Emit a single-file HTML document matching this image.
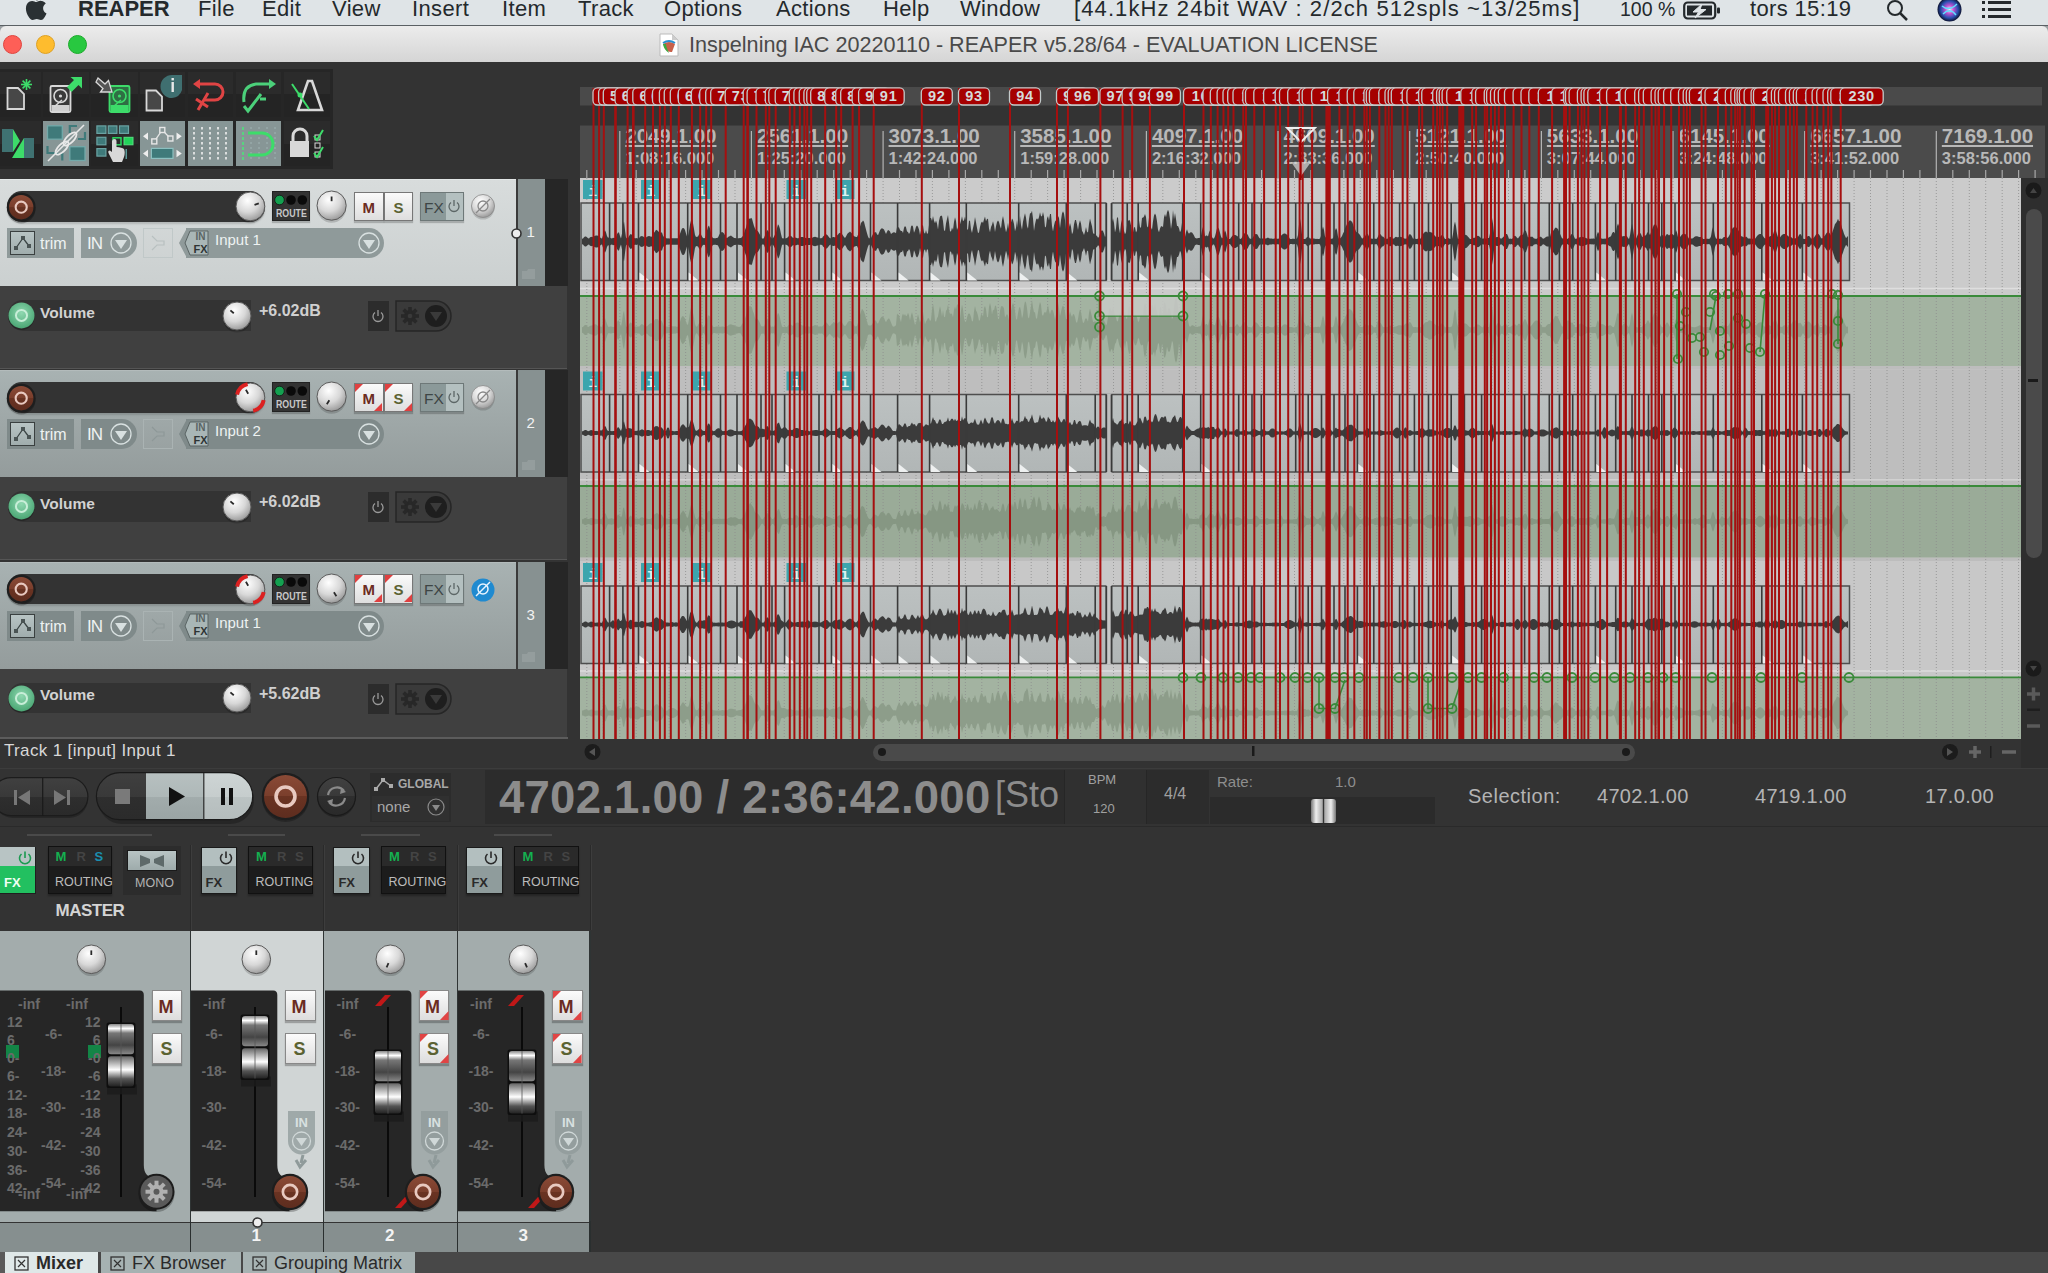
<!DOCTYPE html><html><head><meta charset="utf-8"><style>
*{margin:0;padding:0;box-sizing:border-box}
html,body{width:2048px;height:1273px;overflow:hidden;background:#333333;font-family:"Liberation Sans",sans-serif}
.a{position:absolute}
.t{position:absolute;white-space:nowrap;line-height:1}
</style></head><body><div class="a" style="left:0px;top:0px;width:2048px;height:26px;background:#dfe4e7;border-bottom:1px solid #5a6064"></div>
<svg class="a" style="left:22px;top:-5px" width="26" height="25" viewBox="0 0 20 20"><path d="M16.5 10.6c0-2.6 2.1-3.8 2.2-3.9-1.2-1.8-3.1-2-3.7-2-1.6-.2-3.1.9-3.9.9-.8 0-2-.9-3.3-.9-1.7 0-3.3 1-4.2 2.5-1.8 3.1-.5 7.7 1.3 10.2.9 1.2 1.9 2.6 3.2 2.6 1.3-.1 1.8-.8 3.3-.8s2 .8 3.3.8c1.4 0 2.3-1.3 3.1-2.5 1-1.4 1.4-2.800 1.4-2.9-.1 0-2.700-1-2.700-4z M14 3c.7-.9 1.2-2 1-3.200-1 .1-2.200.7-2.900 1.500-.6.700-1.200 1.900-1 3 1.100.1 2.200-.5 2.900-1.300z" fill="#2a3033"/></svg>
<div class="t" style="left:78px;top:-2px;font-size:22px;color:#24292c;font-weight:bold;letter-spacing:0px">REAPER</div>
<div class="t" style="left:198px;top:-2px;font-size:22px;color:#24292c;;letter-spacing:0.35px">File</div>
<div class="t" style="left:262px;top:-2px;font-size:22px;color:#24292c;;letter-spacing:0.35px">Edit</div>
<div class="t" style="left:332px;top:-2px;font-size:22px;color:#24292c;;letter-spacing:0.35px">View</div>
<div class="t" style="left:412px;top:-2px;font-size:22px;color:#24292c;;letter-spacing:0.35px">Insert</div>
<div class="t" style="left:502px;top:-2px;font-size:22px;color:#24292c;;letter-spacing:0.35px">Item</div>
<div class="t" style="left:578px;top:-2px;font-size:22px;color:#24292c;;letter-spacing:0.35px">Track</div>
<div class="t" style="left:664px;top:-2px;font-size:22px;color:#24292c;;letter-spacing:0.35px">Options</div>
<div class="t" style="left:776px;top:-2px;font-size:22px;color:#24292c;;letter-spacing:0.35px">Actions</div>
<div class="t" style="left:883px;top:-2px;font-size:22px;color:#24292c;;letter-spacing:0.35px">Help</div>
<div class="t" style="left:960px;top:-2px;font-size:22px;color:#24292c;;letter-spacing:0.35px">Window</div>
<div class="t" style="left:1074px;top:-2px;font-size:22px;color:#24292c;;letter-spacing:1.1px">[44.1kHz 24bit WAV : 2/2ch 512spls ~13/25ms]</div>
<div class="t" style="left:1620px;top:-2px;font-size:22px;color:#24292c;font-size:19.5px;top:0px;letter-spacing:0px">100 %</div>
<div class="t" style="left:1750px;top:-2px;font-size:22px;color:#24292c;;letter-spacing:0.35px">tors 15:19</div>
<svg class="a" style="left:1683px;top:1px" width="40" height="20"><rect x="1.2" y="1.5" width="31" height="16" rx="3.5" fill="none" stroke="#24292c" stroke-width="2.2"/><rect x="34" y="6.5" width="3" height="6" rx="1" fill="#24292c"/><rect x="4" y="4.5" width="25" height="10" fill="#24292c"/><path d="M19 3 L10 11 L15.5 11 L12 17 L23 8.5 L17 8.5 Z" fill="#dfe4e7" stroke="#dfe4e7" stroke-width="1"/></svg>
<svg class="a" style="left:1885px;top:0px" width="26" height="22"><circle cx="10" cy="8" r="7" fill="none" stroke="#24292c" stroke-width="2"/><line x1="15" y1="13" x2="22" y2="20" stroke="#24292c" stroke-width="2.5"/></svg>
<svg class="a" style="left:1937px;top:-2px" width="26" height="24"><defs><radialGradient id="sg" cx="0.5" cy="0.5" r="0.5"><stop offset="0" stop-color="#e8f0ff"/><stop offset="0.35" stop-color="#c050d0"/><stop offset="0.7" stop-color="#2a50b0"/><stop offset="1" stop-color="#0c1230"/></radialGradient></defs><circle cx="12.5" cy="11.5" r="12" fill="url(#sg)"/><path d="M5 8 Q12 14 20 6 M6 16 Q13 9 19 17" fill="none" stroke="#60e0ff" stroke-width="1.4"/></svg>
<svg class="a" style="left:1982px;top:0px" width="30" height="22"><g fill="#24292c"><rect x="0" y="1" width="3" height="3"/><rect x="6" y="1" width="23" height="3"/><rect x="0" y="8" width="3" height="3"/><rect x="6" y="8" width="23" height="3"/><rect x="0" y="15" width="3" height="3"/><rect x="6" y="15" width="23" height="3"/></g></svg>
<div class="a" style="left:0px;top:26px;width:2048px;height:6px;background:#9a9fa2"></div>
<div class="a" style="left:0px;top:26px;width:2048px;height:36px;background:linear-gradient(#ececec,#d5d5d5);border-top-left-radius:6px;border-top-right-radius:6px"></div>
<div class="a" style="left:3.1999999999999993px;top:35.2px;width:19px;height:19px;background:#fe5f57;border-radius:50%;border:0.5px solid #e0443e"></div>
<div class="a" style="left:35.5px;top:35.2px;width:19px;height:19px;background:#febc2e;border-radius:50%;border:0.5px solid #dea123"></div>
<div class="a" style="left:67.5px;top:35.2px;width:19px;height:19px;background:#28c840;border-radius:50%;border:0.5px solid #1aab29"></div>
<svg class="a" style="left:659px;top:33px" width="20" height="24"><path d="M1 1 H13 L19 7 V23 H1 Z" fill="#fff" stroke="#bbb"/><path d="M13 1 V7 H19" fill="#ccc"/><path d="M4 11 Q10 7 16 11 L13 19 Q7 20 4 11Z" fill="#c8604a"/><path d="M4 11 Q5 17 10 20 Q7 14 7 11Z" fill="#3aaa40"/><path d="M4 10 Q10 6 16 10" stroke="#2a90d0" stroke-width="2" fill="none"/></svg>
<div class="t" style="left:689px;top:34px;font-size:21.6px;color:#4a4a4a;">Inspelning IAC 20220110 - REAPER v5.28/64 - EVALUATION LICENSE</div>
<div class="a" style="left:0px;top:62px;width:2048px;height:706px;background:#333333"></div>
<div class="a" style="left:0px;top:69px;width:333px;height:100px;background:#262626"></div>
<div class="a" style="left:0px;top:71.6px;width:41px;height:45.7px;background:linear-gradient(#2b2b2b 0%,#2b2b2b 50%,#242424 50%,#242424 100%)"></div>
<div class="a" style="left:43px;top:71.6px;width:45.8px;height:45.7px;background:linear-gradient(#2b2b2b 0%,#2b2b2b 50%,#242424 50%,#242424 100%)"></div>
<div class="a" style="left:91px;top:71.6px;width:46.80000000000001px;height:45.7px;background:linear-gradient(#2b2b2b 0%,#2b2b2b 50%,#242424 50%,#242424 100%)"></div>
<div class="a" style="left:140px;top:71.6px;width:45px;height:45.7px;background:linear-gradient(#2b2b2b 0%,#2b2b2b 50%,#242424 50%,#242424 100%)"></div>
<div class="a" style="left:187.6px;top:71.6px;width:45.400000000000006px;height:45.7px;background:linear-gradient(#2b2b2b 0%,#2b2b2b 50%,#242424 50%,#242424 100%)"></div>
<div class="a" style="left:235.7px;top:71.6px;width:45.69999999999999px;height:45.7px;background:linear-gradient(#2b2b2b 0%,#2b2b2b 50%,#242424 50%,#242424 100%)"></div>
<div class="a" style="left:283.5px;top:71.6px;width:46.80000000000001px;height:45.7px;background:linear-gradient(#2b2b2b 0%,#2b2b2b 50%,#242424 50%,#242424 100%)"></div>
<div class="a" style="left:0px;top:120.6px;width:41px;height:45.599999999999994px;background:linear-gradient(#2b2b2b 0%,#2b2b2b 50%,#242424 50%,#242424 100%)"></div>
<div class="a" style="left:43px;top:120.6px;width:45.8px;height:45.599999999999994px;background:#879696"></div>
<div class="a" style="left:91px;top:120.6px;width:46.80000000000001px;height:45.599999999999994px;background:linear-gradient(#2b2b2b 0%,#2b2b2b 50%,#242424 50%,#242424 100%)"></div>
<div class="a" style="left:140px;top:120.6px;width:45px;height:45.599999999999994px;background:#879696"></div>
<div class="a" style="left:187.6px;top:120.6px;width:45.400000000000006px;height:45.599999999999994px;background:#879696"></div>
<div class="a" style="left:235.7px;top:120.6px;width:45.69999999999999px;height:45.599999999999994px;background:#879696"></div>
<div class="a" style="left:283.5px;top:120.6px;width:46.80000000000001px;height:45.599999999999994px;background:linear-gradient(#2b2b2b 0%,#2b2b2b 50%,#242424 50%,#242424 100%)"></div>
<svg class="a" style="left:0px;top:72px" width="41" height="46"><path d="M7.5 16 H18 L24 22 V37 H7.5 Z" fill="#474747" stroke="#d8d8d8" stroke-width="1.8"/><g stroke="#3ddc6a" stroke-width="1.6"><line x1="26.5" y1="7" x2="26.5" y2="18"/><line x1="21" y1="12.5" x2="32" y2="12.5"/><line x1="22.6" y1="8.6" x2="30.4" y2="16.4"/><line x1="30.4" y1="8.6" x2="22.6" y2="16.4"/></g></svg>
<svg class="a" style="left:43px;top:72px" width="46" height="46"><rect x="7.5" y="14" width="20" height="26" rx="1.5" fill="#3a3a3a" stroke="#d8d8d8" stroke-width="1.8"/><rect x="8.5" y="33" width="18" height="6" fill="#d0d0d0"/><circle cx="17.5" cy="24" r="6.5" fill="none" stroke="#d8d8d8" stroke-width="1.6"/><circle cx="17.5" cy="24" r="1.6" fill="#d8d8d8"/><line x1="11" y1="35" x2="19" y2="28" stroke="#d8d8d8" stroke-width="1.6"/><path d="M24 15 L31 8 L27.5 5 L39 5 L39 16.5 L35.5 13 L28.5 20 Z" fill="#3ddc6a"/></svg>
<svg class="a" style="left:91px;top:72px" width="47" height="46"><rect x="18.5" y="14" width="20" height="26" rx="1.5" fill="#2f6e44" stroke="#3ddc6a" stroke-width="1.8"/><rect x="19.5" y="33" width="18" height="6" fill="#3ddc6a"/><circle cx="28.5" cy="24" r="6.5" fill="none" stroke="#3ddc6a" stroke-width="1.6"/><circle cx="28.5" cy="24" r="1.6" fill="#3ddc6a"/><line x1="22" y1="35" x2="30" y2="28" stroke="#3ddc6a" stroke-width="1.6"/><path d="M7 6 L14 12 L17.5 8.5 L21 20 L9.5 20 L12 16.5 L5 10 Z" fill="#555" stroke="#d8d8d8" stroke-width="1.3"/></svg>
<svg class="a" style="left:140px;top:72px" width="46" height="46"><path d="M6.5 18.5 H16 L22 24.5 V38.5 H6.5 Z" fill="#474747" stroke="#d8d8d8" stroke-width="1.8"/><path d="M32 3 H42 V18 A11.5 11.5 0 0 1 32 26 A11.5 11.5 0 0 1 32 3 Z" fill="#3f6f70"/><rect x="31.5" y="10" width="2.4" height="10" fill="#e8e8e8"/><rect x="31.5" y="6" width="2.4" height="2.4" fill="#e8e8e8"/></svg>
<svg class="a" style="left:188px;top:72px" width="45" height="46"><path d="M9 12 H27 A8 8 0 0 1 27 28 H17" fill="none" stroke="#e04444" stroke-width="3"/><path d="M5 12 L12 7 L12 17 Z" fill="#e04444"/><path d="M10 38 L20 21 M8 27 L20 35" stroke="#e04444" stroke-width="3"/></svg>
<svg class="a" style="left:236px;top:72px" width="45" height="46"><path d="M8 30 Q6 14 20 12 H36" fill="none" stroke="#4bd07a" stroke-width="3"/><path d="M40 12 L33 7 L33 17 Z" fill="#4bd07a"/><path d="M8 34 L12 39 L25 22" fill="none" stroke="#4bd07a" stroke-width="3"/><line x1="24" y1="27" x2="30" y2="27" stroke="#4bd07a" stroke-width="3"/></svg>
<svg class="a" style="left:284px;top:72px" width="46" height="46"><path d="M14 38 L24 9 H28 L38 38 Z" fill="none" stroke="#d8d8d8" stroke-width="2.6"/><line x1="8" y1="12" x2="25" y2="37" stroke="#3ddc6a" stroke-width="2"/><circle cx="16" cy="23" r="2.5" fill="#3ddc6a"/></svg>
<svg class="a" style="left:0px;top:121px" width="41" height="46"><rect x="2" y="8" width="11" height="23" fill="#3f7272"/><path d="M13 8 L20 20 L13 31 Z" fill="#3ddc6a"/><rect x="24" y="17" width="10" height="20" fill="#3f7272"/><path d="M24 17 L24 37 L12 37 Z" fill="#3ddc6a"/></svg>
<svg class="a" style="left:43px;top:121px" width="46" height="46"><rect x="4.5" y="4.8" width="14.8" height="13.4" fill="#3f7a7a" stroke="#72a9a9" stroke-width="1.3"/><rect x="26.8" y="25.7" width="15.2" height="13.8" fill="#3f7a7a" stroke="#72a9a9" stroke-width="1.3"/><path d="M26.8 12 V5 H34 M42 11 V18 H35 M4.5 25 V32 H12 M19.3 39.5 V33 H13" fill="none" stroke="#3f7a7a" stroke-width="2.2"/><g fill="none" stroke="#e8e8e8" stroke-width="1.8"><ellipse cx="19" cy="27" rx="3.6" ry="8.5" transform="rotate(45 19 27)"/><ellipse cx="27" cy="18" rx="3.6" ry="8.5" transform="rotate(45 27 18)"/></g><line x1="5" y1="40" x2="41" y2="4" stroke="#e8e8e8" stroke-width="1.6"/></svg>
<svg class="a" style="left:91px;top:121px" width="47" height="46"><g fill="#3f7a7a" stroke="#6aa3a3" stroke-width="1.2"><rect x="5.9" y="4.9" width="9" height="7.5"/><rect x="17.3" y="4.9" width="8.6" height="7.5"/><rect x="28.5" y="4.9" width="9" height="7.5"/><rect x="5.9" y="16.3" width="9" height="7.5"/><rect x="5.9" y="27.6" width="9" height="7.5"/></g><rect x="22" y="16.8" width="8" height="7" fill="none" stroke="#2ad860" stroke-width="1.5"/><rect x="33" y="16.3" width="9" height="7.5" fill="#22d45a" stroke="#55e080" stroke-width="1"/><path d="M22 41 L17.5 32 Q16.5 29.5 19 29.5 L21 31 L21 20 Q21.5 18 23.5 18 Q25.5 18 25.5 20 L25.5 26 Q31 26.5 33 28 Q34.5 31 33 36 L31 41 Z" fill="#d8d8d8"/><rect x="34.5" y="28" width="1.5" height="10" fill="#5a9a9a"/></svg>
<svg class="a" style="left:140px;top:121px" width="46" height="46"><path d="M14.3 20.4 L22.3 9 L30.4 17.5" fill="none" stroke="#e6e6e6" stroke-width="1.3"/><g fill="#879696" stroke="#e6e6e6" stroke-width="1.4"><rect x="11.8" y="17.9" width="5" height="5"/><rect x="19.8" y="6.5" width="5" height="5"/><rect x="27.9" y="15" width="5" height="5"/></g><path d="M3 15.3 L8 11.5 L8 19Z M41.8 15.3 L36.5 11.5 L36.5 19Z M3 32.5 L8 28.8 L8 36.3Z M41.8 32.5 L36.5 28.8 L36.5 36.3Z" fill="#eeeeee"/><rect x="11.4" y="27.4" width="21.6" height="10" fill="#3f7a7a" stroke="#8cc0c0" stroke-width="1.2"/></svg>
<svg class="a" style="left:188px;top:121px" width="45" height="46"><g stroke="#f0f0f0" stroke-width="1.6" stroke-dasharray="2.5 2.5"><line x1="6" y1="6" x2="6" y2="39"/><line x1="14" y1="6" x2="14" y2="39"/><line x1="22" y1="6" x2="22" y2="39"/><line x1="30" y1="6" x2="30" y2="39"/><line x1="38" y1="6" x2="38" y2="39"/></g></svg>
<svg class="a" style="left:236px;top:121px" width="45" height="46"><line x1="7" y1="6" x2="7" y2="40" stroke="#4be87a" stroke-width="1.5" stroke-dasharray="3 2"/><g stroke="#9fb3b3" stroke-width="1" stroke-dasharray="2 3"><line x1="15" y1="6" x2="15" y2="40"/><line x1="23" y1="6" x2="23" y2="40"/><line x1="31" y1="6" x2="31" y2="40"/><line x1="39" y1="6" x2="39" y2="40"/></g><path d="M12 12 H26 A10 10 0 0 1 26 34 H12" fill="none" stroke="#3ddc6a" stroke-width="3"/></svg>
<svg class="a" style="left:284px;top:121px" width="46" height="46"><path d="M9 20 V15 A7 7 0 0 1 23 15 V20" fill="none" stroke="#d8d8d8" stroke-width="3"/><rect x="6" y="20" width="19" height="16" fill="#d8d8d8"/><g fill="none" stroke="#d8d8d8" stroke-width="1"><rect x="31" y="14" width="5" height="5"/><rect x="31" y="22" width="5" height="5"/><rect x="31" y="31" width="5" height="5"/></g><path d="M30 15 L33 19 L39 9 M30 32 L33 36 L39 26" fill="none" stroke="#3ddc6a" stroke-width="2"/></svg>
<svg width="0" height="0" style="position:absolute"><defs><radialGradient id="kg" cx="0.4" cy="0.3" r="0.8"><stop offset="0" stop-color="#ffffff"/><stop offset="0.5" stop-color="#d8d8d8"/><stop offset="1" stop-color="#8a8a8a"/></radialGradient><linearGradient id="rg" x1="0" y1="0" x2="0" y2="1"><stop offset="0" stop-color="#8a4a36"/><stop offset="0.5" stop-color="#7a3e2c"/><stop offset="0.5" stop-color="#6a3322"/><stop offset="1" stop-color="#5e2d1f"/></linearGradient><radialGradient id="gg" cx="0.5" cy="0.4" r="0.7"><stop offset="0" stop-color="#8fd8b0"/><stop offset="1" stop-color="#3f9e6a"/></radialGradient></defs></svg>
<div class="a" style="left:0px;top:178px;width:568px;height:562px;background:#333"></div>
<div class="a" style="left:0px;top:179px;width:516px;height:107px;background:linear-gradient(#d8dcdc,#cbd0d0);border-top:1px solid #e2e6e6"></div>
<div class="a" style="left:516px;top:179px;width:29px;height:107px;background:#879191;border-left:2px solid #3a3a3a"></div>
<div class="t" style="left:526.5px;top:224px;font-size:15px;color:#f2f2f2;">1</div>
<svg class="a" style="left:521px;top:268px" width="16" height="12"><path d="M1 3 H6 L7 1 H14 V11 H1Z" fill="#9aa3a3" opacity="0.7"/></svg>
<svg class="a" style="left:510px;top:227px" width="13" height="13"><circle cx="6.5" cy="6.5" r="4.5" fill="#eee" stroke="#333" stroke-width="1.6"/></svg>
<div class="a" style="left:545px;top:179px;width:23px;height:107px;background:#262626"></div>
<div class="a" style="left:7px;top:191px;width:258px;height:30.5px;background:#333;border-radius:15px;box-shadow:0 2px 2px rgba(0,0,0,0.15)"></div>
<svg class="a" style="left:6.0px;top:191.5px;overflow:visible" width="30.4" height="32.4"><circle cx="15.2" cy="17.2" r="14.2" fill="rgba(0,0,0,0.25)"/><circle cx="15.2" cy="15.2" r="14.399999999999999" fill="#1e1e1e"/><circle cx="15.2" cy="15.2" r="12.2" fill="url(#rg)"/><circle cx="15.2" cy="15.2" r="5.544" fill="none" stroke="#e8c9c0" stroke-width="2.1"/></svg>
<svg class="a" style="left:229.6px;top:186.29999999999998px;overflow:visible" width="40.8" height="40.8"><circle cx="20.4" cy="22.9" r="14.4" fill="rgba(0,0,0,0.16)"/><circle cx="20.4" cy="20.4" r="14.4" fill="url(#kg)" stroke="#5a5a5a" stroke-width="1"/><line x1="24.5" y1="18.9" x2="28.8" y2="17.3" stroke="#2a2a2a" stroke-width="1.8"/></svg>
<div class="a" style="left:272px;top:191.4px;width:38px;height:30px;background:#333;border:1px solid #222;box-shadow:0 2px 1px rgba(0,0,0,0.2)"></div>
<svg class="a" style="left:274px;top:193.5px" width="34" height="12"><circle cx="5.5" cy="6" r="4.8" fill="#14a050" stroke="#111" stroke-width="0.8"/><circle cx="17" cy="6" r="4.8" fill="#0a0a0a"/><circle cx="28.3" cy="6" r="4.8" fill="#0a0a0a"/></svg>
<div class="t" style="left:275.5px;top:208px;font-size:11px;color:#c8c8c8;font-weight:bold;transform:scaleX(0.8);transform-origin:0 0">ROUTE</div>
<svg class="a" style="left:311.4px;top:185.4px;overflow:visible" width="41.2" height="41.2"><circle cx="20.6" cy="23.1" r="14.6" fill="rgba(0,0,0,0.16)"/><circle cx="20.6" cy="20.6" r="14.6" fill="url(#kg)" stroke="#5a5a5a" stroke-width="1"/><line x1="20.6" y1="16.2" x2="20.6" y2="11.5" stroke="#2a2a2a" stroke-width="1.8"/></svg>
<div class="a" style="left:354.0px;top:191.7px;width:29.5px;height:29.7px;background:linear-gradient(#fafafa,#dedede);border:1px solid #777;box-shadow:0 2px 1px rgba(0,0,0,0.2)"></div>
<div class="t" style="left:362.5px;top:199.5px;font-size:15px;color:#6b2c22;font-weight:bold">M</div>
<div class="a" style="left:383.5px;top:191.7px;width:29.5px;height:29.7px;background:linear-gradient(#fafafa,#dedede);border:1px solid #777;box-shadow:0 2px 1px rgba(0,0,0,0.2)"></div>
<div class="t" style="left:393.5px;top:199.5px;font-size:15px;color:#5b6232;font-weight:bold">S</div>
<div class="a" style="left:420px;top:191.7px;width:44px;height:29.7px;background:#b4c0c0;border:1px solid #6e7878;box-shadow:0 2px 1px rgba(0,0,0,0.2)"></div>
<div class="a" style="left:421px;top:192.7px;width:25px;height:27.7px;background:#8b9999"></div>
<div class="t" style="left:424px;top:199.5px;font-size:15.5px;color:#3e4545;">FX</div>
<svg class="a" style="left:447px;top:199px" width="14" height="14"><path d="M4 3.5 A5 5 0 1 0 10 3.5" fill="none" stroke="#5c6666" stroke-width="1.3"/><line x1="7" y1="1" x2="7" y2="7" stroke="#5c6666" stroke-width="1.3"/></svg>
<svg class="a" style="left:470px;top:193px" width="26" height="28"><circle cx="13" cy="15" r="11.5" fill="rgba(0,0,0,0.15)"/><circle cx="13" cy="13" r="11.5" fill="url(#kg)" stroke="#888" stroke-width="0.8"/><circle cx="13" cy="13" r="5" fill="none" stroke="#888" stroke-width="1.3"/><line x1="6" y1="20" x2="20" y2="6" stroke="#888" stroke-width="1.3"/></svg>
<div class="a" style="left:6.6px;top:228.3px;width:67px;height:30px;background:#8f9a9a"></div>
<div class="a" style="left:10px;top:231.3px;width:25px;height:24px;background:linear-gradient(#b8c4c4,#a0adad);border:1.5px solid #3a4040"></div>
<svg class="a" style="left:12px;top:233.3px" width="21" height="20"><path d="M4 15 L11 5 L17 13" fill="none" stroke="#3a4444" stroke-width="1.3"/><rect x="2" y="13" width="4" height="4" fill="#4a5454"/><rect x="9" y="3" width="4" height="4" fill="#4a5454"/><rect x="15" y="11" width="4" height="4" fill="#4a5454"/></svg>
<div class="t" style="left:40px;top:236.3px;font-size:16px;color:#eef2f2;">trim</div>
<div class="a" style="left:80.7px;top:228.3px;width:56px;height:30px;background:#8f9a9a;border-radius:0 15px 15px 0"></div>
<div class="t" style="left:87px;top:235.3px;font-size:17px;color:#eef2f2;letter-spacing:-1px">IN</div>
<svg class="a" style="left:109px;top:232.3px" width="24" height="24"><circle cx="12" cy="11" r="10" fill="none" stroke="#d8e0e0" stroke-width="1.3"/><path d="M6 8 H18 L12 17Z" fill="#d8e0e0"/></svg>
<div class="a" style="left:143.3px;top:228.3px;width:30px;height:30px;border:1px solid #c0c8c8"></div>
<svg class="a" style="left:146px;top:231.3px" width="24" height="24"><path d="M6 5 L11 10 H18 V14 H11 L6 19" fill="none" stroke="#b8c0c0" stroke-width="1.2"/></svg>
<div class="a" style="left:186px;top:228.3px;width:198px;height:30px;background:#8f9a9a;border-radius:0 15px 15px 0"></div>
<svg class="a" style="left:178px;top:228.3px" width="36" height="30"><path d="M9 0 H36 V30 H9 L1 15Z" fill="#8f9a9a"/><path d="M12 3 H30 V27 H12 L7 15Z" fill="#a9b6b6" stroke="#5a6464" stroke-width="1"/></svg>
<div class="t" style="left:195.5px;top:231.8px;font-size:10px;color:#5a6464;font-weight:bold">IN</div>
<div class="t" style="left:193.5px;top:243.8px;font-size:11px;color:#2e3434;font-weight:bold">FX</div>
<div class="t" style="left:215px;top:232.3px;font-size:15px;color:#eef2f2;">Input 1</div>
<svg class="a" style="left:357px;top:232.3px" width="24" height="24"><circle cx="12" cy="11" r="10" fill="none" stroke="#d8e0e0" stroke-width="1.3"/><path d="M6 8 H18 L12 17Z" fill="#d8e0e0"/></svg>
<div class="a" style="left:0px;top:286px;width:567px;height:82px;background:#404040"></div>
<div class="a" style="left:567px;top:286px;width:13px;height:82px;background:#333"></div>
<div class="a" style="left:8px;top:300.4px;width:243px;height:30.5px;background:#333;border-radius:15px 0 0 15px"></div>
<svg class="a" style="left:7px;top:301px;overflow:visible" width="30" height="30"><circle cx="14.5" cy="16" r="13" fill="rgba(0,0,0,0.25)"/><circle cx="14.5" cy="14.4" r="13" fill="url(#gg)"/><circle cx="14.5" cy="14.4" r="5.5" fill="none" stroke="#c8eed8" stroke-width="2"/></svg>
<div class="t" style="left:40px;top:304.5px;font-size:15.5px;color:#d2d2d2;font-weight:bold">Volume</div>
<svg class="a" style="left:217px;top:295.5px;overflow:visible" width="40" height="40"><circle cx="20" cy="22.5" r="14" fill="rgba(0,0,0,0.16)"/><circle cx="20" cy="20" r="14" fill="url(#kg)" stroke="#5a5a5a" stroke-width="1"/><line x1="16.8" y1="17.3" x2="13.4" y2="14.4" stroke="#2a2a2a" stroke-width="1.8"/></svg>
<div class="t" style="left:259px;top:303px;font-size:16px;color:#d0d0d0;font-weight:bold">+6.02dB</div>
<div class="a" style="left:368px;top:301px;width:21px;height:30px;background:#2c2c2c"></div>
<svg class="a" style="left:371px;top:309px" width="14" height="14"><path d="M4 3.5 A5 5 0 1 0 10 3.5" fill="none" stroke="#9a9a9a" stroke-width="1.3"/><line x1="7" y1="1" x2="7" y2="7" stroke="#9a9a9a" stroke-width="1.3"/></svg>
<svg class="a" style="left:395px;top:300px" width="58" height="32"><path d="M1 1 H41 A15 15 0 0 1 41 31 H1Z" fill="#3a3a3a" stroke="#262626" stroke-width="1.5"/><g transform="translate(15,16)" fill="#282828"><circle r="6"/><rect x="-1.8" y="-9" width="3.6" height="5" transform="rotate(0)"/><rect x="-1.8" y="-9" width="3.6" height="5" transform="rotate(45)"/><rect x="-1.8" y="-9" width="3.6" height="5" transform="rotate(90)"/><rect x="-1.8" y="-9" width="3.6" height="5" transform="rotate(135)"/><rect x="-1.8" y="-9" width="3.6" height="5" transform="rotate(180)"/><rect x="-1.8" y="-9" width="3.6" height="5" transform="rotate(225)"/><rect x="-1.8" y="-9" width="3.6" height="5" transform="rotate(270)"/><rect x="-1.8" y="-9" width="3.6" height="5" transform="rotate(315)"/><circle r="2.3" fill="#3a3a3a"/></g><circle cx="41" cy="16" r="11" fill="#1e1e1e"/><path d="M35 12 H47 L41 21Z" fill="#3a3a3a"/></svg>
<div class="a" style="left:0px;top:367.5px;width:567px;height:1.5px;background:#555"></div>
<div class="a" style="left:0px;top:370px;width:516px;height:107px;background:linear-gradient(#a8b2b2,#949c9c);border-top:1px solid #b3bbbb"></div>
<div class="a" style="left:516px;top:370px;width:29px;height:107px;background:#879191;border-left:2px solid #3a3a3a"></div>
<div class="t" style="left:526.5px;top:415px;font-size:15px;color:#f2f2f2;">2</div>
<svg class="a" style="left:521px;top:459px" width="16" height="12"><path d="M1 3 H6 L7 1 H14 V11 H1Z" fill="#9aa3a3" opacity="0.7"/></svg>
<div class="a" style="left:545px;top:370px;width:23px;height:107px;background:#262626"></div>
<div class="a" style="left:7px;top:382px;width:258px;height:30.5px;background:#333;border-radius:15px;box-shadow:0 2px 2px rgba(0,0,0,0.15)"></div>
<svg class="a" style="left:6.0px;top:382.5px;overflow:visible" width="30.4" height="32.4"><circle cx="15.2" cy="17.2" r="14.2" fill="rgba(0,0,0,0.25)"/><circle cx="15.2" cy="15.2" r="14.399999999999999" fill="#1e1e1e"/><circle cx="15.2" cy="15.2" r="12.2" fill="url(#rg)"/><circle cx="15.2" cy="15.2" r="5.544" fill="none" stroke="#e8c9c0" stroke-width="2.1"/></svg>
<svg class="a" style="left:229.6px;top:377.3px;overflow:visible" width="40.8" height="40.8"><circle cx="20.4" cy="22.9" r="14.4" fill="rgba(0,0,0,0.16)"/><circle cx="20.4" cy="20.4" r="14.4" fill="url(#kg)" stroke="#5a5a5a" stroke-width="1"/><path d="M7.1,17.6 A13.6,13.6 0 0 1 17.6,7.1 M33.7,23.2 A13.6,13.6 0 0 1 23.2,33.7" fill="none" stroke="#dc2020" stroke-width="4"/><line x1="18.2" y1="16.7" x2="15.9" y2="12.7" stroke="#2a2a2a" stroke-width="1.8"/></svg>
<div class="a" style="left:272px;top:382.4px;width:38px;height:30px;background:#333;border:1px solid #222;box-shadow:0 2px 1px rgba(0,0,0,0.2)"></div>
<svg class="a" style="left:274px;top:384.5px" width="34" height="12"><circle cx="5.5" cy="6" r="4.8" fill="#14a050" stroke="#111" stroke-width="0.8"/><circle cx="17" cy="6" r="4.8" fill="#0a0a0a"/><circle cx="28.3" cy="6" r="4.8" fill="#0a0a0a"/></svg>
<div class="t" style="left:275.5px;top:399px;font-size:11px;color:#c8c8c8;font-weight:bold;transform:scaleX(0.8);transform-origin:0 0">ROUTE</div>
<svg class="a" style="left:311.4px;top:376.4px;overflow:visible" width="41.2" height="41.2"><circle cx="20.6" cy="23.1" r="14.6" fill="rgba(0,0,0,0.16)"/><circle cx="20.6" cy="20.6" r="14.6" fill="url(#kg)" stroke="#5a5a5a" stroke-width="1"/><line x1="18.3" y1="24.3" x2="15.8" y2="28.3" stroke="#2a2a2a" stroke-width="1.8"/></svg>
<div class="a" style="left:354.0px;top:382.7px;width:29.5px;height:29.7px;background:linear-gradient(#fafafa,#dedede);border:1px solid #777;box-shadow:0 2px 1px rgba(0,0,0,0.2)"></div>
<svg class="a" style="left:355.0px;top:383.7px" width="28" height="28"><path d="M0 0 H8 L0 8Z M27 19 V27 H19Z" fill="#e04040"/></svg>
<div class="t" style="left:362.5px;top:390.5px;font-size:15px;color:#6b2c22;font-weight:bold">M</div>
<div class="a" style="left:383.5px;top:382.7px;width:29.5px;height:29.7px;background:linear-gradient(#fafafa,#dedede);border:1px solid #777;box-shadow:0 2px 1px rgba(0,0,0,0.2)"></div>
<svg class="a" style="left:384.5px;top:383.7px" width="28" height="28"><path d="M0 0 H8 L0 8Z M27 19 V27 H19Z" fill="#e04040"/></svg>
<div class="t" style="left:393.5px;top:390.5px;font-size:15px;color:#5b6232;font-weight:bold">S</div>
<div class="a" style="left:420px;top:382.7px;width:44px;height:29.7px;background:#b4c0c0;border:1px solid #6e7878;box-shadow:0 2px 1px rgba(0,0,0,0.2)"></div>
<div class="a" style="left:421px;top:383.7px;width:25px;height:27.7px;background:#8b9999"></div>
<div class="t" style="left:424px;top:390.5px;font-size:15.5px;color:#3e4545;">FX</div>
<svg class="a" style="left:447px;top:390px" width="14" height="14"><path d="M4 3.5 A5 5 0 1 0 10 3.5" fill="none" stroke="#5c6666" stroke-width="1.3"/><line x1="7" y1="1" x2="7" y2="7" stroke="#5c6666" stroke-width="1.3"/></svg>
<svg class="a" style="left:470px;top:384px" width="26" height="28"><circle cx="13" cy="15" r="11.5" fill="rgba(0,0,0,0.15)"/><circle cx="13" cy="13" r="11.5" fill="url(#kg)" stroke="#888" stroke-width="0.8"/><circle cx="13" cy="13" r="5" fill="none" stroke="#888" stroke-width="1.3"/><line x1="6" y1="20" x2="20" y2="6" stroke="#888" stroke-width="1.3"/></svg>
<div class="a" style="left:6.6px;top:419.3px;width:67px;height:30px;background:#7f8a8a"></div>
<div class="a" style="left:10px;top:422.3px;width:25px;height:24px;background:linear-gradient(#b8c4c4,#a0adad);border:1.5px solid #3a4040"></div>
<svg class="a" style="left:12px;top:424.3px" width="21" height="20"><path d="M4 15 L11 5 L17 13" fill="none" stroke="#3a4444" stroke-width="1.3"/><rect x="2" y="13" width="4" height="4" fill="#4a5454"/><rect x="9" y="3" width="4" height="4" fill="#4a5454"/><rect x="15" y="11" width="4" height="4" fill="#4a5454"/></svg>
<div class="t" style="left:40px;top:427.3px;font-size:16px;color:#eef2f2;">trim</div>
<div class="a" style="left:80.7px;top:419.3px;width:56px;height:30px;background:#7f8a8a;border-radius:0 15px 15px 0"></div>
<div class="t" style="left:87px;top:426.3px;font-size:17px;color:#eef2f2;letter-spacing:-1px">IN</div>
<svg class="a" style="left:109px;top:423.3px" width="24" height="24"><circle cx="12" cy="11" r="10" fill="none" stroke="#d8e0e0" stroke-width="1.3"/><path d="M6 8 H18 L12 17Z" fill="#d8e0e0"/></svg>
<div class="a" style="left:143.3px;top:419.3px;width:30px;height:30px;border:1px solid #aab3b3"></div>
<svg class="a" style="left:146px;top:422.3px" width="24" height="24"><path d="M6 5 L11 10 H18 V14 H11 L6 19" fill="none" stroke="#8e9898" stroke-width="1.2"/></svg>
<div class="a" style="left:186px;top:419.3px;width:198px;height:30px;background:#7f8a8a;border-radius:0 15px 15px 0"></div>
<svg class="a" style="left:178px;top:419.3px" width="36" height="30"><path d="M9 0 H36 V30 H9 L1 15Z" fill="#7f8a8a"/><path d="M12 3 H30 V27 H12 L7 15Z" fill="#a9b6b6" stroke="#5a6464" stroke-width="1"/></svg>
<div class="t" style="left:195.5px;top:422.8px;font-size:10px;color:#5a6464;font-weight:bold">IN</div>
<div class="t" style="left:193.5px;top:434.8px;font-size:11px;color:#2e3434;font-weight:bold">FX</div>
<div class="t" style="left:215px;top:423.3px;font-size:15px;color:#eef2f2;">Input 2</div>
<svg class="a" style="left:357px;top:423.3px" width="24" height="24"><circle cx="12" cy="11" r="10" fill="none" stroke="#d8e0e0" stroke-width="1.3"/><path d="M6 8 H18 L12 17Z" fill="#d8e0e0"/></svg>
<div class="a" style="left:0px;top:477px;width:567px;height:82px;background:#404040"></div>
<div class="a" style="left:567px;top:477px;width:13px;height:82px;background:#333"></div>
<div class="a" style="left:8px;top:491.4px;width:243px;height:30.5px;background:#333;border-radius:15px 0 0 15px"></div>
<svg class="a" style="left:7px;top:492px;overflow:visible" width="30" height="30"><circle cx="14.5" cy="16" r="13" fill="rgba(0,0,0,0.25)"/><circle cx="14.5" cy="14.4" r="13" fill="url(#gg)"/><circle cx="14.5" cy="14.4" r="5.5" fill="none" stroke="#c8eed8" stroke-width="2"/></svg>
<div class="t" style="left:40px;top:495.5px;font-size:15.5px;color:#d2d2d2;font-weight:bold">Volume</div>
<svg class="a" style="left:217px;top:486.5px;overflow:visible" width="40" height="40"><circle cx="20" cy="22.5" r="14" fill="rgba(0,0,0,0.16)"/><circle cx="20" cy="20" r="14" fill="url(#kg)" stroke="#5a5a5a" stroke-width="1"/><line x1="16.8" y1="17.3" x2="13.4" y2="14.4" stroke="#2a2a2a" stroke-width="1.8"/></svg>
<div class="t" style="left:259px;top:494px;font-size:16px;color:#d0d0d0;font-weight:bold">+6.02dB</div>
<div class="a" style="left:368px;top:492px;width:21px;height:30px;background:#2c2c2c"></div>
<svg class="a" style="left:371px;top:500px" width="14" height="14"><path d="M4 3.5 A5 5 0 1 0 10 3.5" fill="none" stroke="#9a9a9a" stroke-width="1.3"/><line x1="7" y1="1" x2="7" y2="7" stroke="#9a9a9a" stroke-width="1.3"/></svg>
<svg class="a" style="left:395px;top:491px" width="58" height="32"><path d="M1 1 H41 A15 15 0 0 1 41 31 H1Z" fill="#3a3a3a" stroke="#262626" stroke-width="1.5"/><g transform="translate(15,16)" fill="#282828"><circle r="6"/><rect x="-1.8" y="-9" width="3.6" height="5" transform="rotate(0)"/><rect x="-1.8" y="-9" width="3.6" height="5" transform="rotate(45)"/><rect x="-1.8" y="-9" width="3.6" height="5" transform="rotate(90)"/><rect x="-1.8" y="-9" width="3.6" height="5" transform="rotate(135)"/><rect x="-1.8" y="-9" width="3.6" height="5" transform="rotate(180)"/><rect x="-1.8" y="-9" width="3.6" height="5" transform="rotate(225)"/><rect x="-1.8" y="-9" width="3.6" height="5" transform="rotate(270)"/><rect x="-1.8" y="-9" width="3.6" height="5" transform="rotate(315)"/><circle r="2.3" fill="#3a3a3a"/></g><circle cx="41" cy="16" r="11" fill="#1e1e1e"/><path d="M35 12 H47 L41 21Z" fill="#3a3a3a"/></svg>
<div class="a" style="left:0px;top:558.5px;width:567px;height:1.5px;background:#555"></div>
<div class="a" style="left:0px;top:561.5px;width:516px;height:107px;background:linear-gradient(#a8b2b2,#949c9c);border-top:1px solid #b3bbbb"></div>
<div class="a" style="left:516px;top:561.5px;width:29px;height:107px;background:#879191;border-left:2px solid #3a3a3a"></div>
<div class="t" style="left:526.5px;top:606.5px;font-size:15px;color:#f2f2f2;">3</div>
<svg class="a" style="left:521px;top:650.5px" width="16" height="12"><path d="M1 3 H6 L7 1 H14 V11 H1Z" fill="#9aa3a3" opacity="0.7"/></svg>
<div class="a" style="left:545px;top:561.5px;width:23px;height:107px;background:#262626"></div>
<div class="a" style="left:7px;top:573.5px;width:258px;height:30.5px;background:#333;border-radius:15px;box-shadow:0 2px 2px rgba(0,0,0,0.15)"></div>
<svg class="a" style="left:6.0px;top:574.0px;overflow:visible" width="30.4" height="32.4"><circle cx="15.2" cy="17.2" r="14.2" fill="rgba(0,0,0,0.25)"/><circle cx="15.2" cy="15.2" r="14.399999999999999" fill="#1e1e1e"/><circle cx="15.2" cy="15.2" r="12.2" fill="url(#rg)"/><circle cx="15.2" cy="15.2" r="5.544" fill="none" stroke="#e8c9c0" stroke-width="2.1"/></svg>
<svg class="a" style="left:229.6px;top:568.8000000000001px;overflow:visible" width="40.8" height="40.8"><circle cx="20.4" cy="22.9" r="14.4" fill="rgba(0,0,0,0.16)"/><circle cx="20.4" cy="20.4" r="14.4" fill="url(#kg)" stroke="#5a5a5a" stroke-width="1"/><path d="M7.1,17.6 A13.6,13.6 0 0 1 17.6,7.1 M33.7,23.2 A13.6,13.6 0 0 1 23.2,33.7" fill="none" stroke="#dc2020" stroke-width="4"/><line x1="18.2" y1="16.7" x2="15.9" y2="12.7" stroke="#2a2a2a" stroke-width="1.8"/></svg>
<div class="a" style="left:272px;top:573.9px;width:38px;height:30px;background:#333;border:1px solid #222;box-shadow:0 2px 1px rgba(0,0,0,0.2)"></div>
<svg class="a" style="left:274px;top:576.0px" width="34" height="12"><circle cx="5.5" cy="6" r="4.8" fill="#14a050" stroke="#111" stroke-width="0.8"/><circle cx="17" cy="6" r="4.8" fill="#0a0a0a"/><circle cx="28.3" cy="6" r="4.8" fill="#0a0a0a"/></svg>
<div class="t" style="left:275.5px;top:590.5px;font-size:11px;color:#c8c8c8;font-weight:bold;transform:scaleX(0.8);transform-origin:0 0">ROUTE</div>
<svg class="a" style="left:311.4px;top:567.9px;overflow:visible" width="41.2" height="41.2"><circle cx="20.6" cy="23.1" r="14.6" fill="rgba(0,0,0,0.16)"/><circle cx="20.6" cy="20.6" r="14.6" fill="url(#kg)" stroke="#5a5a5a" stroke-width="1"/><line x1="22.9" y1="24.3" x2="25.4" y2="28.3" stroke="#2a2a2a" stroke-width="1.8"/></svg>
<div class="a" style="left:354.0px;top:574.2px;width:29.5px;height:29.7px;background:linear-gradient(#fafafa,#dedede);border:1px solid #777;box-shadow:0 2px 1px rgba(0,0,0,0.2)"></div>
<svg class="a" style="left:355.0px;top:575.2px" width="28" height="28"><path d="M0 0 H8 L0 8Z M27 19 V27 H19Z" fill="#e04040"/></svg>
<div class="t" style="left:362.5px;top:582.0px;font-size:15px;color:#6b2c22;font-weight:bold">M</div>
<div class="a" style="left:383.5px;top:574.2px;width:29.5px;height:29.7px;background:linear-gradient(#fafafa,#dedede);border:1px solid #777;box-shadow:0 2px 1px rgba(0,0,0,0.2)"></div>
<svg class="a" style="left:384.5px;top:575.2px" width="28" height="28"><path d="M0 0 H8 L0 8Z M27 19 V27 H19Z" fill="#e04040"/></svg>
<div class="t" style="left:393.5px;top:582.0px;font-size:15px;color:#5b6232;font-weight:bold">S</div>
<div class="a" style="left:420px;top:574.2px;width:44px;height:29.7px;background:#b4c0c0;border:1px solid #6e7878;box-shadow:0 2px 1px rgba(0,0,0,0.2)"></div>
<div class="a" style="left:421px;top:575.2px;width:25px;height:27.7px;background:#8b9999"></div>
<div class="t" style="left:424px;top:582.0px;font-size:15.5px;color:#3e4545;">FX</div>
<svg class="a" style="left:447px;top:581.5px" width="14" height="14"><path d="M4 3.5 A5 5 0 1 0 10 3.5" fill="none" stroke="#5c6666" stroke-width="1.3"/><line x1="7" y1="1" x2="7" y2="7" stroke="#5c6666" stroke-width="1.3"/></svg>
<svg class="a" style="left:470px;top:575.5px" width="26" height="28"><circle cx="13" cy="14" r="11.5" fill="#1f8ad0"/><circle cx="13" cy="13" r="5" fill="none" stroke="#e8f4ff" stroke-width="1.5"/><line x1="6" y1="20" x2="20" y2="6" stroke="#e8f4ff" stroke-width="1.5"/></svg>
<div class="a" style="left:6.6px;top:610.8px;width:67px;height:30px;background:#7f8a8a"></div>
<div class="a" style="left:10px;top:613.8px;width:25px;height:24px;background:linear-gradient(#b8c4c4,#a0adad);border:1.5px solid #3a4040"></div>
<svg class="a" style="left:12px;top:615.8px" width="21" height="20"><path d="M4 15 L11 5 L17 13" fill="none" stroke="#3a4444" stroke-width="1.3"/><rect x="2" y="13" width="4" height="4" fill="#4a5454"/><rect x="9" y="3" width="4" height="4" fill="#4a5454"/><rect x="15" y="11" width="4" height="4" fill="#4a5454"/></svg>
<div class="t" style="left:40px;top:618.8px;font-size:16px;color:#eef2f2;">trim</div>
<div class="a" style="left:80.7px;top:610.8px;width:56px;height:30px;background:#7f8a8a;border-radius:0 15px 15px 0"></div>
<div class="t" style="left:87px;top:617.8px;font-size:17px;color:#eef2f2;letter-spacing:-1px">IN</div>
<svg class="a" style="left:109px;top:614.8px" width="24" height="24"><circle cx="12" cy="11" r="10" fill="none" stroke="#d8e0e0" stroke-width="1.3"/><path d="M6 8 H18 L12 17Z" fill="#d8e0e0"/></svg>
<div class="a" style="left:143.3px;top:610.8px;width:30px;height:30px;border:1px solid #aab3b3"></div>
<svg class="a" style="left:146px;top:613.8px" width="24" height="24"><path d="M6 5 L11 10 H18 V14 H11 L6 19" fill="none" stroke="#8e9898" stroke-width="1.2"/></svg>
<div class="a" style="left:186px;top:610.8px;width:198px;height:30px;background:#7f8a8a;border-radius:0 15px 15px 0"></div>
<svg class="a" style="left:178px;top:610.8px" width="36" height="30"><path d="M9 0 H36 V30 H9 L1 15Z" fill="#7f8a8a"/><path d="M12 3 H30 V27 H12 L7 15Z" fill="#a9b6b6" stroke="#5a6464" stroke-width="1"/></svg>
<div class="t" style="left:195.5px;top:614.3px;font-size:10px;color:#5a6464;font-weight:bold">IN</div>
<div class="t" style="left:193.5px;top:626.3px;font-size:11px;color:#2e3434;font-weight:bold">FX</div>
<div class="t" style="left:215px;top:614.8px;font-size:15px;color:#eef2f2;">Input 1</div>
<svg class="a" style="left:357px;top:614.8px" width="24" height="24"><circle cx="12" cy="11" r="10" fill="none" stroke="#d8e0e0" stroke-width="1.3"/><path d="M6 8 H18 L12 17Z" fill="#d8e0e0"/></svg>
<div class="a" style="left:0px;top:668.5px;width:567px;height:82px;background:#404040"></div>
<div class="a" style="left:567px;top:668.5px;width:13px;height:82px;background:#333"></div>
<div class="a" style="left:8px;top:682.9px;width:243px;height:30.5px;background:#333;border-radius:15px 0 0 15px"></div>
<svg class="a" style="left:7px;top:683.5px;overflow:visible" width="30" height="30"><circle cx="14.5" cy="16" r="13" fill="rgba(0,0,0,0.25)"/><circle cx="14.5" cy="14.4" r="13" fill="url(#gg)"/><circle cx="14.5" cy="14.4" r="5.5" fill="none" stroke="#c8eed8" stroke-width="2"/></svg>
<div class="t" style="left:40px;top:687.0px;font-size:15.5px;color:#d2d2d2;font-weight:bold">Volume</div>
<svg class="a" style="left:217px;top:678.0px;overflow:visible" width="40" height="40"><circle cx="20" cy="22.5" r="14" fill="rgba(0,0,0,0.16)"/><circle cx="20" cy="20" r="14" fill="url(#kg)" stroke="#5a5a5a" stroke-width="1"/><line x1="16.8" y1="17.3" x2="13.4" y2="14.4" stroke="#2a2a2a" stroke-width="1.8"/></svg>
<div class="t" style="left:259px;top:685.5px;font-size:16px;color:#d0d0d0;font-weight:bold">+5.62dB</div>
<div class="a" style="left:368px;top:683.5px;width:21px;height:30px;background:#2c2c2c"></div>
<svg class="a" style="left:371px;top:691.5px" width="14" height="14"><path d="M4 3.5 A5 5 0 1 0 10 3.5" fill="none" stroke="#9a9a9a" stroke-width="1.3"/><line x1="7" y1="1" x2="7" y2="7" stroke="#9a9a9a" stroke-width="1.3"/></svg>
<svg class="a" style="left:395px;top:682.5px" width="58" height="32"><path d="M1 1 H41 A15 15 0 0 1 41 31 H1Z" fill="#3a3a3a" stroke="#262626" stroke-width="1.5"/><g transform="translate(15,16)" fill="#282828"><circle r="6"/><rect x="-1.8" y="-9" width="3.6" height="5" transform="rotate(0)"/><rect x="-1.8" y="-9" width="3.6" height="5" transform="rotate(45)"/><rect x="-1.8" y="-9" width="3.6" height="5" transform="rotate(90)"/><rect x="-1.8" y="-9" width="3.6" height="5" transform="rotate(135)"/><rect x="-1.8" y="-9" width="3.6" height="5" transform="rotate(180)"/><rect x="-1.8" y="-9" width="3.6" height="5" transform="rotate(225)"/><rect x="-1.8" y="-9" width="3.6" height="5" transform="rotate(270)"/><rect x="-1.8" y="-9" width="3.6" height="5" transform="rotate(315)"/><circle r="2.3" fill="#3a3a3a"/></g><circle cx="41" cy="16" r="11" fill="#1e1e1e"/><path d="M35 12 H47 L41 21Z" fill="#3a3a3a"/></svg>
<div class="a" style="left:0px;top:750.0px;width:567px;height:1.5px;background:#555"></div>
<div class="a" style="left:0px;top:737px;width:568px;height:2px;background:#5c5c5c"></div>
<div class="a" style="left:0px;top:739px;width:580px;height:29px;background:#333"></div>
<div class="t" style="left:4px;top:741.5px;font-size:17px;color:#d8d8d8;letter-spacing:0.35px">Track 1 [input] Input 1</div>
<svg class="a" style="left:0;top:0" width="2048" height="768" viewBox="0 0 2048 768">
<defs><linearGradient id="itg" x1="0" y1="0" x2="0" y2="1"><stop offset="0" stop-color="#bcc1c1"/><stop offset="1" stop-color="#b1b6b6"/></linearGradient><pattern id="dots" width="4" height="4" patternUnits="userSpaceOnUse"><rect width="1" height="2" fill="#9a9a9a"/></pattern></defs>
<rect x="580" y="87" width="1462" height="18.5" fill="#4a4a4a"/>
<rect x="580" y="125.5" width="1465" height="52.5" fill="#4b4b4b"/>
<line x1="586.8" y1="170" x2="586.8" y2="178" stroke="#a8a8a8" stroke-width="1.2"/>
<line x1="603.3" y1="170" x2="603.3" y2="178" stroke="#a8a8a8" stroke-width="1.2"/>
<line x1="619.8" y1="131" x2="619.8" y2="178" stroke="#b4b4b4" stroke-width="1.2"/>
<line x1="636.2" y1="170" x2="636.2" y2="178" stroke="#a8a8a8" stroke-width="1.2"/>
<line x1="652.7" y1="170" x2="652.7" y2="178" stroke="#a8a8a8" stroke-width="1.2"/>
<line x1="669.1" y1="170" x2="669.1" y2="178" stroke="#a8a8a8" stroke-width="1.2"/>
<line x1="685.6" y1="170" x2="685.6" y2="178" stroke="#a8a8a8" stroke-width="1.2"/>
<line x1="702.0" y1="170" x2="702.0" y2="178" stroke="#a8a8a8" stroke-width="1.2"/>
<line x1="718.5" y1="170" x2="718.5" y2="178" stroke="#a8a8a8" stroke-width="1.2"/>
<line x1="735.0" y1="170" x2="735.0" y2="178" stroke="#a8a8a8" stroke-width="1.2"/>
<line x1="751.4" y1="131" x2="751.4" y2="178" stroke="#b4b4b4" stroke-width="1.2"/>
<line x1="767.9" y1="170" x2="767.9" y2="178" stroke="#a8a8a8" stroke-width="1.2"/>
<line x1="784.3" y1="170" x2="784.3" y2="178" stroke="#a8a8a8" stroke-width="1.2"/>
<line x1="800.8" y1="170" x2="800.8" y2="178" stroke="#a8a8a8" stroke-width="1.2"/>
<line x1="817.2" y1="170" x2="817.2" y2="178" stroke="#a8a8a8" stroke-width="1.2"/>
<line x1="833.7" y1="170" x2="833.7" y2="178" stroke="#a8a8a8" stroke-width="1.2"/>
<line x1="850.2" y1="170" x2="850.2" y2="178" stroke="#a8a8a8" stroke-width="1.2"/>
<line x1="866.6" y1="170" x2="866.6" y2="178" stroke="#a8a8a8" stroke-width="1.2"/>
<line x1="883.1" y1="131" x2="883.1" y2="178" stroke="#b4b4b4" stroke-width="1.2"/>
<line x1="899.5" y1="170" x2="899.5" y2="178" stroke="#a8a8a8" stroke-width="1.2"/>
<line x1="916.0" y1="170" x2="916.0" y2="178" stroke="#a8a8a8" stroke-width="1.2"/>
<line x1="932.4" y1="170" x2="932.4" y2="178" stroke="#a8a8a8" stroke-width="1.2"/>
<line x1="948.9" y1="170" x2="948.9" y2="178" stroke="#a8a8a8" stroke-width="1.2"/>
<line x1="965.4" y1="170" x2="965.4" y2="178" stroke="#a8a8a8" stroke-width="1.2"/>
<line x1="981.8" y1="170" x2="981.8" y2="178" stroke="#a8a8a8" stroke-width="1.2"/>
<line x1="998.3" y1="170" x2="998.3" y2="178" stroke="#a8a8a8" stroke-width="1.2"/>
<line x1="1014.7" y1="131" x2="1014.7" y2="178" stroke="#b4b4b4" stroke-width="1.2"/>
<line x1="1031.2" y1="170" x2="1031.2" y2="178" stroke="#a8a8a8" stroke-width="1.2"/>
<line x1="1047.6" y1="170" x2="1047.6" y2="178" stroke="#a8a8a8" stroke-width="1.2"/>
<line x1="1064.1" y1="170" x2="1064.1" y2="178" stroke="#a8a8a8" stroke-width="1.2"/>
<line x1="1080.6" y1="170" x2="1080.6" y2="178" stroke="#a8a8a8" stroke-width="1.2"/>
<line x1="1097.0" y1="170" x2="1097.0" y2="178" stroke="#a8a8a8" stroke-width="1.2"/>
<line x1="1113.5" y1="170" x2="1113.5" y2="178" stroke="#a8a8a8" stroke-width="1.2"/>
<line x1="1129.9" y1="170" x2="1129.9" y2="178" stroke="#a8a8a8" stroke-width="1.2"/>
<line x1="1146.4" y1="131" x2="1146.4" y2="178" stroke="#b4b4b4" stroke-width="1.2"/>
<line x1="1162.8" y1="170" x2="1162.8" y2="178" stroke="#a8a8a8" stroke-width="1.2"/>
<line x1="1179.3" y1="170" x2="1179.3" y2="178" stroke="#a8a8a8" stroke-width="1.2"/>
<line x1="1195.8" y1="170" x2="1195.8" y2="178" stroke="#a8a8a8" stroke-width="1.2"/>
<line x1="1212.2" y1="170" x2="1212.2" y2="178" stroke="#a8a8a8" stroke-width="1.2"/>
<line x1="1228.7" y1="170" x2="1228.7" y2="178" stroke="#a8a8a8" stroke-width="1.2"/>
<line x1="1245.1" y1="170" x2="1245.1" y2="178" stroke="#a8a8a8" stroke-width="1.2"/>
<line x1="1261.6" y1="170" x2="1261.6" y2="178" stroke="#a8a8a8" stroke-width="1.2"/>
<line x1="1278.0" y1="131" x2="1278.0" y2="178" stroke="#b4b4b4" stroke-width="1.2"/>
<line x1="1294.5" y1="170" x2="1294.5" y2="178" stroke="#a8a8a8" stroke-width="1.2"/>
<line x1="1311.0" y1="170" x2="1311.0" y2="178" stroke="#a8a8a8" stroke-width="1.2"/>
<line x1="1327.4" y1="170" x2="1327.4" y2="178" stroke="#a8a8a8" stroke-width="1.2"/>
<line x1="1343.9" y1="170" x2="1343.9" y2="178" stroke="#a8a8a8" stroke-width="1.2"/>
<line x1="1360.3" y1="170" x2="1360.3" y2="178" stroke="#a8a8a8" stroke-width="1.2"/>
<line x1="1376.8" y1="170" x2="1376.8" y2="178" stroke="#a8a8a8" stroke-width="1.2"/>
<line x1="1393.3" y1="170" x2="1393.3" y2="178" stroke="#a8a8a8" stroke-width="1.2"/>
<line x1="1409.7" y1="131" x2="1409.7" y2="178" stroke="#b4b4b4" stroke-width="1.2"/>
<line x1="1426.2" y1="170" x2="1426.2" y2="178" stroke="#a8a8a8" stroke-width="1.2"/>
<line x1="1442.6" y1="170" x2="1442.6" y2="178" stroke="#a8a8a8" stroke-width="1.2"/>
<line x1="1459.1" y1="170" x2="1459.1" y2="178" stroke="#a8a8a8" stroke-width="1.2"/>
<line x1="1475.5" y1="170" x2="1475.5" y2="178" stroke="#a8a8a8" stroke-width="1.2"/>
<line x1="1492.0" y1="170" x2="1492.0" y2="178" stroke="#a8a8a8" stroke-width="1.2"/>
<line x1="1508.5" y1="170" x2="1508.5" y2="178" stroke="#a8a8a8" stroke-width="1.2"/>
<line x1="1524.9" y1="170" x2="1524.9" y2="178" stroke="#a8a8a8" stroke-width="1.2"/>
<line x1="1541.4" y1="131" x2="1541.4" y2="178" stroke="#b4b4b4" stroke-width="1.2"/>
<line x1="1557.8" y1="170" x2="1557.8" y2="178" stroke="#a8a8a8" stroke-width="1.2"/>
<line x1="1574.3" y1="170" x2="1574.3" y2="178" stroke="#a8a8a8" stroke-width="1.2"/>
<line x1="1590.7" y1="170" x2="1590.7" y2="178" stroke="#a8a8a8" stroke-width="1.2"/>
<line x1="1607.2" y1="170" x2="1607.2" y2="178" stroke="#a8a8a8" stroke-width="1.2"/>
<line x1="1623.7" y1="170" x2="1623.7" y2="178" stroke="#a8a8a8" stroke-width="1.2"/>
<line x1="1640.1" y1="170" x2="1640.1" y2="178" stroke="#a8a8a8" stroke-width="1.2"/>
<line x1="1656.6" y1="170" x2="1656.6" y2="178" stroke="#a8a8a8" stroke-width="1.2"/>
<line x1="1673.0" y1="131" x2="1673.0" y2="178" stroke="#b4b4b4" stroke-width="1.2"/>
<line x1="1689.5" y1="170" x2="1689.5" y2="178" stroke="#a8a8a8" stroke-width="1.2"/>
<line x1="1705.9" y1="170" x2="1705.9" y2="178" stroke="#a8a8a8" stroke-width="1.2"/>
<line x1="1722.4" y1="170" x2="1722.4" y2="178" stroke="#a8a8a8" stroke-width="1.2"/>
<line x1="1738.9" y1="170" x2="1738.9" y2="178" stroke="#a8a8a8" stroke-width="1.2"/>
<line x1="1755.3" y1="170" x2="1755.3" y2="178" stroke="#a8a8a8" stroke-width="1.2"/>
<line x1="1771.8" y1="170" x2="1771.8" y2="178" stroke="#a8a8a8" stroke-width="1.2"/>
<line x1="1788.2" y1="170" x2="1788.2" y2="178" stroke="#a8a8a8" stroke-width="1.2"/>
<line x1="1804.7" y1="131" x2="1804.7" y2="178" stroke="#b4b4b4" stroke-width="1.2"/>
<line x1="1821.1" y1="170" x2="1821.1" y2="178" stroke="#a8a8a8" stroke-width="1.2"/>
<line x1="1837.6" y1="170" x2="1837.6" y2="178" stroke="#a8a8a8" stroke-width="1.2"/>
<line x1="1854.1" y1="170" x2="1854.1" y2="178" stroke="#a8a8a8" stroke-width="1.2"/>
<line x1="1870.5" y1="170" x2="1870.5" y2="178" stroke="#a8a8a8" stroke-width="1.2"/>
<line x1="1887.0" y1="170" x2="1887.0" y2="178" stroke="#a8a8a8" stroke-width="1.2"/>
<line x1="1903.4" y1="170" x2="1903.4" y2="178" stroke="#a8a8a8" stroke-width="1.2"/>
<line x1="1919.9" y1="170" x2="1919.9" y2="178" stroke="#a8a8a8" stroke-width="1.2"/>
<line x1="1936.3" y1="131" x2="1936.3" y2="178" stroke="#b4b4b4" stroke-width="1.2"/>
<line x1="1952.8" y1="170" x2="1952.8" y2="178" stroke="#a8a8a8" stroke-width="1.2"/>
<line x1="1969.3" y1="170" x2="1969.3" y2="178" stroke="#a8a8a8" stroke-width="1.2"/>
<line x1="1985.7" y1="170" x2="1985.7" y2="178" stroke="#a8a8a8" stroke-width="1.2"/>
<line x1="2002.2" y1="170" x2="2002.2" y2="178" stroke="#a8a8a8" stroke-width="1.2"/>
<line x1="2018.6" y1="170" x2="2018.6" y2="178" stroke="#a8a8a8" stroke-width="1.2"/>
<line x1="2035.1" y1="170" x2="2035.1" y2="178" stroke="#a8a8a8" stroke-width="1.2"/>
</svg>
<div class="t" style="left:625.25px;top:125.6px;font-size:20.5px;color:#b8b8b8;font-weight:bold;text-decoration:underline;text-underline-offset:1.5px;text-decoration-thickness:1.5px">2049.1.00</div>
<div class="t" style="left:625.25px;top:149.9px;font-size:16.5px;color:#b8b8b8;font-weight:bold">1:08:16.000</div>
<div class="t" style="left:756.91px;top:125.6px;font-size:20.5px;color:#b8b8b8;font-weight:bold;text-decoration:underline;text-underline-offset:1.5px;text-decoration-thickness:1.5px">2561.1.00</div>
<div class="t" style="left:756.91px;top:149.9px;font-size:16.5px;color:#b8b8b8;font-weight:bold">1:25:20.000</div>
<div class="t" style="left:888.5699999999999px;top:125.6px;font-size:20.5px;color:#b8b8b8;font-weight:bold;text-decoration:underline;text-underline-offset:1.5px;text-decoration-thickness:1.5px">3073.1.00</div>
<div class="t" style="left:888.5699999999999px;top:149.9px;font-size:16.5px;color:#b8b8b8;font-weight:bold">1:42:24.000</div>
<div class="t" style="left:1020.23px;top:125.6px;font-size:20.5px;color:#b8b8b8;font-weight:bold;text-decoration:underline;text-underline-offset:1.5px;text-decoration-thickness:1.5px">3585.1.00</div>
<div class="t" style="left:1020.23px;top:149.9px;font-size:16.5px;color:#b8b8b8;font-weight:bold">1:59:28.000</div>
<div class="t" style="left:1151.8899999999999px;top:125.6px;font-size:20.5px;color:#b8b8b8;font-weight:bold;text-decoration:underline;text-underline-offset:1.5px;text-decoration-thickness:1.5px">4097.1.00</div>
<div class="t" style="left:1151.8899999999999px;top:149.9px;font-size:16.5px;color:#b8b8b8;font-weight:bold">2:16:32.000</div>
<div class="t" style="left:1283.55px;top:125.6px;font-size:20.5px;color:#b8b8b8;font-weight:bold;text-decoration:underline;text-underline-offset:1.5px;text-decoration-thickness:1.5px">4609.1.00</div>
<div class="t" style="left:1283.55px;top:149.9px;font-size:16.5px;color:#b8b8b8;font-weight:bold">2:33:36.000</div>
<div class="t" style="left:1415.21px;top:125.6px;font-size:20.5px;color:#b8b8b8;font-weight:bold;text-decoration:underline;text-underline-offset:1.5px;text-decoration-thickness:1.5px">5121.1.00</div>
<div class="t" style="left:1415.21px;top:149.9px;font-size:16.5px;color:#b8b8b8;font-weight:bold">2:50:40.000</div>
<div class="t" style="left:1546.87px;top:125.6px;font-size:20.5px;color:#b8b8b8;font-weight:bold;text-decoration:underline;text-underline-offset:1.5px;text-decoration-thickness:1.5px">5633.1.00</div>
<div class="t" style="left:1546.87px;top:149.9px;font-size:16.5px;color:#b8b8b8;font-weight:bold">3:07:44.000</div>
<div class="t" style="left:1678.53px;top:125.6px;font-size:20.5px;color:#b8b8b8;font-weight:bold;text-decoration:underline;text-underline-offset:1.5px;text-decoration-thickness:1.5px">6145.1.00</div>
<div class="t" style="left:1678.53px;top:149.9px;font-size:16.5px;color:#b8b8b8;font-weight:bold">3:24:48.000</div>
<div class="t" style="left:1810.19px;top:125.6px;font-size:20.5px;color:#b8b8b8;font-weight:bold;text-decoration:underline;text-underline-offset:1.5px;text-decoration-thickness:1.5px">6657.1.00</div>
<div class="t" style="left:1810.19px;top:149.9px;font-size:16.5px;color:#b8b8b8;font-weight:bold">3:41:52.000</div>
<div class="t" style="left:1941.85px;top:125.6px;font-size:20.5px;color:#b8b8b8;font-weight:bold;text-decoration:underline;text-underline-offset:1.5px;text-decoration-thickness:1.5px">7169.1.00</div>
<div class="t" style="left:1941.85px;top:149.9px;font-size:16.5px;color:#b8b8b8;font-weight:bold">3:58:56.000</div>

<svg class="a" style="left:0;top:0" width="2048" height="768" viewBox="0 0 2048 768">
<rect x="580" y="178" width="1441" height="561" fill="#cbcbcb"/>
<rect x="580" y="178" width="1441" height="118" fill="#cbcbcb"/>
<rect x="580" y="287.75" width="1441" height="1.5" fill="#dedede"/>
<rect x="580" y="296" width="1441" height="70" fill="#a3b3a1"/>
<rect x="580" y="366" width="1441" height="3.5" fill="#bdbdbd"/>
<rect x="580" y="369.5" width="1441" height="116.5" fill="#bebebe"/>
<rect x="580" y="479.05" width="1441" height="1.5" fill="#d2d2d2"/>
<rect x="580" y="486" width="1441" height="71.70000000000005" fill="#9aab98"/>
<rect x="580" y="557.7" width="1441" height="3.2999999999999545" fill="#bdbdbd"/>
<rect x="580" y="561" width="1441" height="116.29999999999995" fill="#c8c8c8"/>
<rect x="580" y="670.25" width="1441" height="1.5" fill="#dcdcdc"/>
<rect x="580" y="677.3" width="1441" height="61.700000000000045" fill="#a3b3a1"/>
<line x1="586.8" y1="178" x2="586.8" y2="739" stroke="#8e8e8e" stroke-width="1" stroke-dasharray="1 2" opacity="0.8"/>
<line x1="603.3" y1="178" x2="603.3" y2="739" stroke="#8e8e8e" stroke-width="1" stroke-dasharray="1 2" opacity="0.8"/>
<line x1="619.8" y1="178" x2="619.8" y2="739" stroke="#8e8e8e" stroke-width="1" stroke-dasharray="1 2" opacity="0.8"/>
<line x1="636.2" y1="178" x2="636.2" y2="739" stroke="#8e8e8e" stroke-width="1" stroke-dasharray="1 2" opacity="0.8"/>
<line x1="652.7" y1="178" x2="652.7" y2="739" stroke="#8e8e8e" stroke-width="1" stroke-dasharray="1 2" opacity="0.8"/>
<line x1="669.1" y1="178" x2="669.1" y2="739" stroke="#8e8e8e" stroke-width="1" stroke-dasharray="1 2" opacity="0.8"/>
<line x1="685.6" y1="178" x2="685.6" y2="739" stroke="#8e8e8e" stroke-width="1" stroke-dasharray="1 2" opacity="0.8"/>
<line x1="702.0" y1="178" x2="702.0" y2="739" stroke="#8e8e8e" stroke-width="1" stroke-dasharray="1 2" opacity="0.8"/>
<line x1="718.5" y1="178" x2="718.5" y2="739" stroke="#8e8e8e" stroke-width="1" stroke-dasharray="1 2" opacity="0.8"/>
<line x1="735.0" y1="178" x2="735.0" y2="739" stroke="#8e8e8e" stroke-width="1" stroke-dasharray="1 2" opacity="0.8"/>
<line x1="751.4" y1="178" x2="751.4" y2="739" stroke="#8e8e8e" stroke-width="1" stroke-dasharray="1 2" opacity="0.8"/>
<line x1="767.9" y1="178" x2="767.9" y2="739" stroke="#8e8e8e" stroke-width="1" stroke-dasharray="1 2" opacity="0.8"/>
<line x1="784.3" y1="178" x2="784.3" y2="739" stroke="#8e8e8e" stroke-width="1" stroke-dasharray="1 2" opacity="0.8"/>
<line x1="800.8" y1="178" x2="800.8" y2="739" stroke="#8e8e8e" stroke-width="1" stroke-dasharray="1 2" opacity="0.8"/>
<line x1="817.2" y1="178" x2="817.2" y2="739" stroke="#8e8e8e" stroke-width="1" stroke-dasharray="1 2" opacity="0.8"/>
<line x1="833.7" y1="178" x2="833.7" y2="739" stroke="#8e8e8e" stroke-width="1" stroke-dasharray="1 2" opacity="0.8"/>
<line x1="850.2" y1="178" x2="850.2" y2="739" stroke="#8e8e8e" stroke-width="1" stroke-dasharray="1 2" opacity="0.8"/>
<line x1="866.6" y1="178" x2="866.6" y2="739" stroke="#8e8e8e" stroke-width="1" stroke-dasharray="1 2" opacity="0.8"/>
<line x1="883.1" y1="178" x2="883.1" y2="739" stroke="#8e8e8e" stroke-width="1" stroke-dasharray="1 2" opacity="0.8"/>
<line x1="899.5" y1="178" x2="899.5" y2="739" stroke="#8e8e8e" stroke-width="1" stroke-dasharray="1 2" opacity="0.8"/>
<line x1="916.0" y1="178" x2="916.0" y2="739" stroke="#8e8e8e" stroke-width="1" stroke-dasharray="1 2" opacity="0.8"/>
<line x1="932.4" y1="178" x2="932.4" y2="739" stroke="#8e8e8e" stroke-width="1" stroke-dasharray="1 2" opacity="0.8"/>
<line x1="948.9" y1="178" x2="948.9" y2="739" stroke="#8e8e8e" stroke-width="1" stroke-dasharray="1 2" opacity="0.8"/>
<line x1="965.4" y1="178" x2="965.4" y2="739" stroke="#8e8e8e" stroke-width="1" stroke-dasharray="1 2" opacity="0.8"/>
<line x1="981.8" y1="178" x2="981.8" y2="739" stroke="#8e8e8e" stroke-width="1" stroke-dasharray="1 2" opacity="0.8"/>
<line x1="998.3" y1="178" x2="998.3" y2="739" stroke="#8e8e8e" stroke-width="1" stroke-dasharray="1 2" opacity="0.8"/>
<line x1="1014.7" y1="178" x2="1014.7" y2="739" stroke="#8e8e8e" stroke-width="1" stroke-dasharray="1 2" opacity="0.8"/>
<line x1="1031.2" y1="178" x2="1031.2" y2="739" stroke="#8e8e8e" stroke-width="1" stroke-dasharray="1 2" opacity="0.8"/>
<line x1="1047.6" y1="178" x2="1047.6" y2="739" stroke="#8e8e8e" stroke-width="1" stroke-dasharray="1 2" opacity="0.8"/>
<line x1="1064.1" y1="178" x2="1064.1" y2="739" stroke="#8e8e8e" stroke-width="1" stroke-dasharray="1 2" opacity="0.8"/>
<line x1="1080.6" y1="178" x2="1080.6" y2="739" stroke="#8e8e8e" stroke-width="1" stroke-dasharray="1 2" opacity="0.8"/>
<line x1="1097.0" y1="178" x2="1097.0" y2="739" stroke="#8e8e8e" stroke-width="1" stroke-dasharray="1 2" opacity="0.8"/>
<line x1="1113.5" y1="178" x2="1113.5" y2="739" stroke="#8e8e8e" stroke-width="1" stroke-dasharray="1 2" opacity="0.8"/>
<line x1="1129.9" y1="178" x2="1129.9" y2="739" stroke="#8e8e8e" stroke-width="1" stroke-dasharray="1 2" opacity="0.8"/>
<line x1="1146.4" y1="178" x2="1146.4" y2="739" stroke="#8e8e8e" stroke-width="1" stroke-dasharray="1 2" opacity="0.8"/>
<line x1="1162.8" y1="178" x2="1162.8" y2="739" stroke="#8e8e8e" stroke-width="1" stroke-dasharray="1 2" opacity="0.8"/>
<line x1="1179.3" y1="178" x2="1179.3" y2="739" stroke="#8e8e8e" stroke-width="1" stroke-dasharray="1 2" opacity="0.8"/>
<line x1="1195.8" y1="178" x2="1195.8" y2="739" stroke="#8e8e8e" stroke-width="1" stroke-dasharray="1 2" opacity="0.8"/>
<line x1="1212.2" y1="178" x2="1212.2" y2="739" stroke="#8e8e8e" stroke-width="1" stroke-dasharray="1 2" opacity="0.8"/>
<line x1="1228.7" y1="178" x2="1228.7" y2="739" stroke="#8e8e8e" stroke-width="1" stroke-dasharray="1 2" opacity="0.8"/>
<line x1="1245.1" y1="178" x2="1245.1" y2="739" stroke="#8e8e8e" stroke-width="1" stroke-dasharray="1 2" opacity="0.8"/>
<line x1="1261.6" y1="178" x2="1261.6" y2="739" stroke="#8e8e8e" stroke-width="1" stroke-dasharray="1 2" opacity="0.8"/>
<line x1="1278.0" y1="178" x2="1278.0" y2="739" stroke="#8e8e8e" stroke-width="1" stroke-dasharray="1 2" opacity="0.8"/>
<line x1="1294.5" y1="178" x2="1294.5" y2="739" stroke="#8e8e8e" stroke-width="1" stroke-dasharray="1 2" opacity="0.8"/>
<line x1="1311.0" y1="178" x2="1311.0" y2="739" stroke="#8e8e8e" stroke-width="1" stroke-dasharray="1 2" opacity="0.8"/>
<line x1="1327.4" y1="178" x2="1327.4" y2="739" stroke="#8e8e8e" stroke-width="1" stroke-dasharray="1 2" opacity="0.8"/>
<line x1="1343.9" y1="178" x2="1343.9" y2="739" stroke="#8e8e8e" stroke-width="1" stroke-dasharray="1 2" opacity="0.8"/>
<line x1="1360.3" y1="178" x2="1360.3" y2="739" stroke="#8e8e8e" stroke-width="1" stroke-dasharray="1 2" opacity="0.8"/>
<line x1="1376.8" y1="178" x2="1376.8" y2="739" stroke="#8e8e8e" stroke-width="1" stroke-dasharray="1 2" opacity="0.8"/>
<line x1="1393.3" y1="178" x2="1393.3" y2="739" stroke="#8e8e8e" stroke-width="1" stroke-dasharray="1 2" opacity="0.8"/>
<line x1="1409.7" y1="178" x2="1409.7" y2="739" stroke="#8e8e8e" stroke-width="1" stroke-dasharray="1 2" opacity="0.8"/>
<line x1="1426.2" y1="178" x2="1426.2" y2="739" stroke="#8e8e8e" stroke-width="1" stroke-dasharray="1 2" opacity="0.8"/>
<line x1="1442.6" y1="178" x2="1442.6" y2="739" stroke="#8e8e8e" stroke-width="1" stroke-dasharray="1 2" opacity="0.8"/>
<line x1="1459.1" y1="178" x2="1459.1" y2="739" stroke="#8e8e8e" stroke-width="1" stroke-dasharray="1 2" opacity="0.8"/>
<line x1="1475.5" y1="178" x2="1475.5" y2="739" stroke="#8e8e8e" stroke-width="1" stroke-dasharray="1 2" opacity="0.8"/>
<line x1="1492.0" y1="178" x2="1492.0" y2="739" stroke="#8e8e8e" stroke-width="1" stroke-dasharray="1 2" opacity="0.8"/>
<line x1="1508.5" y1="178" x2="1508.5" y2="739" stroke="#8e8e8e" stroke-width="1" stroke-dasharray="1 2" opacity="0.8"/>
<line x1="1524.9" y1="178" x2="1524.9" y2="739" stroke="#8e8e8e" stroke-width="1" stroke-dasharray="1 2" opacity="0.8"/>
<line x1="1541.4" y1="178" x2="1541.4" y2="739" stroke="#8e8e8e" stroke-width="1" stroke-dasharray="1 2" opacity="0.8"/>
<line x1="1557.8" y1="178" x2="1557.8" y2="739" stroke="#8e8e8e" stroke-width="1" stroke-dasharray="1 2" opacity="0.8"/>
<line x1="1574.3" y1="178" x2="1574.3" y2="739" stroke="#8e8e8e" stroke-width="1" stroke-dasharray="1 2" opacity="0.8"/>
<line x1="1590.7" y1="178" x2="1590.7" y2="739" stroke="#8e8e8e" stroke-width="1" stroke-dasharray="1 2" opacity="0.8"/>
<line x1="1607.2" y1="178" x2="1607.2" y2="739" stroke="#8e8e8e" stroke-width="1" stroke-dasharray="1 2" opacity="0.8"/>
<line x1="1623.7" y1="178" x2="1623.7" y2="739" stroke="#8e8e8e" stroke-width="1" stroke-dasharray="1 2" opacity="0.8"/>
<line x1="1640.1" y1="178" x2="1640.1" y2="739" stroke="#8e8e8e" stroke-width="1" stroke-dasharray="1 2" opacity="0.8"/>
<line x1="1656.6" y1="178" x2="1656.6" y2="739" stroke="#8e8e8e" stroke-width="1" stroke-dasharray="1 2" opacity="0.8"/>
<line x1="1673.0" y1="178" x2="1673.0" y2="739" stroke="#8e8e8e" stroke-width="1" stroke-dasharray="1 2" opacity="0.8"/>
<line x1="1689.5" y1="178" x2="1689.5" y2="739" stroke="#8e8e8e" stroke-width="1" stroke-dasharray="1 2" opacity="0.8"/>
<line x1="1705.9" y1="178" x2="1705.9" y2="739" stroke="#8e8e8e" stroke-width="1" stroke-dasharray="1 2" opacity="0.8"/>
<line x1="1722.4" y1="178" x2="1722.4" y2="739" stroke="#8e8e8e" stroke-width="1" stroke-dasharray="1 2" opacity="0.8"/>
<line x1="1738.9" y1="178" x2="1738.9" y2="739" stroke="#8e8e8e" stroke-width="1" stroke-dasharray="1 2" opacity="0.8"/>
<line x1="1755.3" y1="178" x2="1755.3" y2="739" stroke="#8e8e8e" stroke-width="1" stroke-dasharray="1 2" opacity="0.8"/>
<line x1="1771.8" y1="178" x2="1771.8" y2="739" stroke="#8e8e8e" stroke-width="1" stroke-dasharray="1 2" opacity="0.8"/>
<line x1="1788.2" y1="178" x2="1788.2" y2="739" stroke="#8e8e8e" stroke-width="1" stroke-dasharray="1 2" opacity="0.8"/>
<line x1="1804.7" y1="178" x2="1804.7" y2="739" stroke="#8e8e8e" stroke-width="1" stroke-dasharray="1 2" opacity="0.8"/>
<line x1="1821.1" y1="178" x2="1821.1" y2="739" stroke="#8e8e8e" stroke-width="1" stroke-dasharray="1 2" opacity="0.8"/>
<line x1="1837.6" y1="178" x2="1837.6" y2="739" stroke="#8e8e8e" stroke-width="1" stroke-dasharray="1 2" opacity="0.8"/>
<line x1="1854.1" y1="178" x2="1854.1" y2="739" stroke="#8e8e8e" stroke-width="1" stroke-dasharray="1 2" opacity="0.8"/>
<line x1="1870.5" y1="178" x2="1870.5" y2="739" stroke="#8e8e8e" stroke-width="1" stroke-dasharray="1 2" opacity="0.8"/>
<line x1="1887.0" y1="178" x2="1887.0" y2="739" stroke="#8e8e8e" stroke-width="1" stroke-dasharray="1 2" opacity="0.8"/>
<line x1="1903.4" y1="178" x2="1903.4" y2="739" stroke="#8e8e8e" stroke-width="1" stroke-dasharray="1 2" opacity="0.8"/>
<line x1="1919.9" y1="178" x2="1919.9" y2="739" stroke="#8e8e8e" stroke-width="1" stroke-dasharray="1 2" opacity="0.8"/>
<line x1="1936.3" y1="178" x2="1936.3" y2="739" stroke="#8e8e8e" stroke-width="1" stroke-dasharray="1 2" opacity="0.8"/>
<line x1="1952.8" y1="178" x2="1952.8" y2="739" stroke="#8e8e8e" stroke-width="1" stroke-dasharray="1 2" opacity="0.8"/>
<line x1="1969.3" y1="178" x2="1969.3" y2="739" stroke="#8e8e8e" stroke-width="1" stroke-dasharray="1 2" opacity="0.8"/>
<line x1="1985.7" y1="178" x2="1985.7" y2="739" stroke="#8e8e8e" stroke-width="1" stroke-dasharray="1 2" opacity="0.8"/>
<line x1="2002.2" y1="178" x2="2002.2" y2="739" stroke="#8e8e8e" stroke-width="1" stroke-dasharray="1 2" opacity="0.8"/>
<line x1="2018.6" y1="178" x2="2018.6" y2="739" stroke="#8e8e8e" stroke-width="1" stroke-dasharray="1 2" opacity="0.8"/>
<rect x="583" y="180" width="19.5" height="19" fill="#3ca5ad"/>
<text x="592.7" y="195.5" font-family="Liberation Mono" font-size="15" fill="#d8f4f4" text-anchor="middle" font-weight="bold">i</text>
<rect x="641" y="180" width="19.5" height="19" fill="#3ca5ad"/>
<text x="650.7" y="195.5" font-family="Liberation Mono" font-size="15" fill="#d8f4f4" text-anchor="middle" font-weight="bold">i</text>
<rect x="692" y="180" width="19.5" height="19" fill="#3ca5ad"/>
<text x="701.7" y="195.5" font-family="Liberation Mono" font-size="15" fill="#d8f4f4" text-anchor="middle" font-weight="bold">i</text>
<rect x="786.5" y="180" width="19.5" height="19" fill="#3ca5ad"/>
<text x="796.2" y="195.5" font-family="Liberation Mono" font-size="15" fill="#d8f4f4" text-anchor="middle" font-weight="bold">i</text>
<rect x="835" y="180" width="19.5" height="19" fill="#3ca5ad"/>
<text x="844.7" y="195.5" font-family="Liberation Mono" font-size="15" fill="#d8f4f4" text-anchor="middle" font-weight="bold">i</text>
<rect x="581" y="203" width="1268.5" height="77.5" fill="url(#itg)" stroke="#4e4e4e" stroke-width="1.5"/>
<path d="M582,241.5 L582,238.7 583,238.4 584,237.3 585,236.6 586,236.6 587,237.3 588,238.2 589,238.4 590,237.3 591,237.1 592,236.7 593,237.2 594,236.3 595,235.7 596,235.4 597,235.4 598,235.7 599,236.3 600,237.2 601,238.2 602,238.6 603,235.3 604,231.8 605,230.3 606,232.6 607,236.0 608,237.7 609,237.6 610,237.7 611,238.2 612,238.6 613,237.8 614,237.9 615,237.9 616,237.1 617,234.2 618,232.5 619,232.6 620,236.1 621,238.5 622,233.4 623,224.4 624,221.3 625,230.0 626,237.5 627,238.6 628,238.1 629,236.2 630,234.5 631,234.1 632,234.9 633,237.3 634,237.9 635,238.2 636,238.2 637,237.9 638,238.7 639,238.3 640,236.8 641,236.3 642,235.9 643,236.4 644,236.9 645,238.2 646,237.4 647,236.7 648,236.2 649,236.0 650,236.2 651,236.7 652,236.5 653,234.2 654,232.7 655,231.6 656,229.8 657,230.3 658,231.0 659,232.3 660,232.8 661,232.5 662,232.6 663,235.7 664,237.0 665,237.0 666,237.9 667,238.5 668,238.3 669,238.4 670,238.4 671,238.3 672,238.0 673,238.6 674,237.9 675,238.4 676,238.1 677,238.6 678,238.1 679,236.1 680,233.7 681,231.0 682,228.5 683,227.9 684,228.2 685,229.9 686,233.6 687,236.4 688,236.1 689,231.1 690,224.6 691,220.4 692,218.6 693,223.3 694,229.0 695,235.1 696,237.0 697,236.8 698,236.5 699,234.5 700,233.6 701,234.4 702,236.5 703,238.1 704,238.3 705,238.0 706,234.9 707,230.6 708,226.7 709,225.6 710,228.5 711,232.7 712,236.5 713,238.3 714,238.0 715,238.6 716,237.9 717,237.9 718,237.6 719,235.3 720,233.5 721,232.4 722,232.0 723,232.4 724,233.5 725,235.3 726,237.6 727,238.3 728,237.1 729,236.5 730,236.1 731,235.5 732,236.4 733,237.0 734,237.9 735,238.1 736,238.3 737,238.5 738,238.3 739,238.3 740,237.9 741,238.0 742,237.0 743,235.7 744,233.5 745,230.0 746,227.6 747,223.8 748,219.8 749,218.2 750,219.0 751,217.7 752,218.7 753,222.4 754,226.1 755,228.6 756,230.3 757,230.5 758,231.2 759,233.0 760,234.7 761,237.4 762,238.3 763,238.7 764,238.0 765,235.3 766,232.6 767,230.5 768,230.2 769,232.6 770,236.1 771,237.8 772,238.5 773,238.3 774,236.6 775,234.4 776,232.2 777,228.1 778,224.3 779,225.8 780,229.0 781,233.9 782,237.9 783,238.4 784,238.3 785,238.5 786,238.3 787,238.1 788,237.0 789,236.0 790,235.8 791,236.1 792,236.8 793,238.1 794,237.7 795,237.6 796,237.7 797,238.1 798,238.4 799,237.7 800,237.5 801,237.1 802,237.0 803,236.9 804,237.4 805,237.7 806,238.1 807,238.5 808,237.9 809,237.9 810,238.1 811,238.5 812,237.9 813,237.2 814,237.0 815,236.8 816,236.9 817,237.4 818,237.6 819,238.0 820,238.4 821,238.0 822,238.2 823,236.6 824,235.7 825,234.4 826,234.2 827,234.7 828,235.7 829,237.2 830,238.3 831,238.3 832,237.5 833,237.1 834,237.1 835,237.5 836,236.9 837,235.6 838,234.5 839,233.2 840,232.7 841,233.4 842,234.1 843,235.5 844,237.1 845,237.9 846,236.4 847,234.6 848,233.1 849,232.4 850,231.5 851,232.5 852,233.5 853,235.1 854,236.3 855,236.6 856,236.9 857,237.1 858,234.8 859,231.1 860,226.4 861,222.8 862,222.0 863,220.4 864,221.8 865,225.8 866,229.5 867,233.2 868,236.4 869,238.6 870,237.9 871,237.9 872,235.9 873,233.9 874,232.6 875,232.4 876,232.1 877,234.2 878,235.2 879,232.8 880,230.2 881,228.7 882,228.3 883,228.7 884,229.6 885,231.7 886,234.1 887,231.8 888,229.9 889,230.4 890,231.4 891,234.1 892,233.3 893,232.5 894,232.2 895,232.5 896,233.3 897,227.3 898,227.3 899,227.4 900,230.1 901,231.0 902,231.0 903,232.9 904,227.7 905,225.9 906,227.3 907,231.6 908,232.1 909,233.9 910,232.3 911,226.6 912,225.2 913,226.5 914,232.7 915,230.2 916,226.8 917,225.5 918,226.7 919,229.6 920,234.9 921,230.6 922,225.4 923,225.3 924,232.5 925,233.7 926,229.9 927,233.7 928,233.3 929,224.9 930,218.0 931,218.1 932,221.1 933,215.9 934,220.8 935,223.3 936,220.5 937,223.4 938,229.4 939,220.7 940,216.6 941,215.7 942,215.8 943,221.1 944,230.3 945,231.1 946,223.4 947,219.0 948,215.0 949,222.4 950,231.2 951,231.5 952,227.5 953,229.9 954,221.9 955,217.3 956,221.1 957,230.0 958,227.2 959,224.1 960,224.2 961,220.8 962,216.2 963,221.3 964,220.2 965,216.6 966,220.3 967,229.6 968,229.4 969,220.7 970,220.7 971,229.4 972,232.9 973,228.1 974,223.7 975,217.1 976,222.2 977,228.1 978,232.9 979,232.4 980,226.8 981,222.9 982,221.5 983,222.9 984,219.5 985,216.5 986,221.3 987,218.9 988,218.8 989,228.6 990,232.3 991,227.1 992,224.8 993,221.2 994,225.1 995,232.1 996,226.2 997,222.1 998,220.6 999,222.0 1000,226.1 1001,228.8 1002,220.3 1003,215.9 1004,221.1 1005,227.3 1006,232.3 1007,229.1 1008,222.8 1009,229.1 1010,231.3 1011,222.5 1012,218.6 1013,220.0 1014,224.1 1015,231.2 1016,227.8 1017,220.1 1018,227.7 1019,226.2 1020,215.8 1021,225.1 1022,229.8 1023,221.8 1024,217.0 1025,213.3 1026,217.8 1027,225.9 1028,228.8 1029,219.0 1030,213.3 1031,213.3 1032,210.8 1033,218.5 1034,230.9 1035,224.3 1036,219.8 1037,218.2 1038,219.8 1039,217.0 1040,212.2 1041,216.2 1042,216.3 1043,212.0 1044,216.4 1045,227.6 1046,226.4 1047,218.3 1048,216.1 1049,220.5 1050,213.9 1051,213.9 1052,226.1 1053,231.4 1054,225.6 1055,221.6 1056,220.2 1057,218.8 1058,215.9 1059,217.9 1060,228.2 1061,220.1 1062,213.6 1063,211.3 1064,213.6 1065,220.1 1066,229.5 1067,233.3 1068,231.0 1069,227.0 1070,222.9 1071,226.7 1072,234.2 1073,231.9 1074,224.3 1075,219.9 1076,220.0 1077,224.4 1078,230.1 1079,223.4 1080,220.2 1081,223.6 1082,230.8 1083,232.4 1084,234.9 1085,231.7 1086,227.1 1087,231.7 1088,232.6 1089,224.1 1090,218.6 1091,222.5 1092,226.3 1093,232.7 1094,234.3 1095,233.5 1096,235.3 1097,236.0 1098,237.8 1099,236.9 1100,233.5 1101,231.1 1102,230.3 1103,231.1 1104,233.5 1105,236.9 1106,236.0 1107,231.3 1108,233.5 1109,234.5 1110,228.4 1111,222.8 1112,221.4 1113,218.3 1114,222.9 1115,232.6 1116,228.2 1117,217.4 1118,217.4 1119,228.2 1120,233.5 1121,223.8 1122,219.8 1123,224.1 1124,231.1 1125,234.2 1126,232.3 1127,225.8 1128,221.3 1129,219.7 1130,220.7 1131,225.6 1132,232.4 1133,232.4 1134,227.3 1135,227.3 1136,232.4 1137,230.6 1138,223.1 1139,220.5 1140,227.6 1141,227.5 1142,217.8 1143,217.8 1144,216.5 1145,214.0 1146,216.9 1147,226.3 1148,227.4 1149,217.5 1150,217.5 1151,227.4 1152,229.8 1153,221.3 1154,215.4 1155,213.4 1156,215.4 1157,221.3 1158,229.8 1159,232.3 1160,228.5 1161,226.3 1162,226.3 1163,227.2 1164,217.2 1165,214.1 1166,217.3 1167,212.2 1168,209.7 1169,212.2 1170,219.0 1171,229.0 1172,222.2 1173,210.0 1174,219.2 1175,212.9 1176,219.0 1177,225.9 1178,225.9 1179,228.2 1180,232.2 1181,230.3 1182,222.7 1183,228.2 1184,237.9 1185,237.0 1186,232.0 1187,229.3 1188,232.2 1189,233.7 1190,232.6 1191,232.3 1192,232.6 1193,233.7 1194,235.5 1195,237.7 1196,238.2 1197,238.4 1198,237.9 1199,238.0 1200,237.7 1201,235.4 1202,230.5 1203,226.7 1204,230.1 1205,236.4 1206,235.4 1207,235.4 1208,236.4 1209,232.6 1210,230.3 1211,232.7 1212,237.0 1213,238.4 1214,238.5 1215,236.2 1216,232.6 1217,228.5 1218,227.5 1219,228.9 1220,232.7 1221,236.5 1222,238.5 1223,237.5 1224,233.0 1225,230.3 1226,232.8 1227,237.5 1228,238.8 1229,238.9 1230,238.9 1231,237.4 1232,236.2 1233,235.3 1234,234.9 1235,234.9 1236,235.3 1237,235.9 1238,236.4 1239,237.9 1240,239.0 1241,238.7 1242,237.5 1243,235.3 1244,233.7 1245,232.9 1246,232.9 1247,233.7 1248,235.3 1249,237.5 1250,238.8 1251,238.7 1252,238.8 1253,237.3 1254,235.6 1255,234.1 1256,234.2 1257,234.1 1258,235.4 1259,237.4 1260,238.6 1261,238.6 1262,238.5 1263,238.6 1264,238.8 1265,238.6 1266,238.6 1267,238.0 1268,237.6 1269,238.2 1270,238.5 1271,238.6 1272,238.4 1273,238.9 1274,238.5 1275,238.6 1276,238.6 1277,238.8 1278,238.7 1279,238.5 1280,237.2 1281,235.8 1282,234.7 1283,233.9 1284,233.5 1285,233.5 1286,233.9 1287,234.7 1288,235.8 1289,237.2 1290,238.9 1291,239.1 1292,239.0 1293,238.4 1294,238.9 1295,238.8 1296,238.7 1297,238.5 1298,234.9 1299,224.5 1300,218.7 1301,223.9 1302,234.7 1303,238.9 1304,238.9 1305,239.1 1306,238.5 1307,237.1 1308,236.8 1309,237.3 1310,238.4 1311,238.6 1312,238.9 1313,238.5 1314,238.4 1315,238.7 1316,238.9 1317,238.7 1318,238.9 1319,239.1 1320,238.5 1321,236.1 1322,229.8 1323,226.6 1324,229.9 1325,236.5 1326,237.8 1327,237.8 1328,238.0 1329,238.5 1330,238.4 1331,239.0 1332,238.5 1333,238.6 1334,236.5 1335,230.5 1336,227.9 1337,230.0 1338,236.5 1339,239.0 1340,238.4 1341,237.4 1342,236.0 1343,233.4 1344,231.8 1345,228.3 1346,226.2 1347,223.9 1348,222.4 1349,221.2 1350,220.1 1351,221.2 1352,221.6 1353,224.0 1354,227.2 1355,229.0 1356,231.4 1357,232.4 1358,232.9 1359,233.8 1360,235.1 1361,236.7 1362,238.5 1363,238.2 1364,237.1 1365,236.4 1366,234.3 1367,233.5 1368,234.3 1369,236.5 1370,238.8 1371,238.7 1372,238.4 1373,239.1 1374,238.8 1375,238.4 1376,238.9 1377,238.6 1378,236.6 1379,234.4 1380,233.9 1381,234.8 1382,236.5 1383,236.6 1384,237.4 1385,238.7 1386,238.8 1387,238.8 1388,238.6 1389,237.3 1390,236.8 1391,237.2 1392,238.5 1393,238.4 1394,238.6 1395,237.3 1396,236.8 1397,237.3 1398,237.3 1399,237.0 1400,236.7 1401,237.0 1402,237.3 1403,237.7 1404,238.2 1405,238.7 1406,238.6 1407,238.6 1408,236.9 1409,234.4 1410,234.3 1411,234.7 1412,236.6 1413,238.7 1414,238.6 1415,238.4 1416,238.9 1417,239.0 1418,238.4 1419,238.5 1420,238.9 1421,238.0 1422,235.9 1423,234.1 1424,232.8 1425,231.9 1426,231.6 1427,231.9 1428,232.8 1429,232.2 1430,231.7 1431,232.6 1432,232.6 1433,233.4 1434,234.7 1435,236.0 1436,237.1 1437,237.3 1438,236.9 1439,236.7 1440,236.9 1441,235.8 1442,235.1 1443,235.6 1444,237.2 1445,238.9 1446,238.9 1447,238.5 1448,237.8 1449,238.5 1450,238.7 1451,238.9 1452,238.9 1453,233.8 1454,225.3 1455,221.6 1456,226.0 1457,233.6 1458,239.1 1459,238.4 1460,238.7 1461,238.2 1462,236.6 1463,235.8 1464,235.2 1465,234.8 1466,234.9 1467,235.6 1468,236.8 1469,237.8 1470,238.9 1471,238.9 1472,238.8 1473,238.1 1474,237.8 1475,237.8 1476,237.0 1477,235.9 1478,235.8 1479,236.2 1480,237.0 1481,238.2 1482,238.8 1483,238.6 1484,238.4 1485,238.5 1486,238.6 1487,238.9 1488,237.9 1489,237.9 1490,233.2 1491,222.6 1492,218.0 1493,223.8 1494,233.1 1495,237.9 1496,237.3 1497,237.0 1498,237.0 1499,237.3 1500,237.9 1501,238.7 1502,238.2 1503,237.2 1504,236.3 1505,235.6 1506,234.0 1507,234.0 1508,236.0 1509,239.0 1510,238.6 1511,238.7 1512,239.0 1513,237.7 1514,236.1 1515,235.7 1516,236.6 1517,237.7 1518,238.5 1519,236.9 1520,235.7 1521,235.1 1522,235.1 1523,234.5 1524,231.3 1525,230.5 1526,230.9 1527,233.9 1528,237.4 1529,237.0 1530,236.5 1531,237.0 1532,236.6 1533,237.2 1534,238.4 1535,238.4 1536,238.9 1537,238.4 1538,237.9 1539,237.2 1540,236.7 1541,236.8 1542,237.7 1543,238.7 1544,238.6 1545,237.7 1546,237.0 1547,236.6 1548,236.5 1549,236.6 1550,237.0 1551,232.7 1552,229.5 1553,231.1 1554,229.8 1555,228.1 1556,227.4 1557,228.3 1558,228.9 1559,231.4 1560,233.8 1561,236.1 1562,238.2 1563,238.4 1564,239.1 1565,238.6 1566,238.9 1567,239.0 1568,238.5 1569,237.7 1570,236.6 1571,234.6 1572,234.1 1573,234.5 1574,236.5 1575,238.7 1576,238.7 1577,238.6 1578,238.0 1579,237.6 1580,237.2 1581,237.0 1582,236.7 1583,237.1 1584,237.2 1585,237.7 1586,237.9 1587,238.5 1588,239.0 1589,238.4 1590,238.9 1591,238.4 1592,238.8 1593,238.4 1594,238.6 1595,239.0 1596,238.0 1597,234.3 1598,231.8 1599,233.8 1600,237.8 1601,238.6 1602,238.4 1603,239.0 1604,238.6 1605,238.8 1606,238.4 1607,238.7 1608,238.0 1609,237.2 1610,236.8 1611,236.2 1612,233.6 1613,232.1 1614,232.1 1615,233.6 1616,230.9 1617,226.3 1618,223.6 1619,225.9 1620,230.1 1621,234.9 1622,236.6 1623,236.2 1624,236.0 1625,236.2 1626,235.8 1627,236.2 1628,237.9 1629,239.1 1630,235.2 1631,228.2 1632,223.6 1633,228.3 1634,235.0 1635,238.8 1636,238.7 1637,236.6 1638,234.1 1639,232.8 1640,232.8 1641,234.1 1642,236.6 1643,237.2 1644,236.0 1645,235.6 1646,235.3 1647,232.9 1648,232.1 1649,233.2 1650,235.3 1651,232.2 1652,229.4 1653,227.1 1654,224.6 1655,224.8 1656,224.3 1657,226.6 1658,229.1 1659,232.3 1660,235.3 1661,236.9 1662,235.2 1663,235.2 1664,236.9 1665,236.7 1666,234.9 1667,233.9 1668,234.4 1669,235.6 1670,234.6 1671,234.1 1672,234.1 1673,234.6 1674,235.6 1675,232.7 1676,230.1 1677,232.4 1678,237.3 1679,238.4 1680,237.1 1681,235.7 1682,234.6 1683,233.9 1684,233.7 1685,233.9 1686,234.6 1687,235.7 1688,237.1 1689,238.7 1690,238.4 1691,238.5 1692,238.6 1693,238.2 1694,237.3 1695,236.6 1696,236.2 1697,236.2 1698,236.6 1699,237.0 1700,237.0 1701,236.9 1702,237.6 1703,238.9 1704,238.9 1705,238.9 1706,238.9 1707,238.4 1708,239.0 1709,238.8 1710,238.4 1711,236.2 1712,229.9 1713,227.0 1714,230.2 1715,236.1 1716,238.6 1717,238.8 1718,238.8 1719,239.0 1720,238.4 1721,238.8 1722,238.9 1723,237.7 1724,237.1 1725,236.9 1726,237.1 1727,238.0 1728,237.6 1729,235.9 1730,233.9 1731,231.8 1732,229.2 1733,227.6 1734,227.4 1735,226.2 1736,226.9 1737,228.5 1738,229.8 1739,231.5 1740,233.8 1741,235.9 1742,236.4 1743,236.7 1744,237.6 1745,237.4 1746,236.6 1747,237.2 1748,238.4 1749,238.6 1750,238.4 1751,238.7 1752,238.8 1753,238.7 1754,238.7 1755,238.7 1756,237.6 1757,236.1 1758,235.0 1759,234.3 1760,234.0 1761,234.0 1762,234.8 1763,236.0 1764,237.5 1765,238.6 1766,238.5 1767,239.0 1768,238.1 1769,237.1 1770,236.3 1771,235.9 1772,235.9 1773,234.4 1774,231.5 1775,230.5 1776,231.1 1777,234.2 1778,237.2 1779,238.9 1780,237.4 1781,236.1 1782,235.0 1783,234.2 1784,233.9 1785,233.9 1786,234.2 1787,235.0 1788,236.1 1789,236.8 1790,237.0 1791,236.8 1792,238.0 1793,238.4 1794,238.4 1795,238.5 1796,238.0 1797,237.6 1798,236.9 1799,235.0 1800,234.1 1801,234.4 1802,236.5 1803,238.4 1804,238.9 1805,238.9 1806,238.4 1807,236.8 1808,236.0 1809,236.0 1810,236.8 1811,238.4 1812,238.4 1813,238.4 1814,237.4 1815,236.0 1816,234.6 1817,233.8 1818,233.8 1819,234.6 1820,236.0 1821,238.0 1822,238.5 1823,238.0 1824,236.4 1825,235.5 1826,233.7 1827,232.6 1828,232.3 1829,232.6 1830,233.7 1831,235.5 1832,233.3 1833,230.2 1834,227.3 1835,224.0 1836,222.9 1837,221.3 1838,218.8 1839,221.2 1840,220.9 1841,224.3 1842,228.0 1843,230.4 1844,233.7 1845,236.0 1846,238.0 1847,237.2 1848,235.8 L1848,247.2 1847,245.8 1846,245.0 1845,247.0 1844,249.3 1843,252.6 1842,255.0 1841,258.7 1840,262.1 1839,261.8 1838,264.2 1837,261.7 1836,260.1 1835,259.0 1834,255.7 1833,252.8 1832,249.7 1831,247.5 1830,249.3 1829,250.4 1828,250.7 1827,250.4 1826,249.3 1825,247.5 1824,246.6 1823,245.0 1822,244.5 1821,245.0 1820,247.0 1819,248.4 1818,249.2 1817,249.2 1816,248.4 1815,247.0 1814,245.6 1813,244.6 1812,244.6 1811,244.6 1810,246.2 1809,247.0 1808,247.0 1807,246.2 1806,244.6 1805,244.1 1804,244.1 1803,244.6 1802,246.5 1801,248.6 1800,248.9 1799,248.0 1798,246.1 1797,245.4 1796,245.0 1795,244.5 1794,244.6 1793,244.6 1792,245.0 1791,246.2 1790,246.0 1789,246.2 1788,246.9 1787,248.0 1786,248.8 1785,249.1 1784,249.1 1783,248.8 1782,248.0 1781,246.9 1780,245.6 1779,244.1 1778,245.8 1777,248.8 1776,251.9 1775,252.5 1774,251.5 1773,248.6 1772,247.1 1771,247.1 1770,246.7 1769,245.9 1768,244.9 1767,244.0 1766,244.5 1765,244.4 1764,245.5 1763,247.0 1762,248.2 1761,249.0 1760,249.0 1759,248.7 1758,248.0 1757,246.9 1756,245.4 1755,244.3 1754,244.3 1753,244.3 1752,244.2 1751,244.3 1750,244.6 1749,244.4 1748,244.6 1747,245.8 1746,246.4 1745,245.6 1744,245.4 1743,246.3 1742,246.6 1741,247.1 1740,249.2 1739,251.5 1738,253.2 1737,254.5 1736,256.1 1735,256.8 1734,255.6 1733,255.4 1732,253.8 1731,251.2 1730,249.1 1729,247.1 1728,245.4 1727,245.0 1726,245.9 1725,246.1 1724,245.9 1723,245.3 1722,244.1 1721,244.2 1720,244.6 1719,244.0 1718,244.2 1717,244.2 1716,244.4 1715,246.9 1714,252.8 1713,256.0 1712,253.1 1711,246.8 1710,244.6 1709,244.2 1708,244.0 1707,244.6 1706,244.1 1705,244.1 1704,244.1 1703,244.1 1702,245.4 1701,246.1 1700,246.0 1699,246.0 1698,246.4 1697,246.8 1696,246.8 1695,246.4 1694,245.7 1693,244.8 1692,244.4 1691,244.5 1690,244.6 1689,244.3 1688,245.9 1687,247.3 1686,248.4 1685,249.1 1684,249.3 1683,249.1 1682,248.4 1681,247.3 1680,245.9 1679,244.6 1678,245.7 1677,250.6 1676,252.9 1675,250.3 1674,247.4 1673,248.4 1672,248.9 1671,248.9 1670,248.4 1669,247.4 1668,248.6 1667,249.1 1666,248.1 1665,246.3 1664,246.1 1663,247.8 1662,247.8 1661,246.1 1660,247.7 1659,250.7 1658,253.9 1657,256.4 1656,258.7 1655,258.2 1654,258.4 1653,255.9 1652,253.6 1651,250.8 1650,247.7 1649,249.8 1648,250.9 1647,250.1 1646,247.7 1645,247.4 1644,247.0 1643,245.8 1642,246.4 1641,248.9 1640,250.2 1639,250.2 1638,248.9 1637,246.4 1636,244.3 1635,244.2 1634,248.0 1633,254.7 1632,259.4 1631,254.8 1630,247.8 1629,243.9 1628,245.1 1627,246.8 1626,247.2 1625,246.8 1624,247.0 1623,246.8 1622,246.4 1621,248.1 1620,252.9 1619,257.1 1618,259.4 1617,256.7 1616,252.1 1615,249.4 1614,250.9 1613,250.9 1612,249.4 1611,246.8 1610,246.2 1609,245.8 1608,245.0 1607,244.3 1606,244.6 1605,244.2 1604,244.4 1603,244.0 1602,244.6 1601,244.4 1600,245.2 1599,249.2 1598,251.2 1597,248.7 1596,245.0 1595,244.0 1594,244.4 1593,244.6 1592,244.2 1591,244.6 1590,244.1 1589,244.6 1588,244.0 1587,244.5 1586,245.1 1585,245.3 1584,245.8 1583,245.9 1582,246.3 1581,246.0 1580,245.8 1579,245.4 1578,245.0 1577,244.4 1576,244.3 1575,244.3 1574,246.5 1573,248.5 1572,248.9 1571,248.4 1570,246.4 1569,245.3 1568,244.5 1567,244.0 1566,244.1 1565,244.4 1564,243.9 1563,244.6 1562,244.8 1561,246.9 1560,249.2 1559,251.6 1558,254.1 1557,254.7 1556,255.6 1555,254.9 1554,253.2 1553,251.9 1552,253.5 1551,250.3 1550,246.0 1549,246.4 1548,246.5 1547,246.4 1546,246.0 1545,245.3 1544,244.4 1543,244.3 1542,245.3 1541,246.2 1540,246.3 1539,245.8 1538,245.1 1537,244.6 1536,244.1 1535,244.6 1534,244.6 1533,245.8 1532,246.4 1531,246.0 1530,246.5 1529,246.0 1528,245.6 1527,249.1 1526,252.1 1525,252.5 1524,251.7 1523,248.5 1522,247.9 1521,247.9 1520,247.3 1519,246.1 1518,244.5 1517,245.3 1516,246.4 1515,247.3 1514,246.9 1513,245.3 1512,244.0 1511,244.3 1510,244.4 1509,244.0 1508,247.0 1507,249.0 1506,249.0 1505,247.4 1504,246.7 1503,245.8 1502,244.8 1501,244.3 1500,245.1 1499,245.7 1498,246.0 1497,246.0 1496,245.7 1495,245.1 1494,249.9 1493,259.2 1492,265.0 1491,260.4 1490,249.8 1489,245.1 1488,245.1 1487,244.1 1486,244.4 1485,244.5 1484,244.6 1483,244.4 1482,244.2 1481,244.8 1480,246.0 1479,246.8 1478,247.2 1477,247.1 1476,246.0 1475,245.2 1474,245.2 1473,244.9 1472,244.2 1471,244.1 1470,244.1 1469,245.2 1468,246.2 1467,247.4 1466,248.1 1465,248.2 1464,247.8 1463,247.2 1462,246.4 1461,244.8 1460,244.3 1459,244.6 1458,243.9 1457,249.4 1456,257.0 1455,261.4 1454,257.7 1453,249.2 1452,244.1 1451,244.1 1450,244.3 1449,244.5 1448,245.2 1447,244.5 1446,244.1 1445,244.1 1444,245.8 1443,247.4 1442,247.9 1441,247.2 1440,246.1 1439,246.3 1438,246.1 1437,245.7 1436,245.9 1435,247.0 1434,248.3 1433,249.6 1432,250.4 1431,250.4 1430,251.3 1429,250.8 1428,250.2 1427,251.1 1426,251.4 1425,251.1 1424,250.2 1423,248.9 1422,247.1 1421,245.0 1420,244.1 1419,244.5 1418,244.6 1417,244.0 1416,244.1 1415,244.6 1414,244.4 1413,244.3 1412,246.4 1411,248.3 1410,248.7 1409,248.6 1408,246.1 1407,244.4 1406,244.4 1405,244.3 1404,244.8 1403,245.3 1402,245.7 1401,246.0 1400,246.3 1399,246.0 1398,245.7 1397,245.7 1396,246.2 1395,245.7 1394,244.4 1393,244.6 1392,244.5 1391,245.8 1390,246.2 1389,245.7 1388,244.4 1387,244.2 1386,244.2 1385,244.3 1384,245.6 1383,246.4 1382,246.5 1381,248.2 1380,249.1 1379,248.6 1378,246.4 1377,244.4 1376,244.1 1375,244.6 1374,244.2 1373,243.9 1372,244.6 1371,244.3 1370,244.2 1369,246.5 1368,248.7 1367,249.5 1366,248.7 1365,246.6 1364,245.9 1363,244.8 1362,244.5 1361,246.3 1360,247.9 1359,249.2 1358,250.1 1357,250.6 1356,251.6 1355,254.0 1354,255.8 1353,259.0 1352,261.4 1351,261.8 1350,262.9 1349,261.8 1348,260.6 1347,259.1 1346,256.8 1345,254.7 1344,251.2 1343,249.6 1342,247.0 1341,245.6 1340,244.6 1339,244.0 1338,246.5 1337,253.0 1336,255.1 1335,252.5 1334,246.5 1333,244.4 1332,244.5 1331,244.0 1330,244.6 1329,244.5 1328,245.0 1327,245.2 1326,245.2 1325,246.5 1324,253.1 1323,256.4 1322,253.2 1321,246.9 1320,244.5 1319,243.9 1318,244.1 1317,244.3 1316,244.1 1315,244.3 1314,244.6 1313,244.5 1312,244.1 1311,244.4 1310,244.6 1309,245.7 1308,246.2 1307,245.9 1306,244.5 1305,243.9 1304,244.1 1303,244.1 1302,248.3 1301,259.1 1300,264.3 1299,258.5 1298,248.1 1297,244.5 1296,244.3 1295,244.2 1294,244.1 1293,244.6 1292,244.0 1291,243.9 1290,244.1 1289,245.8 1288,247.2 1287,248.3 1286,249.1 1285,249.5 1284,249.5 1283,249.1 1282,248.3 1281,247.2 1280,245.8 1279,244.5 1278,244.3 1277,244.2 1276,244.4 1275,244.4 1274,244.5 1273,244.1 1272,244.6 1271,244.4 1270,244.5 1269,244.8 1268,245.4 1267,245.0 1266,244.4 1265,244.4 1264,244.2 1263,244.4 1262,244.5 1261,244.4 1260,244.4 1259,245.6 1258,247.6 1257,248.9 1256,248.8 1255,248.9 1254,247.4 1253,245.7 1252,244.2 1251,244.3 1250,244.2 1249,245.5 1248,247.7 1247,249.3 1246,250.1 1245,250.1 1244,249.3 1243,247.7 1242,245.5 1241,244.3 1240,244.0 1239,245.1 1238,246.6 1237,247.1 1236,247.7 1235,248.1 1234,248.1 1233,247.7 1232,246.8 1231,245.6 1230,244.1 1229,244.1 1228,244.2 1227,245.5 1226,250.2 1225,252.7 1224,250.0 1223,245.5 1222,244.5 1221,246.5 1220,250.3 1219,254.1 1218,255.5 1217,254.5 1216,250.4 1215,246.8 1214,244.5 1213,244.6 1212,246.0 1211,250.3 1210,252.7 1209,250.4 1208,246.6 1207,247.6 1206,247.6 1205,246.6 1204,252.9 1203,256.3 1202,252.5 1201,247.6 1200,245.3 1199,245.0 1198,245.1 1197,244.6 1196,244.8 1195,245.3 1194,247.5 1193,249.3 1192,250.4 1191,250.7 1190,250.4 1189,249.3 1188,250.8 1187,253.7 1186,251.0 1185,246.0 1184,245.1 1183,254.8 1182,260.3 1181,252.7 1180,250.8 1179,254.8 1178,257.1 1177,257.1 1176,264.0 1175,270.1 1174,263.8 1173,273.0 1172,260.8 1171,254.0 1170,264.0 1169,270.8 1168,273.3 1167,270.8 1166,265.7 1165,268.9 1164,265.8 1163,255.8 1162,256.7 1161,256.7 1160,254.5 1159,250.7 1158,253.2 1157,261.7 1156,267.6 1155,269.6 1154,267.6 1153,261.7 1152,253.2 1151,255.6 1150,265.5 1149,265.5 1148,255.6 1147,256.7 1146,266.1 1145,269.0 1144,266.5 1143,265.2 1142,265.2 1141,255.5 1140,255.4 1139,262.5 1138,259.9 1137,252.4 1136,250.6 1135,255.7 1134,255.7 1133,250.6 1132,250.6 1131,257.4 1130,262.3 1129,263.3 1128,261.7 1127,257.2 1126,250.7 1125,248.8 1124,251.9 1123,258.9 1122,263.2 1121,259.2 1120,249.5 1119,254.8 1118,265.6 1117,265.6 1116,254.8 1115,250.4 1114,260.1 1113,264.7 1112,261.6 1111,260.2 1110,254.6 1109,248.5 1108,249.5 1107,251.7 1106,247.0 1105,246.1 1104,249.5 1103,251.9 1102,252.7 1101,251.9 1100,249.5 1099,246.1 1098,245.2 1097,247.0 1096,247.7 1095,249.5 1094,248.7 1093,250.3 1092,256.7 1091,260.5 1090,264.4 1089,258.9 1088,250.4 1087,251.3 1086,255.9 1085,251.3 1084,248.1 1083,250.6 1082,252.2 1081,259.4 1080,262.8 1079,259.6 1078,252.9 1077,258.6 1076,263.0 1075,263.1 1074,258.7 1073,251.1 1072,248.8 1071,256.3 1070,260.1 1069,256.0 1068,252.0 1067,249.7 1066,253.5 1065,262.9 1064,269.4 1063,271.7 1062,269.4 1061,262.9 1060,254.8 1059,265.1 1058,267.1 1057,264.2 1056,262.8 1055,261.4 1054,257.4 1053,251.6 1052,256.9 1051,269.1 1050,269.1 1049,262.5 1048,266.9 1047,264.7 1046,256.6 1045,255.4 1044,266.6 1043,271.0 1042,266.7 1041,266.8 1040,270.8 1039,266.0 1038,263.2 1037,264.8 1036,263.2 1035,258.7 1034,252.1 1033,264.5 1032,272.2 1031,269.7 1030,269.7 1029,264.0 1028,254.2 1027,257.1 1026,265.2 1025,269.7 1024,266.0 1023,261.2 1022,253.2 1021,257.9 1020,267.2 1019,256.8 1018,255.3 1017,262.9 1016,255.2 1015,251.8 1014,258.9 1013,263.0 1012,264.4 1011,260.5 1010,251.7 1009,253.9 1008,260.2 1007,253.9 1006,250.7 1005,255.7 1004,261.9 1003,267.1 1002,262.7 1001,254.2 1000,256.9 999,261.0 998,262.4 997,260.9 996,256.8 995,250.9 994,257.9 993,261.8 992,258.2 991,255.9 990,250.7 989,254.4 988,264.2 987,264.1 986,261.7 985,266.5 984,263.5 983,260.1 982,261.5 981,260.1 980,256.2 979,250.6 978,250.1 977,254.9 976,260.8 975,265.9 974,259.3 973,254.9 972,250.1 971,253.6 970,262.3 969,262.3 968,253.6 967,253.4 966,262.7 965,266.4 964,262.8 963,261.7 962,266.8 961,262.2 960,258.8 959,258.9 958,255.8 957,253.0 956,261.9 955,265.7 954,261.1 953,253.1 952,255.5 951,251.5 950,251.8 949,260.6 948,268.0 947,264.0 946,259.6 945,251.9 944,252.7 943,261.9 942,267.2 941,267.3 940,266.4 939,262.3 938,253.6 937,259.6 936,262.5 935,259.7 934,262.2 933,267.1 932,261.9 931,264.9 930,265.0 929,258.1 928,249.7 927,249.3 926,253.1 925,249.3 924,250.5 923,257.7 922,257.6 921,252.4 920,248.1 919,253.4 918,256.3 917,257.5 916,256.2 915,252.8 914,250.3 913,256.5 912,257.8 911,256.4 910,250.7 909,249.1 908,250.9 907,251.4 906,255.7 905,257.1 904,255.3 903,250.1 902,252.0 901,252.0 900,252.9 899,255.6 898,255.7 897,255.7 896,249.7 895,250.5 894,250.8 893,250.5 892,249.7 891,248.9 890,251.6 889,252.6 888,253.1 887,251.2 886,248.9 885,251.3 884,253.4 883,254.3 882,254.7 881,254.3 880,252.8 879,250.2 878,247.8 877,248.8 876,250.9 875,250.6 874,250.4 873,249.1 872,247.1 871,245.1 870,245.1 869,244.4 868,246.6 867,249.8 866,253.5 865,257.2 864,261.2 863,262.6 862,261.0 861,260.2 860,256.6 859,251.9 858,248.2 857,245.9 856,246.1 855,246.4 854,246.7 853,247.9 852,249.5 851,250.5 850,251.5 849,250.6 848,249.9 847,248.4 846,246.6 845,245.1 844,245.9 843,247.5 842,248.9 841,249.6 840,250.3 839,249.8 838,248.5 837,247.4 836,246.1 835,245.5 834,245.9 833,245.9 832,245.5 831,244.7 830,244.7 829,245.8 828,247.3 827,248.3 826,248.8 825,248.6 824,247.3 823,246.4 822,244.8 821,245.0 820,244.6 819,245.0 818,245.4 817,245.6 816,246.1 815,246.2 814,246.0 813,245.8 812,245.1 811,244.5 810,244.9 809,245.1 808,245.1 807,244.5 806,244.9 805,245.3 804,245.6 803,246.1 802,246.0 801,245.9 800,245.5 799,245.3 798,244.6 797,244.9 796,245.3 795,245.4 794,245.3 793,244.9 792,246.2 791,246.9 790,247.2 789,247.0 788,246.0 787,244.9 786,244.7 785,244.5 784,244.7 783,244.6 782,245.1 781,249.1 780,254.0 779,257.2 778,258.7 777,254.9 776,250.8 775,248.6 774,246.4 773,244.7 772,244.5 771,245.2 770,246.9 769,250.4 768,252.8 767,252.5 766,250.4 765,247.7 764,245.0 763,244.3 762,244.7 761,245.6 760,248.3 759,250.0 758,251.8 757,252.5 756,252.7 755,254.4 754,256.9 753,260.6 752,264.3 751,265.3 750,264.0 749,264.8 748,263.2 747,259.2 746,255.4 745,253.0 744,249.5 743,247.3 742,246.0 741,245.0 740,245.1 739,244.7 738,244.7 737,244.5 736,244.7 735,244.9 734,245.1 733,246.0 732,246.6 731,247.5 730,246.9 729,246.5 728,245.9 727,244.7 726,245.4 725,247.7 724,249.5 723,250.6 722,251.0 721,250.6 720,249.5 719,247.7 718,245.4 717,245.1 716,245.1 715,244.4 714,245.0 713,244.7 712,246.5 711,250.3 710,254.5 709,257.4 708,256.3 707,252.4 706,248.1 705,245.0 704,244.7 703,244.9 702,246.5 701,248.6 700,249.4 699,248.5 698,246.5 697,246.2 696,246.0 695,247.9 694,254.0 693,259.7 692,264.4 691,262.6 690,258.4 689,251.9 688,246.9 687,246.6 686,249.4 685,253.1 684,254.8 683,255.1 682,254.5 681,252.0 680,249.3 679,246.9 678,244.9 677,244.4 676,244.9 675,244.6 674,245.1 673,244.4 672,245.0 671,244.7 670,244.6 669,244.6 668,244.7 667,244.5 666,245.1 665,246.0 664,246.0 663,247.3 662,250.4 661,250.5 660,250.2 659,250.7 658,252.0 657,252.7 656,253.2 655,251.4 654,250.3 653,248.8 652,246.5 651,246.3 650,246.8 649,247.0 648,246.8 647,246.3 646,245.6 645,244.8 644,246.1 643,246.6 642,247.1 641,246.7 640,246.2 639,244.7 638,244.3 637,245.1 636,244.8 635,244.8 634,245.1 633,245.7 632,248.1 631,248.9 630,248.5 629,246.8 628,244.9 627,244.4 626,245.5 625,253.0 624,261.7 623,258.6 622,249.6 621,244.5 620,246.9 619,250.4 618,250.5 617,248.8 616,245.9 615,245.1 614,245.1 613,245.2 612,244.4 611,244.8 610,245.3 609,245.4 608,245.3 607,247.0 606,250.4 605,252.7 604,251.2 603,247.7 602,244.4 601,244.8 600,245.8 599,246.7 598,247.3 597,247.6 596,247.6 595,247.3 594,246.7 593,245.8 592,246.3 591,245.9 590,245.7 589,244.6 588,244.8 587,245.7 586,246.4 585,246.4 584,245.7 583,244.6 582,244.3 Z" fill="#3b3b3b"/>
<path d="M582,330 L582,327.3 583,326.9 584,325.8 585,325.1 586,325.1 587,325.8 588,327.2 589,326.5 590,326.0 591,325.5 592,325.4 593,325.1 594,324.5 595,324.2 596,324.5 597,325.1 598,326.2 599,326.5 600,326.5 601,326.6 602,326.9 603,323.7 604,320.0 605,318.0 606,321.1 607,324.1 608,326.6 609,326.9 610,326.5 611,326.5 612,326.8 613,326.9 614,326.9 615,326.4 616,325.7 617,322.1 618,320.2 619,321.0 620,324.3 621,326.7 622,321.5 623,313.7 624,310.8 625,318.6 626,326.3 627,326.9 628,326.2 629,324.3 630,322.7 631,322.4 632,323.8 633,325.9 634,326.9 635,326.5 636,326.4 637,326.7 638,326.2 639,326.7 640,325.7 641,324.4 642,324.1 643,324.8 644,325.4 645,326.3 646,326.3 647,326.4 648,325.2 649,324.3 650,323.6 651,323.3 652,323.3 653,322.7 654,321.0 655,319.3 656,318.9 657,319.2 658,319.1 659,321.2 660,321.4 661,320.2 662,321.5 663,323.8 664,326.4 665,327.0 666,326.5 667,326.8 668,326.7 669,326.8 670,326.9 671,326.5 672,326.3 673,326.3 674,326.4 675,326.2 676,326.5 677,326.9 678,326.4 679,324.7 680,321.9 681,318.4 682,316.4 683,316.1 684,316.9 685,318.5 686,321.7 687,324.6 688,324.7 689,319.3 690,312.5 691,307.0 692,308.0 693,312.6 694,317.7 695,324.0 696,326.6 697,326.7 698,325.1 699,323.2 700,322.6 701,322.9 702,325.0 703,327.0 704,326.7 705,324.7 706,323.1 707,319.4 708,315.6 709,315.4 710,316.5 711,321.5 712,324.7 713,326.7 714,327.0 715,327.0 716,326.6 717,326.4 718,326.6 719,326.3 720,327.0 721,326.5 722,326.7 723,326.3 724,327.0 725,327.0 726,326.2 727,326.6 728,325.7 729,324.8 730,324.6 731,324.3 732,324.8 733,325.1 734,325.3 735,325.8 736,326.5 737,326.3 738,326.9 739,326.7 740,326.9 741,326.1 742,324.1 743,323.1 744,322.1 745,318.4 746,315.5 747,311.5 748,309.0 749,306.0 750,306.5 751,306.3 752,308.1 753,311.5 754,313.7 755,318.1 756,319.4 757,318.5 758,319.4 759,320.9 760,323.2 761,325.7 762,326.4 763,326.3 764,326.4 765,323.8 766,321.3 767,318.3 768,319.6 769,321.1 770,324.5 771,327.0 772,326.5 773,326.6 774,327.0 775,324.8 776,320.5 777,315.4 778,312.8 779,314.3 780,317.8 781,322.8 782,326.4 783,327.0 784,326.9 785,326.3 786,326.9 787,326.9 788,325.7 789,324.5 790,324.5 791,324.5 792,325.6 793,326.0 794,324.6 795,323.6 796,322.9 797,322.5 798,322.5 799,322.9 800,323.6 801,324.6 802,325.5 803,325.6 804,325.6 805,326.3 806,326.8 807,326.3 808,326.4 809,326.2 810,327.0 811,326.5 812,326.4 813,325.9 814,325.5 815,325.1 816,325.2 817,325.7 818,326.2 819,326.7 820,326.3 821,326.4 822,326.4 823,325.8 824,324.2 825,322.7 826,322.3 827,323.1 828,324.3 829,325.8 830,326.1 831,324.8 832,323.8 833,323.1 834,322.7 835,322.7 836,323.1 837,323.8 838,322.8 839,321.9 840,321.2 841,321.9 842,322.4 843,324.1 844,325.4 845,325.9 846,325.2 847,323.6 848,321.7 849,321.3 850,320.7 851,321.0 852,321.8 853,323.5 854,325.1 855,326.4 856,326.3 857,325.9 858,322.7 859,319.8 860,315.0 861,311.7 862,308.8 863,310.1 864,311.4 865,314.5 866,318.0 867,321.5 868,325.0 869,325.6 870,325.5 871,325.6 872,324.5 873,322.8 874,321.4 875,320.2 876,320.8 877,322.9 878,323.7 879,321.5 880,319.0 881,317.4 882,316.6 883,317.1 884,317.7 885,320.5 886,322.3 887,320.2 888,319.1 889,318.3 890,320.0 891,322.6 892,324.9 893,326.7 894,326.4 895,326.3 896,325.0 897,313.5 898,314.7 899,315.0 900,319.0 901,322.3 902,315.9 903,313.4 904,315.8 905,314.1 906,316.2 907,315.4 908,312.8 909,315.3 910,320.6 911,315.2 912,312.2 913,315.9 914,320.9 915,324.9 916,322.9 917,318.2 918,314.2 919,318.0 920,322.8 921,319.9 922,317.2 923,311.6 924,318.7 925,324.3 926,321.6 927,320.0 928,318.1 929,318.4 930,321.1 931,320.1 932,309.4 933,303.6 934,310.1 935,321.0 936,321.7 937,318.3 938,316.4 939,310.5 940,306.2 941,310.6 942,316.8 943,309.9 944,316.8 945,317.2 946,310.7 947,309.4 948,304.4 949,310.5 950,314.2 951,313.2 952,314.3 953,317.3 954,310.0 955,306.4 956,309.6 957,304.5 958,304.5 959,309.8 960,318.8 961,310.8 962,304.4 963,309.3 964,318.0 965,321.7 966,321.7 967,317.4 968,314.2 969,313.2 970,314.2 971,317.1 972,321.4 973,320.9 974,311.5 975,306.0 976,310.6 977,312.2 978,315.7 979,320.9 980,319.8 981,314.3 982,314.3 983,316.8 984,308.0 985,305.9 986,309.3 987,316.9 988,317.3 989,307.1 990,303.1 991,307.0 992,314.5 993,309.6 994,310.6 995,305.8 996,305.8 997,310.6 998,318.8 999,319.0 1000,310.9 1001,306.2 1002,306.2 1003,306.5 1004,308.4 1005,317.6 1006,315.8 1007,313.9 1008,315.8 1009,320.6 1010,319.0 1011,310.9 1012,305.2 1013,303.1 1014,305.2 1015,310.8 1016,319.0 1017,319.8 1018,313.3 1019,308.1 1020,306.7 1021,310.9 1022,318.4 1023,314.8 1024,306.0 1025,301.3 1026,302.6 1027,308.0 1028,317.3 1029,318.4 1030,312.5 1031,306.0 1032,300.1 1033,307.4 1034,312.2 1035,312.2 1036,318.3 1037,318.7 1038,312.3 1039,306.1 1040,301.9 1041,304.8 1042,314.4 1043,315.9 1044,312.9 1045,311.8 1046,312.9 1047,309.3 1048,305.1 1049,310.7 1050,314.5 1051,310.8 1052,309.5 1053,310.8 1054,314.5 1055,319.8 1056,314.2 1057,302.0 1058,302.0 1059,308.2 1060,316.2 1061,312.0 1062,307.3 1063,305.6 1064,307.3 1065,312.1 1066,319.0 1067,319.3 1068,315.2 1069,315.2 1070,311.6 1071,314.7 1072,316.9 1073,314.2 1074,314.2 1075,317.0 1076,321.8 1077,323.0 1078,319.1 1079,312.8 1080,309.2 1081,312.1 1082,318.4 1083,323.1 1084,322.5 1085,319.2 1086,317.9 1087,319.2 1088,321.7 1089,312.9 1090,308.6 1091,312.7 1092,316.9 1093,321.7 1094,322.2 1095,320.8 1096,322.4 1097,322.4 1098,323.7 1099,325.9 1100,325.5 1101,322.5 1102,320.4 1103,319.6 1104,320.4 1105,322.5 1106,325.5 1107,323.7 1108,316.5 1109,310.3 1110,307.6 1111,310.0 1112,311.2 1113,307.0 1114,311.0 1115,315.9 1116,317.4 1117,321.5 1118,321.1 1119,315.9 1120,313.0 1121,312.1 1122,307.3 1123,312.6 1124,317.8 1125,311.6 1126,317.9 1127,319.3 1128,311.0 1129,306.3 1130,306.3 1131,311.1 1132,319.4 1133,321.6 1134,317.2 1135,314.7 1136,314.7 1137,317.2 1138,321.7 1139,321.6 1140,316.9 1141,314.8 1142,314.8 1143,315.6 1144,306.1 1145,302.4 1146,305.8 1147,313.0 1148,318.6 1149,318.6 1150,311.3 1151,306.3 1152,304.5 1153,306.3 1154,308.8 1155,303.1 1156,309.2 1157,310.9 1158,316.8 1159,316.2 1160,307.2 1161,307.2 1162,316.2 1163,312.7 1164,302.8 1165,302.4 1166,305.9 1167,313.4 1168,309.2 1169,307.8 1170,309.2 1171,313.4 1172,319.3 1173,317.0 1174,306.8 1175,299.8 1176,297.2 1177,299.8 1178,306.8 1179,317.0 1180,310.3 1181,298.1 1182,310.3 1183,323.5 1184,324.3 1185,322.2 1186,320.0 1187,317.1 1188,320.4 1189,325.3 1190,326.9 1191,326.0 1192,325.3 1193,325.3 1194,326.0 1195,326.4 1196,326.8 1197,326.7 1198,326.9 1199,326.0 1200,326.7 1201,325.0 1202,319.4 1203,315.1 1204,319.5 1205,324.9 1206,323.9 1207,323.9 1208,325.7 1209,321.0 1210,318.3 1211,321.6 1212,323.7 1213,324.1 1214,325.2 1215,325.0 1216,321.0 1217,317.3 1218,315.9 1219,317.6 1220,320.6 1221,324.8 1222,326.3 1223,325.8 1224,321.0 1225,319.0 1226,320.7 1227,325.8 1228,327.3 1229,326.9 1230,326.9 1231,326.7 1232,327.1 1233,326.9 1234,327.1 1235,326.5 1236,325.1 1237,324.0 1238,324.8 1239,326.4 1240,326.9 1241,326.4 1242,324.5 1243,323.2 1244,322.8 1245,322.5 1246,323.1 1247,325.1 1248,327.0 1249,327.1 1250,327.0 1251,327.4 1252,327.2 1253,325.5 1254,324.1 1255,322.5 1256,322.2 1257,323.0 1258,324.0 1259,325.5 1260,327.1 1261,327.3 1262,327.1 1263,326.8 1264,327.4 1265,327.1 1266,326.7 1267,326.4 1268,326.1 1269,326.7 1270,327.0 1271,327.3 1272,327.2 1273,327.3 1274,326.8 1275,325.3 1276,324.8 1277,325.3 1278,326.8 1279,326.7 1280,327.0 1281,327.2 1282,326.2 1283,325.1 1284,324.4 1285,324.2 1286,324.4 1287,325.1 1288,326.2 1289,326.9 1290,327.1 1291,327.0 1292,327.0 1293,327.4 1294,327.4 1295,327.4 1296,327.0 1297,326.7 1298,322.8 1299,313.2 1300,305.7 1301,313.3 1302,320.5 1303,320.9 1304,322.0 1305,323.8 1306,326.0 1307,325.9 1308,325.1 1309,325.9 1310,327.0 1311,326.7 1312,326.8 1313,327.1 1314,327.4 1315,326.8 1316,327.1 1317,327.1 1318,326.7 1319,326.7 1320,327.4 1321,324.5 1322,318.6 1323,315.6 1324,318.6 1325,324.7 1326,327.1 1327,326.8 1328,327.0 1329,327.2 1330,327.0 1331,326.8 1332,327.4 1333,327.0 1334,324.9 1335,318.8 1336,315.7 1337,318.5 1338,324.9 1339,326.8 1340,327.2 1341,325.9 1342,324.1 1343,322.5 1344,319.7 1345,317.1 1346,315.6 1347,313.4 1348,310.1 1349,308.9 1350,309.0 1351,310.3 1352,310.4 1353,313.4 1354,314.4 1355,317.2 1356,319.7 1357,322.3 1358,324.5 1359,326.1 1360,326.8 1361,326.9 1362,326.9 1363,326.7 1364,325.6 1365,324.8 1366,324.2 1367,324.9 1368,325.4 1369,325.3 1370,324.7 1371,324.7 1372,325.3 1373,326.2 1374,327.4 1375,327.3 1376,326.9 1377,323.0 1378,320.5 1379,320.5 1380,322.5 1381,323.4 1382,325.3 1383,327.1 1384,327.3 1385,327.1 1386,327.3 1387,327.1 1388,326.7 1389,325.9 1390,325.3 1391,325.9 1392,327.0 1393,327.2 1394,326.7 1395,326.7 1396,326.5 1397,326.0 1398,325.5 1399,325.3 1400,325.3 1401,325.3 1402,325.8 1403,326.1 1404,325.3 1405,324.1 1406,323.4 1407,323.4 1408,324.1 1409,322.9 1410,322.6 1411,322.9 1412,325.2 1413,327.1 1414,327.3 1415,327.1 1416,327.1 1417,327.4 1418,327.1 1419,327.2 1420,327.3 1421,327.1 1422,326.7 1423,325.3 1424,323.8 1425,322.8 1426,322.3 1427,322.3 1428,321.4 1429,320.2 1430,320.4 1431,320.8 1432,321.2 1433,321.9 1434,323.5 1435,324.3 1436,325.4 1437,325.6 1438,325.8 1439,326.6 1440,325.5 1441,324.3 1442,323.1 1443,323.9 1444,325.6 1445,327.4 1446,327.1 1447,326.8 1448,326.8 1449,326.9 1450,327.2 1451,326.7 1452,326.3 1453,322.2 1454,313.6 1455,309.1 1456,313.3 1457,322.7 1458,326.8 1459,327.4 1460,327.1 1461,326.6 1462,325.3 1463,324.2 1464,323.5 1465,323.3 1466,323.7 1467,324.3 1468,325.6 1469,326.5 1470,327.2 1471,327.4 1472,326.8 1473,327.2 1474,326.7 1475,326.6 1476,325.6 1477,324.4 1478,324.4 1479,324.8 1480,325.5 1481,326.6 1482,327.1 1483,327.5 1484,324.5 1485,323.2 1486,324.5 1487,326.7 1488,326.9 1489,327.1 1490,321.5 1491,310.6 1492,306.1 1493,312.4 1494,321.4 1495,326.7 1496,325.9 1497,323.9 1498,322.8 1499,322.8 1500,323.9 1501,325.9 1502,326.6 1503,325.7 1504,324.6 1505,324.2 1506,324.2 1507,324.7 1508,326.4 1509,327.4 1510,326.8 1511,326.7 1512,325.5 1513,325.5 1514,324.7 1515,324.3 1516,325.1 1517,326.0 1518,324.2 1519,323.5 1520,324.2 1521,326.0 1522,325.7 1523,322.8 1524,320.0 1525,319.2 1526,320.1 1527,322.9 1528,325.6 1529,326.9 1530,327.0 1531,325.8 1532,324.9 1533,323.3 1534,322.0 1535,321.0 1536,320.6 1537,320.6 1538,321.0 1539,322.0 1540,323.3 1541,324.9 1542,326.4 1543,327.4 1544,326.7 1545,327.4 1546,326.3 1547,325.1 1548,324.3 1549,323.9 1550,323.9 1551,321.6 1552,318.3 1553,320.0 1554,318.3 1555,315.8 1556,316.0 1557,316.6 1558,317.5 1559,319.7 1560,322.1 1561,324.6 1562,326.5 1563,326.6 1564,324.6 1565,322.9 1566,321.6 1567,320.8 1568,320.5 1569,320.8 1570,321.6 1571,322.9 1572,322.2 1573,323.3 1574,325.4 1575,326.8 1576,327.5 1577,326.4 1578,325.2 1579,324.4 1580,323.8 1581,323.6 1582,323.8 1583,324.4 1584,325.2 1585,326.0 1586,326.5 1587,327.1 1588,327.3 1589,327.3 1590,327.3 1591,327.3 1592,327.1 1593,326.7 1594,326.9 1595,326.9 1596,326.4 1597,322.2 1598,320.1 1599,322.9 1600,324.7 1601,324.2 1602,324.0 1603,324.2 1604,324.7 1605,325.5 1606,326.6 1607,327.3 1608,326.3 1609,325.6 1610,325.2 1611,325.5 1612,326.4 1613,327.3 1614,327.1 1615,323.9 1616,319.5 1617,314.4 1618,312.4 1619,314.7 1620,319.4 1621,324.0 1622,326.3 1623,324.5 1624,323.5 1625,323.5 1626,324.1 1627,325.0 1628,326.4 1629,326.9 1630,323.7 1631,316.3 1632,312.5 1633,316.6 1634,323.8 1635,327.1 1636,327.1 1637,327.2 1638,327.4 1639,327.3 1640,327.3 1641,326.9 1642,326.9 1643,325.5 1644,324.9 1645,324.3 1646,323.8 1647,321.6 1648,320.0 1649,321.7 1650,324.0 1651,321.4 1652,317.7 1653,316.1 1654,313.1 1655,313.5 1656,314.4 1657,315.8 1658,317.5 1659,320.9 1660,323.7 1661,326.1 1662,326.9 1663,327.3 1664,327.3 1665,325.3 1666,323.6 1667,322.2 1668,323.0 1669,324.9 1670,327.0 1671,326.8 1672,327.3 1673,327.0 1674,325.8 1675,321.3 1676,318.6 1677,320.7 1678,324.7 1679,325.8 1680,327.3 1681,327.2 1682,327.3 1683,326.8 1684,326.4 1685,325.3 1686,324.5 1687,324.1 1688,324.1 1689,324.5 1690,325.3 1691,326.4 1692,326.9 1693,327.0 1694,327.3 1695,327.3 1696,326.9 1697,326.6 1698,326.2 1699,325.5 1700,325.3 1701,325.7 1702,326.3 1703,327.3 1704,327.3 1705,326.9 1706,327.0 1707,327.0 1708,327.0 1709,327.4 1710,326.7 1711,324.5 1712,319.3 1713,316.0 1714,319.2 1715,324.8 1716,327.4 1717,327.4 1718,326.9 1719,326.8 1720,327.3 1721,327.2 1722,326.9 1723,326.3 1724,325.3 1725,325.4 1726,325.6 1727,326.3 1728,326.0 1729,324.4 1730,322.5 1731,320.6 1732,318.0 1733,316.0 1734,315.9 1735,315.1 1736,314.7 1737,316.9 1738,318.7 1739,320.6 1740,322.2 1741,324.5 1742,326.2 1743,327.0 1744,326.8 1745,325.6 1746,325.2 1747,325.6 1748,326.7 1749,327.1 1750,326.5 1751,324.7 1752,323.5 1753,323.1 1754,323.5 1755,324.7 1756,325.8 1757,324.8 1758,323.2 1759,322.5 1760,322.4 1761,322.0 1762,322.8 1763,325.0 1764,326.0 1765,327.1 1766,327.2 1767,326.2 1768,325.4 1769,325.1 1770,325.4 1771,326.2 1772,325.8 1773,322.9 1774,320.3 1775,319.1 1776,319.9 1777,322.6 1778,325.6 1779,327.2 1780,326.8 1781,326.8 1782,327.3 1783,325.9 1784,325.2 1785,325.2 1786,325.9 1787,326.9 1788,326.2 1789,325.4 1790,325.1 1791,324.4 1792,322.7 1793,321.3 1794,320.5 1795,320.2 1796,320.5 1797,321.3 1798,322.7 1799,323.5 1800,322.5 1801,323.5 1802,325.1 1803,327.0 1804,325.2 1805,323.7 1806,322.5 1807,321.8 1808,321.5 1809,321.8 1810,322.5 1811,323.7 1812,325.2 1813,326.8 1814,325.7 1815,325.4 1816,324.7 1817,322.8 1818,322.8 1819,324.7 1820,327.2 1821,327.1 1822,326.9 1823,326.1 1824,324.7 1825,324.6 1826,324.7 1827,326.2 1828,327.3 1829,326.8 1830,326.3 1831,324.4 1832,321.8 1833,318.7 1834,315.8 1835,313.2 1836,311.1 1837,309.4 1838,308.0 1839,308.7 1840,310.6 1841,312.4 1842,316.6 1843,319.2 1844,322.0 1845,324.3 1846,326.3 1847,326.9 1848,326.2 L1848,333.8 1847,333.1 1846,333.7 1845,335.7 1844,338.0 1843,340.8 1842,343.4 1841,347.6 1840,349.4 1839,351.3 1838,352.0 1837,350.6 1836,348.9 1835,346.8 1834,344.2 1833,341.3 1832,338.2 1831,335.6 1830,333.7 1829,333.2 1828,332.7 1827,333.8 1826,335.3 1825,335.4 1824,335.3 1823,333.9 1822,333.1 1821,332.9 1820,332.8 1819,335.3 1818,337.2 1817,337.2 1816,335.3 1815,334.6 1814,334.3 1813,333.2 1812,334.8 1811,336.3 1810,337.5 1809,338.2 1808,338.5 1807,338.2 1806,337.5 1805,336.3 1804,334.8 1803,333.0 1802,334.9 1801,336.5 1800,337.5 1799,336.5 1798,337.3 1797,338.7 1796,339.5 1795,339.8 1794,339.5 1793,338.7 1792,337.3 1791,335.6 1790,334.9 1789,334.6 1788,333.8 1787,333.1 1786,334.1 1785,334.8 1784,334.8 1783,334.1 1782,332.7 1781,333.2 1780,333.2 1779,332.8 1778,334.4 1777,337.4 1776,340.1 1775,340.9 1774,339.7 1773,337.1 1772,334.2 1771,333.8 1770,334.6 1769,334.9 1768,334.6 1767,333.8 1766,332.8 1765,332.9 1764,334.0 1763,335.0 1762,337.2 1761,338.0 1760,337.6 1759,337.5 1758,336.8 1757,335.2 1756,334.2 1755,335.3 1754,336.5 1753,336.9 1752,336.5 1751,335.3 1750,333.5 1749,332.9 1748,333.3 1747,334.4 1746,334.8 1745,334.4 1744,333.2 1743,333.0 1742,333.8 1741,335.5 1740,337.8 1739,339.4 1738,341.3 1737,343.1 1736,345.3 1735,344.9 1734,344.1 1733,344.0 1732,342.0 1731,339.4 1730,337.5 1729,335.6 1728,334.0 1727,333.7 1726,334.4 1725,334.6 1724,334.7 1723,333.7 1722,333.1 1721,332.8 1720,332.7 1719,333.2 1718,333.1 1717,332.6 1716,332.6 1715,335.2 1714,340.8 1713,344.0 1712,340.7 1711,335.5 1710,333.3 1709,332.6 1708,333.0 1707,333.0 1706,333.0 1705,333.1 1704,332.7 1703,332.7 1702,333.7 1701,334.3 1700,334.7 1699,334.5 1698,333.8 1697,333.4 1696,333.1 1695,332.7 1694,332.7 1693,333.0 1692,333.1 1691,333.6 1690,334.7 1689,335.5 1688,335.9 1687,335.9 1686,335.5 1685,334.7 1684,333.6 1683,333.2 1682,332.7 1681,332.8 1680,332.7 1679,334.2 1678,335.3 1677,339.3 1676,341.4 1675,338.7 1674,334.2 1673,333.0 1672,332.7 1671,333.2 1670,333.0 1669,335.1 1668,337.0 1667,337.8 1666,336.4 1665,334.7 1664,332.7 1663,332.7 1662,333.1 1661,333.9 1660,336.3 1659,339.1 1658,342.5 1657,344.2 1656,345.6 1655,346.5 1654,346.9 1653,343.9 1652,342.3 1651,338.6 1650,336.0 1649,338.3 1648,340.0 1647,338.4 1646,336.2 1645,335.7 1644,335.1 1643,334.5 1642,333.1 1641,333.1 1640,332.7 1639,332.7 1638,332.6 1637,332.8 1636,332.9 1635,332.9 1634,336.2 1633,343.4 1632,347.5 1631,343.7 1630,336.3 1629,333.1 1628,333.6 1627,335.0 1626,335.9 1625,336.5 1624,336.5 1623,335.5 1622,333.7 1621,336.0 1620,340.6 1619,345.3 1618,347.6 1617,345.6 1616,340.5 1615,336.1 1614,332.9 1613,332.7 1612,333.6 1611,334.5 1610,334.8 1609,334.4 1608,333.7 1607,332.7 1606,333.4 1605,334.5 1604,335.3 1603,335.8 1602,336.0 1601,335.8 1600,335.3 1599,337.1 1598,339.9 1597,337.8 1596,333.6 1595,333.1 1594,333.1 1593,333.3 1592,332.9 1591,332.7 1590,332.7 1589,332.7 1588,332.7 1587,332.9 1586,333.5 1585,334.0 1584,334.8 1583,335.6 1582,336.2 1581,336.4 1580,336.2 1579,335.6 1578,334.8 1577,333.6 1576,332.5 1575,333.2 1574,334.6 1573,336.7 1572,337.8 1571,337.1 1570,338.4 1569,339.2 1568,339.5 1567,339.2 1566,338.4 1565,337.1 1564,335.4 1563,333.4 1562,333.5 1561,335.4 1560,337.9 1559,340.3 1558,342.5 1557,343.4 1556,344.0 1555,344.2 1554,341.7 1553,340.0 1552,341.7 1551,338.4 1550,336.1 1549,336.1 1548,335.7 1547,334.9 1546,333.7 1545,332.6 1544,333.3 1543,332.6 1542,333.6 1541,335.1 1540,336.7 1539,338.0 1538,339.0 1537,339.4 1536,339.4 1535,339.0 1534,338.0 1533,336.7 1532,335.1 1531,334.2 1530,333.0 1529,333.1 1528,334.4 1527,337.1 1526,339.9 1525,340.8 1524,340.0 1523,337.2 1522,334.3 1521,334.0 1520,335.8 1519,336.5 1518,335.8 1517,334.0 1516,334.9 1515,335.7 1514,335.3 1513,334.5 1512,334.5 1511,333.3 1510,333.2 1509,332.6 1508,333.6 1507,335.3 1506,335.8 1505,335.8 1504,335.4 1503,334.3 1502,333.4 1501,334.1 1500,336.1 1499,337.2 1498,337.2 1497,336.1 1496,334.1 1495,333.3 1494,338.6 1493,347.6 1492,353.9 1491,349.4 1490,338.5 1489,332.9 1488,333.1 1487,333.3 1486,335.5 1485,336.8 1484,335.5 1483,332.5 1482,332.9 1481,333.4 1480,334.5 1479,335.2 1478,335.6 1477,335.6 1476,334.4 1475,333.4 1474,333.3 1473,332.8 1472,333.2 1471,332.6 1470,332.8 1469,333.5 1468,334.4 1467,335.7 1466,336.3 1465,336.7 1464,336.5 1463,335.8 1462,334.7 1461,333.4 1460,332.9 1459,332.6 1458,333.2 1457,337.3 1456,346.7 1455,350.9 1454,346.4 1453,337.8 1452,333.7 1451,333.3 1450,332.8 1449,333.1 1448,333.2 1447,333.2 1446,332.9 1445,332.6 1444,334.4 1443,336.1 1442,336.9 1441,335.7 1440,334.5 1439,333.4 1438,334.2 1437,334.4 1436,334.6 1435,335.7 1434,336.5 1433,338.1 1432,338.8 1431,339.2 1430,339.6 1429,339.8 1428,338.6 1427,337.7 1426,337.7 1425,337.2 1424,336.2 1423,334.7 1422,333.3 1421,332.9 1420,332.7 1419,332.8 1418,332.9 1417,332.6 1416,332.9 1415,332.9 1414,332.7 1413,332.9 1412,334.8 1411,337.1 1410,337.4 1409,337.1 1408,335.9 1407,336.6 1406,336.6 1405,335.9 1404,334.7 1403,333.9 1402,334.2 1401,334.7 1400,334.7 1399,334.7 1398,334.5 1397,334.0 1396,333.5 1395,333.3 1394,333.3 1393,332.8 1392,333.0 1391,334.1 1390,334.7 1389,334.1 1388,333.3 1387,332.9 1386,332.7 1385,332.9 1384,332.7 1383,332.9 1382,334.7 1381,336.6 1380,337.5 1379,339.5 1378,339.5 1377,337.0 1376,333.1 1375,332.7 1374,332.6 1373,333.8 1372,334.7 1371,335.3 1370,335.3 1369,334.7 1368,334.6 1367,335.1 1366,335.8 1365,335.2 1364,334.4 1363,333.3 1362,333.1 1361,333.1 1360,333.2 1359,333.9 1358,335.5 1357,337.7 1356,340.3 1355,342.8 1354,345.6 1353,346.6 1352,349.6 1351,349.7 1350,351.0 1349,351.1 1348,349.9 1347,346.6 1346,344.4 1345,342.9 1344,340.3 1343,337.5 1342,335.9 1341,334.1 1340,332.8 1339,333.2 1338,335.1 1337,341.5 1336,344.3 1335,341.2 1334,335.1 1333,333.0 1332,332.6 1331,333.2 1330,333.0 1329,332.8 1328,333.0 1327,333.2 1326,332.9 1325,335.3 1324,341.4 1323,344.4 1322,341.4 1321,335.5 1320,332.6 1319,333.3 1318,333.3 1317,332.9 1316,332.9 1315,333.2 1314,332.6 1313,332.9 1312,333.2 1311,333.3 1310,333.0 1309,334.1 1308,334.9 1307,334.1 1306,334.0 1305,336.2 1304,338.0 1303,339.1 1302,339.5 1301,346.7 1300,354.3 1299,346.8 1298,337.2 1297,333.3 1296,333.0 1295,332.6 1294,332.6 1293,332.6 1292,333.0 1291,333.0 1290,332.9 1289,333.1 1288,333.8 1287,334.9 1286,335.6 1285,335.8 1284,335.6 1283,334.9 1282,333.8 1281,332.8 1280,333.0 1279,333.3 1278,333.2 1277,334.7 1276,335.2 1275,334.7 1274,333.2 1273,332.7 1272,332.8 1271,332.7 1270,333.0 1269,333.3 1268,333.9 1267,333.6 1266,333.3 1265,332.9 1264,332.6 1263,333.2 1262,332.9 1261,332.7 1260,332.9 1259,334.5 1258,336.0 1257,337.0 1256,337.8 1255,337.5 1254,335.9 1253,334.5 1252,332.8 1251,332.6 1250,333.0 1249,332.9 1248,333.0 1247,334.9 1246,336.9 1245,337.5 1244,337.2 1243,336.8 1242,335.5 1241,333.6 1240,333.1 1239,333.6 1238,335.2 1237,336.0 1236,334.9 1235,333.5 1234,332.9 1233,333.1 1232,332.9 1231,333.3 1230,333.1 1229,333.1 1228,332.7 1227,334.2 1226,339.3 1225,341.0 1224,339.0 1223,334.2 1222,333.7 1221,335.2 1220,339.4 1219,342.4 1218,344.1 1217,342.7 1216,339.0 1215,335.0 1214,334.8 1213,335.9 1212,336.3 1211,338.4 1210,341.7 1209,339.0 1208,334.3 1207,336.1 1206,336.1 1205,335.1 1204,340.5 1203,344.9 1202,340.6 1201,335.0 1200,333.3 1199,334.0 1198,333.1 1197,333.3 1196,333.2 1195,333.6 1194,334.0 1193,334.7 1192,334.7 1191,334.0 1190,333.1 1189,334.7 1188,339.6 1187,342.9 1186,340.0 1185,337.8 1184,335.7 1183,336.5 1182,349.7 1181,361.9 1180,349.7 1179,343.0 1178,353.2 1177,360.2 1176,362.8 1175,360.2 1174,353.2 1173,343.0 1172,340.7 1171,346.6 1170,350.8 1169,352.2 1168,350.8 1167,346.6 1166,354.1 1165,357.6 1164,357.2 1163,347.3 1162,343.8 1161,352.8 1160,352.8 1159,343.8 1158,343.2 1157,349.1 1156,350.8 1155,356.9 1154,351.2 1153,353.7 1152,355.5 1151,353.7 1150,348.7 1149,341.4 1148,341.4 1147,347.0 1146,354.2 1145,357.6 1144,353.9 1143,344.4 1142,345.2 1141,345.2 1140,343.1 1139,338.4 1138,338.3 1137,342.8 1136,345.3 1135,345.3 1134,342.8 1133,338.4 1132,340.6 1131,348.9 1130,353.7 1129,353.7 1128,349.0 1127,340.7 1126,342.1 1125,348.4 1124,342.2 1123,347.4 1122,352.7 1121,347.9 1120,347.0 1119,344.1 1118,338.9 1117,338.5 1116,342.6 1115,344.1 1114,349.0 1113,353.0 1112,348.8 1111,350.0 1110,352.4 1109,349.7 1108,343.5 1107,336.3 1106,334.5 1105,337.5 1104,339.6 1103,340.4 1102,339.6 1101,337.5 1100,334.5 1099,334.1 1098,336.3 1097,337.6 1096,337.6 1095,339.2 1094,337.8 1093,338.3 1092,343.1 1091,347.3 1090,351.4 1089,347.1 1088,338.3 1087,340.8 1086,342.1 1085,340.8 1084,337.5 1083,336.9 1082,341.6 1081,347.9 1080,350.8 1079,347.2 1078,340.9 1077,337.0 1076,338.2 1075,343.0 1074,345.8 1073,345.8 1072,343.1 1071,345.3 1070,348.4 1069,344.8 1068,344.8 1067,340.7 1066,341.0 1065,347.9 1064,352.7 1063,354.4 1062,352.7 1061,348.0 1060,343.8 1059,351.8 1058,358.0 1057,358.0 1056,345.8 1055,340.2 1054,345.5 1053,349.2 1052,350.5 1051,349.2 1050,345.5 1049,349.3 1048,354.9 1047,350.7 1046,347.1 1045,348.2 1044,347.1 1043,344.1 1042,345.6 1041,355.2 1040,358.1 1039,353.9 1038,347.7 1037,341.3 1036,341.7 1035,347.8 1034,347.8 1033,352.6 1032,359.9 1031,354.0 1030,347.5 1029,341.6 1028,342.7 1027,352.0 1026,357.4 1025,358.7 1024,354.0 1023,345.2 1022,341.6 1021,349.1 1020,353.3 1019,351.9 1018,346.7 1017,340.2 1016,341.0 1015,349.2 1014,354.8 1013,356.9 1012,354.8 1011,349.1 1010,341.0 1009,339.4 1008,344.2 1007,346.1 1006,344.2 1005,342.4 1004,351.6 1003,353.5 1002,353.8 1001,353.8 1000,349.1 999,341.0 998,341.2 997,349.4 996,354.2 995,354.2 994,349.4 993,350.4 992,345.5 991,353.0 990,356.9 989,352.9 988,342.7 987,343.1 986,350.7 985,354.1 984,352.0 983,343.2 982,345.7 981,345.7 980,340.2 979,339.1 978,344.3 977,347.8 976,349.4 975,354.0 974,348.5 973,339.1 972,338.6 971,342.9 970,345.8 969,346.8 968,345.8 967,342.6 966,338.3 965,338.3 964,342.0 963,350.7 962,355.6 961,349.2 960,341.2 959,350.2 958,355.5 957,355.5 956,350.4 955,353.6 954,350.0 953,342.7 952,345.7 951,346.8 950,345.8 949,349.5 948,355.6 947,350.6 946,349.3 945,342.8 944,343.2 943,350.1 942,343.2 941,349.4 940,353.8 939,349.5 938,343.6 937,341.7 936,338.3 935,339.0 934,349.9 933,356.4 932,350.6 931,339.9 930,338.9 929,341.6 928,341.9 927,340.0 926,338.4 925,335.7 924,341.3 923,348.4 922,342.8 921,340.1 920,337.2 919,342.0 918,345.8 917,341.8 916,337.1 915,335.1 914,339.1 913,344.1 912,347.8 911,344.8 910,339.4 909,344.7 908,347.2 907,344.6 906,343.8 905,345.9 904,344.2 903,346.6 902,344.1 901,337.7 900,341.0 899,345.0 898,345.3 897,346.5 896,335.0 895,333.7 894,333.6 893,333.3 892,335.1 891,337.4 890,340.0 889,341.7 888,340.9 887,339.8 886,337.7 885,339.5 884,342.3 883,342.9 882,343.4 881,342.6 880,341.0 879,338.5 878,336.3 877,337.1 876,339.2 875,339.8 874,338.6 873,337.2 872,335.5 871,334.4 870,334.5 869,334.4 868,335.0 867,338.5 866,342.0 865,345.5 864,348.6 863,349.9 862,351.2 861,348.3 860,345.0 859,340.2 858,337.3 857,334.1 856,333.7 855,333.6 854,334.9 853,336.5 852,338.2 851,339.0 850,339.3 849,338.7 848,338.3 847,336.4 846,334.8 845,334.1 844,334.6 843,335.9 842,337.6 841,338.1 840,338.8 839,338.1 838,337.2 837,336.2 836,336.9 835,337.3 834,337.3 833,336.9 832,336.2 831,335.2 830,333.9 829,334.2 828,335.7 827,336.9 826,337.7 825,337.3 824,335.8 823,334.2 822,333.6 821,333.6 820,333.7 819,333.3 818,333.8 817,334.3 816,334.8 815,334.9 814,334.5 813,334.1 812,333.6 811,333.5 810,333.0 809,333.8 808,333.6 807,333.7 806,333.2 805,333.7 804,334.4 803,334.4 802,334.5 801,335.4 800,336.4 799,337.1 798,337.5 797,337.5 796,337.1 795,336.4 794,335.4 793,334.0 792,334.4 791,335.5 790,335.5 789,335.5 788,334.3 787,333.1 786,333.1 785,333.7 784,333.1 783,333.0 782,333.6 781,337.2 780,342.2 779,345.7 778,347.2 777,344.6 776,339.5 775,335.2 774,333.0 773,333.4 772,333.5 771,333.0 770,335.5 769,338.9 768,340.4 767,341.7 766,338.7 765,336.2 764,333.6 763,333.7 762,333.6 761,334.3 760,336.8 759,339.1 758,340.6 757,341.5 756,340.6 755,341.9 754,346.3 753,348.5 752,351.9 751,353.7 750,353.5 749,354.0 748,351.0 747,348.5 746,344.5 745,341.6 744,337.9 743,336.9 742,335.9 741,333.9 740,333.1 739,333.3 738,333.1 737,333.7 736,333.5 735,334.2 734,334.7 733,334.9 732,335.2 731,335.7 730,335.4 729,335.2 728,334.3 727,333.4 726,333.8 725,333.0 724,333.0 723,333.7 722,333.3 721,333.5 720,333.0 719,333.7 718,333.4 717,333.6 716,333.4 715,333.0 714,333.0 713,333.3 712,335.3 711,338.5 710,343.5 709,344.6 708,344.4 707,340.6 706,336.9 705,335.3 704,333.3 703,333.0 702,335.0 701,337.1 700,337.4 699,336.8 698,334.9 697,333.3 696,333.4 695,336.0 694,342.3 693,347.4 692,352.0 691,353.0 690,347.5 689,340.7 688,335.3 687,335.4 686,338.3 685,341.5 684,343.1 683,343.9 682,343.6 681,341.6 680,338.1 679,335.3 678,333.6 677,333.1 676,333.5 675,333.8 674,333.6 673,333.7 672,333.7 671,333.5 670,333.1 669,333.2 668,333.3 667,333.2 666,333.5 665,333.0 664,333.6 663,336.2 662,338.5 661,339.8 660,338.6 659,338.8 658,340.9 657,340.8 656,341.1 655,340.7 654,339.0 653,337.3 652,336.7 651,336.7 650,336.4 649,335.7 648,334.8 647,333.6 646,333.7 645,333.7 644,334.6 643,335.2 642,335.9 641,335.6 640,334.3 639,333.3 638,333.8 637,333.3 636,333.6 635,333.5 634,333.1 633,334.1 632,336.2 631,337.6 630,337.3 629,335.7 628,333.8 627,333.1 626,333.7 625,341.4 624,349.2 623,346.3 622,338.5 621,333.3 620,335.7 619,339.0 618,339.8 617,337.9 616,334.3 615,333.6 614,333.1 613,333.1 612,333.2 611,333.5 610,333.5 609,333.1 608,333.4 607,335.9 606,338.9 605,342.0 604,340.0 603,336.3 602,333.1 601,333.4 600,333.5 599,333.5 598,333.8 597,334.9 596,335.5 595,335.8 594,335.5 593,334.9 592,334.6 591,334.5 590,334.0 589,333.5 588,332.8 587,334.2 586,334.9 585,334.9 584,334.2 583,333.1 582,332.7 Z" fill="#8d9d8a"/>
<rect x="1106.5" y="202" width="5" height="79.5" fill="#cbcbcb"/>
<line x1="1106.5" y1="203" x2="1106.5" y2="280.5" stroke="#4e4e4e" stroke-width="1.4"/><line x1="1111.5" y1="203" x2="1111.5" y2="280.5" stroke="#4e4e4e" stroke-width="1.4"/>
<line x1="609.6" y1="203" x2="609.6" y2="280.5" stroke="#3a3a3a" stroke-width="1.6"/>
<line x1="622.9" y1="203" x2="622.9" y2="280.5" stroke="#3a3a3a" stroke-width="1.6"/>
<line x1="638.5" y1="203" x2="638.5" y2="280.5" stroke="#3a3a3a" stroke-width="1.6"/>
<line x1="687.7" y1="203" x2="687.7" y2="280.5" stroke="#3a3a3a" stroke-width="1.6"/>
<line x1="720.5" y1="203" x2="720.5" y2="280.5" stroke="#3a3a3a" stroke-width="1.6"/>
<line x1="737" y1="203" x2="737" y2="280.5" stroke="#3a3a3a" stroke-width="1.6"/>
<line x1="761" y1="203" x2="761" y2="280.5" stroke="#3a3a3a" stroke-width="1.6"/>
<line x1="772" y1="203" x2="772" y2="280.5" stroke="#3a3a3a" stroke-width="1.6"/>
<line x1="784.6" y1="203" x2="784.6" y2="280.5" stroke="#3a3a3a" stroke-width="1.6"/>
<line x1="819" y1="203" x2="819" y2="280.5" stroke="#3a3a3a" stroke-width="1.6"/>
<line x1="831.5" y1="203" x2="831.5" y2="280.5" stroke="#3a3a3a" stroke-width="1.6"/>
<line x1="870.5" y1="203" x2="870.5" y2="280.5" stroke="#3a3a3a" stroke-width="1.6"/>
<line x1="897.6" y1="203" x2="897.6" y2="280.5" stroke="#3a3a3a" stroke-width="1.6"/>
<line x1="929.6" y1="203" x2="929.6" y2="280.5" stroke="#3a3a3a" stroke-width="1.6"/>
<line x1="966.3" y1="203" x2="966.3" y2="280.5" stroke="#3a3a3a" stroke-width="1.6"/>
<line x1="1018.7" y1="203" x2="1018.7" y2="280.5" stroke="#3a3a3a" stroke-width="1.6"/>
<line x1="1066.3" y1="203" x2="1066.3" y2="280.5" stroke="#3a3a3a" stroke-width="1.6"/>
<line x1="1095.2" y1="203" x2="1095.2" y2="280.5" stroke="#3a3a3a" stroke-width="1.6"/>
<line x1="1106.2" y1="203" x2="1106.2" y2="280.5" stroke="#3a3a3a" stroke-width="1.6"/>
<line x1="1111.6" y1="203" x2="1111.6" y2="280.5" stroke="#3a3a3a" stroke-width="1.6"/>
<line x1="1127.25" y1="203" x2="1127.25" y2="280.5" stroke="#3a3a3a" stroke-width="1.6"/>
<line x1="1138.2" y1="203" x2="1138.2" y2="280.5" stroke="#3a3a3a" stroke-width="1.6"/>
<line x1="1182.7" y1="203" x2="1182.7" y2="280.5" stroke="#3a3a3a" stroke-width="1.6"/>
<line x1="1200.7" y1="203" x2="1200.7" y2="280.5" stroke="#3a3a3a" stroke-width="1.6"/>
<line x1="1238.7" y1="203" x2="1238.7" y2="280.5" stroke="#3a3a3a" stroke-width="1.6"/>
<line x1="1252" y1="203" x2="1252" y2="280.5" stroke="#3a3a3a" stroke-width="1.6"/>
<line x1="1261.3" y1="203" x2="1261.3" y2="280.5" stroke="#3a3a3a" stroke-width="1.6"/>
<line x1="1295.7" y1="203" x2="1295.7" y2="280.5" stroke="#3a3a3a" stroke-width="1.6"/>
<line x1="1308.2" y1="203" x2="1308.2" y2="280.5" stroke="#3a3a3a" stroke-width="1.6"/>
<line x1="1321.5" y1="203" x2="1321.5" y2="280.5" stroke="#3a3a3a" stroke-width="1.6"/>
<line x1="1334" y1="203" x2="1334" y2="280.5" stroke="#3a3a3a" stroke-width="1.6"/>
<line x1="1345" y1="203" x2="1345" y2="280.5" stroke="#3a3a3a" stroke-width="1.6"/>
<line x1="1357.4" y1="203" x2="1357.4" y2="280.5" stroke="#3a3a3a" stroke-width="1.6"/>
<line x1="1373.8" y1="203" x2="1373.8" y2="280.5" stroke="#3a3a3a" stroke-width="1.6"/>
<line x1="1399.6" y1="203" x2="1399.6" y2="280.5" stroke="#3a3a3a" stroke-width="1.6"/>
<line x1="1414.4" y1="203" x2="1414.4" y2="280.5" stroke="#3a3a3a" stroke-width="1.6"/>
<line x1="1428.5" y1="203" x2="1428.5" y2="280.5" stroke="#3a3a3a" stroke-width="1.6"/>
<line x1="1451.2" y1="203" x2="1451.2" y2="280.5" stroke="#3a3a3a" stroke-width="1.6"/>
<line x1="1464.4" y1="203" x2="1464.4" y2="280.5" stroke="#3a3a3a" stroke-width="1.6"/>
<line x1="1481.6" y1="203" x2="1481.6" y2="280.5" stroke="#3a3a3a" stroke-width="1.6"/>
<line x1="1505" y1="203" x2="1505" y2="280.5" stroke="#3a3a3a" stroke-width="1.6"/>
<line x1="1524.6" y1="203" x2="1524.6" y2="280.5" stroke="#3a3a3a" stroke-width="1.6"/>
<line x1="1538.3" y1="203" x2="1538.3" y2="280.5" stroke="#3a3a3a" stroke-width="1.6"/>
<line x1="1549.3" y1="203" x2="1549.3" y2="280.5" stroke="#3a3a3a" stroke-width="1.6"/>
<line x1="1559.4" y1="203" x2="1559.4" y2="280.5" stroke="#3a3a3a" stroke-width="1.6"/>
<line x1="1572.7" y1="203" x2="1572.7" y2="280.5" stroke="#3a3a3a" stroke-width="1.6"/>
<line x1="1595.4" y1="203" x2="1595.4" y2="280.5" stroke="#3a3a3a" stroke-width="1.6"/>
<line x1="1615.7" y1="203" x2="1615.7" y2="280.5" stroke="#3a3a3a" stroke-width="1.6"/>
<line x1="1632" y1="203" x2="1632" y2="280.5" stroke="#3a3a3a" stroke-width="1.6"/>
<line x1="1648.5" y1="203" x2="1648.5" y2="280.5" stroke="#3a3a3a" stroke-width="1.6"/>
<line x1="1661.8" y1="203" x2="1661.8" y2="280.5" stroke="#3a3a3a" stroke-width="1.6"/>
<line x1="1675" y1="203" x2="1675" y2="280.5" stroke="#3a3a3a" stroke-width="1.6"/>
<line x1="1713.3" y1="203" x2="1713.3" y2="280.5" stroke="#3a3a3a" stroke-width="1.6"/>
<line x1="1761.8" y1="203" x2="1761.8" y2="280.5" stroke="#3a3a3a" stroke-width="1.6"/>
<line x1="1802.4" y1="203" x2="1802.4" y2="280.5" stroke="#3a3a3a" stroke-width="1.6"/>
<path d="M639.5,272.5 L639.5,280.5 L649.5,280.5 Z" fill="#eef0f0"/>
<path d="M688.7,272.5 L688.7,280.5 L698.7,280.5 Z" fill="#eef0f0"/>
<path d="M738,272.5 L738,280.5 L748,280.5 Z" fill="#eef0f0"/>
<path d="M785.6,272.5 L785.6,280.5 L795.6,280.5 Z" fill="#eef0f0"/>
<path d="M832.5,272.5 L832.5,280.5 L842.5,280.5 Z" fill="#eef0f0"/>
<path d="M871.5,272.5 L871.5,280.5 L881.5,280.5 Z" fill="#eef0f0"/>
<path d="M898.6,272.5 L898.6,280.5 L908.6,280.5 Z" fill="#eef0f0"/>
<path d="M930.6,272.5 L930.6,280.5 L940.6,280.5 Z" fill="#eef0f0"/>
<path d="M967.3,272.5 L967.3,280.5 L977.3,280.5 Z" fill="#eef0f0"/>
<path d="M1019.7,272.5 L1019.7,280.5 L1029.7,280.5 Z" fill="#eef0f0"/>
<path d="M1067.3,272.5 L1067.3,280.5 L1077.3,280.5 Z" fill="#eef0f0"/>
<path d="M1139.2,272.5 L1139.2,280.5 L1149.2,280.5 Z" fill="#eef0f0"/>
<path d="M1201.7,272.5 L1201.7,280.5 L1211.7,280.5 Z" fill="#eef0f0"/>
<path d="M1358.4,272.5 L1358.4,280.5 L1368.4,280.5 Z" fill="#eef0f0"/>
<path d="M1452.2,272.5 L1452.2,280.5 L1462.2,280.5 Z" fill="#eef0f0"/>
<path d="M1596.4,272.5 L1596.4,280.5 L1606.4,280.5 Z" fill="#eef0f0"/>
<path d="M1676,272.5 L1676,280.5 L1686,280.5 Z" fill="#eef0f0"/>
<path d="M1762.8,272.5 L1762.8,280.5 L1772.8,280.5 Z" fill="#eef0f0"/>
<path d="M1803.4,272.5 L1803.4,280.5 L1813.4,280.5 Z" fill="#eef0f0"/>
<line x1="580" y1="296" x2="2021" y2="296" stroke="#3a8a3a" stroke-width="1.8"/>
<rect x="583" y="371.5" width="19.5" height="19" fill="#3ca5ad"/>
<text x="592.7" y="387.0" font-family="Liberation Mono" font-size="15" fill="#d8f4f4" text-anchor="middle" font-weight="bold">i</text>
<rect x="641" y="371.5" width="19.5" height="19" fill="#3ca5ad"/>
<text x="650.7" y="387.0" font-family="Liberation Mono" font-size="15" fill="#d8f4f4" text-anchor="middle" font-weight="bold">i</text>
<rect x="692" y="371.5" width="19.5" height="19" fill="#3ca5ad"/>
<text x="701.7" y="387.0" font-family="Liberation Mono" font-size="15" fill="#d8f4f4" text-anchor="middle" font-weight="bold">i</text>
<rect x="786.5" y="371.5" width="19.5" height="19" fill="#3ca5ad"/>
<text x="796.2" y="387.0" font-family="Liberation Mono" font-size="15" fill="#d8f4f4" text-anchor="middle" font-weight="bold">i</text>
<rect x="835" y="371.5" width="19.5" height="19" fill="#3ca5ad"/>
<text x="844.7" y="387.0" font-family="Liberation Mono" font-size="15" fill="#d8f4f4" text-anchor="middle" font-weight="bold">i</text>
<rect x="581" y="394.5" width="1268.5" height="77.5" fill="url(#itg)" stroke="#4e4e4e" stroke-width="1.5"/>
<path d="M582,433.0 L582,431.3 583,431.2 584,430.5 585,430.1 586,430.1 587,430.5 588,431.3 589,431.1 590,430.5 591,430.0 592,430.2 593,430.4 594,431.0 595,431.0 596,431.1 597,431.0 598,431.3 599,431.0 600,430.5 601,430.2 602,430.5 603,428.8 604,427.0 605,425.7 606,427.2 607,429.7 608,431.1 609,430.9 610,430.9 611,431.0 612,431.2 613,431.0 614,431.1 615,431.0 616,430.1 617,428.5 618,426.9 619,427.8 620,429.6 621,431.1 622,427.9 623,422.9 624,421.2 625,425.4 626,429.3 627,428.4 628,427.9 629,427.9 630,428.4 631,428.2 632,429.2 633,430.3 634,431.2 635,430.8 636,431.0 637,430.8 638,430.6 639,430.8 640,430.2 641,429.8 642,429.3 643,429.7 644,430.3 645,430.9 646,430.5 647,430.1 648,430.0 649,430.1 650,430.5 651,430.9 652,429.8 653,428.7 654,427.4 655,426.3 656,426.2 657,426.1 658,426.4 659,427.5 660,427.9 661,427.0 662,427.9 663,429.1 664,430.8 665,431.0 666,431.0 667,428.3 668,427.2 669,428.3 670,430.9 671,430.9 672,430.8 673,430.9 674,431.2 675,431.3 676,430.9 677,431.1 678,431.1 679,429.6 680,428.1 681,425.8 682,425.1 683,423.9 684,424.9 685,426.1 686,427.8 687,427.2 688,427.2 689,426.7 690,422.5 691,419.8 692,419.8 693,421.8 694,425.3 695,429.3 696,430.9 697,430.6 698,429.9 699,428.8 700,428.2 701,428.8 702,429.9 703,430.8 704,431.0 705,431.0 706,429.0 707,426.2 708,423.8 709,423.4 710,425.1 711,427.3 712,429.9 713,431.3 714,430.9 715,430.8 716,429.6 717,428.7 718,428.3 719,428.3 720,428.7 721,429.6 722,430.8 723,431.3 724,431.0 725,431.0 726,431.2 727,431.0 728,430.3 729,429.8 730,429.4 731,429.5 732,429.7 733,430.1 734,430.8 735,431.1 736,431.1 737,430.9 738,431.3 739,431.2 740,431.2 741,431.1 742,430.7 743,429.5 744,427.9 745,426.1 746,424.4 747,422.2 748,419.7 749,419.1 750,418.4 751,419.2 752,419.8 753,421.1 754,423.3 755,425.5 756,426.4 757,425.9 758,426.6 759,427.3 760,429.0 761,429.3 762,428.7 763,428.7 764,429.3 765,429.3 766,427.1 767,426.1 768,426.5 769,427.9 770,429.7 771,431.0 772,430.8 773,430.8 774,430.8 775,430.0 776,427.4 777,423.9 778,422.9 779,422.5 780,425.4 781,428.2 782,428.9 783,427.8 784,427.2 785,427.2 786,427.8 787,428.9 788,430.3 789,429.9 790,429.3 791,429.7 792,430.2 793,429.4 794,428.7 795,428.2 796,427.9 797,427.9 798,428.2 799,428.7 800,429.4 801,430.0 802,430.0 803,430.0 804,430.4 805,430.7 806,430.4 807,430.1 808,430.4 809,431.2 810,431.3 811,431.1 812,430.6 813,430.3 814,430.2 815,430.0 816,430.1 817,430.1 818,430.3 819,430.7 820,431.0 821,430.8 822,430.9 823,430.3 824,429.4 825,428.6 826,428.3 827,428.8 828,429.5 829,430.3 830,430.9 831,431.3 832,431.0 833,431.0 834,431.0 835,431.0 836,430.3 837,429.1 838,428.7 839,427.7 840,427.6 841,427.8 842,428.7 843,429.2 844,430.2 845,430.9 846,429.8 847,429.0 848,428.2 849,427.3 850,426.9 851,427.1 852,427.8 853,428.9 854,429.8 855,430.5 856,430.9 857,430.3 858,428.5 859,426.1 860,424.1 861,422.0 862,420.9 863,420.2 864,421.6 865,422.6 866,425.6 867,427.5 868,429.6 869,429.7 870,429.0 871,428.6 872,428.3 873,428.3 874,427.6 875,427.1 876,427.7 877,428.6 878,428.9 879,427.6 880,426.5 881,425.0 882,424.4 883,424.7 884,425.6 885,427.1 886,428.2 887,427.2 888,425.7 889,425.7 890,427.0 891,428.1 892,429.7 893,430.9 894,430.9 895,431.0 896,431.2 897,427.5 898,425.8 899,423.7 900,425.0 901,425.6 902,427.1 903,426.6 904,424.3 905,422.9 906,424.5 907,427.5 908,426.6 909,426.1 910,426.1 911,423.9 912,422.4 913,424.4 914,424.3 915,424.3 916,426.4 917,425.6 918,423.2 919,423.3 920,422.8 921,423.3 922,424.6 923,426.6 924,426.6 925,424.9 926,424.2 927,424.8 928,425.3 929,425.2 930,423.6 931,423.6 932,420.1 933,417.0 934,420.1 935,420.2 936,422.8 937,424.1 938,422.9 939,420.2 940,419.0 941,420.8 942,424.1 943,424.0 944,422.6 945,421.8 946,421.8 947,420.4 948,417.2 949,421.2 950,420.9 951,419.2 952,418.6 953,419.2 954,421.0 955,418.7 956,420.8 957,420.9 958,419.5 959,419.5 960,421.0 961,420.9 962,416.3 963,420.6 964,418.8 965,418.1 966,418.8 967,420.6 968,423.3 969,424.3 970,423.2 971,422.5 972,422.5 973,423.2 974,421.1 975,418.6 976,422.0 977,424.6 978,424.6 979,424.8 980,422.1 981,419.4 982,422.1 983,424.2 984,419.4 985,417.4 986,419.5 987,422.1 988,422.9 989,424.1 990,422.3 991,418.4 992,416.8 993,418.3 994,422.3 995,423.7 996,421.8 997,420.5 998,420.1 999,420.5 1000,421.8 1001,423.7 1002,419.6 1003,418.2 1004,419.8 1005,423.7 1006,423.8 1007,424.1 1008,424.4 1009,423.8 1010,422.3 1011,421.2 1012,418.1 1013,421.2 1014,423.7 1015,423.3 1016,421.2 1017,420.4 1018,421.2 1019,422.6 1020,422.6 1021,421.4 1022,420.9 1023,421.4 1024,418.7 1025,415.7 1026,418.7 1027,418.7 1028,421.5 1029,421.9 1030,419.3 1031,417.8 1032,414.3 1033,418.4 1034,422.0 1035,423.2 1036,422.6 1037,422.2 1038,422.2 1039,418.6 1040,414.6 1041,417.9 1042,419.2 1043,417.6 1044,417.6 1045,419.2 1046,422.0 1047,421.0 1048,416.5 1049,418.2 1050,419.2 1051,421.9 1052,421.9 1053,420.1 1054,421.9 1055,422.4 1056,420.1 1057,418.6 1058,416.4 1059,418.6 1060,420.2 1061,422.4 1062,422.1 1063,419.7 1064,418.7 1065,419.7 1066,422.2 1067,424.0 1068,424.1 1069,423.5 1070,421.7 1071,424.1 1072,425.2 1073,423.4 1074,420.0 1075,420.0 1076,423.5 1077,424.5 1078,422.2 1079,421.3 1080,420.7 1081,422.0 1082,425.8 1083,425.5 1084,425.3 1085,425.2 1086,425.3 1087,425.6 1088,425.9 1089,422.0 1090,419.4 1091,422.2 1092,423.3 1093,423.6 1094,424.4 1095,427.3 1096,428.5 1097,427.1 1098,426.5 1099,427.1 1100,428.5 1101,429.0 1102,428.2 1103,427.6 1104,427.4 1105,427.6 1106,428.2 1107,428.0 1108,427.9 1109,427.4 1110,426.6 1111,425.5 1112,421.3 1113,417.7 1114,422.0 1115,423.0 1116,423.6 1117,424.7 1118,424.0 1119,421.9 1120,420.7 1121,420.7 1122,418.8 1123,421.5 1124,424.6 1125,423.3 1126,422.9 1127,423.3 1128,424.6 1129,423.1 1130,420.6 1131,422.6 1132,425.3 1133,425.3 1134,425.3 1135,425.4 1136,424.3 1137,422.3 1138,420.9 1139,418.7 1140,417.6 1141,419.4 1142,422.0 1143,423.7 1144,417.7 1145,416.2 1146,417.2 1147,421.1 1148,420.0 1149,419.6 1150,420.0 1151,421.1 1152,422.6 1153,421.0 1154,416.7 1155,414.3 1156,414.3 1157,416.7 1158,421.0 1159,421.9 1160,419.3 1161,417.4 1162,416.8 1163,417.4 1164,417.5 1165,415.8 1166,417.3 1167,422.0 1168,421.6 1169,422.0 1170,422.8 1171,421.9 1172,419.2 1173,417.3 1174,416.6 1175,415.0 1176,418.7 1177,421.9 1178,421.7 1179,418.8 1180,417.1 1181,417.1 1182,418.8 1183,426.7 1184,431.0 1185,430.1 1186,426.9 1187,425.6 1188,427.1 1189,428.4 1190,429.2 1191,430.5 1192,431.1 1193,431.1 1194,431.0 1195,430.3 1196,429.5 1197,428.9 1198,428.6 1199,428.6 1200,427.0 1201,427.7 1202,427.7 1203,426.9 1204,426.7 1205,428.0 1206,427.6 1207,427.9 1208,426.8 1209,427.6 1210,428.0 1211,426.8 1212,426.8 1213,427.0 1214,427.0 1215,429.6 1216,429.1 1217,427.9 1218,427.1 1219,428.0 1220,429.5 1221,430.9 1222,431.4 1223,431.2 1224,429.3 1225,428.3 1226,429.3 1227,431.3 1228,431.1 1229,431.2 1230,431.5 1231,431.5 1232,431.3 1233,431.5 1234,431.5 1235,430.6 1236,429.5 1237,429.1 1238,429.5 1239,430.6 1240,431.4 1241,431.3 1242,431.3 1243,431.1 1244,430.2 1245,429.9 1246,430.2 1247,431.1 1248,431.4 1249,431.5 1250,431.5 1251,430.9 1252,429.7 1253,429.0 1254,428.7 1255,429.0 1256,429.7 1257,430.0 1258,430.7 1259,431.1 1260,431.2 1261,430.2 1262,429.6 1263,429.3 1264,429.6 1265,430.2 1266,431.2 1267,431.3 1268,431.3 1269,430.9 1270,429.7 1271,428.8 1272,428.4 1273,428.4 1274,428.8 1275,429.7 1276,430.9 1277,431.1 1278,431.5 1279,431.4 1280,431.4 1281,431.2 1282,431.3 1283,431.5 1284,431.5 1285,431.1 1286,430.9 1287,429.7 1288,428.8 1289,428.4 1290,428.4 1291,428.8 1292,429.7 1293,430.9 1294,431.4 1295,431.3 1296,431.1 1297,431.3 1298,430.2 1299,425.7 1300,423.0 1301,426.1 1302,430.2 1303,430.8 1304,431.0 1305,431.3 1306,431.4 1307,431.4 1308,431.2 1309,431.3 1310,431.2 1311,430.3 1312,429.4 1313,428.7 1314,428.2 1315,428.0 1316,428.0 1317,428.2 1318,428.7 1319,429.4 1320,430.3 1321,431.0 1322,428.5 1323,427.2 1324,428.7 1325,430.8 1326,431.3 1327,431.4 1328,431.5 1329,429.8 1330,429.1 1331,429.8 1332,431.5 1333,431.4 1334,430.8 1335,428.4 1336,427.5 1337,428.7 1338,428.9 1339,429.1 1340,429.6 1341,430.3 1342,430.6 1343,430.0 1344,428.8 1345,428.2 1346,426.9 1347,426.3 1348,425.6 1349,424.8 1350,424.9 1351,424.4 1352,425.1 1353,425.7 1354,427.0 1355,427.8 1356,428.8 1357,429.8 1358,430.8 1359,431.3 1360,431.3 1361,431.3 1362,431.4 1363,431.4 1364,431.2 1365,430.8 1366,429.3 1367,428.0 1368,428.0 1369,429.3 1370,431.1 1371,431.2 1372,431.4 1373,431.5 1374,431.2 1375,431.2 1376,431.5 1377,431.4 1378,431.1 1379,430.2 1380,430.0 1381,430.2 1382,430.8 1383,431.0 1384,431.3 1385,431.1 1386,431.4 1387,431.4 1388,431.3 1389,431.2 1390,431.0 1391,431.3 1392,431.3 1393,430.8 1394,429.5 1395,428.5 1396,427.8 1397,427.6 1398,427.8 1399,428.5 1400,429.5 1401,430.8 1402,431.1 1403,431.3 1404,428.9 1405,427.4 1406,427.4 1407,428.9 1408,431.1 1409,430.4 1410,429.9 1411,430.4 1412,431.1 1413,431.5 1414,431.6 1415,431.2 1416,431.2 1417,431.1 1418,431.1 1419,430.5 1420,429.1 1421,428.3 1422,428.0 1423,428.3 1424,429.1 1425,430.5 1426,430.4 1427,429.9 1428,429.5 1429,429.2 1430,429.3 1431,429.4 1432,429.3 1433,429.8 1434,430.3 1435,430.5 1436,430.8 1437,431.1 1438,431.5 1439,431.5 1440,431.2 1441,430.5 1442,430.4 1443,430.2 1444,429.3 1445,428.6 1446,428.1 1447,427.9 1448,427.9 1449,428.1 1450,428.6 1451,429.3 1452,430.2 1453,429.8 1454,426.2 1455,425.0 1456,426.6 1457,429.8 1458,429.2 1459,428.5 1460,428.0 1461,427.9 1462,428.0 1463,428.5 1464,429.2 1465,430.1 1466,430.5 1467,430.6 1468,431.1 1469,430.6 1470,429.2 1471,428.2 1472,427.7 1473,427.7 1474,428.2 1475,429.2 1476,430.6 1477,430.9 1478,430.7 1479,430.7 1480,431.2 1481,431.1 1482,430.9 1483,430.9 1484,431.1 1485,431.5 1486,431.3 1487,431.1 1488,431.2 1489,431.1 1490,429.4 1491,425.8 1492,423.7 1493,425.9 1494,429.3 1495,431.4 1496,431.5 1497,431.5 1498,431.4 1499,431.5 1500,431.3 1501,431.3 1502,431.4 1503,431.1 1504,430.9 1505,430.8 1506,430.7 1507,431.2 1508,431.2 1509,431.3 1510,431.1 1511,431.5 1512,431.5 1513,431.5 1514,431.0 1515,430.8 1516,431.0 1517,431.1 1518,431.4 1519,431.2 1520,431.4 1521,431.3 1522,431.3 1523,430.0 1524,429.0 1525,428.2 1526,428.8 1527,430.1 1528,429.3 1529,428.7 1530,428.6 1531,428.7 1532,429.3 1533,430.1 1534,431.2 1535,431.5 1536,431.3 1537,431.2 1538,431.1 1539,430.4 1540,429.9 1541,429.6 1542,429.4 1543,429.4 1544,429.6 1545,429.9 1546,430.4 1547,431.1 1548,431.4 1549,431.4 1550,431.3 1551,429.5 1552,428.6 1553,428.9 1554,428.0 1555,427.7 1556,427.2 1557,427.6 1558,427.9 1559,429.2 1560,429.9 1561,431.0 1562,430.9 1563,430.5 1564,430.5 1565,430.9 1566,431.3 1567,431.2 1568,431.5 1569,431.2 1570,430.6 1571,430.3 1572,429.9 1573,430.2 1574,430.9 1575,430.7 1576,429.7 1577,429.3 1578,429.7 1579,430.7 1580,431.3 1581,431.2 1582,431.1 1583,431.1 1584,431.3 1585,431.3 1586,431.4 1587,431.4 1588,431.4 1589,431.3 1590,431.3 1591,431.5 1592,431.4 1593,431.4 1594,431.4 1595,431.5 1596,431.3 1597,429.9 1598,429.2 1599,429.9 1600,431.2 1601,431.5 1602,431.4 1603,428.8 1604,427.3 1605,427.3 1606,428.8 1607,431.5 1608,431.4 1609,431.1 1610,430.3 1611,429.7 1612,429.5 1613,429.7 1614,430.3 1615,430.6 1616,428.4 1617,426.6 1618,426.3 1619,427.0 1620,428.5 1621,430.6 1622,431.1 1623,431.3 1624,431.2 1625,430.9 1626,430.7 1627,431.0 1628,431.2 1629,430.8 1630,430.5 1631,427.4 1632,426.4 1633,427.8 1634,430.5 1635,431.2 1636,431.1 1637,431.3 1638,430.9 1639,430.2 1640,429.8 1641,429.5 1642,429.5 1643,429.8 1644,430.2 1645,430.8 1646,430.6 1647,429.7 1648,429.0 1649,429.6 1650,430.6 1651,429.2 1652,428.1 1653,427.3 1654,426.6 1655,425.9 1656,426.1 1657,427.0 1658,428.1 1659,429.3 1660,430.5 1661,431.3 1662,430.9 1663,430.5 1664,430.3 1665,430.3 1666,430.3 1667,429.9 1668,430.2 1669,431.1 1670,431.4 1671,431.4 1672,430.0 1673,428.4 1674,427.6 1675,427.6 1676,428.4 1677,429.6 1678,431.3 1679,431.5 1680,431.4 1681,431.5 1682,431.3 1683,431.3 1684,431.4 1685,431.1 1686,431.3 1687,431.3 1688,431.6 1689,431.3 1690,431.2 1691,431.5 1692,431.2 1693,431.1 1694,431.1 1695,431.2 1696,431.4 1697,431.4 1698,431.3 1699,431.2 1700,431.0 1701,431.2 1702,431.3 1703,431.3 1704,431.2 1705,431.1 1706,430.7 1707,430.5 1708,430.4 1709,430.4 1710,430.5 1711,430.7 1712,428.5 1713,427.0 1714,428.6 1715,430.9 1716,431.1 1717,431.0 1718,430.5 1719,431.0 1720,431.1 1721,431.6 1722,431.5 1723,431.3 1724,430.9 1725,430.5 1726,430.3 1727,430.1 1728,430.1 1729,430.3 1730,430.0 1731,429.2 1732,428.2 1733,427.4 1734,427.1 1735,427.1 1736,427.1 1737,427.8 1738,427.5 1739,427.5 1740,428.4 1741,429.9 1742,431.4 1743,431.6 1744,429.2 1745,427.8 1746,427.8 1747,429.2 1748,431.1 1749,431.3 1750,431.1 1751,431.2 1752,430.9 1753,430.5 1754,430.2 1755,430.0 1756,430.0 1757,430.2 1758,430.3 1759,430.1 1760,430.0 1761,430.1 1762,430.3 1763,430.9 1764,431.3 1765,430.9 1766,430.2 1767,429.7 1768,429.4 1769,429.3 1770,429.4 1771,429.7 1772,430.2 1773,430.2 1774,428.8 1775,428.6 1776,428.7 1777,430.0 1778,431.4 1779,431.4 1780,431.5 1781,431.4 1782,431.4 1783,431.1 1784,431.5 1785,431.0 1786,429.9 1787,429.1 1788,428.7 1789,428.7 1790,429.1 1791,429.9 1792,431.0 1793,431.5 1794,431.5 1795,431.5 1796,431.2 1797,431.0 1798,430.7 1799,430.3 1800,430.0 1801,430.2 1802,431.0 1803,431.5 1804,431.2 1805,431.4 1806,431.5 1807,431.2 1808,430.7 1809,430.3 1810,430.1 1811,430.1 1812,430.3 1813,430.7 1814,431.2 1815,431.1 1816,431.2 1817,431.2 1818,430.0 1819,428.9 1820,428.9 1821,430.0 1822,431.5 1823,431.5 1824,430.9 1825,429.7 1826,429.0 1827,428.7 1828,429.0 1829,429.7 1830,430.9 1831,430.8 1832,429.8 1833,428.5 1834,427.1 1835,426.4 1836,425.3 1837,424.0 1838,423.9 1839,424.3 1840,424.9 1841,426.0 1842,427.6 1843,428.7 1844,429.9 1845,430.9 1846,431.2 1847,431.4 1848,431.4 L1848,434.6 1847,434.6 1846,434.8 1845,435.1 1844,436.1 1843,437.3 1842,438.4 1841,440.0 1840,441.1 1839,441.7 1838,442.1 1837,442.0 1836,440.7 1835,439.6 1834,438.9 1833,437.5 1832,436.2 1831,435.2 1830,435.1 1829,436.3 1828,437.0 1827,437.3 1826,437.0 1825,436.3 1824,435.1 1823,434.5 1822,434.5 1821,436.0 1820,437.1 1819,437.1 1818,436.0 1817,434.8 1816,434.8 1815,434.9 1814,434.8 1813,435.3 1812,435.7 1811,435.9 1810,435.9 1809,435.7 1808,435.3 1807,434.8 1806,434.5 1805,434.6 1804,434.8 1803,434.5 1802,435.0 1801,435.8 1800,436.0 1799,435.7 1798,435.3 1797,435.0 1796,434.8 1795,434.5 1794,434.5 1793,434.5 1792,435.0 1791,436.1 1790,436.9 1789,437.3 1788,437.3 1787,436.9 1786,436.1 1785,435.0 1784,434.5 1783,434.9 1782,434.6 1781,434.6 1780,434.5 1779,434.6 1778,434.6 1777,436.0 1776,437.3 1775,437.4 1774,437.2 1773,435.8 1772,435.8 1771,436.3 1770,436.6 1769,436.7 1768,436.6 1767,436.3 1766,435.8 1765,435.1 1764,434.7 1763,435.1 1762,435.7 1761,435.9 1760,436.0 1759,435.9 1758,435.7 1757,435.8 1756,436.0 1755,436.0 1754,435.8 1753,435.5 1752,435.1 1751,434.8 1750,434.9 1749,434.7 1748,434.9 1747,436.8 1746,438.2 1745,438.2 1744,436.8 1743,434.4 1742,434.6 1741,436.1 1740,437.6 1739,438.5 1738,438.5 1737,438.2 1736,438.9 1735,438.9 1734,438.9 1733,438.6 1732,437.8 1731,436.8 1730,436.0 1729,435.7 1728,435.9 1727,435.9 1726,435.7 1725,435.5 1724,435.1 1723,434.7 1722,434.5 1721,434.4 1720,434.9 1719,435.0 1718,435.5 1717,435.0 1716,434.9 1715,435.1 1714,437.4 1713,439.0 1712,437.5 1711,435.3 1710,435.5 1709,435.6 1708,435.6 1707,435.5 1706,435.3 1705,434.9 1704,434.8 1703,434.7 1702,434.7 1701,434.8 1700,435.0 1699,434.8 1698,434.7 1697,434.6 1696,434.6 1695,434.8 1694,434.9 1693,434.9 1692,434.8 1691,434.5 1690,434.8 1689,434.7 1688,434.4 1687,434.7 1686,434.7 1685,434.9 1684,434.6 1683,434.7 1682,434.7 1681,434.5 1680,434.6 1679,434.5 1678,434.7 1677,436.4 1676,437.6 1675,438.4 1674,438.4 1673,437.6 1672,436.0 1671,434.6 1670,434.6 1669,434.9 1668,435.8 1667,436.1 1666,435.7 1665,435.7 1664,435.7 1663,435.5 1662,435.1 1661,434.7 1660,435.5 1659,436.7 1658,437.9 1657,439.0 1656,439.9 1655,440.1 1654,439.4 1653,438.7 1652,437.9 1651,436.8 1650,435.4 1649,436.4 1648,437.0 1647,436.3 1646,435.4 1645,435.2 1644,435.8 1643,436.2 1642,436.5 1641,436.5 1640,436.2 1639,435.8 1638,435.1 1637,434.7 1636,434.9 1635,434.8 1634,435.5 1633,438.2 1632,439.6 1631,438.6 1630,435.5 1629,435.2 1628,434.8 1627,435.0 1626,435.3 1625,435.1 1624,434.8 1623,434.7 1622,434.9 1621,435.4 1620,437.5 1619,439.0 1618,439.7 1617,439.4 1616,437.6 1615,435.4 1614,435.7 1613,436.3 1612,436.5 1611,436.3 1610,435.7 1609,434.9 1608,434.6 1607,434.5 1606,437.2 1605,438.7 1604,438.7 1603,437.2 1602,434.6 1601,434.5 1600,434.8 1599,436.1 1598,436.8 1597,436.1 1596,434.7 1595,434.5 1594,434.6 1593,434.6 1592,434.6 1591,434.5 1590,434.7 1589,434.7 1588,434.6 1587,434.6 1586,434.6 1585,434.7 1584,434.7 1583,434.9 1582,434.9 1581,434.8 1580,434.7 1579,435.3 1578,436.3 1577,436.7 1576,436.3 1575,435.3 1574,435.1 1573,435.8 1572,436.1 1571,435.7 1570,435.4 1569,434.8 1568,434.5 1567,434.8 1566,434.7 1565,435.1 1564,435.5 1563,435.5 1562,435.1 1561,435.0 1560,436.1 1559,436.8 1558,438.1 1557,438.4 1556,438.8 1555,438.3 1554,438.0 1553,437.1 1552,437.4 1551,436.5 1550,434.7 1549,434.6 1548,434.6 1547,434.9 1546,435.6 1545,436.1 1544,436.4 1543,436.6 1542,436.6 1541,436.4 1540,436.1 1539,435.6 1538,434.9 1537,434.8 1536,434.7 1535,434.5 1534,434.8 1533,435.9 1532,436.7 1531,437.3 1530,437.4 1529,437.3 1528,436.7 1527,435.9 1526,437.2 1525,437.8 1524,437.0 1523,436.0 1522,434.7 1521,434.7 1520,434.6 1519,434.8 1518,434.6 1517,434.9 1516,435.0 1515,435.2 1514,435.0 1513,434.5 1512,434.5 1511,434.5 1510,434.9 1509,434.7 1508,434.8 1507,434.8 1506,435.3 1505,435.2 1504,435.1 1503,434.9 1502,434.6 1501,434.7 1500,434.7 1499,434.5 1498,434.6 1497,434.5 1496,434.5 1495,434.6 1494,436.7 1493,440.1 1492,442.3 1491,440.2 1490,436.6 1489,434.9 1488,434.8 1487,434.9 1486,434.7 1485,434.5 1484,434.9 1483,435.1 1482,435.1 1481,434.9 1480,434.8 1479,435.3 1478,435.3 1477,435.1 1476,435.4 1475,436.8 1474,437.8 1473,438.3 1472,438.3 1471,437.8 1470,436.8 1469,435.4 1468,434.9 1467,435.4 1466,435.5 1465,435.9 1464,436.8 1463,437.5 1462,438.0 1461,438.1 1460,438.0 1459,437.5 1458,436.8 1457,436.2 1456,439.4 1455,441.0 1454,439.8 1453,436.2 1452,435.8 1451,436.7 1450,437.4 1449,437.9 1448,438.1 1447,438.1 1446,437.9 1445,437.4 1444,436.7 1443,435.8 1442,435.6 1441,435.5 1440,434.8 1439,434.5 1438,434.5 1437,434.9 1436,435.2 1435,435.5 1434,435.7 1433,436.2 1432,436.7 1431,436.6 1430,436.7 1429,436.8 1428,436.5 1427,436.1 1426,435.6 1425,435.5 1424,436.9 1423,437.7 1422,438.0 1421,437.7 1420,436.9 1419,435.5 1418,434.9 1417,434.9 1416,434.8 1415,434.8 1414,434.4 1413,434.5 1412,434.9 1411,435.6 1410,436.1 1409,435.6 1408,434.9 1407,437.1 1406,438.6 1405,438.6 1404,437.1 1403,434.7 1402,434.9 1401,435.2 1400,436.5 1399,437.5 1398,438.2 1397,438.4 1396,438.2 1395,437.5 1394,436.5 1393,435.2 1392,434.7 1391,434.7 1390,435.0 1389,434.8 1388,434.7 1387,434.6 1386,434.6 1385,434.9 1384,434.7 1383,435.0 1382,435.2 1381,435.8 1380,436.0 1379,435.8 1378,434.9 1377,434.6 1376,434.5 1375,434.8 1374,434.8 1373,434.5 1372,434.6 1371,434.8 1370,434.9 1369,436.7 1368,438.0 1367,438.0 1366,436.7 1365,435.2 1364,434.8 1363,434.6 1362,434.6 1361,434.7 1360,434.7 1359,434.7 1358,435.2 1357,436.2 1356,437.2 1355,438.2 1354,439.0 1353,440.3 1352,440.9 1351,441.6 1350,441.1 1349,441.2 1348,440.4 1347,439.7 1346,439.1 1345,437.8 1344,437.2 1343,436.0 1342,435.4 1341,435.7 1340,436.4 1339,436.9 1338,437.1 1337,437.3 1336,438.5 1335,437.6 1334,435.2 1333,434.6 1332,434.5 1331,436.2 1330,436.9 1329,436.2 1328,434.5 1327,434.6 1326,434.7 1325,435.2 1324,437.3 1323,438.8 1322,437.5 1321,435.0 1320,435.7 1319,436.6 1318,437.3 1317,437.8 1316,438.0 1315,438.0 1314,437.8 1313,437.3 1312,436.6 1311,435.7 1310,434.8 1309,434.7 1308,434.8 1307,434.6 1306,434.6 1305,434.7 1304,435.0 1303,435.2 1302,435.8 1301,439.9 1300,443.0 1299,440.3 1298,435.8 1297,434.7 1296,434.9 1295,434.7 1294,434.6 1293,435.1 1292,436.3 1291,437.2 1290,437.6 1289,437.6 1288,437.2 1287,436.3 1286,435.1 1285,434.9 1284,434.5 1283,434.5 1282,434.7 1281,434.8 1280,434.6 1279,434.6 1278,434.5 1277,434.9 1276,435.1 1275,436.3 1274,437.2 1273,437.6 1272,437.6 1271,437.2 1270,436.3 1269,435.1 1268,434.7 1267,434.7 1266,434.8 1265,435.8 1264,436.4 1263,436.7 1262,436.4 1261,435.8 1260,434.8 1259,434.9 1258,435.3 1257,436.0 1256,436.3 1255,437.0 1254,437.3 1253,437.0 1252,436.3 1251,435.1 1250,434.5 1249,434.5 1248,434.6 1247,434.9 1246,435.8 1245,436.1 1244,435.8 1243,434.9 1242,434.7 1241,434.7 1240,434.6 1239,435.4 1238,436.5 1237,436.9 1236,436.5 1235,435.4 1234,434.5 1233,434.5 1232,434.7 1231,434.5 1230,434.5 1229,434.8 1228,434.9 1227,434.7 1226,436.7 1225,437.7 1224,436.7 1223,434.8 1222,434.6 1221,435.1 1220,436.5 1219,438.0 1218,438.9 1217,438.1 1216,436.9 1215,436.4 1214,439.0 1213,439.0 1212,439.2 1211,439.2 1210,438.0 1209,438.4 1208,439.2 1207,438.1 1206,438.4 1205,438.0 1204,439.3 1203,439.1 1202,438.3 1201,438.3 1200,439.0 1199,437.4 1198,437.4 1197,437.1 1196,436.5 1195,435.7 1194,435.0 1193,434.9 1192,434.9 1191,435.5 1190,436.8 1189,437.6 1188,438.9 1187,440.4 1186,439.1 1185,435.9 1184,435.0 1183,439.3 1182,447.2 1181,448.9 1180,448.9 1179,447.2 1178,444.3 1177,444.1 1176,447.3 1175,451.0 1174,449.4 1173,448.7 1172,446.8 1171,444.1 1170,443.2 1169,444.0 1168,444.4 1167,444.0 1166,448.7 1165,450.2 1164,448.5 1163,448.6 1162,449.2 1161,448.6 1160,446.7 1159,444.1 1158,445.0 1157,449.3 1156,451.7 1155,451.7 1154,449.3 1153,445.0 1152,443.4 1151,444.9 1150,446.0 1149,446.4 1148,446.0 1147,444.9 1146,448.8 1145,449.8 1144,448.3 1143,442.3 1142,444.0 1141,446.6 1140,448.4 1139,447.3 1138,445.1 1137,443.7 1136,441.7 1135,440.6 1134,440.7 1133,440.7 1132,440.7 1131,443.4 1130,445.4 1129,442.9 1128,441.4 1127,442.7 1126,443.1 1125,442.7 1124,441.4 1123,444.5 1122,447.2 1121,445.3 1120,445.3 1119,444.1 1118,442.0 1117,441.3 1116,442.4 1115,443.0 1114,444.0 1113,448.3 1112,444.7 1111,440.5 1110,439.4 1109,438.6 1108,438.1 1107,438.0 1106,437.8 1105,438.4 1104,438.6 1103,438.4 1102,437.8 1101,437.0 1100,437.5 1099,438.9 1098,439.5 1097,438.9 1096,437.5 1095,438.7 1094,441.6 1093,442.4 1092,442.7 1091,443.8 1090,446.6 1089,444.0 1088,440.1 1087,440.4 1086,440.7 1085,440.8 1084,440.7 1083,440.5 1082,440.2 1081,444.0 1080,445.3 1079,444.7 1078,443.8 1077,441.5 1076,442.5 1075,446.0 1074,446.0 1073,442.6 1072,440.8 1071,441.9 1070,444.3 1069,442.5 1068,441.9 1067,442.0 1066,443.8 1065,446.3 1064,447.3 1063,446.3 1062,443.9 1061,443.6 1060,445.8 1059,447.4 1058,449.6 1057,447.4 1056,445.9 1055,443.6 1054,444.1 1053,445.9 1052,444.1 1051,444.1 1050,446.8 1049,447.8 1048,449.5 1047,445.0 1046,444.0 1045,446.8 1044,448.4 1043,448.4 1042,446.8 1041,448.1 1040,451.4 1039,447.4 1038,443.8 1037,443.8 1036,443.4 1035,442.8 1034,444.0 1033,447.6 1032,451.7 1031,448.2 1030,446.7 1029,444.1 1028,444.5 1027,447.3 1026,447.3 1025,450.3 1024,447.3 1023,444.6 1022,445.1 1021,444.6 1020,443.4 1019,443.4 1018,444.8 1017,445.6 1016,444.8 1015,442.7 1014,442.3 1013,444.8 1012,447.9 1011,444.8 1010,443.7 1009,442.2 1008,441.6 1007,441.9 1006,442.2 1005,442.3 1004,446.2 1003,447.8 1002,446.4 1001,442.3 1000,444.2 999,445.5 998,445.9 997,445.5 996,444.2 995,442.3 994,443.7 993,447.7 992,449.2 991,447.6 990,443.7 989,441.9 988,443.1 987,443.9 986,446.5 985,448.6 984,446.6 983,441.8 982,443.9 981,446.6 980,443.9 979,441.2 978,441.4 977,441.4 976,444.0 975,447.4 974,444.9 973,442.8 972,443.5 971,443.5 970,442.8 969,441.7 968,442.7 967,445.4 966,447.2 965,447.9 964,447.2 963,445.4 962,449.7 961,445.1 960,445.0 959,446.5 958,446.5 957,445.1 956,445.2 955,447.3 954,445.0 953,446.8 952,447.4 951,446.8 950,445.1 949,444.8 948,448.8 947,445.6 946,444.2 945,444.2 944,443.4 943,442.0 942,441.9 941,445.2 940,447.0 939,445.8 938,443.1 937,441.9 936,443.2 935,445.8 934,445.9 933,449.0 932,445.9 931,442.4 930,442.4 929,440.8 928,440.7 927,441.2 926,441.8 925,441.1 924,439.4 923,439.4 922,441.4 921,442.7 920,443.2 919,442.7 918,442.8 917,440.4 916,439.6 915,441.7 914,441.7 913,441.6 912,443.6 911,442.1 910,439.9 909,439.9 908,439.4 907,438.5 906,441.5 905,443.1 904,441.7 903,439.4 902,438.9 901,440.4 900,441.0 899,442.3 898,440.2 897,438.5 896,434.8 895,435.0 894,435.1 893,435.1 892,436.3 891,437.9 890,439.0 889,440.3 888,440.3 887,438.8 886,437.8 885,438.9 884,440.4 883,441.3 882,441.6 881,441.0 880,439.5 879,438.4 878,437.1 877,437.4 876,438.3 875,438.9 874,438.4 873,437.7 872,437.7 871,437.4 870,437.0 869,436.3 868,436.4 867,438.5 866,440.4 865,443.4 864,444.4 863,445.8 862,445.1 861,444.0 860,441.9 859,439.9 858,437.5 857,435.7 856,435.1 855,435.5 854,436.2 853,437.1 852,438.2 851,438.9 850,439.1 849,438.7 848,437.8 847,437.0 846,436.2 845,435.1 844,435.8 843,436.8 842,437.3 841,438.2 840,438.4 839,438.3 838,437.3 837,436.9 836,435.7 835,435.0 834,435.0 833,435.0 832,435.0 831,434.7 830,435.1 829,435.7 828,436.5 827,437.2 826,437.7 825,437.4 824,436.6 823,435.7 822,435.1 821,435.2 820,435.0 819,435.3 818,435.7 817,435.9 816,435.9 815,436.0 814,435.8 813,435.7 812,435.4 811,434.9 810,434.7 809,434.8 808,435.6 807,435.9 806,435.6 805,435.3 804,435.6 803,436.0 802,436.0 801,436.0 800,436.6 799,437.3 798,437.8 797,438.1 796,438.1 795,437.8 794,437.3 793,436.6 792,435.8 791,436.3 790,436.7 789,436.1 788,435.7 787,437.1 786,438.2 785,438.8 784,438.8 783,438.2 782,437.1 781,437.8 780,440.6 779,443.5 778,443.1 777,442.1 776,438.6 775,436.0 774,435.2 773,435.2 772,435.2 771,435.0 770,436.3 769,438.1 768,439.5 767,439.9 766,438.9 765,436.7 764,436.7 763,437.3 762,437.3 761,436.7 760,437.0 759,438.7 758,439.4 757,440.1 756,439.6 755,440.5 754,442.7 753,444.9 752,446.2 751,446.8 750,447.6 749,446.9 748,446.3 747,443.8 746,441.6 745,439.9 744,438.1 743,436.5 742,435.3 741,434.9 740,434.8 739,434.8 738,434.7 737,435.1 736,434.9 735,434.9 734,435.2 733,435.9 732,436.3 731,436.5 730,436.6 729,436.2 728,435.7 727,435.0 726,434.8 725,435.0 724,435.0 723,434.7 722,435.2 721,436.4 720,437.3 719,437.7 718,437.7 717,437.3 716,436.4 715,435.2 714,435.1 713,434.7 712,436.1 711,438.7 710,440.9 709,442.6 708,442.2 707,439.8 706,437.0 705,435.0 704,435.0 703,435.2 702,436.1 701,437.2 700,437.8 699,437.2 698,436.1 697,435.4 696,435.1 695,436.7 694,440.7 693,444.2 692,446.2 691,446.2 690,443.5 689,439.3 688,438.8 687,438.8 686,438.2 685,439.9 684,441.1 683,442.1 682,440.9 681,440.2 680,437.9 679,436.4 678,434.9 677,434.9 676,435.1 675,434.7 674,434.8 673,435.1 672,435.2 671,435.1 670,435.1 669,437.7 668,438.8 667,437.7 666,435.0 665,435.0 664,435.2 663,436.9 662,438.1 661,439.0 660,438.1 659,438.5 658,439.6 657,439.9 656,439.8 655,439.7 654,438.6 653,437.3 652,436.2 651,435.1 650,435.5 649,435.9 648,436.0 647,435.9 646,435.5 645,435.1 644,435.7 643,436.3 642,436.7 641,436.2 640,435.8 639,435.2 638,435.4 637,435.2 636,435.0 635,435.2 634,434.8 633,435.7 632,436.8 631,437.8 630,437.6 629,438.1 628,438.1 627,437.6 626,436.7 625,440.6 624,444.8 623,443.1 622,438.1 621,434.9 620,436.4 619,438.2 618,439.1 617,437.5 616,435.9 615,435.0 614,434.9 613,435.0 612,434.8 611,435.0 610,435.1 609,435.1 608,434.9 607,436.3 606,438.8 605,440.3 604,439.0 603,437.2 602,435.5 601,435.8 600,435.5 599,435.0 598,434.7 597,435.0 596,434.9 595,435.0 594,435.0 593,435.6 592,435.8 591,436.0 590,435.5 589,434.9 588,434.7 587,435.5 586,435.9 585,435.9 584,435.5 583,434.8 582,434.7 Z" fill="#3b3b3b"/>
<path d="M582,521.5 L582,519.0 583,519.5 584,518.6 585,518.1 586,518.1 587,518.6 588,519.0 589,519.0 590,518.6 591,517.9 592,517.8 593,518.4 594,518.7 595,518.8 596,518.8 597,519.2 598,518.9 599,518.9 600,518.8 601,519.0 602,518.4 603,516.6 604,514.0 605,513.0 606,514.2 607,517.1 608,519.0 609,518.6 610,518.7 611,518.2 612,518.2 613,518.7 614,518.8 615,519.1 616,518.1 617,516.0 618,514.2 619,515.2 620,515.8 621,517.5 622,515.6 623,508.4 624,507.3 625,512.2 626,518.7 627,518.9 628,518.9 629,517.4 630,515.9 631,515.6 632,516.9 633,518.4 634,518.6 635,518.5 636,518.5 637,518.6 638,518.6 639,519.2 640,518.0 641,517.6 642,517.2 643,517.5 644,518.3 645,519.0 646,518.7 647,518.6 648,519.0 649,519.1 650,519.0 651,518.7 652,517.7 653,516.1 654,514.7 655,514.0 656,513.4 657,512.7 658,513.8 659,514.7 660,515.1 661,514.3 662,515.1 663,517.0 664,518.6 665,518.9 666,518.6 667,518.6 668,518.8 669,519.1 670,519.0 671,518.6 672,518.6 673,519.1 674,519.2 675,518.6 676,518.9 677,518.6 678,518.0 679,517.6 680,515.6 681,512.9 682,511.9 683,510.6 684,511.5 685,512.9 686,515.5 687,517.8 688,517.6 689,513.2 690,508.7 691,504.8 692,504.2 693,507.1 694,512.6 695,516.7 696,518.9 697,519.0 698,517.9 699,516.5 700,516.1 701,516.3 702,517.9 703,518.6 704,519.1 705,519.2 706,516.9 707,513.4 708,511.3 709,510.7 710,511.3 711,514.9 712,517.8 713,518.8 714,519.1 715,518.9 716,518.9 717,518.7 718,518.8 719,518.7 720,518.6 721,519.0 722,518.7 723,518.7 724,518.8 725,518.8 726,519.0 727,518.9 728,518.2 729,517.7 730,517.4 731,517.1 732,517.6 733,517.5 734,517.2 735,517.2 736,517.5 737,518.1 738,518.8 739,519.2 740,519.1 741,518.7 742,518.7 743,517.1 744,515.4 745,513.4 746,510.2 747,508.6 748,506.6 749,504.7 750,502.9 751,503.8 752,505.8 753,506.8 754,509.1 755,512.3 756,513.3 757,513.2 758,513.8 759,515.1 760,516.5 761,518.4 762,519.2 763,519.2 764,517.5 765,516.6 766,514.8 767,513.4 768,513.0 769,515.2 770,516.4 771,517.4 772,518.9 773,518.9 774,518.2 775,516.5 776,514.6 777,511.3 778,509.4 779,508.9 780,511.9 781,515.7 782,518.6 783,518.6 784,519.0 785,518.7 786,518.9 787,519.0 788,518.1 789,517.5 790,517.4 791,517.6 792,518.2 793,518.3 794,516.5 795,515.4 796,515.0 797,515.4 798,516.5 799,518.3 800,518.4 801,517.9 802,517.9 803,518.2 804,518.4 805,518.9 806,518.7 807,518.7 808,517.1 809,515.8 810,515.0 811,514.7 812,515.0 813,515.8 814,517.1 815,518.0 816,518.1 817,518.4 818,518.6 819,517.9 820,518.6 821,519.2 822,519.2 823,518.2 824,517.2 825,516.1 826,515.9 827,515.9 828,517.0 829,517.1 830,517.4 831,517.8 832,518.4 833,518.7 834,518.7 835,519.0 836,518.3 837,516.9 838,515.9 839,515.5 840,515.0 841,515.2 842,515.8 843,517.0 844,517.3 845,517.7 846,517.8 847,516.4 848,515.6 849,514.5 850,514.4 851,514.5 852,515.2 853,516.4 854,517.7 855,518.9 856,518.8 857,518.4 858,516.4 859,513.9 860,510.4 861,507.3 862,505.7 863,506.4 864,506.9 865,509.4 866,512.6 867,515.3 868,517.6 869,518.7 870,519.1 871,518.7 872,517.4 873,515.9 874,515.1 875,514.5 876,515.1 877,515.7 878,516.7 879,515.2 880,513.6 881,512.3 882,512.0 883,512.0 884,512.7 885,513.9 886,515.9 887,513.7 888,513.1 889,512.7 890,513.9 891,515.5 892,517.4 893,518.7 894,518.9 895,518.9 896,519.2 897,515.9 898,512.8 899,511.3 900,513.6 901,515.9 902,516.1 903,514.9 904,511.5 905,509.5 906,511.2 907,515.2 908,515.5 909,515.9 910,513.2 911,510.3 912,508.2 913,510.2 914,514.4 915,514.1 916,514.4 917,512.8 918,510.2 919,513.1 920,513.7 921,513.5 922,512.0 923,513.7 924,514.8 925,515.4 926,515.2 927,514.1 928,512.0 929,510.5 930,510.0 931,511.6 932,507.2 933,503.2 934,506.2 935,509.0 936,510.0 937,511.7 938,508.8 939,502.6 940,500.3 941,502.7 942,508.9 943,509.9 944,505.3 945,503.5 946,505.3 947,507.2 948,502.6 949,505.9 950,511.7 951,511.6 952,511.7 953,512.1 954,507.6 955,505.1 956,506.9 957,505.6 958,505.6 959,507.6 960,511.1 961,506.1 962,503.0 963,504.0 964,505.8 965,510.4 966,509.7 967,504.5 968,504.2 969,509.2 970,509.8 971,506.7 972,509.8 973,510.0 974,506.1 975,502.9 976,508.2 977,509.4 978,503.6 979,500.2 980,500.2 981,503.6 982,509.4 983,510.6 984,506.5 985,502.4 986,503.0 987,504.0 988,506.7 989,510.6 990,510.6 991,507.7 992,507.7 993,505.8 994,509.1 995,510.1 996,509.2 997,509.2 998,510.1 999,511.7 1000,511.8 1001,510.2 1002,505.0 1003,503.3 1004,505.2 1005,511.7 1006,510.6 1007,506.8 1008,504.2 1009,503.3 1010,504.2 1011,506.8 1012,503.2 1013,507.8 1014,503.7 1015,501.6 1016,503.7 1017,509.2 1018,508.8 1019,501.5 1020,497.6 1021,500.2 1022,507.1 1023,507.3 1024,501.0 1025,498.6 1026,501.0 1027,507.4 1028,510.1 1029,508.3 1030,508.3 1031,504.9 1032,500.2 1033,499.1 1034,496.3 1035,499.2 1036,506.7 1037,506.7 1038,499.2 1039,496.3 1040,499.2 1041,502.8 1042,510.3 1043,510.0 1044,510.0 1045,510.8 1046,509.9 1047,507.0 1048,501.3 1049,504.3 1050,505.0 1051,507.0 1052,509.9 1053,510.0 1054,508.5 1055,510.0 1056,510.4 1057,504.3 1058,502.0 1059,504.8 1060,508.5 1061,510.4 1062,509.0 1063,504.9 1064,503.4 1065,505.0 1066,509.1 1067,508.6 1068,506.6 1069,510.2 1070,506.9 1071,510.5 1072,510.2 1073,510.9 1074,512.7 1075,512.4 1076,509.7 1077,507.9 1078,507.3 1079,507.9 1080,505.8 1081,508.8 1082,511.8 1083,509.7 1084,511.9 1085,511.9 1086,508.1 1087,506.0 1088,506.0 1089,508.2 1090,505.2 1091,508.9 1092,508.1 1093,506.7 1094,508.1 1095,514.1 1096,516.5 1097,514.4 1098,513.2 1099,513.2 1100,514.4 1101,516.5 1102,517.1 1103,516.3 1104,516.3 1105,517.1 1106,516.9 1107,514.4 1108,512.4 1109,511.7 1110,512.7 1111,512.6 1112,508.0 1113,503.3 1114,507.4 1115,510.8 1116,511.5 1117,512.6 1118,510.6 1119,508.0 1120,510.7 1121,508.4 1122,504.3 1123,508.0 1124,512.0 1125,511.4 1126,507.9 1127,505.4 1128,504.6 1129,505.5 1130,505.0 1131,509.0 1132,512.8 1133,511.8 1134,511.2 1135,511.2 1136,511.8 1137,512.9 1138,507.8 1139,499.5 1140,504.0 1141,509.0 1142,505.8 1143,505.8 1144,504.2 1145,501.1 1146,496.9 1147,504.1 1148,510.4 1149,508.9 1150,507.9 1151,507.5 1152,507.9 1153,508.9 1154,504.7 1155,500.0 1156,499.2 1157,499.2 1158,506.3 1159,509.5 1160,506.4 1161,504.3 1162,503.5 1163,504.3 1164,502.4 1165,500.3 1166,503.4 1167,504.7 1168,502.3 1169,502.3 1170,504.7 1171,508.9 1172,507.9 1173,501.9 1174,497.8 1175,496.3 1176,497.8 1177,501.9 1178,507.9 1179,510.4 1180,508.9 1181,508.3 1182,508.9 1183,515.3 1184,519.1 1185,518.2 1186,514.3 1187,512.4 1188,514.5 1189,518.1 1190,518.7 1191,518.6 1192,518.8 1193,518.9 1194,519.0 1195,518.7 1196,518.7 1197,518.6 1198,518.6 1199,519.0 1200,515.1 1201,515.4 1202,513.3 1203,510.8 1204,513.3 1205,517.6 1206,518.0 1207,517.4 1208,515.8 1209,514.5 1210,513.1 1211,514.7 1212,516.0 1213,513.8 1214,516.0 1215,516.4 1216,514.4 1217,511.7 1218,510.4 1219,511.5 1220,514.9 1221,517.5 1222,519.1 1223,518.3 1224,514.7 1225,513.0 1226,514.5 1227,518.4 1228,519.2 1229,519.2 1230,519.5 1231,519.0 1232,519.3 1233,519.2 1234,518.5 1235,517.9 1236,517.5 1237,517.3 1238,517.3 1239,517.5 1240,517.9 1241,518.5 1242,519.2 1243,517.7 1244,516.4 1245,516.1 1246,516.3 1247,518.0 1248,519.1 1249,519.3 1250,519.1 1251,518.9 1252,518.9 1253,518.4 1254,517.0 1255,516.2 1256,515.6 1257,516.0 1258,517.1 1259,518.4 1260,519.2 1261,519.2 1262,519.0 1263,519.4 1264,519.2 1265,519.2 1266,518.6 1267,517.9 1268,518.6 1269,518.9 1270,519.2 1271,519.3 1272,519.2 1273,519.5 1274,519.3 1275,519.3 1276,519.1 1277,519.1 1278,519.3 1279,519.1 1280,516.5 1281,515.3 1282,516.5 1283,519.1 1284,519.3 1285,519.5 1286,519.4 1287,519.3 1288,519.0 1289,519.2 1290,519.5 1291,519.5 1292,519.4 1293,519.5 1294,519.0 1295,519.2 1296,519.1 1297,519.1 1298,516.2 1299,508.7 1300,503.5 1301,508.5 1302,514.9 1303,514.9 1304,515.3 1305,516.2 1306,517.4 1307,518.5 1308,517.9 1309,518.4 1310,518.7 1311,517.2 1312,516.2 1313,515.9 1314,516.2 1315,517.2 1316,518.7 1317,519.0 1318,519.5 1319,518.4 1320,517.6 1321,517.7 1322,513.0 1323,510.8 1324,512.8 1325,517.0 1326,515.9 1327,515.6 1328,515.9 1329,517.0 1330,518.5 1331,519.2 1332,519.1 1333,518.0 1334,516.2 1335,513.6 1336,511.2 1337,513.1 1338,516.2 1339,518.0 1340,519.4 1341,518.4 1342,517.2 1343,515.4 1344,514.4 1345,512.1 1346,510.0 1347,508.3 1348,506.9 1349,506.5 1350,505.6 1351,505.9 1352,506.5 1353,508.0 1354,510.1 1355,512.1 1356,514.2 1357,516.0 1358,517.0 1359,518.2 1360,519.2 1361,519.4 1362,519.2 1363,517.9 1364,516.9 1365,516.3 1366,516.0 1367,516.3 1368,516.9 1369,517.9 1370,519.0 1371,519.5 1372,519.1 1373,519.2 1374,518.6 1375,518.1 1376,518.1 1377,518.6 1378,517.7 1379,516.3 1380,515.6 1381,516.6 1382,517.7 1383,517.5 1384,516.8 1385,516.4 1386,516.4 1387,516.8 1388,517.5 1389,518.2 1390,517.8 1391,518.4 1392,519.0 1393,519.4 1394,519.1 1395,519.4 1396,519.0 1397,518.5 1398,518.2 1399,517.8 1400,518.0 1401,517.9 1402,518.4 1403,518.7 1404,519.0 1405,519.3 1406,519.1 1407,518.2 1408,517.5 1409,516.6 1410,515.9 1411,516.2 1412,517.9 1413,519.4 1414,519.2 1415,519.0 1416,519.5 1417,519.1 1418,519.5 1419,519.3 1420,519.6 1421,519.0 1422,519.4 1423,518.8 1424,518.1 1425,517.4 1426,516.2 1427,515.4 1428,515.1 1429,514.9 1430,514.3 1431,514.4 1432,514.9 1433,515.5 1434,516.4 1435,517.2 1436,518.1 1437,516.7 1438,516.1 1439,516.7 1440,518.2 1441,516.8 1442,516.5 1443,516.9 1444,518.4 1445,519.1 1446,519.2 1447,519.5 1448,519.4 1449,519.3 1450,519.0 1451,519.4 1452,519.4 1453,515.9 1454,509.1 1455,505.7 1456,509.5 1457,515.5 1458,517.3 1459,517.6 1460,518.2 1461,519.0 1462,517.9 1463,517.3 1464,516.7 1465,516.7 1466,516.8 1467,517.1 1468,516.7 1469,516.3 1470,516.1 1471,516.3 1472,516.7 1473,517.5 1474,518.5 1475,519.0 1476,518.0 1477,517.5 1478,517.3 1479,517.6 1480,518.2 1481,518.8 1482,519.1 1483,519.4 1484,519.1 1485,519.0 1486,519.1 1487,518.1 1488,517.1 1489,516.3 1490,515.2 1491,507.2 1492,504.1 1493,507.8 1494,514.7 1495,519.1 1496,519.5 1497,519.1 1498,519.1 1499,518.3 1500,517.3 1501,516.6 1502,516.3 1503,516.3 1504,516.6 1505,517.2 1506,517.6 1507,518.3 1508,519.0 1509,519.4 1510,519.4 1511,519.3 1512,519.4 1513,518.7 1514,517.8 1515,517.3 1516,517.7 1517,518.2 1518,517.5 1519,517.2 1520,517.5 1521,518.2 1522,518.5 1523,516.0 1524,514.2 1525,513.4 1526,513.8 1527,515.8 1528,518.2 1529,519.3 1530,519.2 1531,518.4 1532,518.1 1533,518.4 1534,519.1 1535,519.1 1536,519.5 1537,519.4 1538,518.7 1539,518.2 1540,518.1 1541,518.1 1542,518.7 1543,519.0 1544,519.2 1545,519.1 1546,519.0 1547,519.0 1548,519.0 1549,519.1 1550,518.3 1551,514.6 1552,512.8 1553,514.3 1554,512.3 1555,511.6 1556,511.3 1557,510.9 1558,512.6 1559,514.1 1560,516.0 1561,517.6 1562,518.9 1563,519.1 1564,518.5 1565,519.1 1566,519.4 1567,519.4 1568,519.1 1569,517.8 1570,516.8 1571,516.2 1572,515.9 1573,516.4 1574,517.8 1575,519.1 1576,519.5 1577,519.0 1578,518.9 1579,518.4 1580,518.1 1581,517.9 1582,518.1 1583,517.9 1584,518.1 1585,518.5 1586,518.5 1587,518.0 1588,517.5 1589,517.3 1590,517.3 1591,517.5 1592,518.0 1593,518.5 1594,519.1 1595,519.5 1596,518.9 1597,516.0 1598,514.2 1599,516.2 1600,518.8 1601,519.6 1602,519.6 1603,519.4 1604,519.0 1605,519.3 1606,519.4 1607,519.2 1608,518.8 1609,518.2 1610,518.1 1611,518.2 1612,518.7 1613,518.5 1614,519.1 1615,516.7 1616,513.6 1617,509.7 1618,508.4 1619,509.8 1620,513.1 1621,516.9 1622,519.1 1623,519.2 1624,518.8 1625,517.7 1626,517.4 1627,517.7 1628,517.7 1629,518.4 1630,516.6 1631,511.4 1632,509.3 1633,511.7 1634,516.7 1635,517.6 1636,517.2 1637,517.1 1638,517.2 1639,517.6 1640,518.2 1641,519.0 1642,519.1 1643,518.2 1644,517.4 1645,517.4 1646,516.6 1647,514.9 1648,514.0 1649,515.2 1650,516.9 1651,515.0 1652,512.6 1653,510.0 1654,509.6 1655,508.8 1656,508.6 1657,510.2 1658,512.6 1659,514.5 1660,516.8 1661,518.4 1662,519.0 1663,519.0 1664,519.4 1665,517.8 1666,516.5 1667,516.0 1668,516.1 1669,517.8 1670,519.3 1671,519.3 1672,517.9 1673,516.1 1674,515.1 1675,514.5 1676,512.8 1677,515.1 1678,518.2 1679,519.0 1680,519.1 1681,519.1 1682,519.1 1683,519.1 1684,519.1 1685,519.5 1686,519.3 1687,519.6 1688,519.3 1689,519.6 1690,519.2 1691,519.1 1692,519.5 1693,519.3 1694,518.4 1695,518.0 1696,518.4 1697,519.3 1698,518.7 1699,518.2 1700,518.0 1701,516.2 1702,515.0 1703,514.6 1704,515.0 1705,516.2 1706,518.0 1707,519.6 1708,519.1 1709,519.1 1710,519.4 1711,517.6 1712,513.4 1713,511.3 1714,513.6 1715,517.6 1716,519.4 1717,519.1 1718,519.3 1719,519.6 1720,519.0 1721,517.1 1722,516.0 1723,517.1 1724,518.0 1725,518.1 1726,518.3 1727,518.7 1728,518.5 1729,517.2 1730,515.8 1731,514.6 1732,512.2 1733,511.8 1734,510.8 1735,510.1 1736,510.7 1737,511.3 1738,513.1 1739,514.0 1740,515.7 1741,517.2 1742,518.5 1743,518.4 1744,518.5 1745,518.5 1746,518.0 1747,518.3 1748,519.1 1749,519.3 1750,519.1 1751,519.3 1752,519.1 1753,519.2 1754,519.3 1755,519.3 1756,518.5 1757,517.7 1758,516.6 1759,515.9 1760,515.6 1761,516.0 1762,516.5 1763,517.6 1764,518.6 1765,519.2 1766,519.3 1767,519.3 1768,517.0 1769,515.3 1770,515.3 1771,517.0 1772,518.3 1773,515.9 1774,513.6 1775,513.3 1776,513.5 1777,516.2 1778,518.2 1779,519.5 1780,519.2 1781,519.1 1782,519.0 1783,519.1 1784,519.4 1785,519.5 1786,519.4 1787,519.2 1788,518.6 1789,518.1 1790,517.9 1791,518.2 1792,518.7 1793,519.3 1794,519.2 1795,519.2 1796,519.6 1797,517.8 1798,517.0 1799,516.4 1800,515.9 1801,516.6 1802,517.7 1803,518.9 1804,518.6 1805,518.9 1806,519.3 1807,519.5 1808,519.5 1809,519.1 1810,517.8 1811,516.9 1812,516.6 1813,516.9 1814,517.8 1815,517.8 1816,518.4 1817,519.2 1818,519.1 1819,519.6 1820,519.2 1821,519.3 1822,519.5 1823,518.9 1824,517.6 1825,517.0 1826,517.6 1827,518.8 1828,519.5 1829,519.3 1830,518.7 1831,517.5 1832,515.3 1833,513.7 1834,510.8 1835,508.7 1836,507.4 1837,505.4 1838,505.6 1839,506.3 1840,507.3 1841,509.2 1842,510.9 1843,513.2 1844,515.5 1845,517.3 1846,518.7 1847,519.1 1848,519.3 L1848,523.7 1847,523.9 1846,524.3 1845,525.7 1844,527.5 1843,529.8 1842,532.1 1841,533.8 1840,535.7 1839,536.7 1838,537.4 1837,537.6 1836,535.6 1835,534.3 1834,532.2 1833,529.3 1832,527.7 1831,525.5 1830,524.3 1829,523.7 1828,523.5 1827,524.2 1826,525.4 1825,526.0 1824,525.4 1823,524.1 1822,523.5 1821,523.7 1820,523.8 1819,523.4 1818,523.9 1817,523.8 1816,524.6 1815,525.2 1814,525.2 1813,526.1 1812,526.4 1811,526.1 1810,525.2 1809,523.9 1808,523.5 1807,523.5 1806,523.7 1805,524.1 1804,524.4 1803,524.1 1802,525.3 1801,526.4 1800,527.1 1799,526.6 1798,526.0 1797,525.2 1796,523.4 1795,523.8 1794,523.8 1793,523.7 1792,524.3 1791,524.8 1790,525.1 1789,524.9 1788,524.4 1787,523.8 1786,523.6 1785,523.5 1784,523.6 1783,523.9 1782,524.0 1781,523.9 1780,523.8 1779,523.5 1778,524.8 1777,526.8 1776,529.5 1775,529.7 1774,529.4 1773,527.1 1772,524.7 1771,526.0 1770,527.7 1769,527.7 1768,526.0 1767,523.7 1766,523.7 1765,523.8 1764,524.4 1763,525.4 1762,526.5 1761,527.0 1760,527.4 1759,527.1 1758,526.4 1757,525.3 1756,524.5 1755,523.7 1754,523.7 1753,523.8 1752,523.9 1751,523.7 1750,523.9 1749,523.7 1748,523.9 1747,524.7 1746,525.0 1745,524.5 1744,524.5 1743,524.6 1742,524.5 1741,525.8 1740,527.3 1739,529.0 1738,529.9 1737,531.7 1736,532.3 1735,532.9 1734,532.2 1733,531.2 1732,530.8 1731,528.4 1730,527.2 1729,525.8 1728,524.5 1727,524.3 1726,524.7 1725,524.9 1724,525.0 1723,525.9 1722,527.0 1721,525.9 1720,524.0 1719,523.4 1718,523.7 1717,523.9 1716,523.6 1715,525.4 1714,529.4 1713,531.7 1712,529.6 1711,525.4 1710,523.6 1709,523.9 1708,523.9 1707,523.4 1706,525.0 1705,526.8 1704,528.0 1703,528.4 1702,528.0 1701,526.8 1700,525.0 1699,524.8 1698,524.3 1697,523.7 1696,524.6 1695,525.0 1694,524.6 1693,523.7 1692,523.5 1691,523.9 1690,523.8 1689,523.4 1688,523.7 1687,523.4 1686,523.7 1685,523.5 1684,523.9 1683,523.9 1682,523.9 1681,523.9 1680,523.9 1679,524.0 1678,524.8 1677,527.9 1676,530.2 1675,528.5 1674,527.9 1673,526.9 1672,525.1 1671,523.7 1670,523.7 1669,525.2 1668,526.9 1667,527.0 1666,526.5 1665,525.2 1664,523.6 1663,524.0 1662,524.0 1661,524.6 1660,526.2 1659,528.5 1658,530.4 1657,532.8 1656,534.4 1655,534.2 1654,533.4 1653,533.0 1652,530.4 1651,528.0 1650,526.1 1649,527.8 1648,529.0 1647,528.1 1646,526.4 1645,525.6 1644,525.6 1643,524.8 1642,523.9 1641,524.0 1640,524.8 1639,525.4 1638,525.8 1637,525.9 1636,525.8 1635,525.4 1634,526.3 1633,531.3 1632,533.7 1631,531.6 1630,526.4 1629,524.6 1628,525.3 1627,525.3 1626,525.6 1625,525.3 1624,524.2 1623,523.8 1622,523.9 1621,526.1 1620,529.9 1619,533.2 1618,534.6 1617,533.3 1616,529.4 1615,526.3 1614,523.9 1613,524.5 1612,524.3 1611,524.8 1610,524.9 1609,524.8 1608,524.2 1607,523.8 1606,523.6 1605,523.7 1604,524.0 1603,523.6 1602,523.4 1601,523.4 1600,524.2 1599,526.8 1598,528.8 1597,527.0 1596,524.1 1595,523.5 1594,523.9 1593,524.5 1592,525.0 1591,525.5 1590,525.7 1589,525.7 1588,525.5 1587,525.0 1586,524.5 1585,524.5 1584,524.9 1583,525.1 1582,524.9 1581,525.1 1580,524.9 1579,524.6 1578,524.1 1577,524.0 1576,523.5 1575,523.9 1574,525.2 1573,526.6 1572,527.1 1571,526.8 1570,526.2 1569,525.2 1568,523.9 1567,523.6 1566,523.6 1565,523.9 1564,524.5 1563,523.9 1562,524.1 1561,525.4 1560,527.0 1559,528.9 1558,530.4 1557,532.1 1556,531.7 1555,531.4 1554,530.7 1553,528.7 1552,530.2 1551,528.4 1550,524.7 1549,523.9 1548,524.0 1547,524.0 1546,524.0 1545,523.9 1544,523.8 1543,524.0 1542,524.3 1541,524.9 1540,524.9 1539,524.8 1538,524.3 1537,523.6 1536,523.5 1535,523.9 1534,523.9 1533,524.6 1532,524.9 1531,524.6 1530,523.8 1529,523.7 1528,524.8 1527,527.2 1526,529.2 1525,529.6 1524,528.8 1523,527.0 1522,524.5 1521,524.8 1520,525.5 1519,525.8 1518,525.5 1517,524.8 1516,525.3 1515,525.7 1514,525.2 1513,524.3 1512,523.6 1511,523.7 1510,523.6 1509,523.6 1508,524.0 1507,524.7 1506,525.4 1505,525.8 1504,526.4 1503,526.7 1502,526.7 1501,526.4 1500,525.7 1499,524.7 1498,523.9 1497,523.9 1496,523.5 1495,523.9 1494,528.3 1493,535.2 1492,538.9 1491,535.8 1490,527.8 1489,526.7 1488,525.9 1487,524.9 1486,523.9 1485,524.0 1484,523.9 1483,523.6 1482,523.9 1481,524.2 1480,524.8 1479,525.4 1478,525.7 1477,525.5 1476,525.0 1475,524.0 1474,524.5 1473,525.5 1472,526.3 1471,526.7 1470,526.9 1469,526.7 1468,526.3 1467,525.9 1466,526.2 1465,526.3 1464,526.3 1463,525.7 1462,525.1 1461,524.0 1460,524.8 1459,525.4 1458,525.7 1457,527.5 1456,533.5 1455,537.3 1454,533.9 1453,527.1 1452,523.6 1451,523.6 1450,524.0 1449,523.7 1448,523.6 1447,523.5 1446,523.8 1445,523.9 1444,524.6 1443,526.1 1442,526.5 1441,526.2 1440,524.8 1439,526.3 1438,526.9 1437,526.3 1436,524.9 1435,525.8 1434,526.6 1433,527.5 1432,528.1 1431,528.6 1430,528.7 1429,528.1 1428,527.9 1427,527.6 1426,526.8 1425,525.6 1424,524.9 1423,524.2 1422,523.6 1421,524.0 1420,523.4 1419,523.7 1418,523.5 1417,523.9 1416,523.5 1415,524.0 1414,523.8 1413,523.6 1412,525.1 1411,526.8 1410,527.1 1409,526.4 1408,525.5 1407,524.8 1406,523.9 1405,523.7 1404,524.0 1403,524.3 1402,524.6 1401,525.1 1400,525.0 1399,525.2 1398,524.8 1397,524.5 1396,524.0 1395,523.6 1394,523.9 1393,523.6 1392,524.0 1391,524.6 1390,525.2 1389,524.8 1388,525.5 1387,526.2 1386,526.6 1385,526.6 1384,526.2 1383,525.5 1382,525.3 1381,526.4 1380,527.4 1379,526.7 1378,525.3 1377,524.4 1376,524.9 1375,524.9 1374,524.4 1373,523.8 1372,523.9 1371,523.5 1370,524.0 1369,525.1 1368,526.1 1367,526.7 1366,527.0 1365,526.7 1364,526.1 1363,525.1 1362,523.8 1361,523.6 1360,523.8 1359,524.8 1358,526.0 1357,527.0 1356,528.8 1355,530.9 1354,532.9 1353,535.0 1352,536.5 1351,537.1 1350,537.4 1349,536.5 1348,536.1 1347,534.7 1346,533.0 1345,530.9 1344,528.6 1343,527.6 1342,525.8 1341,524.6 1340,523.6 1339,525.0 1338,526.8 1337,529.9 1336,531.8 1335,529.4 1334,526.8 1333,525.0 1332,523.9 1331,523.8 1330,524.5 1329,526.0 1328,527.1 1327,527.4 1326,527.1 1325,526.0 1324,530.2 1323,532.2 1322,530.0 1321,525.3 1320,525.4 1319,524.6 1318,523.5 1317,524.0 1316,524.3 1315,525.8 1314,526.8 1313,527.1 1312,526.8 1311,525.8 1310,524.3 1309,524.6 1308,525.1 1307,524.5 1306,525.6 1305,526.8 1304,527.7 1303,528.1 1302,528.1 1301,534.5 1300,539.5 1299,534.3 1298,526.8 1297,523.9 1296,523.9 1295,523.8 1294,524.0 1293,523.5 1292,523.6 1291,523.5 1290,523.5 1289,523.8 1288,524.0 1287,523.7 1286,523.6 1285,523.5 1284,523.7 1283,523.9 1282,526.5 1281,527.7 1280,526.5 1279,523.9 1278,523.7 1277,523.9 1276,523.9 1275,523.7 1274,523.7 1273,523.5 1272,523.8 1271,523.7 1270,523.8 1269,524.1 1268,524.4 1267,525.1 1266,524.4 1265,523.8 1264,523.8 1263,523.6 1262,524.0 1261,523.8 1260,523.8 1259,524.6 1258,525.9 1257,527.0 1256,527.4 1255,526.8 1254,526.0 1253,524.6 1252,524.1 1251,524.1 1250,523.9 1249,523.7 1248,523.9 1247,525.0 1246,526.7 1245,526.9 1244,526.6 1243,525.3 1242,523.8 1241,524.5 1240,525.1 1239,525.5 1238,525.7 1237,525.7 1236,525.5 1235,525.1 1234,524.5 1233,523.8 1232,523.7 1231,524.0 1230,523.5 1229,523.8 1228,523.8 1227,524.6 1226,528.5 1225,530.0 1224,528.3 1223,524.7 1222,523.9 1221,525.5 1220,528.1 1219,531.5 1218,532.6 1217,531.3 1216,528.6 1215,526.6 1214,527.0 1213,529.2 1212,527.0 1211,528.3 1210,529.9 1209,528.5 1208,527.2 1207,525.6 1206,525.0 1205,525.4 1204,529.7 1203,532.2 1202,529.7 1201,527.6 1200,527.9 1199,524.0 1198,524.4 1197,524.4 1196,524.3 1195,524.3 1194,524.0 1193,524.1 1192,524.2 1191,524.4 1190,524.3 1189,524.9 1188,528.5 1187,530.6 1186,528.7 1185,524.8 1184,523.9 1183,527.7 1182,534.1 1181,534.7 1180,534.1 1179,532.6 1178,535.1 1177,541.1 1176,545.2 1175,546.7 1174,545.2 1173,541.1 1172,535.1 1171,534.1 1170,538.3 1169,540.7 1168,540.7 1167,538.3 1166,539.6 1165,542.7 1164,540.6 1163,538.7 1162,539.5 1161,538.7 1160,536.6 1159,533.5 1158,536.7 1157,543.8 1156,543.8 1155,543.0 1154,538.3 1153,534.1 1152,535.1 1151,535.5 1150,535.1 1149,534.1 1148,532.6 1147,538.9 1146,546.1 1145,541.9 1144,538.8 1143,537.2 1142,537.2 1141,534.0 1140,539.0 1139,543.5 1138,535.2 1137,530.1 1136,531.2 1135,531.8 1134,531.8 1133,531.2 1132,530.2 1131,534.0 1130,538.0 1129,537.5 1128,538.4 1127,537.6 1126,535.1 1125,531.6 1124,531.0 1123,535.0 1122,538.7 1121,534.6 1120,532.3 1119,535.0 1118,532.4 1117,530.4 1116,531.5 1115,532.2 1114,535.6 1113,539.7 1112,535.0 1111,530.4 1110,530.3 1109,531.3 1108,530.6 1107,528.6 1106,526.1 1105,525.9 1104,526.7 1103,526.7 1102,525.9 1101,526.5 1100,528.6 1099,529.8 1098,529.8 1097,528.6 1096,526.5 1095,528.9 1094,534.9 1093,536.3 1092,534.9 1091,534.1 1090,537.8 1089,534.8 1088,537.0 1087,537.0 1086,534.9 1085,531.1 1084,531.1 1083,533.3 1082,531.2 1081,534.2 1080,537.2 1079,535.1 1078,535.7 1077,535.1 1076,533.3 1075,530.6 1074,530.3 1073,532.1 1072,532.8 1071,532.5 1070,536.1 1069,532.8 1068,536.4 1067,534.4 1066,533.9 1065,538.0 1064,539.6 1063,538.1 1062,534.0 1061,532.6 1060,534.5 1059,538.2 1058,541.0 1057,538.7 1056,532.6 1055,533.0 1054,534.5 1053,533.0 1052,533.1 1051,536.0 1050,538.0 1049,538.7 1048,541.7 1047,536.0 1046,533.1 1045,532.2 1044,533.0 1043,533.0 1042,532.7 1041,540.2 1040,543.8 1039,546.7 1038,543.8 1037,536.3 1036,536.3 1035,543.8 1034,546.7 1033,543.9 1032,542.8 1031,538.1 1030,534.7 1029,534.7 1028,532.9 1027,535.6 1026,542.0 1025,544.4 1024,542.0 1023,535.7 1022,535.9 1021,542.8 1020,545.4 1019,541.5 1018,534.2 1017,533.8 1016,539.3 1015,541.4 1014,539.3 1013,535.2 1012,539.8 1011,536.2 1010,538.8 1009,539.7 1008,538.8 1007,536.2 1006,532.4 1005,531.3 1004,537.8 1003,539.7 1002,538.0 1001,532.8 1000,531.2 999,531.3 998,532.9 997,533.8 996,533.8 995,532.9 994,533.9 993,537.2 992,535.3 991,535.3 990,532.4 989,532.4 988,536.3 987,539.0 986,540.0 985,540.6 984,536.5 983,532.4 982,533.6 981,539.4 980,542.8 979,542.8 978,539.4 977,533.6 976,534.8 975,540.1 974,536.9 973,533.0 972,533.2 971,536.3 970,533.2 969,533.8 968,538.8 967,538.5 966,533.3 965,532.6 964,537.2 963,539.0 962,540.0 961,536.9 960,531.9 959,535.4 958,537.4 957,537.4 956,536.1 955,537.9 954,535.4 953,530.9 952,531.3 951,531.4 950,531.3 949,537.1 948,540.4 947,535.8 946,537.7 945,539.5 944,537.7 943,533.1 942,534.1 941,540.3 940,542.7 939,540.4 938,534.2 937,531.3 936,533.0 935,534.0 934,536.8 933,539.8 932,535.8 931,531.4 930,533.0 929,532.5 928,531.0 927,528.9 926,527.8 925,527.6 924,528.2 923,529.3 922,531.0 921,529.5 920,529.3 919,529.9 918,532.8 917,530.2 916,528.6 915,528.9 914,528.6 913,532.8 912,534.8 911,532.7 910,529.8 909,527.1 908,527.5 907,527.8 906,531.8 905,533.5 904,531.5 903,528.1 902,526.9 901,527.1 900,529.4 899,531.7 898,530.2 897,527.1 896,523.8 895,524.1 894,524.1 893,524.3 892,525.6 891,527.5 890,529.1 889,530.3 888,529.9 887,529.3 886,527.1 885,529.1 884,530.3 883,531.0 882,531.0 881,530.7 880,529.4 879,527.8 878,526.3 877,527.3 876,527.9 875,528.5 874,527.9 873,527.1 872,525.6 871,524.3 870,523.9 869,524.3 868,525.4 867,527.7 866,530.4 865,533.6 864,536.1 863,536.6 862,537.3 861,535.7 860,532.6 859,529.1 858,526.6 857,524.6 856,524.2 855,524.1 854,525.3 853,526.6 852,527.8 851,528.5 850,528.6 849,528.5 848,527.4 847,526.6 846,525.2 845,525.3 844,525.7 843,526.0 842,527.2 841,527.8 840,528.0 839,527.5 838,527.1 837,526.1 836,524.7 835,524.0 834,524.3 833,524.3 832,524.6 831,525.2 830,525.6 829,525.9 828,526.0 827,527.1 826,527.1 825,526.9 824,525.8 823,524.8 822,523.8 821,523.8 820,524.4 819,525.1 818,524.4 817,524.6 816,524.9 815,525.0 814,525.9 813,527.2 812,528.0 811,528.3 810,528.0 809,527.2 808,525.9 807,524.3 806,524.3 805,524.1 804,524.6 803,524.8 802,525.1 801,525.1 800,524.6 799,524.7 798,526.5 797,527.6 796,528.0 795,527.6 794,526.5 793,524.7 792,524.8 791,525.4 790,525.6 789,525.5 788,524.9 787,524.0 786,524.1 785,524.3 784,524.0 783,524.4 782,524.4 781,527.3 780,531.1 779,534.1 778,533.6 777,531.7 776,528.4 775,526.5 774,524.8 773,524.1 772,524.1 771,525.6 770,526.6 769,527.8 768,530.0 767,529.6 766,528.2 765,526.4 764,525.5 763,523.8 762,523.8 761,524.6 760,526.5 759,527.9 758,529.2 757,529.8 756,529.7 755,530.7 754,533.9 753,536.2 752,537.2 751,539.2 750,540.1 749,538.3 748,536.4 747,534.4 746,532.8 745,529.6 744,527.6 743,525.9 742,524.3 741,524.3 740,523.9 739,523.8 738,524.2 737,524.9 736,525.5 735,525.8 734,525.8 733,525.5 732,525.4 731,525.9 730,525.6 729,525.3 728,524.8 727,524.1 726,524.0 725,524.2 724,524.2 723,524.3 722,524.3 721,524.0 720,524.4 719,524.3 718,524.2 717,524.3 716,524.1 715,524.1 714,523.9 713,524.2 712,525.2 711,528.1 710,531.7 709,532.3 708,531.7 707,529.6 706,526.1 705,523.8 704,523.9 703,524.4 702,525.1 701,526.7 700,526.9 699,526.5 698,525.1 697,524.0 696,524.1 695,526.3 694,530.4 693,535.9 692,538.8 691,538.2 690,534.3 689,529.8 688,525.4 687,525.2 686,527.5 685,530.1 684,531.5 683,532.4 682,531.1 681,530.1 680,527.4 679,525.4 678,525.0 677,524.4 676,524.1 675,524.4 674,523.8 673,523.9 672,524.4 671,524.4 670,524.0 669,523.9 668,524.2 667,524.4 666,524.4 665,524.1 664,524.4 663,526.0 662,527.9 661,528.7 660,527.9 659,528.3 658,529.2 657,530.3 656,529.6 655,529.0 654,528.3 653,526.9 652,525.3 651,524.3 650,524.0 649,523.9 648,524.0 647,524.4 646,524.3 645,524.0 644,524.7 643,525.5 642,525.8 641,525.4 640,525.0 639,523.8 638,524.4 637,524.4 636,524.5 635,524.5 634,524.4 633,524.6 632,526.1 631,527.4 630,527.1 629,525.6 628,524.1 627,524.1 626,524.3 625,530.8 624,535.7 623,534.6 622,527.4 621,525.5 620,527.2 619,527.8 618,528.8 617,527.0 616,524.9 615,523.9 614,524.2 613,524.3 612,524.8 611,524.8 610,524.3 609,524.4 608,524.0 607,525.9 606,528.8 605,530.0 604,529.0 603,526.4 602,524.6 601,524.0 600,524.2 599,524.1 598,524.1 597,523.8 596,524.2 595,524.2 594,524.3 593,524.6 592,525.2 591,525.1 590,524.4 589,524.0 588,524.0 587,524.4 586,524.9 585,524.9 584,524.4 583,523.5 582,524.0 Z" fill="#869783"/>
<rect x="1106.5" y="393.5" width="5" height="79.5" fill="#bebebe"/>
<line x1="1106.5" y1="394.5" x2="1106.5" y2="472.0" stroke="#4e4e4e" stroke-width="1.4"/><line x1="1111.5" y1="394.5" x2="1111.5" y2="472.0" stroke="#4e4e4e" stroke-width="1.4"/>
<line x1="609.6" y1="394.5" x2="609.6" y2="472.0" stroke="#3a3a3a" stroke-width="1.6"/>
<line x1="622.9" y1="394.5" x2="622.9" y2="472.0" stroke="#3a3a3a" stroke-width="1.6"/>
<line x1="638.5" y1="394.5" x2="638.5" y2="472.0" stroke="#3a3a3a" stroke-width="1.6"/>
<line x1="687.7" y1="394.5" x2="687.7" y2="472.0" stroke="#3a3a3a" stroke-width="1.6"/>
<line x1="720.5" y1="394.5" x2="720.5" y2="472.0" stroke="#3a3a3a" stroke-width="1.6"/>
<line x1="737" y1="394.5" x2="737" y2="472.0" stroke="#3a3a3a" stroke-width="1.6"/>
<line x1="761" y1="394.5" x2="761" y2="472.0" stroke="#3a3a3a" stroke-width="1.6"/>
<line x1="772" y1="394.5" x2="772" y2="472.0" stroke="#3a3a3a" stroke-width="1.6"/>
<line x1="784.6" y1="394.5" x2="784.6" y2="472.0" stroke="#3a3a3a" stroke-width="1.6"/>
<line x1="819" y1="394.5" x2="819" y2="472.0" stroke="#3a3a3a" stroke-width="1.6"/>
<line x1="831.5" y1="394.5" x2="831.5" y2="472.0" stroke="#3a3a3a" stroke-width="1.6"/>
<line x1="870.5" y1="394.5" x2="870.5" y2="472.0" stroke="#3a3a3a" stroke-width="1.6"/>
<line x1="897.6" y1="394.5" x2="897.6" y2="472.0" stroke="#3a3a3a" stroke-width="1.6"/>
<line x1="929.6" y1="394.5" x2="929.6" y2="472.0" stroke="#3a3a3a" stroke-width="1.6"/>
<line x1="966.3" y1="394.5" x2="966.3" y2="472.0" stroke="#3a3a3a" stroke-width="1.6"/>
<line x1="1018.7" y1="394.5" x2="1018.7" y2="472.0" stroke="#3a3a3a" stroke-width="1.6"/>
<line x1="1066.3" y1="394.5" x2="1066.3" y2="472.0" stroke="#3a3a3a" stroke-width="1.6"/>
<line x1="1095.2" y1="394.5" x2="1095.2" y2="472.0" stroke="#3a3a3a" stroke-width="1.6"/>
<line x1="1106.2" y1="394.5" x2="1106.2" y2="472.0" stroke="#3a3a3a" stroke-width="1.6"/>
<line x1="1111.6" y1="394.5" x2="1111.6" y2="472.0" stroke="#3a3a3a" stroke-width="1.6"/>
<line x1="1127.25" y1="394.5" x2="1127.25" y2="472.0" stroke="#3a3a3a" stroke-width="1.6"/>
<line x1="1138.2" y1="394.5" x2="1138.2" y2="472.0" stroke="#3a3a3a" stroke-width="1.6"/>
<line x1="1182.7" y1="394.5" x2="1182.7" y2="472.0" stroke="#3a3a3a" stroke-width="1.6"/>
<line x1="1200.7" y1="394.5" x2="1200.7" y2="472.0" stroke="#3a3a3a" stroke-width="1.6"/>
<line x1="1238.7" y1="394.5" x2="1238.7" y2="472.0" stroke="#3a3a3a" stroke-width="1.6"/>
<line x1="1252" y1="394.5" x2="1252" y2="472.0" stroke="#3a3a3a" stroke-width="1.6"/>
<line x1="1261.3" y1="394.5" x2="1261.3" y2="472.0" stroke="#3a3a3a" stroke-width="1.6"/>
<line x1="1295.7" y1="394.5" x2="1295.7" y2="472.0" stroke="#3a3a3a" stroke-width="1.6"/>
<line x1="1308.2" y1="394.5" x2="1308.2" y2="472.0" stroke="#3a3a3a" stroke-width="1.6"/>
<line x1="1321.5" y1="394.5" x2="1321.5" y2="472.0" stroke="#3a3a3a" stroke-width="1.6"/>
<line x1="1334" y1="394.5" x2="1334" y2="472.0" stroke="#3a3a3a" stroke-width="1.6"/>
<line x1="1345" y1="394.5" x2="1345" y2="472.0" stroke="#3a3a3a" stroke-width="1.6"/>
<line x1="1357.4" y1="394.5" x2="1357.4" y2="472.0" stroke="#3a3a3a" stroke-width="1.6"/>
<line x1="1373.8" y1="394.5" x2="1373.8" y2="472.0" stroke="#3a3a3a" stroke-width="1.6"/>
<line x1="1399.6" y1="394.5" x2="1399.6" y2="472.0" stroke="#3a3a3a" stroke-width="1.6"/>
<line x1="1414.4" y1="394.5" x2="1414.4" y2="472.0" stroke="#3a3a3a" stroke-width="1.6"/>
<line x1="1428.5" y1="394.5" x2="1428.5" y2="472.0" stroke="#3a3a3a" stroke-width="1.6"/>
<line x1="1451.2" y1="394.5" x2="1451.2" y2="472.0" stroke="#3a3a3a" stroke-width="1.6"/>
<line x1="1464.4" y1="394.5" x2="1464.4" y2="472.0" stroke="#3a3a3a" stroke-width="1.6"/>
<line x1="1481.6" y1="394.5" x2="1481.6" y2="472.0" stroke="#3a3a3a" stroke-width="1.6"/>
<line x1="1505" y1="394.5" x2="1505" y2="472.0" stroke="#3a3a3a" stroke-width="1.6"/>
<line x1="1524.6" y1="394.5" x2="1524.6" y2="472.0" stroke="#3a3a3a" stroke-width="1.6"/>
<line x1="1538.3" y1="394.5" x2="1538.3" y2="472.0" stroke="#3a3a3a" stroke-width="1.6"/>
<line x1="1549.3" y1="394.5" x2="1549.3" y2="472.0" stroke="#3a3a3a" stroke-width="1.6"/>
<line x1="1559.4" y1="394.5" x2="1559.4" y2="472.0" stroke="#3a3a3a" stroke-width="1.6"/>
<line x1="1572.7" y1="394.5" x2="1572.7" y2="472.0" stroke="#3a3a3a" stroke-width="1.6"/>
<line x1="1595.4" y1="394.5" x2="1595.4" y2="472.0" stroke="#3a3a3a" stroke-width="1.6"/>
<line x1="1615.7" y1="394.5" x2="1615.7" y2="472.0" stroke="#3a3a3a" stroke-width="1.6"/>
<line x1="1632" y1="394.5" x2="1632" y2="472.0" stroke="#3a3a3a" stroke-width="1.6"/>
<line x1="1648.5" y1="394.5" x2="1648.5" y2="472.0" stroke="#3a3a3a" stroke-width="1.6"/>
<line x1="1661.8" y1="394.5" x2="1661.8" y2="472.0" stroke="#3a3a3a" stroke-width="1.6"/>
<line x1="1675" y1="394.5" x2="1675" y2="472.0" stroke="#3a3a3a" stroke-width="1.6"/>
<line x1="1713.3" y1="394.5" x2="1713.3" y2="472.0" stroke="#3a3a3a" stroke-width="1.6"/>
<line x1="1761.8" y1="394.5" x2="1761.8" y2="472.0" stroke="#3a3a3a" stroke-width="1.6"/>
<line x1="1802.4" y1="394.5" x2="1802.4" y2="472.0" stroke="#3a3a3a" stroke-width="1.6"/>
<path d="M639.5,464.0 L639.5,472.0 L649.5,472.0 Z" fill="#eef0f0"/>
<path d="M688.7,464.0 L688.7,472.0 L698.7,472.0 Z" fill="#eef0f0"/>
<path d="M738,464.0 L738,472.0 L748,472.0 Z" fill="#eef0f0"/>
<path d="M785.6,464.0 L785.6,472.0 L795.6,472.0 Z" fill="#eef0f0"/>
<path d="M832.5,464.0 L832.5,472.0 L842.5,472.0 Z" fill="#eef0f0"/>
<path d="M871.5,464.0 L871.5,472.0 L881.5,472.0 Z" fill="#eef0f0"/>
<path d="M898.6,464.0 L898.6,472.0 L908.6,472.0 Z" fill="#eef0f0"/>
<path d="M930.6,464.0 L930.6,472.0 L940.6,472.0 Z" fill="#eef0f0"/>
<path d="M967.3,464.0 L967.3,472.0 L977.3,472.0 Z" fill="#eef0f0"/>
<path d="M1019.7,464.0 L1019.7,472.0 L1029.7,472.0 Z" fill="#eef0f0"/>
<path d="M1067.3,464.0 L1067.3,472.0 L1077.3,472.0 Z" fill="#eef0f0"/>
<path d="M1139.2,464.0 L1139.2,472.0 L1149.2,472.0 Z" fill="#eef0f0"/>
<path d="M1201.7,464.0 L1201.7,472.0 L1211.7,472.0 Z" fill="#eef0f0"/>
<path d="M1358.4,464.0 L1358.4,472.0 L1368.4,472.0 Z" fill="#eef0f0"/>
<path d="M1452.2,464.0 L1452.2,472.0 L1462.2,472.0 Z" fill="#eef0f0"/>
<path d="M1596.4,464.0 L1596.4,472.0 L1606.4,472.0 Z" fill="#eef0f0"/>
<path d="M1676,464.0 L1676,472.0 L1686,472.0 Z" fill="#eef0f0"/>
<path d="M1762.8,464.0 L1762.8,472.0 L1772.8,472.0 Z" fill="#eef0f0"/>
<path d="M1803.4,464.0 L1803.4,472.0 L1813.4,472.0 Z" fill="#eef0f0"/>
<line x1="580" y1="486" x2="2021" y2="486" stroke="#3a8a3a" stroke-width="1.8"/>
<rect x="583" y="563" width="19.5" height="19" fill="#3ca5ad"/>
<text x="592.7" y="578.5" font-family="Liberation Mono" font-size="15" fill="#d8f4f4" text-anchor="middle" font-weight="bold">i</text>
<rect x="641" y="563" width="19.5" height="19" fill="#3ca5ad"/>
<text x="650.7" y="578.5" font-family="Liberation Mono" font-size="15" fill="#d8f4f4" text-anchor="middle" font-weight="bold">i</text>
<rect x="692" y="563" width="19.5" height="19" fill="#3ca5ad"/>
<text x="701.7" y="578.5" font-family="Liberation Mono" font-size="15" fill="#d8f4f4" text-anchor="middle" font-weight="bold">i</text>
<rect x="786.5" y="563" width="19.5" height="19" fill="#3ca5ad"/>
<text x="796.2" y="578.5" font-family="Liberation Mono" font-size="15" fill="#d8f4f4" text-anchor="middle" font-weight="bold">i</text>
<rect x="835" y="563" width="19.5" height="19" fill="#3ca5ad"/>
<text x="844.7" y="578.5" font-family="Liberation Mono" font-size="15" fill="#d8f4f4" text-anchor="middle" font-weight="bold">i</text>
<rect x="581" y="586" width="1268.5" height="77.5" fill="url(#itg)" stroke="#4e4e4e" stroke-width="1.5"/>
<path d="M582,624.5 L582,622.9 583,622.7 584,622.0 585,621.6 586,621.6 587,622.0 588,622.8 589,622.5 590,621.9 591,621.6 592,621.7 593,621.9 594,622.4 595,622.7 596,622.7 597,622.6 598,622.6 599,622.6 600,622.6 601,622.7 602,622.7 603,620.5 604,618.2 605,617.5 606,618.7 607,621.0 608,622.4 609,622.6 610,622.4 611,621.9 612,620.7 613,620.3 614,620.7 615,621.9 616,621.9 617,619.9 618,618.5 619,619.3 620,620.9 621,621.0 622,619.5 623,614.3 624,612.6 625,617.1 626,621.0 627,621.6 628,622.3 629,621.1 630,620.0 631,619.7 632,620.5 633,621.9 634,622.1 635,621.8 636,621.7 637,621.8 638,622.1 639,622.5 640,621.8 641,621.2 642,621.0 643,621.2 644,621.8 645,622.6 646,622.4 647,622.8 648,622.8 649,622.4 650,622.3 651,622.3 652,621.4 653,620.3 654,618.9 655,618.1 656,617.4 657,617.2 658,618.3 659,618.7 660,619.5 661,618.9 662,619.4 663,620.6 664,621.6 665,621.8 666,622.4 667,622.6 668,622.6 669,622.8 670,622.7 671,622.2 672,622.0 673,622.2 674,622.7 675,622.4 676,622.3 677,622.6 678,622.7 679,621.1 680,619.3 681,617.5 682,616.0 683,615.9 684,616.2 685,617.8 686,619.4 687,621.2 688,621.0 689,617.8 690,613.3 691,611.5 692,610.0 693,612.7 694,616.9 695,620.7 696,622.4 697,622.7 698,621.5 699,620.2 700,619.8 701,620.3 702,620.9 703,620.5 704,620.3 705,620.3 706,620.4 707,618.0 708,615.5 709,615.4 710,616.2 711,619.0 712,621.3 713,622.8 714,622.5 715,622.7 716,622.7 717,622.8 718,622.4 719,622.4 720,622.7 721,622.5 722,622.4 723,622.4 724,622.7 725,622.6 726,622.4 727,622.3 728,621.6 729,621.1 730,620.7 731,620.5 732,620.5 733,620.7 734,621.1 735,621.6 736,622.3 737,622.4 738,622.6 739,622.7 740,621.6 741,620.9 742,621.6 743,621.0 744,619.3 745,617.5 746,615.9 747,613.6 748,611.9 749,609.7 750,610.4 751,610.0 752,611.5 753,613.2 754,615.1 755,617.1 756,617.9 757,617.5 758,617.9 759,618.8 760,620.5 761,621.9 762,622.8 763,622.5 764,622.5 765,620.6 766,618.8 767,617.2 768,617.7 769,619.0 770,621.3 771,622.8 772,622.6 773,622.4 774,622.3 775,621.3 776,618.6 777,615.5 778,613.9 779,614.9 780,616.9 781,619.9 782,620.8 783,621.4 784,622.4 785,622.7 786,622.4 787,621.3 788,619.8 789,619.3 790,619.8 791,621.2 792,621.9 793,622.4 794,622.7 795,622.4 796,622.5 797,622.1 798,622.0 799,622.0 800,621.8 801,621.7 802,621.6 803,621.5 804,621.8 805,622.2 806,621.8 807,620.7 808,620.2 809,620.7 810,621.8 811,622.5 812,622.2 813,621.8 814,621.7 815,621.5 816,621.8 817,621.7 818,622.2 819,622.7 820,622.5 821,622.4 822,621.8 823,621.3 824,620.8 825,620.1 826,619.9 827,620.1 828,620.7 829,621.9 830,622.8 831,622.5 832,622.4 833,621.3 834,620.4 835,620.0 836,620.0 837,620.4 838,619.9 839,619.6 840,619.4 841,619.3 842,620.1 843,620.9 844,621.6 845,622.4 846,621.4 847,620.3 848,619.5 849,618.9 850,618.5 851,618.9 852,619.5 853,620.3 854,621.3 855,622.3 856,622.6 857,621.8 858,620.2 859,617.7 860,615.5 861,613.4 862,612.2 863,611.4 864,612.1 865,614.2 866,617.2 867,619.2 868,621.3 869,622.6 870,622.6 871,622.4 872,621.3 873,620.1 874,619.2 875,618.4 876,618.7 877,619.9 878,620.4 879,618.8 880,617.7 881,617.0 882,616.3 883,616.2 884,617.3 885,618.4 886,619.8 887,618.6 888,617.3 889,617.7 890,618.1 891,619.6 892,621.2 893,622.4 894,622.3 895,622.6 896,622.6 897,619.8 898,617.8 899,615.4 900,617.8 901,619.2 902,618.4 903,617.9 904,615.6 905,614.1 906,616.0 907,619.1 908,619.6 909,619.7 910,619.0 911,615.7 912,614.4 913,615.2 914,617.1 915,618.2 916,619.1 917,616.8 918,615.0 919,617.5 920,617.7 921,615.2 922,614.2 923,615.1 924,617.6 925,619.2 926,619.2 927,619.2 928,618.2 929,617.1 930,615.3 931,613.9 932,612.7 933,609.3 934,611.9 935,614.0 936,615.4 937,614.5 938,611.4 939,609.3 940,608.6 941,609.4 942,611.5 943,614.6 944,616.0 945,615.3 946,615.0 947,612.2 948,607.8 949,611.7 950,613.9 951,610.3 952,610.3 953,614.0 954,612.0 955,610.1 956,612.5 957,615.4 958,613.6 959,612.9 960,613.6 961,612.6 962,607.8 963,612.0 964,610.8 965,610.2 966,610.9 967,612.4 968,614.9 969,614.4 970,611.6 971,611.6 972,614.4 973,614.3 974,611.4 975,609.9 976,612.8 977,614.1 978,610.8 979,610.8 980,614.0 981,614.3 982,610.7 983,608.7 984,608.7 985,609.5 986,611.7 987,615.5 988,614.3 989,614.3 990,615.4 991,616.1 992,614.4 993,611.3 994,614.0 995,615.7 996,616.0 997,615.1 998,613.2 999,612.0 1000,612.0 1001,613.1 1002,610.8 1003,609.8 1004,609.7 1005,609.7 1006,613.5 1007,615.8 1008,615.1 1009,614.6 1010,614.4 1011,613.0 1012,609.5 1013,612.5 1014,615.8 1015,615.1 1016,614.6 1017,614.4 1018,614.6 1019,614.4 1020,614.5 1021,614.3 1022,613.3 1023,613.3 1024,610.1 1025,607.3 1026,609.7 1027,613.5 1028,614.9 1029,614.8 1030,614.7 1031,610.2 1032,605.5 1033,609.7 1034,614.9 1035,614.9 1036,614.7 1037,614.9 1038,613.6 1039,609.2 1040,607.0 1041,608.7 1042,609.3 1043,611.1 1044,613.6 1045,612.3 1046,607.8 1047,606.1 1048,607.8 1049,611.5 1050,614.9 1051,614.7 1052,614.9 1053,614.1 1054,612.3 1055,611.3 1056,611.3 1057,610.1 1058,607.7 1059,611.0 1060,611.5 1061,610.6 1062,611.5 1063,613.8 1064,612.9 1065,608.9 1066,606.6 1067,608.6 1068,612.4 1069,615.1 1070,613.1 1071,613.9 1072,612.7 1073,612.7 1074,614.0 1075,616.1 1076,614.8 1077,611.1 1078,611.1 1079,613.6 1080,611.9 1081,613.7 1082,617.2 1083,617.4 1084,615.7 1085,614.0 1086,615.8 1087,616.9 1088,616.0 1089,613.6 1090,611.5 1091,614.4 1092,617.0 1093,616.1 1094,613.3 1095,614.6 1096,617.3 1097,617.7 1098,618.7 1099,620.1 1100,620.1 1101,619.4 1102,620.1 1103,620.6 1104,620.2 1105,620.6 1106,620.4 1107,618.4 1108,616.6 1109,615.3 1110,615.0 1111,615.6 1112,612.7 1113,610.1 1114,613.0 1115,616.6 1116,616.4 1117,616.1 1118,616.4 1119,615.0 1120,612.2 1121,611.1 1122,609.9 1123,613.4 1124,614.5 1125,610.7 1126,609.3 1127,610.7 1128,614.5 1129,614.2 1130,611.6 1131,611.8 1132,611.8 1133,613.2 1134,615.6 1135,616.6 1136,616.1 1137,615.8 1138,615.8 1139,615.0 1140,614.5 1141,614.7 1142,614.4 1143,614.4 1144,609.7 1145,607.7 1146,609.1 1147,607.0 1148,607.0 1149,609.1 1150,612.8 1151,611.7 1152,608.6 1153,611.7 1154,611.1 1155,607.9 1156,611.3 1157,611.7 1158,612.0 1159,612.9 1160,614.2 1161,613.7 1162,611.5 1163,609.9 1164,609.4 1165,607.5 1166,609.4 1167,613.7 1168,614.1 1169,612.8 1170,612.1 1171,612.1 1172,612.8 1173,614.1 1174,609.7 1175,605.3 1176,609.9 1177,612.8 1178,609.2 1179,607.1 1180,607.1 1181,609.2 1182,612.8 1183,618.8 1184,622.6 1185,621.8 1186,618.6 1187,616.5 1188,618.5 1189,621.6 1190,621.6 1191,621.9 1192,622.4 1193,622.4 1194,622.7 1195,622.5 1196,622.4 1197,622.7 1198,622.3 1199,622.4 1200,619.6 1201,619.1 1202,618.7 1203,618.5 1204,619.6 1205,619.6 1206,618.3 1207,619.1 1208,619.7 1209,618.5 1210,619.4 1211,619.4 1212,618.9 1213,619.2 1214,619.4 1215,619.8 1216,620.0 1217,619.5 1218,618.7 1219,619.2 1220,621.0 1221,622.3 1222,622.6 1223,622.7 1224,620.9 1225,620.0 1226,620.7 1227,622.8 1228,623.0 1229,622.7 1230,623.0 1231,623.0 1232,623.0 1233,623.0 1234,622.7 1235,622.8 1236,622.5 1237,622.2 1238,622.4 1239,622.9 1240,623.0 1241,622.8 1242,622.9 1243,622.6 1244,621.7 1245,621.5 1246,621.7 1247,621.3 1248,620.8 1249,620.6 1250,620.6 1251,620.8 1252,621.3 1253,622.1 1254,622.2 1255,621.5 1256,621.5 1257,621.5 1258,622.0 1259,622.7 1260,622.8 1261,622.8 1262,622.8 1263,622.7 1264,622.9 1265,622.7 1266,622.8 1267,622.9 1268,622.9 1269,622.9 1270,622.8 1271,623.0 1272,622.8 1273,622.6 1274,622.7 1275,622.5 1276,622.4 1277,622.5 1278,622.7 1279,622.7 1280,622.9 1281,623.1 1282,623.0 1283,622.9 1284,622.9 1285,622.1 1286,621.3 1287,620.7 1288,620.3 1289,620.0 1290,620.0 1291,620.3 1292,620.7 1293,621.3 1294,622.1 1295,622.6 1296,622.7 1297,622.9 1298,621.7 1299,617.5 1300,615.2 1301,617.8 1302,621.6 1303,623.0 1304,622.7 1305,622.7 1306,622.2 1307,622.2 1308,622.6 1309,622.8 1310,622.9 1311,623.0 1312,622.9 1313,622.9 1314,623.0 1315,623.0 1316,622.7 1317,622.7 1318,622.9 1319,622.8 1320,622.6 1321,622.3 1322,619.8 1323,618.6 1324,620.2 1325,622.3 1326,622.7 1327,622.7 1328,622.8 1329,622.9 1330,623.0 1331,623.0 1332,622.7 1333,622.7 1334,622.4 1335,619.9 1336,618.8 1337,619.8 1338,622.3 1339,622.9 1340,622.8 1341,622.9 1342,622.2 1343,621.3 1344,620.6 1345,619.6 1346,618.1 1347,617.2 1348,616.4 1349,616.7 1350,616.0 1351,615.9 1352,616.5 1353,617.5 1354,618.3 1355,619.5 1356,620.3 1357,621.3 1358,621.6 1359,621.2 1360,621.1 1361,621.1 1362,621.2 1363,621.6 1364,622.1 1365,622.4 1366,622.3 1367,622.3 1368,622.7 1369,623.0 1370,622.7 1371,622.8 1372,622.6 1373,622.5 1374,622.6 1375,622.7 1376,622.7 1377,622.8 1378,622.5 1379,621.8 1380,621.3 1381,621.8 1382,621.7 1383,621.3 1384,621.2 1385,621.3 1386,621.7 1387,622.3 1388,622.6 1389,622.7 1390,622.5 1391,622.7 1392,622.2 1393,621.5 1394,621.1 1395,620.9 1396,621.1 1397,621.5 1398,622.2 1399,622.7 1400,622.5 1401,622.5 1402,621.6 1403,620.3 1404,619.9 1405,620.3 1406,621.6 1407,622.9 1408,622.6 1409,621.8 1410,621.3 1411,621.9 1412,622.5 1413,622.9 1414,622.8 1415,622.7 1416,622.8 1417,623.0 1418,622.7 1419,623.0 1420,622.8 1421,622.9 1422,622.8 1423,622.6 1424,622.6 1425,622.1 1426,621.9 1427,621.4 1428,620.9 1429,620.9 1430,620.5 1431,620.9 1432,620.9 1433,621.2 1434,621.9 1435,622.3 1436,622.7 1437,623.0 1438,622.9 1439,622.7 1440,622.6 1441,621.0 1442,620.2 1443,621.0 1444,622.8 1445,622.9 1446,622.8 1447,621.7 1448,620.8 1449,620.0 1450,619.5 1451,619.2 1452,619.2 1453,619.5 1454,617.7 1455,616.3 1456,617.7 1457,621.3 1458,622.6 1459,622.8 1460,622.8 1461,622.9 1462,622.6 1463,622.2 1464,621.9 1465,622.0 1466,622.1 1467,622.3 1468,622.7 1469,622.8 1470,622.8 1471,622.9 1472,622.7 1473,622.1 1474,622.1 1475,622.7 1476,622.7 1477,622.3 1478,622.1 1479,621.6 1480,620.7 1481,619.9 1482,619.4 1483,619.1 1484,619.1 1485,619.4 1486,619.9 1487,620.7 1488,621.6 1489,622.7 1490,621.1 1491,617.1 1492,614.7 1493,617.3 1494,620.9 1495,621.4 1496,622.4 1497,623.0 1498,622.9 1499,622.7 1500,622.4 1501,622.0 1502,621.8 1503,622.0 1504,622.3 1505,622.3 1506,622.4 1507,622.7 1508,622.7 1509,622.5 1510,622.3 1511,622.5 1512,622.7 1513,622.9 1514,622.5 1515,621.4 1516,619.9 1517,619.1 1518,619.1 1519,619.9 1520,621.4 1521,622.9 1522,622.7 1523,621.5 1524,620.4 1525,619.7 1526,620.3 1527,621.4 1528,622.8 1529,622.3 1530,621.1 1531,620.0 1532,619.3 1533,618.9 1534,618.9 1535,619.3 1536,620.0 1537,621.1 1538,622.3 1539,622.6 1540,622.6 1541,622.7 1542,622.3 1543,622.3 1544,622.9 1545,622.6 1546,622.7 1547,622.9 1548,622.0 1549,621.2 1550,620.5 1551,620.1 1552,619.9 1553,619.9 1554,619.6 1555,619.1 1556,619.0 1557,618.7 1558,619.5 1559,620.6 1560,621.4 1561,622.3 1562,623.0 1563,623.1 1564,622.9 1565,623.0 1566,622.7 1567,623.0 1568,622.8 1569,622.6 1570,622.6 1571,621.8 1572,621.5 1573,621.6 1574,622.5 1575,622.8 1576,622.7 1577,622.4 1578,622.2 1579,622.0 1580,622.0 1581,622.2 1582,622.4 1583,622.6 1584,622.7 1585,622.8 1586,622.6 1587,623.0 1588,622.6 1589,623.0 1590,622.9 1591,622.7 1592,622.8 1593,623.0 1594,622.7 1595,622.8 1596,622.6 1597,621.5 1598,620.8 1599,621.0 1600,620.0 1601,619.3 1602,619.1 1603,619.3 1604,620.0 1605,621.0 1606,622.3 1607,622.8 1608,623.0 1609,622.7 1610,622.6 1611,622.4 1612,622.1 1613,622.0 1614,622.1 1615,622.1 1616,620.1 1617,618.3 1618,617.7 1619,618.4 1620,620.0 1621,621.9 1622,622.2 1623,621.8 1624,621.6 1625,621.5 1626,621.6 1627,621.8 1628,622.2 1629,622.8 1630,621.9 1631,619.3 1632,617.7 1633,618.9 1634,620.0 1635,620.9 1636,622.8 1637,623.0 1638,622.8 1639,622.8 1640,622.9 1641,622.9 1642,622.8 1643,622.8 1644,622.4 1645,622.3 1646,620.9 1647,619.8 1648,619.1 1649,618.7 1650,618.7 1651,619.1 1652,619.5 1653,618.3 1654,617.9 1655,617.6 1656,618.1 1657,618.8 1658,619.8 1659,619.8 1660,619.0 1661,618.6 1662,618.6 1663,619.0 1664,619.8 1665,620.9 1666,621.9 1667,621.4 1668,621.7 1669,622.4 1670,623.0 1671,623.0 1672,622.6 1673,622.5 1674,622.4 1675,621.0 1676,619.9 1677,621.1 1678,622.7 1679,622.9 1680,623.0 1681,622.7 1682,622.7 1683,622.8 1684,622.9 1685,622.8 1686,622.8 1687,622.9 1688,622.7 1689,623.0 1690,622.7 1691,622.5 1692,621.8 1693,621.4 1694,621.2 1695,621.2 1696,621.4 1697,621.8 1698,622.5 1699,622.7 1700,622.5 1701,622.6 1702,623.0 1703,622.9 1704,622.5 1705,622.3 1706,622.3 1707,622.5 1708,622.8 1709,622.7 1710,622.9 1711,622.4 1712,620.2 1713,618.8 1714,619.9 1715,622.4 1716,623.0 1717,620.3 1718,618.8 1719,618.8 1720,620.3 1721,622.7 1722,622.7 1723,622.9 1724,622.7 1725,622.5 1726,622.7 1727,622.9 1728,622.8 1729,622.1 1730,621.5 1731,620.5 1732,619.8 1733,618.8 1734,618.4 1735,618.1 1736,618.6 1737,618.8 1738,619.5 1739,620.7 1740,621.3 1741,622.2 1742,622.8 1743,622.7 1744,623.0 1745,622.7 1746,622.7 1747,622.7 1748,623.0 1749,622.9 1750,623.0 1751,623.0 1752,622.3 1753,621.8 1754,621.6 1755,621.8 1756,622.3 1757,622.5 1758,621.8 1759,621.6 1760,621.5 1761,621.5 1762,621.8 1763,622.3 1764,622.9 1765,620.8 1766,619.1 1767,618.5 1768,619.1 1769,620.8 1770,622.9 1771,623.0 1772,622.8 1773,621.5 1774,620.4 1775,619.7 1776,620.3 1777,621.5 1778,621.7 1779,620.9 1780,620.3 1781,620.0 1782,620.0 1783,620.3 1784,620.9 1785,621.7 1786,622.6 1787,622.9 1788,622.8 1789,622.7 1790,622.7 1791,622.7 1792,622.8 1793,622.9 1794,622.8 1795,622.8 1796,623.0 1797,622.9 1798,622.6 1799,621.8 1800,621.3 1801,621.7 1802,621.7 1803,622.0 1804,622.8 1805,622.6 1806,622.9 1807,622.8 1808,622.7 1809,622.7 1810,622.9 1811,622.8 1812,622.8 1813,622.9 1814,622.7 1815,622.5 1816,622.7 1817,622.6 1818,623.0 1819,622.6 1820,622.7 1821,622.6 1822,623.0 1823,623.0 1824,622.4 1825,621.5 1826,621.1 1827,621.5 1828,622.4 1829,622.7 1830,622.9 1831,622.1 1832,621.2 1833,620.3 1834,619.0 1835,617.7 1836,616.6 1837,616.3 1838,615.4 1839,615.7 1840,616.4 1841,617.8 1842,618.9 1843,620.3 1844,621.4 1845,622.3 1846,622.4 1847,621.4 1848,621.1 L1848,627.9 1847,627.6 1846,626.6 1845,626.7 1844,627.6 1843,628.7 1842,630.1 1841,631.2 1840,632.6 1839,633.3 1838,633.6 1837,632.7 1836,632.4 1835,631.3 1834,630.0 1833,628.7 1832,627.8 1831,626.9 1830,626.1 1829,626.3 1828,626.6 1827,627.5 1826,627.9 1825,627.5 1824,626.6 1823,626.0 1822,626.0 1821,626.4 1820,626.3 1819,626.4 1818,626.0 1817,626.4 1816,626.3 1815,626.5 1814,626.3 1813,626.1 1812,626.2 1811,626.2 1810,626.1 1809,626.3 1808,626.3 1807,626.2 1806,626.1 1805,626.4 1804,626.2 1803,627.0 1802,627.3 1801,627.3 1800,627.7 1799,627.2 1798,626.4 1797,626.1 1796,626.0 1795,626.2 1794,626.2 1793,626.1 1792,626.2 1791,626.3 1790,626.3 1789,626.3 1788,626.2 1787,626.1 1786,626.4 1785,627.3 1784,628.1 1783,628.7 1782,629.0 1781,629.0 1780,628.7 1779,628.1 1778,627.3 1777,627.5 1776,628.7 1775,629.3 1774,628.6 1773,627.5 1772,626.2 1771,626.0 1770,626.1 1769,628.2 1768,629.9 1767,630.5 1766,629.9 1765,628.2 1764,626.1 1763,626.7 1762,627.2 1761,627.5 1760,627.5 1759,627.4 1758,627.2 1757,626.5 1756,626.7 1755,627.2 1754,627.4 1753,627.2 1752,626.7 1751,626.0 1750,626.0 1749,626.1 1748,626.0 1747,626.3 1746,626.3 1745,626.3 1744,626.0 1743,626.3 1742,626.2 1741,626.8 1740,627.7 1739,628.3 1738,629.5 1737,630.2 1736,630.4 1735,630.9 1734,630.6 1733,630.2 1732,629.2 1731,628.5 1730,627.5 1729,626.9 1728,626.2 1727,626.1 1726,626.3 1725,626.5 1724,626.3 1723,626.1 1722,626.3 1721,626.3 1720,628.7 1719,630.2 1718,630.2 1717,628.7 1716,626.0 1715,626.6 1714,629.1 1713,630.2 1712,628.8 1711,626.6 1710,626.1 1709,626.3 1708,626.2 1707,626.5 1706,626.7 1705,626.7 1704,626.5 1703,626.1 1702,626.0 1701,626.4 1700,626.5 1699,626.3 1698,626.5 1697,627.2 1696,627.6 1695,627.8 1694,627.8 1693,627.6 1692,627.2 1691,626.5 1690,626.3 1689,626.0 1688,626.3 1687,626.1 1686,626.2 1685,626.2 1684,626.1 1683,626.2 1682,626.3 1681,626.3 1680,626.0 1679,626.1 1678,626.3 1677,627.9 1676,629.1 1675,628.0 1674,626.6 1673,626.5 1672,626.4 1671,626.0 1670,626.0 1669,626.6 1668,627.3 1667,627.6 1666,627.1 1665,628.1 1664,629.2 1663,630.0 1662,630.4 1661,630.4 1660,630.0 1659,629.2 1658,629.2 1657,630.2 1656,630.9 1655,631.4 1654,631.1 1653,630.7 1652,629.5 1651,629.9 1650,630.3 1649,630.3 1648,629.9 1647,629.2 1646,628.1 1645,626.7 1644,626.6 1643,626.2 1642,626.2 1641,626.1 1640,626.1 1639,626.2 1638,626.2 1637,626.0 1636,626.2 1635,628.1 1634,629.0 1633,630.1 1632,631.3 1631,629.7 1630,627.1 1629,626.2 1628,626.8 1627,627.2 1626,627.4 1625,627.5 1624,627.4 1623,627.2 1622,626.8 1621,627.1 1620,629.0 1619,630.6 1618,631.3 1617,630.7 1616,628.9 1615,626.9 1614,626.9 1613,627.0 1612,626.9 1611,626.6 1610,626.4 1609,626.3 1608,626.0 1607,626.2 1606,626.7 1605,628.0 1604,629.0 1603,629.7 1602,629.9 1601,629.7 1600,629.0 1599,628.0 1598,628.2 1597,627.5 1596,626.4 1595,626.2 1594,626.3 1593,626.0 1592,626.2 1591,626.3 1590,626.1 1589,626.0 1588,626.4 1587,626.0 1586,626.4 1585,626.2 1584,626.3 1583,626.4 1582,626.6 1581,626.8 1580,627.0 1579,627.0 1578,626.8 1577,626.6 1576,626.3 1575,626.2 1574,626.5 1573,627.4 1572,627.5 1571,627.2 1570,626.4 1569,626.4 1568,626.2 1567,626.0 1566,626.3 1565,626.0 1564,626.1 1563,625.9 1562,626.0 1561,626.7 1560,627.6 1559,628.4 1558,629.5 1557,630.3 1556,630.0 1555,629.9 1554,629.4 1553,629.1 1552,629.1 1551,628.9 1550,628.5 1549,627.8 1548,627.0 1547,626.1 1546,626.3 1545,626.4 1544,626.1 1543,626.7 1542,626.7 1541,626.3 1540,626.4 1539,626.4 1538,626.7 1537,627.9 1536,629.0 1535,629.7 1534,630.1 1533,630.1 1532,629.7 1531,629.0 1530,627.9 1529,626.7 1528,626.2 1527,627.6 1526,628.7 1525,629.3 1524,628.6 1523,627.5 1522,626.3 1521,626.1 1520,627.6 1519,629.1 1518,629.9 1517,629.9 1516,629.1 1515,627.6 1514,626.5 1513,626.1 1512,626.3 1511,626.5 1510,626.7 1509,626.5 1508,626.3 1507,626.3 1506,626.6 1505,626.7 1504,626.7 1503,627.0 1502,627.2 1501,627.0 1500,626.6 1499,626.3 1498,626.1 1497,626.0 1496,626.6 1495,627.6 1494,628.1 1493,631.7 1492,634.3 1491,631.9 1490,627.9 1489,626.3 1488,627.4 1487,628.3 1486,629.1 1485,629.6 1484,629.9 1483,629.9 1482,629.6 1481,629.1 1480,628.3 1479,627.4 1478,626.9 1477,626.7 1476,626.3 1475,626.3 1474,626.9 1473,626.9 1472,626.3 1471,626.1 1470,626.2 1469,626.2 1468,626.3 1467,626.7 1466,626.9 1465,627.0 1464,627.1 1463,626.8 1462,626.4 1461,626.1 1460,626.2 1459,626.2 1458,626.4 1457,627.7 1456,631.3 1455,632.7 1454,631.3 1453,629.5 1452,629.8 1451,629.8 1450,629.5 1449,629.0 1448,628.2 1447,627.3 1446,626.2 1445,626.1 1444,626.2 1443,628.0 1442,628.8 1441,628.0 1440,626.4 1439,626.3 1438,626.1 1437,626.0 1436,626.3 1435,626.7 1434,627.1 1433,627.8 1432,628.1 1431,628.1 1430,628.5 1429,628.1 1428,628.1 1427,627.6 1426,627.1 1425,626.9 1424,626.4 1423,626.4 1422,626.2 1421,626.1 1420,626.2 1419,626.0 1418,626.3 1417,626.0 1416,626.2 1415,626.3 1414,626.2 1413,626.1 1412,626.5 1411,627.1 1410,627.7 1409,627.2 1408,626.4 1407,626.1 1406,627.4 1405,628.7 1404,629.1 1403,628.7 1402,627.4 1401,626.5 1400,626.5 1399,626.3 1398,626.8 1397,627.5 1396,627.9 1395,628.1 1394,627.9 1393,627.5 1392,626.8 1391,626.3 1390,626.5 1389,626.3 1388,626.4 1387,626.7 1386,627.3 1385,627.7 1384,627.8 1383,627.7 1382,627.3 1381,627.2 1380,627.7 1379,627.2 1378,626.5 1377,626.2 1376,626.3 1375,626.3 1374,626.4 1373,626.5 1372,626.4 1371,626.2 1370,626.3 1369,626.0 1368,626.3 1367,626.7 1366,626.7 1365,626.6 1364,626.9 1363,627.4 1362,627.8 1361,627.9 1360,627.9 1359,627.8 1358,627.4 1357,627.7 1356,628.7 1355,629.5 1354,630.7 1353,631.5 1352,632.5 1351,633.1 1350,633.0 1349,632.3 1348,632.6 1347,631.8 1346,630.9 1345,629.4 1344,628.4 1343,627.7 1342,626.8 1341,626.1 1340,626.2 1339,626.1 1338,626.7 1337,629.2 1336,630.2 1335,629.1 1334,626.6 1333,626.3 1332,626.3 1331,626.0 1330,626.0 1329,626.1 1328,626.2 1327,626.3 1326,626.3 1325,626.7 1324,628.8 1323,630.4 1322,629.2 1321,626.7 1320,626.4 1319,626.2 1318,626.1 1317,626.3 1316,626.3 1315,626.0 1314,626.0 1313,626.1 1312,626.1 1311,626.0 1310,626.1 1309,626.2 1308,626.4 1307,626.8 1306,626.8 1305,626.3 1304,626.3 1303,626.0 1302,627.4 1301,631.2 1300,633.8 1299,631.5 1298,627.3 1297,626.1 1296,626.3 1295,626.4 1294,626.9 1293,627.7 1292,628.3 1291,628.7 1290,629.0 1289,629.0 1288,628.7 1287,628.3 1286,627.7 1285,626.9 1284,626.1 1283,626.1 1282,626.0 1281,625.9 1280,626.1 1279,626.3 1278,626.3 1277,626.5 1276,626.6 1275,626.5 1274,626.3 1273,626.4 1272,626.2 1271,626.0 1270,626.2 1269,626.1 1268,626.1 1267,626.1 1266,626.2 1265,626.3 1264,626.1 1263,626.3 1262,626.2 1261,626.2 1260,626.2 1259,626.3 1258,627.0 1257,627.5 1256,627.5 1255,627.5 1254,626.8 1253,626.9 1252,627.7 1251,628.2 1250,628.4 1249,628.4 1248,628.2 1247,627.7 1246,627.3 1245,627.5 1244,627.3 1243,626.4 1242,626.1 1241,626.2 1240,626.0 1239,626.1 1238,626.6 1237,626.8 1236,626.5 1235,626.2 1234,626.3 1233,626.0 1232,626.0 1231,626.0 1230,626.0 1229,626.3 1228,626.0 1227,626.2 1226,628.3 1225,629.0 1224,628.1 1223,626.3 1222,626.4 1221,626.7 1220,628.0 1219,629.8 1218,630.3 1217,629.5 1216,629.0 1215,629.2 1214,629.6 1213,629.8 1212,630.1 1211,629.6 1210,629.6 1209,630.5 1208,629.3 1207,629.9 1206,630.7 1205,629.4 1204,629.4 1203,630.5 1202,630.3 1201,629.9 1200,629.4 1199,626.6 1198,626.7 1197,626.3 1196,626.6 1195,626.5 1194,626.3 1193,626.6 1192,626.6 1191,627.1 1190,627.4 1189,627.4 1188,630.5 1187,632.5 1186,630.4 1185,627.2 1184,626.4 1183,630.2 1182,636.2 1181,639.8 1180,641.9 1179,641.9 1178,639.8 1177,636.2 1176,639.1 1175,643.7 1174,639.3 1173,634.9 1172,636.2 1171,636.9 1170,636.9 1169,636.2 1168,634.9 1167,635.3 1166,639.6 1165,641.5 1164,639.6 1163,639.1 1162,637.5 1161,635.3 1160,634.8 1159,636.1 1158,637.0 1157,637.3 1156,637.7 1155,641.1 1154,637.9 1153,637.3 1152,640.4 1151,637.3 1150,636.2 1149,639.9 1148,642.0 1147,642.0 1146,639.9 1145,641.3 1144,639.3 1143,634.6 1142,634.6 1141,634.3 1140,634.5 1139,634.0 1138,633.2 1137,633.2 1136,632.9 1135,632.4 1134,633.4 1133,635.8 1132,637.2 1131,637.2 1130,637.4 1129,634.8 1128,634.5 1127,638.3 1126,639.7 1125,638.3 1124,634.5 1123,635.6 1122,639.1 1121,637.9 1120,636.8 1119,634.0 1118,632.6 1117,632.9 1116,632.6 1115,632.4 1114,636.0 1113,638.9 1112,636.3 1111,633.4 1110,634.0 1109,633.7 1108,632.4 1107,630.6 1106,628.6 1105,628.4 1104,628.8 1103,628.4 1102,628.9 1101,629.6 1100,628.9 1099,628.9 1098,630.3 1097,631.3 1096,631.7 1095,634.4 1094,635.7 1093,632.9 1092,632.0 1091,634.6 1090,637.5 1089,635.4 1088,633.0 1087,632.1 1086,633.2 1085,635.0 1084,633.3 1083,631.6 1082,631.8 1081,635.3 1080,637.1 1079,635.4 1078,637.9 1077,637.9 1076,634.2 1075,632.9 1074,635.0 1073,636.3 1072,636.3 1071,635.1 1070,635.9 1069,633.9 1068,636.6 1067,640.4 1066,642.4 1065,640.1 1064,636.1 1063,635.2 1062,637.5 1061,638.4 1060,637.5 1059,638.0 1058,641.3 1057,638.9 1056,637.7 1055,637.7 1054,636.7 1053,634.9 1052,634.1 1051,634.3 1050,634.1 1049,637.5 1048,641.2 1047,642.9 1046,641.2 1045,636.7 1044,635.4 1043,637.9 1042,639.7 1041,640.3 1040,642.0 1039,639.8 1038,635.4 1037,634.1 1036,634.3 1035,634.1 1034,634.1 1033,639.3 1032,643.5 1031,638.8 1030,634.3 1029,634.2 1028,634.1 1027,635.5 1026,639.3 1025,641.7 1024,638.9 1023,635.7 1022,635.7 1021,634.7 1020,634.5 1019,634.6 1018,634.4 1017,634.6 1016,634.4 1015,633.9 1014,633.2 1013,636.5 1012,639.5 1011,636.0 1010,634.6 1009,634.4 1008,633.9 1007,633.2 1006,635.5 1005,639.3 1004,639.3 1003,639.2 1002,638.2 1001,635.9 1000,637.0 999,637.0 998,635.8 997,633.9 996,633.0 995,633.3 994,635.0 993,637.7 992,634.6 991,632.9 990,633.6 989,634.7 988,634.7 987,633.5 986,637.3 985,639.5 984,640.3 983,640.3 982,638.3 981,634.7 980,635.0 979,638.2 978,638.2 977,634.9 976,636.2 975,639.1 974,637.6 973,634.7 972,634.6 971,637.4 970,637.4 969,634.6 968,634.1 967,636.6 966,638.1 965,638.8 964,638.2 963,637.0 962,641.2 961,636.4 960,635.4 959,636.1 958,635.4 957,633.6 956,636.5 955,638.9 954,637.0 953,635.0 952,638.7 951,638.7 950,635.1 949,637.3 948,641.2 947,636.8 946,634.0 945,633.7 944,633.0 943,634.4 942,637.5 941,639.6 940,640.4 939,639.7 938,637.6 937,634.5 936,633.6 935,635.0 934,637.1 933,639.7 932,636.3 931,635.1 930,633.7 929,631.9 928,630.8 927,629.8 926,629.8 925,629.8 924,631.4 923,633.9 922,634.8 921,633.8 920,631.3 919,631.5 918,634.0 917,632.2 916,629.9 915,630.8 914,631.9 913,633.8 912,634.6 911,633.3 910,630.0 909,629.3 908,629.4 907,629.9 906,633.0 905,634.9 904,633.4 903,631.1 902,630.6 901,629.8 900,631.2 899,633.6 898,631.2 897,629.2 896,626.4 895,626.4 894,626.7 893,626.6 892,627.8 891,629.4 890,630.9 889,631.3 888,631.7 887,630.4 886,629.2 885,630.6 884,631.7 883,632.8 882,632.7 881,632.0 880,631.3 879,630.2 878,628.6 877,629.1 876,630.3 875,630.6 874,629.8 873,628.9 872,627.7 871,626.6 870,626.4 869,626.4 868,627.7 867,629.8 866,631.8 865,634.8 864,636.9 863,637.6 862,636.8 861,635.6 860,633.5 859,631.3 858,628.8 857,627.2 856,626.4 855,626.7 854,627.7 853,628.7 852,629.5 851,630.1 850,630.5 849,630.1 848,629.5 847,628.7 846,627.6 845,626.6 844,627.4 843,628.1 842,628.9 841,629.7 840,629.6 839,629.4 838,629.1 837,628.6 836,629.0 835,629.0 834,628.6 833,627.7 832,626.6 831,626.5 830,626.2 829,627.1 828,628.3 827,628.9 826,629.1 825,628.9 824,628.2 823,627.7 822,627.2 821,626.6 820,626.5 819,626.3 818,626.8 817,627.3 816,627.2 815,627.5 814,627.3 813,627.2 812,626.8 811,626.5 810,627.2 809,628.3 808,628.8 807,628.3 806,627.2 805,626.8 804,627.2 803,627.5 802,627.4 801,627.3 800,627.2 799,627.0 798,627.0 797,626.9 796,626.5 795,626.6 794,626.3 793,626.6 792,627.1 791,627.8 790,629.2 789,629.7 788,629.2 787,627.7 786,626.6 785,626.3 784,626.6 783,627.6 782,628.2 781,629.1 780,632.1 779,634.1 778,635.1 777,633.5 776,630.4 775,627.7 774,626.7 773,626.6 772,626.4 771,626.2 770,627.7 769,630.0 768,631.3 767,631.8 766,630.2 765,628.4 764,626.5 763,626.5 762,626.2 761,627.1 760,628.5 759,630.2 758,631.1 757,631.5 756,631.1 755,631.9 754,633.9 753,635.8 752,637.5 751,639.0 750,638.6 749,639.3 748,637.1 747,635.4 746,633.1 745,631.5 744,629.7 743,628.0 742,627.4 741,628.1 740,627.4 739,626.3 738,626.4 737,626.6 736,626.7 735,627.4 734,627.9 733,628.3 732,628.5 731,628.5 730,628.3 729,627.9 728,627.4 727,626.7 726,626.6 725,626.4 724,626.3 723,626.6 722,626.6 721,626.5 720,626.3 719,626.6 718,626.6 717,626.2 716,626.3 715,626.3 714,626.5 713,626.2 712,627.7 711,630.0 710,632.8 709,633.6 708,633.5 707,631.0 706,628.6 705,628.7 704,628.7 703,628.5 702,628.1 701,628.7 700,629.2 699,628.8 698,627.5 697,626.3 696,626.6 695,628.3 694,632.1 693,636.3 692,639.0 691,637.5 690,635.7 689,631.2 688,628.0 687,627.8 686,629.6 685,631.2 684,632.8 683,633.1 682,633.0 681,631.5 680,629.7 679,627.9 678,626.3 677,626.4 676,626.7 675,626.6 674,626.3 673,626.8 672,627.0 671,626.8 670,626.3 669,626.2 668,626.4 667,626.4 666,626.6 665,627.2 664,627.4 663,628.4 662,629.6 661,630.1 660,629.5 659,630.3 658,630.7 657,631.8 656,631.6 655,630.9 654,630.1 653,628.7 652,627.6 651,626.7 650,626.7 649,626.6 648,626.2 647,626.2 646,626.6 645,626.4 644,627.2 643,627.8 642,628.0 641,627.8 640,627.2 639,626.5 638,626.9 637,627.2 636,627.3 635,627.2 634,626.9 633,627.1 632,628.5 631,629.3 630,629.0 629,627.9 628,626.7 627,627.4 626,628.0 625,631.9 624,636.4 623,634.7 622,629.5 621,628.0 620,628.1 619,629.7 618,630.5 617,629.1 616,627.1 615,627.1 614,628.3 613,628.7 612,628.3 611,627.1 610,626.6 609,626.4 608,626.6 607,628.0 606,630.3 605,631.5 604,630.8 603,628.5 602,626.3 601,626.3 600,626.4 599,626.4 598,626.4 597,626.4 596,626.3 595,626.3 594,626.6 593,627.1 592,627.3 591,627.4 590,627.1 589,626.5 588,626.2 587,627.0 586,627.4 585,627.4 584,627.0 583,626.3 582,626.1 Z" fill="#3b3b3b"/>
<path d="M582,713 L582,710.5 583,710.5 584,710.1 585,709.6 586,709.6 587,710.1 588,710.3 589,710.6 590,709.9 591,709.6 592,709.4 593,709.7 594,710.4 595,710.5 596,710.7 597,710.3 598,710.7 599,710.2 600,710.7 601,710.1 602,710.0 603,708.1 604,705.7 605,704.2 606,705.6 607,708.6 608,710.6 609,710.5 610,710.6 611,710.6 612,710.1 613,710.5 614,710.5 615,710.4 616,709.8 617,707.3 618,706.0 619,706.6 620,708.6 621,708.9 622,706.6 623,700.1 624,698.8 625,704.0 626,708.1 627,708.9 628,709.9 629,708.9 630,707.8 631,707.1 632,708.4 633,709.2 634,708.0 635,707.1 636,706.5 637,706.4 638,706.5 639,707.1 640,708.0 641,709.0 642,708.7 643,708.9 644,709.5 645,710.5 646,710.3 647,710.1 648,710.3 649,710.1 650,710.7 651,710.4 652,709.1 653,707.6 654,706.4 655,705.3 656,704.2 657,704.3 658,704.8 659,706.2 660,706.9 661,705.7 662,706.9 663,708.2 664,710.3 665,710.2 666,710.7 667,710.5 668,710.3 669,709.4 670,708.7 671,708.2 672,707.9 673,707.9 674,708.2 675,708.7 676,709.4 677,710.3 678,710.7 679,708.9 680,706.6 681,704.9 682,703.1 683,702.3 684,703.0 685,704.3 686,706.6 687,706.6 688,706.9 689,705.0 690,699.8 691,695.7 692,695.7 693,698.9 694,703.5 695,708.5 696,710.3 697,710.3 698,709.4 699,707.7 700,707.6 701,707.9 702,709.5 703,710.3 704,710.5 705,710.1 706,708.0 707,704.9 708,702.6 709,701.1 710,703.0 711,706.6 712,709.5 713,710.1 714,710.5 715,710.2 716,710.7 717,710.5 718,710.4 719,710.5 720,710.6 721,710.6 722,710.1 723,710.1 724,710.5 725,710.2 726,710.3 727,710.5 728,709.7 729,709.0 730,708.8 731,708.8 732,708.7 733,708.9 734,709.2 735,709.8 736,710.4 737,710.7 738,710.2 739,710.2 740,710.1 741,710.0 742,709.3 743,708.9 744,707.0 745,705.0 746,701.9 747,700.3 748,697.7 749,695.1 750,695.6 751,695.5 752,696.5 753,698.7 754,701.5 755,703.4 756,704.7 757,704.2 758,704.6 759,706.1 760,708.1 761,709.7 762,710.5 763,710.2 764,710.5 765,708.6 766,706.1 767,704.4 768,704.9 769,706.6 770,708.9 771,710.7 772,710.2 773,710.7 774,710.1 775,709.0 776,706.1 777,702.1 778,700.3 779,700.5 780,703.4 781,707.3 782,708.2 783,707.9 784,707.9 785,708.2 786,708.7 787,709.4 788,709.6 789,709.1 790,708.8 791,709.0 792,709.7 793,710.1 794,710.2 795,710.8 796,710.4 797,710.1 798,710.7 799,710.3 800,709.8 801,709.5 802,709.6 803,709.6 804,709.9 805,710.3 806,710.7 807,710.3 808,709.4 809,707.8 810,707.2 811,707.8 812,709.4 813,709.7 814,709.4 815,709.3 816,709.7 817,709.7 818,709.8 819,709.5 820,709.4 821,709.5 822,709.8 823,709.8 824,708.5 825,707.8 826,707.5 827,707.9 828,708.5 829,709.8 830,709.9 831,709.3 832,708.9 833,708.6 834,708.6 835,708.9 836,709.3 837,708.6 838,707.3 839,706.9 840,706.3 841,706.9 842,707.3 843,708.3 844,708.8 845,708.0 846,707.4 847,707.1 848,706.7 849,706.1 850,705.6 851,706.4 852,707.2 853,708.2 854,709.4 855,710.4 856,710.5 857,710.0 858,707.9 859,705.2 860,701.8 861,699.7 862,697.1 863,697.0 864,698.7 865,701.3 866,703.6 867,706.5 868,708.9 869,710.5 870,710.7 871,710.3 872,709.0 873,707.5 874,706.0 875,706.2 876,706.6 877,707.4 878,707.9 879,706.3 880,704.7 881,703.9 882,703.0 883,703.6 884,704.2 885,705.7 886,707.1 887,705.2 888,704.7 889,704.4 890,705.3 891,707.1 892,708.8 893,710.1 894,710.4 895,710.1 896,710.7 897,707.0 898,704.8 899,702.1 900,704.0 901,705.9 902,705.6 903,703.4 904,702.3 905,701.0 906,702.8 907,703.7 908,706.0 909,705.3 910,702.9 911,702.4 912,700.2 913,702.3 914,705.3 915,706.6 916,706.7 917,704.3 918,701.6 919,703.8 920,705.2 921,704.2 922,703.3 923,704.1 924,705.1 925,706.5 926,706.9 927,706.4 928,705.7 929,701.7 930,696.3 931,700.2 932,698.1 933,694.2 934,695.1 935,700.4 936,700.1 937,693.6 938,691.2 939,693.7 940,696.0 941,697.8 942,691.5 943,697.9 944,700.8 945,695.9 946,695.9 947,698.1 948,692.8 949,697.6 950,702.5 951,702.9 952,700.4 953,699.5 954,698.0 955,695.2 956,698.0 957,701.4 958,700.0 959,699.5 960,700.0 961,698.7 962,693.0 963,697.4 964,699.1 965,699.1 966,702.4 967,702.3 968,698.4 969,697.0 970,698.4 971,702.1 972,701.7 973,697.9 974,697.9 975,694.7 976,698.6 977,701.5 978,702.9 979,701.3 980,696.2 981,693.2 982,693.2 983,696.1 984,697.5 985,695.3 986,696.6 987,702.4 988,702.4 989,702.9 990,703.7 991,699.6 992,693.0 993,693.0 994,699.6 995,701.4 996,696.4 997,692.9 998,691.6 999,692.8 1000,696.3 1001,701.3 1002,696.6 1003,693.7 1004,692.2 1005,690.9 1006,692.2 1007,695.9 1008,701.2 1009,700.5 1010,694.7 1011,692.5 1012,694.7 1013,699.2 1014,702.9 1015,701.2 1016,701.2 1017,702.9 1018,703.7 1019,702.2 1020,701.0 1021,700.8 1022,701.0 1023,701.5 1024,694.3 1025,691.5 1026,690.6 1027,687.7 1028,690.6 1029,698.2 1030,702.4 1031,695.5 1032,691.6 1033,695.6 1034,700.9 1035,701.5 1036,702.4 1037,699.7 1038,696.6 1039,695.5 1040,692.2 1041,694.2 1042,701.3 1043,701.4 1044,701.8 1045,702.5 1046,699.9 1047,695.0 1048,693.1 1049,695.0 1050,699.9 1051,700.7 1052,697.4 1053,697.5 1054,700.7 1055,700.2 1056,695.3 1057,691.9 1058,690.6 1059,691.9 1060,695.3 1061,700.3 1062,697.6 1063,692.2 1064,697.6 1065,702.8 1066,702.2 1067,703.1 1068,704.2 1069,701.6 1070,698.6 1071,701.9 1072,703.1 1073,699.1 1074,696.8 1075,696.9 1076,699.2 1077,703.2 1078,704.2 1079,699.2 1080,696.8 1081,699.8 1082,704.2 1083,703.3 1084,699.4 1085,696.7 1086,695.8 1087,696.8 1088,699.5 1089,700.9 1090,696.6 1091,700.9 1092,704.0 1093,703.9 1094,704.0 1095,706.6 1096,709.0 1097,708.7 1098,708.1 1099,708.1 1100,708.7 1101,707.6 1102,705.4 1103,705.4 1104,707.6 1105,707.8 1106,705.4 1107,702.0 1108,699.9 1109,700.2 1110,702.9 1111,700.9 1112,695.5 1113,695.1 1114,699.2 1115,701.2 1116,695.4 1117,693.2 1118,695.4 1119,701.2 1120,704.0 1121,699.5 1122,696.2 1123,700.2 1124,704.0 1125,701.6 1126,696.3 1127,694.2 1128,696.3 1129,700.2 1130,697.8 1131,697.0 1132,694.2 1133,694.2 1134,697.1 1135,702.1 1136,702.9 1137,699.3 1138,696.7 1139,693.4 1140,692.2 1141,695.4 1142,700.1 1143,700.8 1144,694.7 1145,692.6 1146,693.8 1147,694.7 1148,697.2 1149,700.8 1150,698.2 1151,690.8 1152,687.9 1153,690.8 1154,696.8 1155,693.3 1156,693.6 1157,698.2 1158,700.9 1159,697.5 1160,695.2 1161,694.4 1162,695.2 1163,697.5 1164,694.9 1165,692.3 1166,691.9 1167,689.3 1168,691.9 1169,698.6 1170,695.8 1171,688.8 1172,695.8 1173,700.1 1174,695.8 1175,691.4 1176,695.4 1177,699.9 1178,695.0 1179,692.2 1180,692.2 1181,695.0 1182,699.9 1183,706.1 1184,709.8 1185,709.6 1186,705.5 1187,703.7 1188,705.7 1189,709.6 1190,710.2 1191,710.4 1192,710.5 1193,710.7 1194,710.7 1195,710.7 1196,710.6 1197,710.4 1198,710.8 1199,710.5 1200,709.1 1201,708.9 1202,704.7 1203,702.8 1204,704.4 1205,706.7 1206,707.0 1207,707.8 1208,709.1 1209,706.3 1210,704.0 1211,706.6 1212,709.1 1213,709.3 1214,709.6 1215,707.3 1216,706.4 1217,703.2 1218,702.0 1219,703.4 1220,705.9 1221,708.9 1222,708.8 1223,707.8 1224,706.2 1225,704.7 1226,706.5 1227,710.0 1228,710.5 1229,710.3 1230,709.9 1231,709.8 1232,709.9 1233,710.3 1234,710.5 1235,710.2 1236,709.2 1237,708.5 1238,709.0 1239,710.4 1240,710.9 1241,710.8 1242,710.6 1243,709.4 1244,707.8 1245,707.0 1246,707.9 1247,709.4 1248,710.6 1249,710.6 1250,710.5 1251,710.5 1252,710.8 1253,709.9 1254,708.7 1255,707.9 1256,707.6 1257,707.5 1258,708.4 1259,709.9 1260,709.8 1261,709.8 1262,710.3 1263,710.9 1264,710.9 1265,710.6 1266,710.8 1267,710.4 1268,710.1 1269,710.5 1270,710.8 1271,710.7 1272,710.7 1273,710.8 1274,710.7 1275,710.7 1276,711.0 1277,710.9 1278,711.0 1279,710.9 1280,710.8 1281,711.0 1282,710.8 1283,710.9 1284,710.7 1285,710.5 1286,710.8 1287,710.5 1288,710.7 1289,711.0 1290,711.0 1291,711.0 1292,710.6 1293,710.5 1294,710.9 1295,711.0 1296,710.8 1297,710.9 1298,707.8 1299,700.3 1300,695.3 1301,700.1 1302,707.6 1303,709.1 1304,709.0 1305,709.1 1306,709.5 1307,709.9 1308,709.3 1309,709.8 1310,710.8 1311,710.9 1312,710.7 1313,709.3 1314,708.3 1315,707.6 1316,707.4 1317,707.6 1318,708.3 1319,709.3 1320,710.5 1321,709.0 1322,704.7 1323,702.0 1324,704.7 1325,709.1 1326,710.5 1327,710.2 1328,710.1 1329,710.1 1330,710.2 1331,710.5 1332,710.9 1333,710.9 1334,709.2 1335,704.8 1336,702.1 1337,704.5 1338,709.0 1339,710.9 1340,710.6 1341,710.0 1342,708.8 1343,707.0 1344,705.4 1345,703.8 1346,701.4 1347,700.2 1348,699.2 1349,697.1 1350,698.1 1351,698.0 1352,698.5 1353,700.5 1354,701.8 1355,703.3 1356,705.2 1357,707.3 1358,708.8 1359,710.0 1360,710.8 1361,710.5 1362,709.9 1363,709.6 1364,709.6 1365,709.0 1366,708.9 1367,708.8 1368,709.6 1369,710.5 1370,710.6 1371,710.6 1372,710.5 1373,710.2 1374,710.2 1375,710.5 1376,711.0 1377,710.7 1378,709.4 1379,708.0 1380,707.2 1381,708.0 1382,709.2 1383,710.9 1384,710.6 1385,710.6 1386,710.6 1387,710.6 1388,710.7 1389,709.9 1390,709.5 1391,709.7 1392,710.7 1393,710.7 1394,711.0 1395,710.8 1396,710.5 1397,710.0 1398,709.6 1399,709.5 1400,709.4 1401,709.6 1402,709.8 1403,709.9 1404,710.4 1405,710.9 1406,710.9 1407,711.0 1408,709.2 1409,707.7 1410,707.1 1411,707.7 1412,709.4 1413,710.1 1414,710.5 1415,710.8 1416,711.1 1417,710.8 1418,710.3 1419,709.8 1420,709.8 1421,710.3 1422,710.5 1423,710.2 1424,709.5 1425,708.9 1426,707.8 1427,706.9 1428,706.3 1429,705.7 1430,705.9 1431,705.7 1432,706.7 1433,707.1 1434,706.9 1435,706.7 1436,706.9 1437,707.7 1438,708.9 1439,710.4 1440,709.9 1441,708.3 1442,707.9 1443,708.6 1444,709.7 1445,711.0 1446,710.7 1447,711.0 1448,711.0 1449,711.0 1450,710.6 1451,710.2 1452,710.0 1453,707.0 1454,700.9 1455,696.8 1456,701.4 1457,707.3 1458,710.8 1459,710.5 1460,710.9 1461,710.5 1462,709.5 1463,708.6 1464,708.1 1465,708.2 1466,708.0 1467,708.8 1468,709.5 1469,710.5 1470,710.7 1471,710.6 1472,710.7 1473,711.0 1474,710.6 1475,710.4 1476,709.6 1477,709.1 1478,708.6 1479,709.1 1480,709.7 1481,710.5 1482,710.6 1483,710.5 1484,710.9 1485,710.8 1486,711.1 1487,710.6 1488,710.4 1489,710.1 1490,706.8 1491,698.5 1492,696.0 1493,699.0 1494,706.1 1495,710.1 1496,710.6 1497,710.6 1498,710.7 1499,710.7 1500,709.6 1501,708.6 1502,707.7 1503,707.2 1504,707.1 1505,707.2 1506,707.7 1507,708.6 1508,709.6 1509,710.6 1510,711.0 1511,710.7 1512,711.0 1513,710.3 1514,709.2 1515,708.7 1516,709.2 1517,710.4 1518,710.5 1519,710.8 1520,711.0 1521,711.0 1522,709.8 1523,707.4 1524,705.4 1525,704.5 1526,705.1 1527,707.4 1528,709.8 1529,710.9 1530,710.6 1531,709.6 1532,709.3 1533,709.8 1534,710.7 1535,710.6 1536,710.8 1537,710.0 1538,708.4 1539,707.4 1540,707.1 1541,707.4 1542,708.4 1543,710.0 1544,710.8 1545,710.9 1546,710.7 1547,710.7 1548,710.6 1549,710.2 1550,709.7 1551,706.5 1552,704.6 1553,705.9 1554,704.3 1555,702.5 1556,702.3 1557,703.2 1558,703.9 1559,705.6 1560,706.2 1561,706.6 1562,707.8 1563,709.6 1564,711.0 1565,710.8 1566,710.6 1567,710.6 1568,709.9 1569,709.3 1570,709.0 1571,707.7 1572,707.2 1573,708.0 1574,709.2 1575,710.6 1576,710.7 1577,710.8 1578,710.5 1579,710.0 1580,709.6 1581,709.4 1582,709.6 1583,709.5 1584,709.9 1585,709.9 1586,710.5 1587,709.9 1588,708.3 1589,707.5 1590,707.5 1591,708.3 1592,709.9 1593,710.8 1594,710.8 1595,710.6 1596,709.7 1597,707.3 1598,706.1 1599,707.5 1600,710.3 1601,710.9 1602,710.5 1603,710.7 1604,710.7 1605,710.9 1606,710.6 1607,710.9 1608,710.2 1609,709.5 1610,709.4 1611,709.5 1612,710.1 1613,710.7 1614,710.8 1615,708.5 1616,704.6 1617,701.6 1618,700.3 1619,702.0 1620,705.1 1621,708.5 1622,709.9 1623,710.1 1624,710.3 1625,709.3 1626,708.9 1627,709.3 1628,710.2 1629,710.8 1630,708.1 1631,702.8 1632,699.7 1633,702.5 1634,708.1 1635,710.7 1636,710.6 1637,710.8 1638,711.0 1639,710.9 1640,709.4 1641,707.9 1642,707.3 1643,707.9 1644,708.8 1645,708.9 1646,708.3 1647,706.5 1648,706.0 1649,706.3 1650,708.3 1651,706.5 1652,704.1 1653,701.6 1654,700.2 1655,700.5 1656,700.1 1657,701.8 1658,704.0 1659,706.0 1660,708.3 1661,709.8 1662,711.0 1663,710.8 1664,710.7 1665,709.4 1666,707.8 1667,707.2 1668,708.0 1669,709.2 1670,710.6 1671,711.0 1672,710.9 1673,711.1 1674,709.8 1675,706.6 1676,704.8 1677,706.4 1678,707.8 1679,707.5 1680,707.5 1681,707.8 1682,708.3 1683,709.1 1684,710.1 1685,710.8 1686,710.5 1687,710.8 1688,710.5 1689,710.9 1690,710.7 1691,710.4 1692,710.4 1693,710.7 1694,710.9 1695,711.0 1696,710.5 1697,710.5 1698,710.3 1699,709.7 1700,709.3 1701,709.5 1702,710.1 1703,710.6 1704,710.9 1705,711.0 1706,710.9 1707,710.7 1708,710.8 1709,710.6 1710,710.7 1711,709.0 1712,704.5 1713,702.8 1714,705.0 1715,706.4 1716,706.6 1717,707.2 1718,708.1 1719,709.2 1720,710.7 1721,711.0 1722,710.9 1723,710.2 1724,709.7 1725,709.5 1726,709.5 1727,710.1 1728,710.2 1729,708.7 1730,707.3 1731,705.3 1732,704.0 1733,702.5 1734,701.4 1735,702.1 1736,701.7 1737,702.5 1738,704.1 1739,705.9 1740,707.2 1741,708.7 1742,710.1 1743,710.4 1744,708.8 1745,707.5 1746,706.6 1747,706.2 1748,706.2 1749,706.6 1750,707.5 1751,708.8 1752,710.4 1753,710.7 1754,710.6 1755,710.9 1756,710.1 1757,708.9 1758,708.1 1759,707.4 1760,707.2 1761,707.3 1762,708.1 1763,708.8 1764,709.9 1765,710.9 1766,710.7 1767,710.9 1768,709.9 1769,708.7 1770,708.7 1771,709.9 1772,709.7 1773,707.6 1774,705.6 1775,704.4 1776,705.6 1777,707.3 1778,710.0 1779,710.4 1780,710.9 1781,710.5 1782,710.9 1783,710.7 1784,710.1 1785,708.8 1786,708.3 1787,708.8 1788,710.1 1789,709.6 1790,709.3 1791,709.8 1792,710.1 1793,710.5 1794,710.8 1795,710.8 1796,710.8 1797,710.6 1798,709.4 1799,707.7 1800,707.4 1801,707.8 1802,709.4 1803,710.9 1804,710.8 1805,710.3 1806,710.1 1807,710.3 1808,710.7 1809,710.8 1810,710.8 1811,710.7 1812,709.4 1813,707.9 1814,707.3 1815,707.9 1816,709.4 1817,710.7 1818,711.0 1819,710.7 1820,709.9 1821,709.0 1822,708.2 1823,707.8 1824,707.6 1825,707.8 1826,708.2 1827,709.0 1828,709.9 1829,710.5 1830,710.1 1831,708.9 1832,707.1 1833,704.4 1834,702.1 1835,700.6 1836,698.9 1837,696.2 1838,697.1 1839,697.2 1840,698.5 1841,699.6 1842,702.3 1843,704.7 1844,707.2 1845,708.7 1846,710.1 1847,710.5 1848,711.0 L1848,715.0 1847,715.5 1846,715.9 1845,717.3 1844,718.8 1843,721.3 1842,723.7 1841,726.4 1840,727.5 1839,728.8 1838,728.9 1837,729.8 1836,727.1 1835,725.4 1834,723.9 1833,721.6 1832,718.9 1831,717.1 1830,715.9 1829,715.5 1828,716.1 1827,717.0 1826,717.8 1825,718.2 1824,718.4 1823,718.2 1822,717.8 1821,717.0 1820,716.1 1819,715.3 1818,715.0 1817,715.3 1816,716.6 1815,718.1 1814,718.7 1813,718.1 1812,716.6 1811,715.3 1810,715.2 1809,715.2 1808,715.3 1807,715.7 1806,715.9 1805,715.7 1804,715.2 1803,715.1 1802,716.6 1801,718.2 1800,718.6 1799,718.3 1798,716.6 1797,715.4 1796,715.2 1795,715.2 1794,715.2 1793,715.5 1792,715.9 1791,716.2 1790,716.7 1789,716.4 1788,715.9 1787,717.2 1786,717.7 1785,717.2 1784,715.9 1783,715.3 1782,715.1 1781,715.5 1780,715.1 1779,715.6 1778,716.0 1777,718.7 1776,720.4 1775,721.6 1774,720.4 1773,718.4 1772,716.3 1771,716.1 1770,717.3 1769,717.3 1768,716.1 1767,715.1 1766,715.3 1765,715.1 1764,716.1 1763,717.2 1762,717.9 1761,718.7 1760,718.8 1759,718.6 1758,717.9 1757,717.1 1756,715.9 1755,715.1 1754,715.4 1753,715.3 1752,715.6 1751,717.2 1750,718.5 1749,719.4 1748,719.8 1747,719.8 1746,719.4 1745,718.5 1744,717.2 1743,715.6 1742,715.9 1741,717.3 1740,718.8 1739,720.1 1738,721.9 1737,723.5 1736,724.3 1735,723.9 1734,724.6 1733,723.5 1732,722.0 1731,720.7 1730,718.7 1729,717.3 1728,715.8 1727,715.9 1726,716.5 1725,716.5 1724,716.3 1723,715.8 1722,715.1 1721,715.0 1720,715.3 1719,716.8 1718,717.9 1717,718.8 1716,719.4 1715,719.6 1714,721.0 1713,723.2 1712,721.5 1711,717.0 1710,715.3 1709,715.4 1708,715.2 1707,715.3 1706,715.1 1705,715.0 1704,715.1 1703,715.4 1702,715.9 1701,716.5 1700,716.7 1699,716.3 1698,715.7 1697,715.5 1696,715.5 1695,715.0 1694,715.1 1693,715.3 1692,715.6 1691,715.6 1690,715.3 1689,715.1 1688,715.5 1687,715.2 1686,715.5 1685,715.2 1684,715.9 1683,716.9 1682,717.7 1681,718.2 1680,718.5 1679,718.5 1678,718.2 1677,719.6 1676,721.2 1675,719.4 1674,716.2 1673,714.9 1672,715.1 1671,715.0 1670,715.4 1669,716.8 1668,718.0 1667,718.8 1666,718.2 1665,716.6 1664,715.3 1663,715.2 1662,715.0 1661,716.2 1660,717.7 1659,720.0 1658,722.0 1657,724.2 1656,725.9 1655,725.5 1654,725.8 1653,724.4 1652,721.9 1651,719.5 1650,717.7 1649,719.7 1648,720.0 1647,719.5 1646,717.7 1645,717.1 1644,717.2 1643,718.1 1642,718.7 1641,718.1 1640,716.6 1639,715.1 1638,715.0 1637,715.2 1636,715.4 1635,715.3 1634,717.9 1633,723.5 1632,726.3 1631,723.2 1630,717.9 1629,715.2 1628,715.8 1627,716.7 1626,717.1 1625,716.7 1624,715.7 1623,715.9 1622,716.1 1621,717.5 1620,720.9 1619,724.0 1618,725.7 1617,724.4 1616,721.4 1615,717.5 1614,715.2 1613,715.3 1612,715.9 1611,716.5 1610,716.6 1609,716.5 1608,715.8 1607,715.1 1606,715.4 1605,715.1 1604,715.3 1603,715.3 1602,715.5 1601,715.1 1600,715.7 1599,718.5 1598,719.9 1597,718.7 1596,716.3 1595,715.4 1594,715.2 1593,715.2 1592,716.1 1591,717.7 1590,718.5 1589,718.5 1588,717.7 1587,716.1 1586,715.5 1585,716.1 1584,716.1 1583,716.5 1582,716.4 1581,716.6 1580,716.4 1579,716.0 1578,715.5 1577,715.2 1576,715.3 1575,715.4 1574,716.8 1573,718.0 1572,718.8 1571,718.3 1570,717.0 1569,716.7 1568,716.1 1567,715.4 1566,715.4 1565,715.2 1564,715.0 1563,716.4 1562,718.2 1561,719.4 1560,719.8 1559,720.4 1558,722.1 1557,722.8 1556,723.7 1555,723.5 1554,721.7 1553,720.1 1552,721.4 1551,719.5 1550,716.3 1549,715.8 1548,715.4 1547,715.3 1546,715.3 1545,715.1 1544,715.2 1543,716.0 1542,717.6 1541,718.6 1540,718.9 1539,718.6 1538,717.6 1537,716.0 1536,715.2 1535,715.4 1534,715.3 1533,716.2 1532,716.7 1531,716.4 1530,715.4 1529,715.1 1528,716.2 1527,718.6 1526,720.9 1525,721.5 1524,720.6 1523,718.6 1522,716.2 1521,715.0 1520,715.0 1519,715.2 1518,715.5 1517,715.6 1516,716.8 1515,717.3 1514,716.8 1513,715.7 1512,715.0 1511,715.3 1510,715.0 1509,715.4 1508,716.4 1507,717.4 1506,718.3 1505,718.8 1504,718.9 1503,718.8 1502,718.3 1501,717.4 1500,716.4 1499,715.3 1498,715.3 1497,715.4 1496,715.4 1495,715.9 1494,719.9 1493,727.0 1492,730.0 1491,727.5 1490,719.2 1489,715.9 1488,715.6 1487,715.4 1486,714.9 1485,715.2 1484,715.1 1483,715.5 1482,715.4 1481,715.5 1480,716.3 1479,716.9 1478,717.4 1477,716.9 1476,716.4 1475,715.6 1474,715.4 1473,715.0 1472,715.3 1471,715.4 1470,715.3 1469,715.5 1468,716.5 1467,717.2 1466,718.0 1465,717.8 1464,717.9 1463,717.4 1462,716.5 1461,715.5 1460,715.1 1459,715.5 1458,715.2 1457,718.7 1456,724.6 1455,729.2 1454,725.1 1453,719.0 1452,716.0 1451,715.8 1450,715.4 1449,715.0 1448,715.0 1447,715.0 1446,715.3 1445,715.0 1444,716.3 1443,717.4 1442,718.1 1441,717.7 1440,716.1 1439,715.6 1438,717.1 1437,718.3 1436,719.1 1435,719.3 1434,719.1 1433,718.9 1432,719.3 1431,720.3 1430,720.1 1429,720.3 1428,719.7 1427,719.1 1426,718.2 1425,717.1 1424,716.5 1423,715.8 1422,715.5 1421,715.7 1420,716.2 1419,716.2 1418,715.7 1417,715.2 1416,714.9 1415,715.2 1414,715.5 1413,715.9 1412,716.6 1411,718.3 1410,718.9 1409,718.3 1408,716.8 1407,715.0 1406,715.1 1405,715.1 1404,715.6 1403,716.1 1402,716.2 1401,716.4 1400,716.6 1399,716.5 1398,716.4 1397,716.0 1396,715.5 1395,715.2 1394,715.0 1393,715.3 1392,715.3 1391,716.3 1390,716.5 1389,716.1 1388,715.3 1387,715.4 1386,715.4 1385,715.4 1384,715.4 1383,715.1 1382,716.8 1381,718.0 1380,718.8 1379,718.0 1378,716.6 1377,715.3 1376,715.0 1375,715.5 1374,715.8 1373,715.8 1372,715.5 1371,715.4 1370,715.4 1369,715.5 1368,716.4 1367,717.2 1366,717.1 1365,717.0 1364,716.4 1363,716.4 1362,716.1 1361,715.5 1360,715.2 1359,716.0 1358,717.2 1357,718.7 1356,720.8 1355,722.7 1354,724.2 1353,725.5 1352,727.5 1351,728.0 1350,727.9 1349,728.9 1348,726.8 1347,725.8 1346,724.6 1345,722.2 1344,720.6 1343,719.0 1342,717.2 1341,716.0 1340,715.4 1339,715.1 1338,717.0 1337,721.5 1336,723.9 1335,721.2 1334,716.8 1333,715.1 1332,715.1 1331,715.5 1330,715.8 1329,715.9 1328,715.9 1327,715.8 1326,715.5 1325,716.9 1324,721.3 1323,724.0 1322,721.3 1321,717.0 1320,715.5 1319,716.7 1318,717.7 1317,718.4 1316,718.6 1315,718.4 1314,717.7 1313,716.7 1312,715.3 1311,715.1 1310,715.2 1309,716.2 1308,716.7 1307,716.1 1306,716.5 1305,716.9 1304,717.0 1303,716.9 1302,718.4 1301,725.9 1300,730.7 1299,725.7 1298,718.2 1297,715.1 1296,715.2 1295,715.0 1294,715.1 1293,715.5 1292,715.4 1291,715.0 1290,715.0 1289,715.0 1288,715.3 1287,715.5 1286,715.2 1285,715.5 1284,715.3 1283,715.1 1282,715.2 1281,715.0 1280,715.2 1279,715.1 1278,715.0 1277,715.1 1276,715.0 1275,715.3 1274,715.3 1273,715.2 1272,715.3 1271,715.3 1270,715.2 1269,715.5 1268,715.9 1267,715.6 1266,715.2 1265,715.4 1264,715.1 1263,715.1 1262,715.7 1261,716.2 1260,716.2 1259,716.1 1258,717.6 1257,718.5 1256,718.4 1255,718.1 1254,717.3 1253,716.1 1252,715.2 1251,715.5 1250,715.5 1249,715.4 1248,715.4 1247,716.6 1246,718.1 1245,719.0 1244,718.2 1243,716.6 1242,715.4 1241,715.2 1240,715.1 1239,715.6 1238,717.0 1237,717.5 1236,716.8 1235,715.8 1234,715.5 1233,715.7 1232,716.1 1231,716.2 1230,716.1 1229,715.7 1228,715.5 1227,716.0 1226,719.5 1225,721.3 1224,719.8 1223,718.2 1222,717.2 1221,717.1 1220,720.1 1219,722.6 1218,724.0 1217,722.8 1216,719.6 1215,718.7 1214,716.4 1213,716.7 1212,716.9 1211,719.4 1210,722.0 1209,719.7 1208,716.9 1207,718.2 1206,719.0 1205,719.3 1204,721.6 1203,723.2 1202,721.3 1201,717.1 1200,716.9 1199,715.5 1198,715.2 1197,715.6 1196,715.4 1195,715.3 1194,715.3 1193,715.3 1192,715.5 1191,715.6 1190,715.8 1189,716.4 1188,720.3 1187,722.3 1186,720.5 1185,716.4 1184,716.2 1183,719.9 1182,726.1 1181,731.0 1180,733.8 1179,733.8 1178,731.0 1177,726.1 1176,730.6 1175,734.6 1174,730.2 1173,725.9 1172,730.2 1171,737.2 1170,730.2 1169,727.4 1168,734.1 1167,736.7 1166,734.1 1165,733.7 1164,731.1 1163,728.5 1162,730.8 1161,731.6 1160,730.8 1159,728.5 1158,725.1 1157,727.8 1156,732.4 1155,732.7 1154,729.2 1153,735.2 1152,738.1 1151,735.2 1150,727.8 1149,725.2 1148,728.8 1147,731.3 1146,732.2 1145,733.4 1144,731.3 1143,725.2 1142,725.9 1141,730.6 1140,733.8 1139,732.6 1138,729.3 1137,726.7 1136,723.1 1135,723.9 1134,728.9 1133,731.8 1132,731.8 1131,729.0 1130,728.2 1129,725.8 1128,729.7 1127,731.8 1126,729.7 1125,724.4 1124,722.0 1123,725.8 1122,729.8 1121,726.5 1120,722.0 1119,724.8 1118,730.6 1117,732.8 1116,730.6 1115,724.8 1114,726.8 1113,730.9 1112,730.5 1111,725.1 1110,723.1 1109,725.8 1108,726.1 1107,724.0 1106,720.6 1105,718.2 1104,718.4 1103,720.6 1102,720.6 1101,718.4 1100,717.3 1099,717.9 1098,717.9 1097,717.3 1096,717.0 1095,719.4 1094,722.0 1093,722.1 1092,722.0 1091,725.1 1090,729.4 1089,725.1 1088,726.5 1087,729.2 1086,730.2 1085,729.3 1084,726.6 1083,722.7 1082,721.8 1081,726.2 1080,729.2 1079,726.8 1078,721.8 1077,722.8 1076,726.8 1075,729.1 1074,729.2 1073,726.9 1072,722.9 1071,724.1 1070,727.4 1069,724.4 1068,721.8 1067,722.9 1066,723.8 1065,723.2 1064,728.4 1063,733.8 1062,728.4 1061,725.7 1060,730.7 1059,734.1 1058,735.4 1057,734.1 1056,730.7 1055,725.8 1054,725.3 1053,728.5 1052,728.6 1051,725.3 1050,726.1 1049,731.0 1048,732.9 1047,731.0 1046,726.1 1045,723.5 1044,724.2 1043,724.6 1042,724.7 1041,731.8 1040,733.8 1039,730.5 1038,729.4 1037,726.3 1036,723.6 1035,724.5 1034,725.1 1033,730.4 1032,734.4 1031,730.5 1030,723.6 1029,727.8 1028,735.4 1027,738.3 1026,735.4 1025,734.5 1024,731.7 1023,724.5 1022,725.0 1021,725.2 1020,725.0 1019,723.8 1018,722.3 1017,723.1 1016,724.8 1015,724.8 1014,723.1 1013,726.8 1012,731.3 1011,733.5 1010,731.3 1009,725.5 1008,724.8 1007,730.1 1006,733.8 1005,735.1 1004,733.8 1003,732.3 1002,729.4 1001,724.7 1000,729.7 999,733.2 998,734.4 997,733.1 996,729.6 995,724.6 994,726.4 993,733.0 992,733.0 991,726.4 990,722.3 989,723.1 988,723.6 987,723.6 986,729.4 985,730.7 984,728.5 983,729.9 982,732.8 981,732.8 980,729.8 979,724.7 978,723.1 977,724.5 976,727.4 975,731.3 974,728.1 973,728.1 972,724.3 971,723.9 970,727.6 969,729.0 968,727.6 967,723.7 966,723.6 965,726.9 964,726.9 963,728.6 962,733.0 961,727.3 960,726.0 959,726.5 958,726.0 957,724.6 956,728.0 955,730.8 954,728.0 953,726.5 952,725.6 951,723.1 950,723.5 949,728.4 948,733.2 947,727.9 946,730.1 945,730.1 944,725.2 943,728.1 942,734.5 941,728.2 940,730.0 939,732.3 938,734.8 937,732.4 936,725.9 935,725.6 934,730.9 933,731.8 932,727.9 931,725.8 930,729.7 929,724.3 928,720.3 927,719.6 926,719.1 925,719.5 924,720.9 923,721.9 922,722.7 921,721.8 920,720.8 919,722.2 918,724.4 917,721.7 916,719.3 915,719.4 914,720.7 913,723.7 912,725.8 911,723.6 910,723.1 909,720.7 908,720.0 907,722.3 906,723.2 905,725.0 904,723.7 903,722.6 902,720.4 901,720.1 900,722.0 899,723.9 898,721.2 897,719.0 896,715.3 895,715.9 894,715.6 893,715.9 892,717.2 891,718.9 890,720.7 889,721.6 888,721.3 887,720.8 886,718.9 885,720.3 884,721.8 883,722.4 882,723.0 881,722.1 880,721.3 879,719.7 878,718.1 877,718.6 876,719.4 875,719.8 874,720.0 873,718.5 872,717.0 871,715.7 870,715.3 869,715.5 868,717.1 867,719.5 866,722.4 865,724.7 864,727.3 863,729.0 862,728.9 861,726.3 860,724.2 859,720.8 858,718.1 857,716.0 856,715.5 855,715.6 854,716.6 853,717.8 852,718.8 851,719.6 850,720.4 849,719.9 848,719.3 847,718.9 846,718.6 845,718.0 844,717.2 843,717.7 842,718.7 841,719.1 840,719.7 839,719.1 838,718.7 837,717.4 836,716.7 835,717.1 834,717.4 833,717.4 832,717.1 831,716.7 830,716.1 829,716.2 828,717.5 827,718.1 826,718.5 825,718.2 824,717.5 823,716.2 822,716.2 821,716.5 820,716.6 819,716.5 818,716.2 817,716.3 816,716.3 815,716.7 814,716.6 813,716.3 812,716.6 811,718.2 810,718.8 809,718.2 808,716.6 807,715.7 806,715.3 805,715.7 804,716.1 803,716.4 802,716.4 801,716.5 800,716.2 799,715.7 798,715.3 797,715.9 796,715.6 795,715.2 794,715.8 793,715.9 792,716.3 791,717.0 790,717.2 789,716.9 788,716.4 787,716.6 786,717.3 785,717.8 784,718.1 783,718.1 782,717.8 781,718.7 780,722.6 779,725.5 778,725.7 777,723.9 776,719.9 775,717.0 774,715.9 773,715.3 772,715.8 771,715.3 770,717.1 769,719.4 768,721.1 767,721.6 766,719.9 765,717.4 764,715.5 763,715.8 762,715.5 761,716.3 760,717.9 759,719.9 758,721.4 757,721.8 756,721.3 755,722.6 754,724.5 753,727.3 752,729.5 751,730.5 750,730.4 749,730.9 748,728.3 747,725.7 746,724.1 745,721.0 744,719.0 743,717.1 742,716.7 741,716.0 740,715.9 739,715.8 738,715.8 737,715.3 736,715.6 735,716.2 734,716.8 733,717.1 732,717.3 731,717.2 730,717.2 729,717.0 728,716.3 727,715.5 726,715.7 725,715.8 724,715.5 723,715.9 722,715.9 721,715.4 720,715.4 719,715.5 718,715.6 717,715.5 716,715.3 715,715.8 714,715.5 713,715.9 712,716.5 711,719.4 710,723.0 709,724.9 708,723.4 707,721.1 706,718.0 705,715.9 704,715.5 703,715.7 702,716.5 701,718.1 700,718.4 699,718.3 698,716.6 697,715.7 696,715.7 695,717.5 694,722.5 693,727.1 692,730.3 691,730.3 690,726.2 689,721.0 688,719.1 687,719.4 686,719.4 685,721.7 684,723.0 683,723.7 682,722.9 681,721.1 680,719.4 679,717.1 678,715.3 677,715.7 676,716.6 675,717.3 674,717.8 673,718.1 672,718.1 671,717.8 670,717.3 669,716.6 668,715.7 667,715.5 666,715.3 665,715.8 664,715.7 663,717.8 662,719.1 661,720.3 660,719.1 659,719.8 658,721.2 657,721.7 656,721.8 655,720.7 654,719.6 653,718.4 652,716.9 651,715.6 650,715.3 649,715.9 648,715.7 647,715.9 646,715.7 645,715.5 644,716.5 643,717.1 642,717.3 641,717.0 640,718.0 639,718.9 638,719.5 637,719.6 636,719.5 635,718.9 634,718.0 633,716.8 632,717.6 631,718.9 630,718.2 629,717.1 628,716.1 627,717.1 626,717.9 625,722.0 624,727.2 623,725.9 622,719.4 621,717.1 620,717.4 619,719.4 618,720.0 617,718.7 616,716.2 615,715.6 614,715.5 613,715.5 612,715.9 611,715.4 610,715.4 609,715.5 608,715.4 607,717.4 606,720.4 605,721.8 604,720.3 603,717.9 602,716.0 601,715.9 600,715.3 599,715.8 598,715.3 597,715.7 596,715.3 595,715.5 594,715.6 593,716.3 592,716.6 591,716.4 590,716.1 589,715.4 588,715.7 587,715.9 586,716.4 585,716.4 584,715.9 583,715.5 582,715.5 Z" fill="#8d9d8a"/>
<rect x="1106.5" y="585" width="5" height="79.5" fill="#c8c8c8"/>
<line x1="1106.5" y1="586" x2="1106.5" y2="663.5" stroke="#4e4e4e" stroke-width="1.4"/><line x1="1111.5" y1="586" x2="1111.5" y2="663.5" stroke="#4e4e4e" stroke-width="1.4"/>
<line x1="609.6" y1="586" x2="609.6" y2="663.5" stroke="#3a3a3a" stroke-width="1.6"/>
<line x1="622.9" y1="586" x2="622.9" y2="663.5" stroke="#3a3a3a" stroke-width="1.6"/>
<line x1="638.5" y1="586" x2="638.5" y2="663.5" stroke="#3a3a3a" stroke-width="1.6"/>
<line x1="687.7" y1="586" x2="687.7" y2="663.5" stroke="#3a3a3a" stroke-width="1.6"/>
<line x1="720.5" y1="586" x2="720.5" y2="663.5" stroke="#3a3a3a" stroke-width="1.6"/>
<line x1="737" y1="586" x2="737" y2="663.5" stroke="#3a3a3a" stroke-width="1.6"/>
<line x1="761" y1="586" x2="761" y2="663.5" stroke="#3a3a3a" stroke-width="1.6"/>
<line x1="772" y1="586" x2="772" y2="663.5" stroke="#3a3a3a" stroke-width="1.6"/>
<line x1="784.6" y1="586" x2="784.6" y2="663.5" stroke="#3a3a3a" stroke-width="1.6"/>
<line x1="819" y1="586" x2="819" y2="663.5" stroke="#3a3a3a" stroke-width="1.6"/>
<line x1="831.5" y1="586" x2="831.5" y2="663.5" stroke="#3a3a3a" stroke-width="1.6"/>
<line x1="870.5" y1="586" x2="870.5" y2="663.5" stroke="#3a3a3a" stroke-width="1.6"/>
<line x1="897.6" y1="586" x2="897.6" y2="663.5" stroke="#3a3a3a" stroke-width="1.6"/>
<line x1="929.6" y1="586" x2="929.6" y2="663.5" stroke="#3a3a3a" stroke-width="1.6"/>
<line x1="966.3" y1="586" x2="966.3" y2="663.5" stroke="#3a3a3a" stroke-width="1.6"/>
<line x1="1018.7" y1="586" x2="1018.7" y2="663.5" stroke="#3a3a3a" stroke-width="1.6"/>
<line x1="1066.3" y1="586" x2="1066.3" y2="663.5" stroke="#3a3a3a" stroke-width="1.6"/>
<line x1="1095.2" y1="586" x2="1095.2" y2="663.5" stroke="#3a3a3a" stroke-width="1.6"/>
<line x1="1106.2" y1="586" x2="1106.2" y2="663.5" stroke="#3a3a3a" stroke-width="1.6"/>
<line x1="1111.6" y1="586" x2="1111.6" y2="663.5" stroke="#3a3a3a" stroke-width="1.6"/>
<line x1="1127.25" y1="586" x2="1127.25" y2="663.5" stroke="#3a3a3a" stroke-width="1.6"/>
<line x1="1138.2" y1="586" x2="1138.2" y2="663.5" stroke="#3a3a3a" stroke-width="1.6"/>
<line x1="1182.7" y1="586" x2="1182.7" y2="663.5" stroke="#3a3a3a" stroke-width="1.6"/>
<line x1="1200.7" y1="586" x2="1200.7" y2="663.5" stroke="#3a3a3a" stroke-width="1.6"/>
<line x1="1238.7" y1="586" x2="1238.7" y2="663.5" stroke="#3a3a3a" stroke-width="1.6"/>
<line x1="1252" y1="586" x2="1252" y2="663.5" stroke="#3a3a3a" stroke-width="1.6"/>
<line x1="1261.3" y1="586" x2="1261.3" y2="663.5" stroke="#3a3a3a" stroke-width="1.6"/>
<line x1="1295.7" y1="586" x2="1295.7" y2="663.5" stroke="#3a3a3a" stroke-width="1.6"/>
<line x1="1308.2" y1="586" x2="1308.2" y2="663.5" stroke="#3a3a3a" stroke-width="1.6"/>
<line x1="1321.5" y1="586" x2="1321.5" y2="663.5" stroke="#3a3a3a" stroke-width="1.6"/>
<line x1="1334" y1="586" x2="1334" y2="663.5" stroke="#3a3a3a" stroke-width="1.6"/>
<line x1="1345" y1="586" x2="1345" y2="663.5" stroke="#3a3a3a" stroke-width="1.6"/>
<line x1="1357.4" y1="586" x2="1357.4" y2="663.5" stroke="#3a3a3a" stroke-width="1.6"/>
<line x1="1373.8" y1="586" x2="1373.8" y2="663.5" stroke="#3a3a3a" stroke-width="1.6"/>
<line x1="1399.6" y1="586" x2="1399.6" y2="663.5" stroke="#3a3a3a" stroke-width="1.6"/>
<line x1="1414.4" y1="586" x2="1414.4" y2="663.5" stroke="#3a3a3a" stroke-width="1.6"/>
<line x1="1428.5" y1="586" x2="1428.5" y2="663.5" stroke="#3a3a3a" stroke-width="1.6"/>
<line x1="1451.2" y1="586" x2="1451.2" y2="663.5" stroke="#3a3a3a" stroke-width="1.6"/>
<line x1="1464.4" y1="586" x2="1464.4" y2="663.5" stroke="#3a3a3a" stroke-width="1.6"/>
<line x1="1481.6" y1="586" x2="1481.6" y2="663.5" stroke="#3a3a3a" stroke-width="1.6"/>
<line x1="1505" y1="586" x2="1505" y2="663.5" stroke="#3a3a3a" stroke-width="1.6"/>
<line x1="1524.6" y1="586" x2="1524.6" y2="663.5" stroke="#3a3a3a" stroke-width="1.6"/>
<line x1="1538.3" y1="586" x2="1538.3" y2="663.5" stroke="#3a3a3a" stroke-width="1.6"/>
<line x1="1549.3" y1="586" x2="1549.3" y2="663.5" stroke="#3a3a3a" stroke-width="1.6"/>
<line x1="1559.4" y1="586" x2="1559.4" y2="663.5" stroke="#3a3a3a" stroke-width="1.6"/>
<line x1="1572.7" y1="586" x2="1572.7" y2="663.5" stroke="#3a3a3a" stroke-width="1.6"/>
<line x1="1595.4" y1="586" x2="1595.4" y2="663.5" stroke="#3a3a3a" stroke-width="1.6"/>
<line x1="1615.7" y1="586" x2="1615.7" y2="663.5" stroke="#3a3a3a" stroke-width="1.6"/>
<line x1="1632" y1="586" x2="1632" y2="663.5" stroke="#3a3a3a" stroke-width="1.6"/>
<line x1="1648.5" y1="586" x2="1648.5" y2="663.5" stroke="#3a3a3a" stroke-width="1.6"/>
<line x1="1661.8" y1="586" x2="1661.8" y2="663.5" stroke="#3a3a3a" stroke-width="1.6"/>
<line x1="1675" y1="586" x2="1675" y2="663.5" stroke="#3a3a3a" stroke-width="1.6"/>
<line x1="1713.3" y1="586" x2="1713.3" y2="663.5" stroke="#3a3a3a" stroke-width="1.6"/>
<line x1="1761.8" y1="586" x2="1761.8" y2="663.5" stroke="#3a3a3a" stroke-width="1.6"/>
<line x1="1802.4" y1="586" x2="1802.4" y2="663.5" stroke="#3a3a3a" stroke-width="1.6"/>
<path d="M639.5,655.5 L639.5,663.5 L649.5,663.5 Z" fill="#eef0f0"/>
<path d="M688.7,655.5 L688.7,663.5 L698.7,663.5 Z" fill="#eef0f0"/>
<path d="M738,655.5 L738,663.5 L748,663.5 Z" fill="#eef0f0"/>
<path d="M785.6,655.5 L785.6,663.5 L795.6,663.5 Z" fill="#eef0f0"/>
<path d="M832.5,655.5 L832.5,663.5 L842.5,663.5 Z" fill="#eef0f0"/>
<path d="M871.5,655.5 L871.5,663.5 L881.5,663.5 Z" fill="#eef0f0"/>
<path d="M898.6,655.5 L898.6,663.5 L908.6,663.5 Z" fill="#eef0f0"/>
<path d="M930.6,655.5 L930.6,663.5 L940.6,663.5 Z" fill="#eef0f0"/>
<path d="M967.3,655.5 L967.3,663.5 L977.3,663.5 Z" fill="#eef0f0"/>
<path d="M1019.7,655.5 L1019.7,663.5 L1029.7,663.5 Z" fill="#eef0f0"/>
<path d="M1067.3,655.5 L1067.3,663.5 L1077.3,663.5 Z" fill="#eef0f0"/>
<path d="M1139.2,655.5 L1139.2,663.5 L1149.2,663.5 Z" fill="#eef0f0"/>
<path d="M1201.7,655.5 L1201.7,663.5 L1211.7,663.5 Z" fill="#eef0f0"/>
<path d="M1358.4,655.5 L1358.4,663.5 L1368.4,663.5 Z" fill="#eef0f0"/>
<path d="M1452.2,655.5 L1452.2,663.5 L1462.2,663.5 Z" fill="#eef0f0"/>
<path d="M1596.4,655.5 L1596.4,663.5 L1606.4,663.5 Z" fill="#eef0f0"/>
<path d="M1676,655.5 L1676,663.5 L1686,663.5 Z" fill="#eef0f0"/>
<path d="M1762.8,655.5 L1762.8,663.5 L1772.8,663.5 Z" fill="#eef0f0"/>
<path d="M1803.4,655.5 L1803.4,663.5 L1813.4,663.5 Z" fill="#eef0f0"/>
<line x1="580" y1="677.3" x2="2021" y2="677.3" stroke="#3a8a3a" stroke-width="1.8"/>
<path d="M1099.5,296 V316 H1183 V296" fill="none" stroke="#3a8a3a" stroke-width="1.6"/>
<rect x="1100.5" y="297" width="82" height="18.5" fill="#c8cac7" opacity="0.85"/>
<circle cx="1099.5" cy="296" r="4.5" fill="none" stroke="#3a8a3a" stroke-width="1.8"/>
<circle cx="1099.5" cy="316" r="4.5" fill="none" stroke="#3a8a3a" stroke-width="1.8"/>
<circle cx="1099.5" cy="327" r="4.5" fill="none" stroke="#3a8a3a" stroke-width="1.8"/>
<circle cx="1183" cy="296" r="4.5" fill="none" stroke="#3a8a3a" stroke-width="1.8"/>
<circle cx="1183" cy="316" r="4.5" fill="none" stroke="#3a8a3a" stroke-width="1.8"/>
<path d="M1677,294 V359 M1716,296 L1710,330 M1765,294 L1760,352 M1838,295 V344" stroke="#3a8a3a" stroke-width="1.6" fill="none"/>
<circle cx="1677" cy="294" r="4.2" fill="none" stroke="#3a8a3a" stroke-width="1.8"/>
<circle cx="1680" cy="326" r="4.2" fill="none" stroke="#3a8a3a" stroke-width="1.8"/>
<circle cx="1678" cy="359" r="4.2" fill="none" stroke="#3a8a3a" stroke-width="1.8"/>
<circle cx="1686" cy="312" r="4.2" fill="none" stroke="#3a8a3a" stroke-width="1.8"/>
<circle cx="1692" cy="338" r="4.2" fill="none" stroke="#3a8a3a" stroke-width="1.8"/>
<circle cx="1700" cy="337" r="4.2" fill="none" stroke="#3a8a3a" stroke-width="1.8"/>
<circle cx="1704" cy="352" r="4.2" fill="none" stroke="#3a8a3a" stroke-width="1.8"/>
<circle cx="1710" cy="312" r="4.2" fill="none" stroke="#3a8a3a" stroke-width="1.8"/>
<circle cx="1714" cy="294" r="4.2" fill="none" stroke="#3a8a3a" stroke-width="1.8"/>
<circle cx="1716" cy="296" r="4.2" fill="none" stroke="#3a8a3a" stroke-width="1.8"/>
<circle cx="1720" cy="331" r="4.2" fill="none" stroke="#3a8a3a" stroke-width="1.8"/>
<circle cx="1720" cy="355" r="4.2" fill="none" stroke="#3a8a3a" stroke-width="1.8"/>
<circle cx="1728" cy="294" r="4.2" fill="none" stroke="#3a8a3a" stroke-width="1.8"/>
<circle cx="1729" cy="346" r="4.2" fill="none" stroke="#3a8a3a" stroke-width="1.8"/>
<circle cx="1738" cy="294" r="4.2" fill="none" stroke="#3a8a3a" stroke-width="1.8"/>
<circle cx="1738" cy="318" r="4.2" fill="none" stroke="#3a8a3a" stroke-width="1.8"/>
<circle cx="1746" cy="324" r="4.2" fill="none" stroke="#3a8a3a" stroke-width="1.8"/>
<circle cx="1750" cy="348" r="4.2" fill="none" stroke="#3a8a3a" stroke-width="1.8"/>
<circle cx="1760" cy="352" r="4.2" fill="none" stroke="#3a8a3a" stroke-width="1.8"/>
<circle cx="1765" cy="294" r="4.2" fill="none" stroke="#3a8a3a" stroke-width="1.8"/>
<circle cx="1832" cy="294" r="4.2" fill="none" stroke="#3a8a3a" stroke-width="1.8"/>
<circle cx="1838" cy="295" r="4.2" fill="none" stroke="#3a8a3a" stroke-width="1.8"/>
<circle cx="1838" cy="321" r="4.2" fill="none" stroke="#3a8a3a" stroke-width="1.8"/>
<circle cx="1838" cy="344" r="4.2" fill="none" stroke="#3a8a3a" stroke-width="1.8"/>
<circle cx="1183" cy="677.5" r="4.5" fill="none" stroke="#3a8a3a" stroke-width="1.8"/>
<circle cx="1201" cy="677.5" r="4.5" fill="none" stroke="#3a8a3a" stroke-width="1.8"/>
<circle cx="1223" cy="677.5" r="4.5" fill="none" stroke="#3a8a3a" stroke-width="1.8"/>
<circle cx="1238" cy="677.5" r="4.5" fill="none" stroke="#3a8a3a" stroke-width="1.8"/>
<circle cx="1251" cy="677.5" r="4.5" fill="none" stroke="#3a8a3a" stroke-width="1.8"/>
<circle cx="1260" cy="677.5" r="4.5" fill="none" stroke="#3a8a3a" stroke-width="1.8"/>
<circle cx="1280" cy="677.5" r="4.5" fill="none" stroke="#3a8a3a" stroke-width="1.8"/>
<circle cx="1295" cy="677.5" r="4.5" fill="none" stroke="#3a8a3a" stroke-width="1.8"/>
<circle cx="1307.5" cy="677.5" r="4.5" fill="none" stroke="#3a8a3a" stroke-width="1.8"/>
<circle cx="1319" cy="677.5" r="4.5" fill="none" stroke="#3a8a3a" stroke-width="1.8"/>
<circle cx="1335" cy="677.5" r="4.5" fill="none" stroke="#3a8a3a" stroke-width="1.8"/>
<circle cx="1344" cy="677.5" r="4.5" fill="none" stroke="#3a8a3a" stroke-width="1.8"/>
<circle cx="1359" cy="677.5" r="4.5" fill="none" stroke="#3a8a3a" stroke-width="1.8"/>
<circle cx="1399" cy="677.5" r="4.5" fill="none" stroke="#3a8a3a" stroke-width="1.8"/>
<circle cx="1413" cy="677.5" r="4.5" fill="none" stroke="#3a8a3a" stroke-width="1.8"/>
<circle cx="1428" cy="677.5" r="4.5" fill="none" stroke="#3a8a3a" stroke-width="1.8"/>
<circle cx="1452" cy="677.5" r="4.5" fill="none" stroke="#3a8a3a" stroke-width="1.8"/>
<circle cx="1468" cy="677.5" r="4.5" fill="none" stroke="#3a8a3a" stroke-width="1.8"/>
<circle cx="1481.5" cy="677.5" r="4.5" fill="none" stroke="#3a8a3a" stroke-width="1.8"/>
<circle cx="1503.5" cy="677.5" r="4.5" fill="none" stroke="#3a8a3a" stroke-width="1.8"/>
<circle cx="1534" cy="677.5" r="4.5" fill="none" stroke="#3a8a3a" stroke-width="1.8"/>
<circle cx="1547" cy="677.5" r="4.5" fill="none" stroke="#3a8a3a" stroke-width="1.8"/>
<circle cx="1572" cy="677.5" r="4.5" fill="none" stroke="#3a8a3a" stroke-width="1.8"/>
<circle cx="1595" cy="677.5" r="4.5" fill="none" stroke="#3a8a3a" stroke-width="1.8"/>
<circle cx="1614.5" cy="677.5" r="4.5" fill="none" stroke="#3a8a3a" stroke-width="1.8"/>
<circle cx="1630" cy="677.5" r="4.5" fill="none" stroke="#3a8a3a" stroke-width="1.8"/>
<circle cx="1648" cy="677.5" r="4.5" fill="none" stroke="#3a8a3a" stroke-width="1.8"/>
<circle cx="1663" cy="677.5" r="4.5" fill="none" stroke="#3a8a3a" stroke-width="1.8"/>
<circle cx="1675.6" cy="677.5" r="4.5" fill="none" stroke="#3a8a3a" stroke-width="1.8"/>
<circle cx="1712" cy="677.5" r="4.5" fill="none" stroke="#3a8a3a" stroke-width="1.8"/>
<circle cx="1761" cy="677.5" r="4.5" fill="none" stroke="#3a8a3a" stroke-width="1.8"/>
<circle cx="1802" cy="677.5" r="4.5" fill="none" stroke="#3a8a3a" stroke-width="1.8"/>
<circle cx="1849" cy="677.5" r="4.5" fill="none" stroke="#3a8a3a" stroke-width="1.8"/>
<path d="M1319,677.5 V708.5 H1335 L1345,680 M1428,677.5 V708.5 H1452 L1460,685" stroke="#3a8a3a" stroke-width="1.6" fill="none"/>
<circle cx="1319" cy="708.5" r="4.5" fill="none" stroke="#3a8a3a" stroke-width="1.8"/>
<circle cx="1335" cy="708.5" r="4.5" fill="none" stroke="#3a8a3a" stroke-width="1.8"/>
<circle cx="1428" cy="708.5" r="4.5" fill="none" stroke="#3a8a3a" stroke-width="1.8"/>
<circle cx="1452" cy="708.5" r="4.5" fill="none" stroke="#3a8a3a" stroke-width="1.8"/>
<rect x="592.5" y="88" width="2" height="651" fill="#a50f0f"/>
<rect x="598.1" y="88" width="2" height="651" fill="#a50f0f"/>
<rect x="602.8" y="88" width="2" height="651" fill="#a50f0f"/>
<rect x="614.2" y="88" width="2.6" height="651" fill="#a50f0f"/>
<rect x="626.6" y="88" width="2" height="651" fill="#a50f0f"/>
<rect x="632.0" y="88" width="2.6" height="651" fill="#a50f0f"/>
<rect x="644.2" y="88" width="2" height="651" fill="#a50f0f"/>
<rect x="652.0" y="88" width="2" height="651" fill="#a50f0f"/>
<rect x="658.9" y="88" width="2" height="651" fill="#a50f0f"/>
<rect x="663.8" y="88" width="2" height="651" fill="#a50f0f"/>
<rect x="669.8" y="88" width="2" height="651" fill="#a50f0f"/>
<rect x="677.8" y="88" width="2" height="651" fill="#a50f0f"/>
<rect x="690.9" y="88" width="2" height="651" fill="#a50f0f"/>
<rect x="699.2" y="88" width="2" height="651" fill="#a50f0f"/>
<rect x="705.2" y="88" width="2" height="651" fill="#a50f0f"/>
<rect x="710.2" y="88" width="2" height="651" fill="#a50f0f"/>
<rect x="724.7" y="88" width="2" height="651" fill="#a50f0f"/>
<rect x="742.7" y="88" width="2" height="651" fill="#a50f0f"/>
<rect x="746.3" y="88" width="2.6" height="651" fill="#a50f0f"/>
<rect x="755.5" y="88" width="2" height="651" fill="#a50f0f"/>
<rect x="764.8" y="88" width="2" height="651" fill="#a50f0f"/>
<rect x="768.3" y="88" width="2" height="651" fill="#a50f0f"/>
<rect x="774.7" y="88" width="2" height="651" fill="#a50f0f"/>
<rect x="788.8" y="88" width="2" height="651" fill="#a50f0f"/>
<rect x="793.4" y="88" width="2" height="651" fill="#a50f0f"/>
<rect x="798.8" y="88" width="2" height="651" fill="#a50f0f"/>
<rect x="803.4" y="88" width="2" height="651" fill="#a50f0f"/>
<rect x="806.2" y="88" width="2" height="651" fill="#a50f0f"/>
<rect x="810.2" y="88" width="2" height="651" fill="#a50f0f"/>
<rect x="824.2" y="88" width="2" height="651" fill="#a50f0f"/>
<rect x="835.2" y="88" width="2" height="651" fill="#a50f0f"/>
<rect x="840.2" y="88" width="2" height="651" fill="#a50f0f"/>
<rect x="851.6" y="88" width="2" height="651" fill="#a50f0f"/>
<rect x="858.1" y="88" width="2" height="651" fill="#a50f0f"/>
<rect x="872.7" y="88" width="2" height="651" fill="#a50f0f"/>
<rect x="920.8" y="88" width="2" height="651" fill="#a50f0f"/>
<rect x="958.0" y="88" width="2" height="651" fill="#a50f0f"/>
<rect x="1009.0" y="88" width="2" height="651" fill="#a50f0f"/>
<rect x="1056.0" y="88" width="2" height="651" fill="#a50f0f"/>
<rect x="1066.9" y="88" width="2" height="651" fill="#a50f0f"/>
<rect x="1099.4" y="88" width="2" height="651" fill="#a50f0f"/>
<rect x="1121.6" y="88" width="2" height="651" fill="#a50f0f"/>
<rect x="1131.2" y="88" width="2" height="651" fill="#a50f0f"/>
<rect x="1148.9" y="88" width="2" height="651" fill="#a50f0f"/>
<rect x="1183.0" y="88" width="2" height="651" fill="#a50f0f"/>
<rect x="1202.5" y="88" width="2" height="651" fill="#a50f0f"/>
<rect x="1209.8" y="88" width="2" height="651" fill="#a50f0f"/>
<rect x="1216.6" y="88" width="2" height="651" fill="#a50f0f"/>
<rect x="1222.5" y="88" width="2" height="651" fill="#a50f0f"/>
<rect x="1227.2" y="88" width="2" height="651" fill="#a50f0f"/>
<rect x="1232.5" y="88" width="2" height="651" fill="#a50f0f"/>
<rect x="1242.3" y="88" width="2" height="651" fill="#a50f0f"/>
<rect x="1245.0" y="88" width="2" height="651" fill="#a50f0f"/>
<rect x="1253.3" y="88" width="2" height="651" fill="#a50f0f"/>
<rect x="1263.1" y="88" width="2" height="651" fill="#a50f0f"/>
<rect x="1274.7" y="88" width="2" height="651" fill="#a50f0f"/>
<rect x="1279.0" y="88" width="2" height="651" fill="#a50f0f"/>
<rect x="1287.2" y="88" width="2" height="651" fill="#a50f0f"/>
<rect x="1298.6" y="88" width="2" height="651" fill="#a50f0f"/>
<rect x="1301.7" y="88" width="2" height="651" fill="#a50f0f"/>
<rect x="1311.1" y="88" width="2" height="651" fill="#a50f0f"/>
<rect x="1325.4" y="88" width="5.4" height="651" fill="#a50f0f"/>
<rect x="1338.4" y="88" width="2" height="651" fill="#a50f0f"/>
<rect x="1346.7" y="88" width="2" height="651" fill="#a50f0f"/>
<rect x="1353.3" y="88" width="2" height="651" fill="#a50f0f"/>
<rect x="1363.4" y="88" width="2" height="651" fill="#a50f0f"/>
<rect x="1365.8" y="88" width="2" height="651" fill="#a50f0f"/>
<rect x="1368.9" y="88" width="2" height="651" fill="#a50f0f"/>
<rect x="1378.3" y="88" width="2" height="651" fill="#a50f0f"/>
<rect x="1384.5" y="88" width="2" height="651" fill="#a50f0f"/>
<rect x="1387.7" y="88" width="2" height="651" fill="#a50f0f"/>
<rect x="1390.8" y="88" width="2" height="651" fill="#a50f0f"/>
<rect x="1401.7" y="88" width="2" height="651" fill="#a50f0f"/>
<rect x="1406.4" y="88" width="2" height="651" fill="#a50f0f"/>
<rect x="1418.1" y="88" width="2" height="651" fill="#a50f0f"/>
<rect x="1421.2" y="88" width="2" height="651" fill="#a50f0f"/>
<rect x="1432.2" y="88" width="2" height="651" fill="#a50f0f"/>
<rect x="1436.1" y="88" width="2" height="651" fill="#a50f0f"/>
<rect x="1438.8" y="88" width="2" height="651" fill="#a50f0f"/>
<rect x="1441.6" y="88" width="2" height="651" fill="#a50f0f"/>
<rect x="1446.2" y="88" width="2" height="651" fill="#a50f0f"/>
<rect x="1458.3" y="88" width="6" height="651" fill="#a50f0f"/>
<rect x="1471.2" y="88" width="2" height="651" fill="#a50f0f"/>
<rect x="1475.1" y="88" width="2" height="651" fill="#a50f0f"/>
<rect x="1483.8" y="88" width="2" height="651" fill="#a50f0f"/>
<rect x="1486.1" y="88" width="2" height="651" fill="#a50f0f"/>
<rect x="1490.0" y="88" width="2" height="651" fill="#a50f0f"/>
<rect x="1493.9" y="88" width="2" height="651" fill="#a50f0f"/>
<rect x="1497.8" y="88" width="2" height="651" fill="#a50f0f"/>
<rect x="1504.0" y="88" width="2" height="651" fill="#a50f0f"/>
<rect x="1512.6" y="88" width="2" height="651" fill="#a50f0f"/>
<rect x="1520.5" y="88" width="2" height="651" fill="#a50f0f"/>
<rect x="1528.3" y="88" width="2" height="651" fill="#a50f0f"/>
<rect x="1537.8" y="88" width="2" height="651" fill="#a50f0f"/>
<rect x="1551.1" y="88" width="2" height="651" fill="#a50f0f"/>
<rect x="1563.1" y="88" width="2" height="651" fill="#a50f0f"/>
<rect x="1565.0" y="88" width="2" height="651" fill="#a50f0f"/>
<rect x="1568.6" y="88" width="2" height="651" fill="#a50f0f"/>
<rect x="1576.9" y="88" width="2" height="651" fill="#a50f0f"/>
<rect x="1580.6" y="88" width="2" height="651" fill="#a50f0f"/>
<rect x="1583.4" y="88" width="2" height="651" fill="#a50f0f"/>
<rect x="1587.3" y="88" width="2" height="651" fill="#a50f0f"/>
<rect x="1599.1" y="88" width="2" height="651" fill="#a50f0f"/>
<rect x="1606.1" y="88" width="2" height="651" fill="#a50f0f"/>
<rect x="1618.9" y="88" width="3" height="651" fill="#a50f0f"/>
<rect x="1624.8" y="88" width="2" height="651" fill="#a50f0f"/>
<rect x="1634.2" y="88" width="2" height="651" fill="#a50f0f"/>
<rect x="1638.1" y="88" width="2" height="651" fill="#a50f0f"/>
<rect x="1642.8" y="88" width="2" height="651" fill="#a50f0f"/>
<rect x="1650.6" y="88" width="2" height="651" fill="#a50f0f"/>
<rect x="1654.5" y="88" width="2" height="651" fill="#a50f0f"/>
<rect x="1657.4" y="88" width="2.6" height="651" fill="#a50f0f"/>
<rect x="1663.1" y="88" width="2" height="651" fill="#a50f0f"/>
<rect x="1670.2" y="88" width="2" height="651" fill="#a50f0f"/>
<rect x="1678.0" y="88" width="2" height="651" fill="#a50f0f"/>
<rect x="1682.7" y="88" width="2" height="651" fill="#a50f0f"/>
<rect x="1685.8" y="88" width="2" height="651" fill="#a50f0f"/>
<rect x="1688.9" y="88" width="2" height="651" fill="#a50f0f"/>
<rect x="1700.6" y="88" width="2" height="651" fill="#a50f0f"/>
<rect x="1704.5" y="88" width="2" height="651" fill="#a50f0f"/>
<rect x="1717.0" y="88" width="2" height="651" fill="#a50f0f"/>
<rect x="1724.8" y="88" width="2" height="651" fill="#a50f0f"/>
<rect x="1730.3" y="88" width="2" height="651" fill="#a50f0f"/>
<rect x="1734.2" y="88" width="2" height="651" fill="#a50f0f"/>
<rect x="1736.6" y="88" width="2" height="651" fill="#a50f0f"/>
<rect x="1738.9" y="88" width="2" height="651" fill="#a50f0f"/>
<rect x="1743.6" y="88" width="2" height="651" fill="#a50f0f"/>
<rect x="1750.6" y="88" width="2" height="651" fill="#a50f0f"/>
<rect x="1753.0" y="88" width="2" height="651" fill="#a50f0f"/>
<rect x="1765.2" y="88" width="4" height="651" fill="#a50f0f"/>
<rect x="1770.9" y="88" width="2" height="651" fill="#a50f0f"/>
<rect x="1774.1" y="88" width="2" height="651" fill="#a50f0f"/>
<rect x="1778.0" y="88" width="2" height="651" fill="#a50f0f"/>
<rect x="1785.0" y="88" width="2" height="651" fill="#a50f0f"/>
<rect x="1788.9" y="88" width="2" height="651" fill="#a50f0f"/>
<rect x="1792.8" y="88" width="2" height="651" fill="#a50f0f"/>
<rect x="1795.9" y="88" width="2" height="651" fill="#a50f0f"/>
<rect x="1805.3" y="88" width="2" height="651" fill="#a50f0f"/>
<rect x="1811.6" y="88" width="2" height="651" fill="#a50f0f"/>
<rect x="1816.2" y="88" width="2" height="651" fill="#a50f0f"/>
<rect x="1822.5" y="88" width="2" height="651" fill="#a50f0f"/>
<rect x="1827.2" y="88" width="2" height="651" fill="#a50f0f"/>
<rect x="1830.3" y="88" width="2" height="651" fill="#a50f0f"/>
<rect x="1839.7" y="88" width="2" height="651" fill="#a50f0f"/>
</svg>
<svg class="a" style="left:0;top:0" width="2048" height="130" viewBox="0 0 2048 130">
<rect x="593.0" y="87.8" width="31" height="17.2" rx="4.5" fill="#a50000" stroke="#c2caca" stroke-width="1.3"/>
<text x="608.5" y="101" font-family="Liberation Sans" font-size="14.5" font-weight="bold" letter-spacing="0.8" fill="#d6dada" text-anchor="middle">57</text>
<rect x="598.6" y="87.8" width="31" height="17.2" rx="4.5" fill="#a50000" stroke="#c2caca" stroke-width="1.3"/>
<text x="614.1" y="101" font-family="Liberation Sans" font-size="14.5" font-weight="bold" letter-spacing="0.8" fill="#d6dada" text-anchor="middle">58</text>
<rect x="603.3" y="87.8" width="31" height="17.2" rx="4.5" fill="#a50000" stroke="#c2caca" stroke-width="1.3"/>
<text x="618.8" y="101" font-family="Liberation Sans" font-size="14.5" font-weight="bold" letter-spacing="0.8" fill="#d6dada" text-anchor="middle">59</text>
<rect x="615.0" y="87.8" width="31" height="17.2" rx="4.5" fill="#a50000" stroke="#c2caca" stroke-width="1.3"/>
<text x="630.5" y="101" font-family="Liberation Sans" font-size="14.5" font-weight="bold" letter-spacing="0.8" fill="#d6dada" text-anchor="middle">60</text>
<rect x="627.1" y="87.8" width="31" height="17.2" rx="4.5" fill="#a50000" stroke="#c2caca" stroke-width="1.3"/>
<text x="642.6" y="101" font-family="Liberation Sans" font-size="14.5" font-weight="bold" letter-spacing="0.8" fill="#d6dada" text-anchor="middle">61</text>
<rect x="632.8" y="87.8" width="31" height="17.2" rx="4.5" fill="#a50000" stroke="#c2caca" stroke-width="1.3"/>
<text x="648.3" y="101" font-family="Liberation Sans" font-size="14.5" font-weight="bold" letter-spacing="0.8" fill="#d6dada" text-anchor="middle">62</text>
<rect x="644.7" y="87.8" width="31" height="17.2" rx="4.5" fill="#a50000" stroke="#c2caca" stroke-width="1.3"/>
<text x="660.2" y="101" font-family="Liberation Sans" font-size="14.5" font-weight="bold" letter-spacing="0.8" fill="#d6dada" text-anchor="middle">63</text>
<rect x="652.5" y="87.8" width="31" height="17.2" rx="4.5" fill="#a50000" stroke="#c2caca" stroke-width="1.3"/>
<text x="668.0" y="101" font-family="Liberation Sans" font-size="14.5" font-weight="bold" letter-spacing="0.8" fill="#d6dada" text-anchor="middle">64</text>
<rect x="659.4" y="87.8" width="31" height="17.2" rx="4.5" fill="#a50000" stroke="#c2caca" stroke-width="1.3"/>
<text x="674.9" y="101" font-family="Liberation Sans" font-size="14.5" font-weight="bold" letter-spacing="0.8" fill="#d6dada" text-anchor="middle">65</text>
<rect x="664.25" y="87.8" width="31" height="17.2" rx="4.5" fill="#a50000" stroke="#c2caca" stroke-width="1.3"/>
<text x="679.75" y="101" font-family="Liberation Sans" font-size="14.5" font-weight="bold" letter-spacing="0.8" fill="#d6dada" text-anchor="middle">66</text>
<rect x="670.3" y="87.8" width="31" height="17.2" rx="4.5" fill="#a50000" stroke="#c2caca" stroke-width="1.3"/>
<text x="685.8" y="101" font-family="Liberation Sans" font-size="14.5" font-weight="bold" letter-spacing="0.8" fill="#d6dada" text-anchor="middle">67</text>
<rect x="678.3" y="87.8" width="31" height="17.2" rx="4.5" fill="#a50000" stroke="#c2caca" stroke-width="1.3"/>
<text x="693.8" y="101" font-family="Liberation Sans" font-size="14.5" font-weight="bold" letter-spacing="0.8" fill="#d6dada" text-anchor="middle">68</text>
<rect x="691.4" y="87.8" width="31" height="17.2" rx="4.5" fill="#a50000" stroke="#c2caca" stroke-width="1.3"/>
<text x="706.9" y="101" font-family="Liberation Sans" font-size="14.5" font-weight="bold" letter-spacing="0.8" fill="#d6dada" text-anchor="middle">69</text>
<rect x="699.7" y="87.8" width="31" height="17.2" rx="4.5" fill="#a50000" stroke="#c2caca" stroke-width="1.3"/>
<text x="715.2" y="101" font-family="Liberation Sans" font-size="14.5" font-weight="bold" letter-spacing="0.8" fill="#d6dada" text-anchor="middle">70</text>
<rect x="705.7" y="87.8" width="31" height="17.2" rx="4.5" fill="#a50000" stroke="#c2caca" stroke-width="1.3"/>
<text x="721.2" y="101" font-family="Liberation Sans" font-size="14.5" font-weight="bold" letter-spacing="0.8" fill="#d6dada" text-anchor="middle">71</text>
<rect x="710.7" y="87.8" width="31" height="17.2" rx="4.5" fill="#a50000" stroke="#c2caca" stroke-width="1.3"/>
<text x="726.2" y="101" font-family="Liberation Sans" font-size="14.5" font-weight="bold" letter-spacing="0.8" fill="#d6dada" text-anchor="middle">72</text>
<rect x="725.2" y="87.8" width="31" height="17.2" rx="4.5" fill="#a50000" stroke="#c2caca" stroke-width="1.3"/>
<text x="740.7" y="101" font-family="Liberation Sans" font-size="14.5" font-weight="bold" letter-spacing="0.8" fill="#d6dada" text-anchor="middle">73</text>
<rect x="743.2" y="87.8" width="31" height="17.2" rx="4.5" fill="#a50000" stroke="#c2caca" stroke-width="1.3"/>
<text x="758.7" y="101" font-family="Liberation Sans" font-size="14.5" font-weight="bold" letter-spacing="0.8" fill="#d6dada" text-anchor="middle">74</text>
<rect x="747.1" y="87.8" width="31" height="17.2" rx="4.5" fill="#a50000" stroke="#c2caca" stroke-width="1.3"/>
<text x="762.6" y="101" font-family="Liberation Sans" font-size="14.5" font-weight="bold" letter-spacing="0.8" fill="#d6dada" text-anchor="middle">75</text>
<rect x="756.0" y="87.8" width="31" height="17.2" rx="4.5" fill="#a50000" stroke="#c2caca" stroke-width="1.3"/>
<text x="771.5" y="101" font-family="Liberation Sans" font-size="14.5" font-weight="bold" letter-spacing="0.8" fill="#d6dada" text-anchor="middle">76</text>
<rect x="765.3" y="87.8" width="31" height="17.2" rx="4.5" fill="#a50000" stroke="#c2caca" stroke-width="1.3"/>
<text x="780.8" y="101" font-family="Liberation Sans" font-size="14.5" font-weight="bold" letter-spacing="0.8" fill="#d6dada" text-anchor="middle">77</text>
<rect x="768.8" y="87.8" width="31" height="17.2" rx="4.5" fill="#a50000" stroke="#c2caca" stroke-width="1.3"/>
<text x="784.3" y="101" font-family="Liberation Sans" font-size="14.5" font-weight="bold" letter-spacing="0.8" fill="#d6dada" text-anchor="middle">78</text>
<rect x="775.2" y="87.8" width="31" height="17.2" rx="4.5" fill="#a50000" stroke="#c2caca" stroke-width="1.3"/>
<text x="790.7" y="101" font-family="Liberation Sans" font-size="14.5" font-weight="bold" letter-spacing="0.8" fill="#d6dada" text-anchor="middle">79</text>
<rect x="789.25" y="87.8" width="31" height="17.2" rx="4.5" fill="#a50000" stroke="#c2caca" stroke-width="1.3"/>
<text x="804.75" y="101" font-family="Liberation Sans" font-size="14.5" font-weight="bold" letter-spacing="0.8" fill="#d6dada" text-anchor="middle">80</text>
<rect x="793.9" y="87.8" width="31" height="17.2" rx="4.5" fill="#a50000" stroke="#c2caca" stroke-width="1.3"/>
<text x="809.4" y="101" font-family="Liberation Sans" font-size="14.5" font-weight="bold" letter-spacing="0.8" fill="#d6dada" text-anchor="middle">81</text>
<rect x="799.25" y="87.8" width="31" height="17.2" rx="4.5" fill="#a50000" stroke="#c2caca" stroke-width="1.3"/>
<text x="814.75" y="101" font-family="Liberation Sans" font-size="14.5" font-weight="bold" letter-spacing="0.8" fill="#d6dada" text-anchor="middle">82</text>
<rect x="803.9" y="87.8" width="31" height="17.2" rx="4.5" fill="#a50000" stroke="#c2caca" stroke-width="1.3"/>
<text x="819.4" y="101" font-family="Liberation Sans" font-size="14.5" font-weight="bold" letter-spacing="0.8" fill="#d6dada" text-anchor="middle">83</text>
<rect x="806.75" y="87.8" width="31" height="17.2" rx="4.5" fill="#a50000" stroke="#c2caca" stroke-width="1.3"/>
<text x="822.25" y="101" font-family="Liberation Sans" font-size="14.5" font-weight="bold" letter-spacing="0.8" fill="#d6dada" text-anchor="middle">84</text>
<rect x="810.7" y="87.8" width="31" height="17.2" rx="4.5" fill="#a50000" stroke="#c2caca" stroke-width="1.3"/>
<text x="826.2" y="101" font-family="Liberation Sans" font-size="14.5" font-weight="bold" letter-spacing="0.8" fill="#d6dada" text-anchor="middle">85</text>
<rect x="824.7" y="87.8" width="31" height="17.2" rx="4.5" fill="#a50000" stroke="#c2caca" stroke-width="1.3"/>
<text x="840.2" y="101" font-family="Liberation Sans" font-size="14.5" font-weight="bold" letter-spacing="0.8" fill="#d6dada" text-anchor="middle">86</text>
<rect x="835.7" y="87.8" width="31" height="17.2" rx="4.5" fill="#a50000" stroke="#c2caca" stroke-width="1.3"/>
<text x="851.2" y="101" font-family="Liberation Sans" font-size="14.5" font-weight="bold" letter-spacing="0.8" fill="#d6dada" text-anchor="middle">87</text>
<rect x="840.7" y="87.8" width="31" height="17.2" rx="4.5" fill="#a50000" stroke="#c2caca" stroke-width="1.3"/>
<text x="856.2" y="101" font-family="Liberation Sans" font-size="14.5" font-weight="bold" letter-spacing="0.8" fill="#d6dada" text-anchor="middle">88</text>
<rect x="852.1" y="87.8" width="31" height="17.2" rx="4.5" fill="#a50000" stroke="#c2caca" stroke-width="1.3"/>
<text x="867.6" y="101" font-family="Liberation Sans" font-size="14.5" font-weight="bold" letter-spacing="0.8" fill="#d6dada" text-anchor="middle">89</text>
<rect x="858.6" y="87.8" width="31" height="17.2" rx="4.5" fill="#a50000" stroke="#c2caca" stroke-width="1.3"/>
<text x="874.1" y="101" font-family="Liberation Sans" font-size="14.5" font-weight="bold" letter-spacing="0.8" fill="#d6dada" text-anchor="middle">90</text>
<rect x="873.2" y="87.8" width="31" height="17.2" rx="4.5" fill="#a50000" stroke="#c2caca" stroke-width="1.3"/>
<text x="888.7" y="101" font-family="Liberation Sans" font-size="14.5" font-weight="bold" letter-spacing="0.8" fill="#d6dada" text-anchor="middle">91</text>
<rect x="921.3" y="87.8" width="31" height="17.2" rx="4.5" fill="#a50000" stroke="#c2caca" stroke-width="1.3"/>
<text x="936.8" y="101" font-family="Liberation Sans" font-size="14.5" font-weight="bold" letter-spacing="0.8" fill="#d6dada" text-anchor="middle">92</text>
<rect x="958.5" y="87.8" width="31" height="17.2" rx="4.5" fill="#a50000" stroke="#c2caca" stroke-width="1.3"/>
<text x="974.0" y="101" font-family="Liberation Sans" font-size="14.5" font-weight="bold" letter-spacing="0.8" fill="#d6dada" text-anchor="middle">93</text>
<rect x="1009.5" y="87.8" width="31" height="17.2" rx="4.5" fill="#a50000" stroke="#c2caca" stroke-width="1.3"/>
<text x="1025.0" y="101" font-family="Liberation Sans" font-size="14.5" font-weight="bold" letter-spacing="0.8" fill="#d6dada" text-anchor="middle">94</text>
<rect x="1056.5" y="87.8" width="31" height="17.2" rx="4.5" fill="#a50000" stroke="#c2caca" stroke-width="1.3"/>
<text x="1072.0" y="101" font-family="Liberation Sans" font-size="14.5" font-weight="bold" letter-spacing="0.8" fill="#d6dada" text-anchor="middle">98</text>
<rect x="1067.4" y="87.8" width="31" height="17.2" rx="4.5" fill="#a50000" stroke="#c2caca" stroke-width="1.3"/>
<text x="1082.9" y="101" font-family="Liberation Sans" font-size="14.5" font-weight="bold" letter-spacing="0.8" fill="#d6dada" text-anchor="middle">96</text>
<rect x="1099.9" y="87.8" width="31" height="17.2" rx="4.5" fill="#a50000" stroke="#c2caca" stroke-width="1.3"/>
<text x="1115.4" y="101" font-family="Liberation Sans" font-size="14.5" font-weight="bold" letter-spacing="0.8" fill="#d6dada" text-anchor="middle">97</text>
<rect x="1122.1" y="87.8" width="31" height="17.2" rx="4.5" fill="#a50000" stroke="#c2caca" stroke-width="1.3"/>
<text x="1137.6" y="101" font-family="Liberation Sans" font-size="14.5" font-weight="bold" letter-spacing="0.8" fill="#d6dada" text-anchor="middle">98</text>
<rect x="1131.75" y="87.8" width="31" height="17.2" rx="4.5" fill="#a50000" stroke="#c2caca" stroke-width="1.3"/>
<text x="1147.25" y="101" font-family="Liberation Sans" font-size="14.5" font-weight="bold" letter-spacing="0.8" fill="#d6dada" text-anchor="middle">98</text>
<rect x="1149.4" y="87.8" width="31" height="17.2" rx="4.5" fill="#a50000" stroke="#c2caca" stroke-width="1.3"/>
<text x="1164.9" y="101" font-family="Liberation Sans" font-size="14.5" font-weight="bold" letter-spacing="0.8" fill="#d6dada" text-anchor="middle">99</text>
<rect x="1183.5" y="87.8" width="43" height="17.2" rx="4.5" fill="#a50000" stroke="#c2caca" stroke-width="1.3"/>
<text x="1205.0" y="101" font-family="Liberation Sans" font-size="14.5" font-weight="bold" letter-spacing="0.8" fill="#d6dada" text-anchor="middle">100</text>
<rect x="1203.0" y="87.8" width="43" height="17.2" rx="4.5" fill="#a50000" stroke="#c2caca" stroke-width="1.3"/>
<text x="1224.5" y="101" font-family="Liberation Sans" font-size="14.5" font-weight="bold" letter-spacing="0.8" fill="#d6dada" text-anchor="middle">132</text>
<rect x="1210.3" y="87.8" width="43" height="17.2" rx="4.5" fill="#a50000" stroke="#c2caca" stroke-width="1.3"/>
<text x="1231.8" y="101" font-family="Liberation Sans" font-size="14.5" font-weight="bold" letter-spacing="0.8" fill="#d6dada" text-anchor="middle">133</text>
<rect x="1217.1" y="87.8" width="43" height="17.2" rx="4.5" fill="#a50000" stroke="#c2caca" stroke-width="1.3"/>
<text x="1238.6" y="101" font-family="Liberation Sans" font-size="14.5" font-weight="bold" letter-spacing="0.8" fill="#d6dada" text-anchor="middle">134</text>
<rect x="1223.0" y="87.8" width="43" height="17.2" rx="4.5" fill="#a50000" stroke="#c2caca" stroke-width="1.3"/>
<text x="1244.5" y="101" font-family="Liberation Sans" font-size="14.5" font-weight="bold" letter-spacing="0.8" fill="#d6dada" text-anchor="middle">135</text>
<rect x="1227.7" y="87.8" width="43" height="17.2" rx="4.5" fill="#a50000" stroke="#c2caca" stroke-width="1.3"/>
<text x="1249.2" y="101" font-family="Liberation Sans" font-size="14.5" font-weight="bold" letter-spacing="0.8" fill="#d6dada" text-anchor="middle">136</text>
<rect x="1233.0" y="87.8" width="43" height="17.2" rx="4.5" fill="#a50000" stroke="#c2caca" stroke-width="1.3"/>
<text x="1254.5" y="101" font-family="Liberation Sans" font-size="14.5" font-weight="bold" letter-spacing="0.8" fill="#d6dada" text-anchor="middle">137</text>
<rect x="1242.8" y="87.8" width="43" height="17.2" rx="4.5" fill="#a50000" stroke="#c2caca" stroke-width="1.3"/>
<text x="1264.3" y="101" font-family="Liberation Sans" font-size="14.5" font-weight="bold" letter-spacing="0.8" fill="#d6dada" text-anchor="middle">138</text>
<rect x="1245.5" y="87.8" width="43" height="17.2" rx="4.5" fill="#a50000" stroke="#c2caca" stroke-width="1.3"/>
<text x="1267.0" y="101" font-family="Liberation Sans" font-size="14.5" font-weight="bold" letter-spacing="0.8" fill="#d6dada" text-anchor="middle">139</text>
<rect x="1253.8" y="87.8" width="43" height="17.2" rx="4.5" fill="#a50000" stroke="#c2caca" stroke-width="1.3"/>
<text x="1275.3" y="101" font-family="Liberation Sans" font-size="14.5" font-weight="bold" letter-spacing="0.8" fill="#d6dada" text-anchor="middle">140</text>
<rect x="1263.6" y="87.8" width="43" height="17.2" rx="4.5" fill="#a50000" stroke="#c2caca" stroke-width="1.3"/>
<text x="1285.1" y="101" font-family="Liberation Sans" font-size="14.5" font-weight="bold" letter-spacing="0.8" fill="#d6dada" text-anchor="middle">141</text>
<rect x="1275.2" y="87.8" width="43" height="17.2" rx="4.5" fill="#a50000" stroke="#c2caca" stroke-width="1.3"/>
<text x="1296.7" y="101" font-family="Liberation Sans" font-size="14.5" font-weight="bold" letter-spacing="0.8" fill="#d6dada" text-anchor="middle">142</text>
<rect x="1279.5" y="87.8" width="43" height="17.2" rx="4.5" fill="#a50000" stroke="#c2caca" stroke-width="1.3"/>
<text x="1301.0" y="101" font-family="Liberation Sans" font-size="14.5" font-weight="bold" letter-spacing="0.8" fill="#d6dada" text-anchor="middle">143</text>
<rect x="1287.7" y="87.8" width="43" height="17.2" rx="4.5" fill="#a50000" stroke="#c2caca" stroke-width="1.3"/>
<text x="1309.2" y="101" font-family="Liberation Sans" font-size="14.5" font-weight="bold" letter-spacing="0.8" fill="#d6dada" text-anchor="middle">144</text>
<rect x="1299.1" y="87.8" width="43" height="17.2" rx="4.5" fill="#a50000" stroke="#c2caca" stroke-width="1.3"/>
<text x="1320.6" y="101" font-family="Liberation Sans" font-size="14.5" font-weight="bold" letter-spacing="0.8" fill="#d6dada" text-anchor="middle">145</text>
<rect x="1302.2" y="87.8" width="43" height="17.2" rx="4.5" fill="#a50000" stroke="#c2caca" stroke-width="1.3"/>
<text x="1323.7" y="101" font-family="Liberation Sans" font-size="14.5" font-weight="bold" letter-spacing="0.8" fill="#d6dada" text-anchor="middle">146</text>
<rect x="1311.6" y="87.8" width="43" height="17.2" rx="4.5" fill="#a50000" stroke="#c2caca" stroke-width="1.3"/>
<text x="1333.1" y="101" font-family="Liberation Sans" font-size="14.5" font-weight="bold" letter-spacing="0.8" fill="#d6dada" text-anchor="middle">147</text>
<rect x="1327.6" y="87.8" width="43" height="17.2" rx="4.5" fill="#a50000" stroke="#c2caca" stroke-width="1.3"/>
<text x="1349.1" y="101" font-family="Liberation Sans" font-size="14.5" font-weight="bold" letter-spacing="0.8" fill="#d6dada" text-anchor="middle">148</text>
<rect x="1338.9" y="87.8" width="43" height="17.2" rx="4.5" fill="#a50000" stroke="#c2caca" stroke-width="1.3"/>
<text x="1360.4" y="101" font-family="Liberation Sans" font-size="14.5" font-weight="bold" letter-spacing="0.8" fill="#d6dada" text-anchor="middle">149</text>
<rect x="1347.2" y="87.8" width="43" height="17.2" rx="4.5" fill="#a50000" stroke="#c2caca" stroke-width="1.3"/>
<text x="1368.7" y="101" font-family="Liberation Sans" font-size="14.5" font-weight="bold" letter-spacing="0.8" fill="#d6dada" text-anchor="middle">150</text>
<rect x="1353.8" y="87.8" width="43" height="17.2" rx="4.5" fill="#a50000" stroke="#c2caca" stroke-width="1.3"/>
<text x="1375.3" y="101" font-family="Liberation Sans" font-size="14.5" font-weight="bold" letter-spacing="0.8" fill="#d6dada" text-anchor="middle">151</text>
<rect x="1363.9" y="87.8" width="43" height="17.2" rx="4.5" fill="#a50000" stroke="#c2caca" stroke-width="1.3"/>
<text x="1385.4" y="101" font-family="Liberation Sans" font-size="14.5" font-weight="bold" letter-spacing="0.8" fill="#d6dada" text-anchor="middle">152</text>
<rect x="1366.3" y="87.8" width="43" height="17.2" rx="4.5" fill="#a50000" stroke="#c2caca" stroke-width="1.3"/>
<text x="1387.8" y="101" font-family="Liberation Sans" font-size="14.5" font-weight="bold" letter-spacing="0.8" fill="#d6dada" text-anchor="middle">153</text>
<rect x="1369.4" y="87.8" width="43" height="17.2" rx="4.5" fill="#a50000" stroke="#c2caca" stroke-width="1.3"/>
<text x="1390.9" y="101" font-family="Liberation Sans" font-size="14.5" font-weight="bold" letter-spacing="0.8" fill="#d6dada" text-anchor="middle">154</text>
<rect x="1378.8" y="87.8" width="43" height="17.2" rx="4.5" fill="#a50000" stroke="#c2caca" stroke-width="1.3"/>
<text x="1400.3" y="101" font-family="Liberation Sans" font-size="14.5" font-weight="bold" letter-spacing="0.8" fill="#d6dada" text-anchor="middle">155</text>
<rect x="1385.0" y="87.8" width="43" height="17.2" rx="4.5" fill="#a50000" stroke="#c2caca" stroke-width="1.3"/>
<text x="1406.5" y="101" font-family="Liberation Sans" font-size="14.5" font-weight="bold" letter-spacing="0.8" fill="#d6dada" text-anchor="middle">156</text>
<rect x="1388.2" y="87.8" width="43" height="17.2" rx="4.5" fill="#a50000" stroke="#c2caca" stroke-width="1.3"/>
<text x="1409.7" y="101" font-family="Liberation Sans" font-size="14.5" font-weight="bold" letter-spacing="0.8" fill="#d6dada" text-anchor="middle">157</text>
<rect x="1391.3" y="87.8" width="43" height="17.2" rx="4.5" fill="#a50000" stroke="#c2caca" stroke-width="1.3"/>
<text x="1412.8" y="101" font-family="Liberation Sans" font-size="14.5" font-weight="bold" letter-spacing="0.8" fill="#d6dada" text-anchor="middle">158</text>
<rect x="1402.2" y="87.8" width="43" height="17.2" rx="4.5" fill="#a50000" stroke="#c2caca" stroke-width="1.3"/>
<text x="1423.7" y="101" font-family="Liberation Sans" font-size="14.5" font-weight="bold" letter-spacing="0.8" fill="#d6dada" text-anchor="middle">159</text>
<rect x="1406.9" y="87.8" width="43" height="17.2" rx="4.5" fill="#a50000" stroke="#c2caca" stroke-width="1.3"/>
<text x="1428.4" y="101" font-family="Liberation Sans" font-size="14.5" font-weight="bold" letter-spacing="0.8" fill="#d6dada" text-anchor="middle">160</text>
<rect x="1418.6" y="87.8" width="43" height="17.2" rx="4.5" fill="#a50000" stroke="#c2caca" stroke-width="1.3"/>
<text x="1440.1" y="101" font-family="Liberation Sans" font-size="14.5" font-weight="bold" letter-spacing="0.8" fill="#d6dada" text-anchor="middle">161</text>
<rect x="1421.75" y="87.8" width="43" height="17.2" rx="4.5" fill="#a50000" stroke="#c2caca" stroke-width="1.3"/>
<text x="1443.25" y="101" font-family="Liberation Sans" font-size="14.5" font-weight="bold" letter-spacing="0.8" fill="#d6dada" text-anchor="middle">162</text>
<rect x="1432.7" y="87.8" width="43" height="17.2" rx="4.5" fill="#a50000" stroke="#c2caca" stroke-width="1.3"/>
<text x="1454.2" y="101" font-family="Liberation Sans" font-size="14.5" font-weight="bold" letter-spacing="0.8" fill="#d6dada" text-anchor="middle">163</text>
<rect x="1436.6" y="87.8" width="43" height="17.2" rx="4.5" fill="#a50000" stroke="#c2caca" stroke-width="1.3"/>
<text x="1458.1" y="101" font-family="Liberation Sans" font-size="14.5" font-weight="bold" letter-spacing="0.8" fill="#d6dada" text-anchor="middle">164</text>
<rect x="1439.25" y="87.8" width="43" height="17.2" rx="4.5" fill="#a50000" stroke="#c2caca" stroke-width="1.3"/>
<text x="1460.75" y="101" font-family="Liberation Sans" font-size="14.5" font-weight="bold" letter-spacing="0.8" fill="#d6dada" text-anchor="middle">165</text>
<rect x="1442.1" y="87.8" width="43" height="17.2" rx="4.5" fill="#a50000" stroke="#c2caca" stroke-width="1.3"/>
<text x="1463.6" y="101" font-family="Liberation Sans" font-size="14.5" font-weight="bold" letter-spacing="0.8" fill="#d6dada" text-anchor="middle">166</text>
<rect x="1446.75" y="87.8" width="43" height="17.2" rx="4.5" fill="#a50000" stroke="#c2caca" stroke-width="1.3"/>
<text x="1468.25" y="101" font-family="Liberation Sans" font-size="14.5" font-weight="bold" letter-spacing="0.8" fill="#d6dada" text-anchor="middle">167</text>
<rect x="1460.8" y="87.8" width="43" height="17.2" rx="4.5" fill="#a50000" stroke="#c2caca" stroke-width="1.3"/>
<text x="1482.3" y="101" font-family="Liberation Sans" font-size="14.5" font-weight="bold" letter-spacing="0.8" fill="#d6dada" text-anchor="middle">168</text>
<rect x="1471.75" y="87.8" width="43" height="17.2" rx="4.5" fill="#a50000" stroke="#c2caca" stroke-width="1.3"/>
<text x="1493.25" y="101" font-family="Liberation Sans" font-size="14.5" font-weight="bold" letter-spacing="0.8" fill="#d6dada" text-anchor="middle">169</text>
<rect x="1475.6" y="87.8" width="43" height="17.2" rx="4.5" fill="#a50000" stroke="#c2caca" stroke-width="1.3"/>
<text x="1497.1" y="101" font-family="Liberation Sans" font-size="14.5" font-weight="bold" letter-spacing="0.8" fill="#d6dada" text-anchor="middle">170</text>
<rect x="1484.25" y="87.8" width="43" height="17.2" rx="4.5" fill="#a50000" stroke="#c2caca" stroke-width="1.3"/>
<text x="1505.75" y="101" font-family="Liberation Sans" font-size="14.5" font-weight="bold" letter-spacing="0.8" fill="#d6dada" text-anchor="middle">171</text>
<rect x="1486.6" y="87.8" width="43" height="17.2" rx="4.5" fill="#a50000" stroke="#c2caca" stroke-width="1.3"/>
<text x="1508.1" y="101" font-family="Liberation Sans" font-size="14.5" font-weight="bold" letter-spacing="0.8" fill="#d6dada" text-anchor="middle">172</text>
<rect x="1490.5" y="87.8" width="43" height="17.2" rx="4.5" fill="#a50000" stroke="#c2caca" stroke-width="1.3"/>
<text x="1512.0" y="101" font-family="Liberation Sans" font-size="14.5" font-weight="bold" letter-spacing="0.8" fill="#d6dada" text-anchor="middle">173</text>
<rect x="1494.4" y="87.8" width="43" height="17.2" rx="4.5" fill="#a50000" stroke="#c2caca" stroke-width="1.3"/>
<text x="1515.9" y="101" font-family="Liberation Sans" font-size="14.5" font-weight="bold" letter-spacing="0.8" fill="#d6dada" text-anchor="middle">174</text>
<rect x="1498.3" y="87.8" width="43" height="17.2" rx="4.5" fill="#a50000" stroke="#c2caca" stroke-width="1.3"/>
<text x="1519.8" y="101" font-family="Liberation Sans" font-size="14.5" font-weight="bold" letter-spacing="0.8" fill="#d6dada" text-anchor="middle">175</text>
<rect x="1504.5" y="87.8" width="43" height="17.2" rx="4.5" fill="#a50000" stroke="#c2caca" stroke-width="1.3"/>
<text x="1526.0" y="101" font-family="Liberation Sans" font-size="14.5" font-weight="bold" letter-spacing="0.8" fill="#d6dada" text-anchor="middle">176</text>
<rect x="1513.1" y="87.8" width="43" height="17.2" rx="4.5" fill="#a50000" stroke="#c2caca" stroke-width="1.3"/>
<text x="1534.6" y="101" font-family="Liberation Sans" font-size="14.5" font-weight="bold" letter-spacing="0.8" fill="#d6dada" text-anchor="middle">177</text>
<rect x="1521.0" y="87.8" width="43" height="17.2" rx="4.5" fill="#a50000" stroke="#c2caca" stroke-width="1.3"/>
<text x="1542.5" y="101" font-family="Liberation Sans" font-size="14.5" font-weight="bold" letter-spacing="0.8" fill="#d6dada" text-anchor="middle">178</text>
<rect x="1528.8" y="87.8" width="43" height="17.2" rx="4.5" fill="#a50000" stroke="#c2caca" stroke-width="1.3"/>
<text x="1550.3" y="101" font-family="Liberation Sans" font-size="14.5" font-weight="bold" letter-spacing="0.8" fill="#d6dada" text-anchor="middle">179</text>
<rect x="1538.3" y="87.8" width="43" height="17.2" rx="4.5" fill="#a50000" stroke="#c2caca" stroke-width="1.3"/>
<text x="1559.8" y="101" font-family="Liberation Sans" font-size="14.5" font-weight="bold" letter-spacing="0.8" fill="#d6dada" text-anchor="middle">180</text>
<rect x="1551.6" y="87.8" width="43" height="17.2" rx="4.5" fill="#a50000" stroke="#c2caca" stroke-width="1.3"/>
<text x="1573.1" y="101" font-family="Liberation Sans" font-size="14.5" font-weight="bold" letter-spacing="0.8" fill="#d6dada" text-anchor="middle">181</text>
<rect x="1563.6" y="87.8" width="43" height="17.2" rx="4.5" fill="#a50000" stroke="#c2caca" stroke-width="1.3"/>
<text x="1585.1" y="101" font-family="Liberation Sans" font-size="14.5" font-weight="bold" letter-spacing="0.8" fill="#d6dada" text-anchor="middle">182</text>
<rect x="1565.5" y="87.8" width="43" height="17.2" rx="4.5" fill="#a50000" stroke="#c2caca" stroke-width="1.3"/>
<text x="1587.0" y="101" font-family="Liberation Sans" font-size="14.5" font-weight="bold" letter-spacing="0.8" fill="#d6dada" text-anchor="middle">183</text>
<rect x="1569.1" y="87.8" width="43" height="17.2" rx="4.5" fill="#a50000" stroke="#c2caca" stroke-width="1.3"/>
<text x="1590.6" y="101" font-family="Liberation Sans" font-size="14.5" font-weight="bold" letter-spacing="0.8" fill="#d6dada" text-anchor="middle">184</text>
<rect x="1577.4" y="87.8" width="43" height="17.2" rx="4.5" fill="#a50000" stroke="#c2caca" stroke-width="1.3"/>
<text x="1598.9" y="101" font-family="Liberation Sans" font-size="14.5" font-weight="bold" letter-spacing="0.8" fill="#d6dada" text-anchor="middle">185</text>
<rect x="1581.1" y="87.8" width="43" height="17.2" rx="4.5" fill="#a50000" stroke="#c2caca" stroke-width="1.3"/>
<text x="1602.6" y="101" font-family="Liberation Sans" font-size="14.5" font-weight="bold" letter-spacing="0.8" fill="#d6dada" text-anchor="middle">186</text>
<rect x="1583.9" y="87.8" width="43" height="17.2" rx="4.5" fill="#a50000" stroke="#c2caca" stroke-width="1.3"/>
<text x="1605.4" y="101" font-family="Liberation Sans" font-size="14.5" font-weight="bold" letter-spacing="0.8" fill="#d6dada" text-anchor="middle">187</text>
<rect x="1587.8" y="87.8" width="43" height="17.2" rx="4.5" fill="#a50000" stroke="#c2caca" stroke-width="1.3"/>
<text x="1609.3" y="101" font-family="Liberation Sans" font-size="14.5" font-weight="bold" letter-spacing="0.8" fill="#d6dada" text-anchor="middle">188</text>
<rect x="1599.6" y="87.8" width="43" height="17.2" rx="4.5" fill="#a50000" stroke="#c2caca" stroke-width="1.3"/>
<text x="1621.1" y="101" font-family="Liberation Sans" font-size="14.5" font-weight="bold" letter-spacing="0.8" fill="#d6dada" text-anchor="middle">189</text>
<rect x="1606.6" y="87.8" width="43" height="17.2" rx="4.5" fill="#a50000" stroke="#c2caca" stroke-width="1.3"/>
<text x="1628.1" y="101" font-family="Liberation Sans" font-size="14.5" font-weight="bold" letter-spacing="0.8" fill="#d6dada" text-anchor="middle">190</text>
<rect x="1619.9" y="87.8" width="43" height="17.2" rx="4.5" fill="#a50000" stroke="#c2caca" stroke-width="1.3"/>
<text x="1641.4" y="101" font-family="Liberation Sans" font-size="14.5" font-weight="bold" letter-spacing="0.8" fill="#d6dada" text-anchor="middle">191</text>
<rect x="1625.3" y="87.8" width="43" height="17.2" rx="4.5" fill="#a50000" stroke="#c2caca" stroke-width="1.3"/>
<text x="1646.8" y="101" font-family="Liberation Sans" font-size="14.5" font-weight="bold" letter-spacing="0.8" fill="#d6dada" text-anchor="middle">192</text>
<rect x="1634.7" y="87.8" width="43" height="17.2" rx="4.5" fill="#a50000" stroke="#c2caca" stroke-width="1.3"/>
<text x="1656.2" y="101" font-family="Liberation Sans" font-size="14.5" font-weight="bold" letter-spacing="0.8" fill="#d6dada" text-anchor="middle">193</text>
<rect x="1638.6" y="87.8" width="43" height="17.2" rx="4.5" fill="#a50000" stroke="#c2caca" stroke-width="1.3"/>
<text x="1660.1" y="101" font-family="Liberation Sans" font-size="14.5" font-weight="bold" letter-spacing="0.8" fill="#d6dada" text-anchor="middle">194</text>
<rect x="1643.3" y="87.8" width="43" height="17.2" rx="4.5" fill="#a50000" stroke="#c2caca" stroke-width="1.3"/>
<text x="1664.8" y="101" font-family="Liberation Sans" font-size="14.5" font-weight="bold" letter-spacing="0.8" fill="#d6dada" text-anchor="middle">195</text>
<rect x="1651.1" y="87.8" width="43" height="17.2" rx="4.5" fill="#a50000" stroke="#c2caca" stroke-width="1.3"/>
<text x="1672.6" y="101" font-family="Liberation Sans" font-size="14.5" font-weight="bold" letter-spacing="0.8" fill="#d6dada" text-anchor="middle">196</text>
<rect x="1655.0" y="87.8" width="43" height="17.2" rx="4.5" fill="#a50000" stroke="#c2caca" stroke-width="1.3"/>
<text x="1676.5" y="101" font-family="Liberation Sans" font-size="14.5" font-weight="bold" letter-spacing="0.8" fill="#d6dada" text-anchor="middle">197</text>
<rect x="1658.2" y="87.8" width="43" height="17.2" rx="4.5" fill="#a50000" stroke="#c2caca" stroke-width="1.3"/>
<text x="1679.7" y="101" font-family="Liberation Sans" font-size="14.5" font-weight="bold" letter-spacing="0.8" fill="#d6dada" text-anchor="middle">198</text>
<rect x="1663.6" y="87.8" width="43" height="17.2" rx="4.5" fill="#a50000" stroke="#c2caca" stroke-width="1.3"/>
<text x="1685.1" y="101" font-family="Liberation Sans" font-size="14.5" font-weight="bold" letter-spacing="0.8" fill="#d6dada" text-anchor="middle">199</text>
<rect x="1670.7" y="87.8" width="43" height="17.2" rx="4.5" fill="#a50000" stroke="#c2caca" stroke-width="1.3"/>
<text x="1692.2" y="101" font-family="Liberation Sans" font-size="14.5" font-weight="bold" letter-spacing="0.8" fill="#d6dada" text-anchor="middle">200</text>
<rect x="1678.5" y="87.8" width="43" height="17.2" rx="4.5" fill="#a50000" stroke="#c2caca" stroke-width="1.3"/>
<text x="1700.0" y="101" font-family="Liberation Sans" font-size="14.5" font-weight="bold" letter-spacing="0.8" fill="#d6dada" text-anchor="middle">201</text>
<rect x="1683.2" y="87.8" width="43" height="17.2" rx="4.5" fill="#a50000" stroke="#c2caca" stroke-width="1.3"/>
<text x="1704.7" y="101" font-family="Liberation Sans" font-size="14.5" font-weight="bold" letter-spacing="0.8" fill="#d6dada" text-anchor="middle">202</text>
<rect x="1686.3" y="87.8" width="43" height="17.2" rx="4.5" fill="#a50000" stroke="#c2caca" stroke-width="1.3"/>
<text x="1707.8" y="101" font-family="Liberation Sans" font-size="14.5" font-weight="bold" letter-spacing="0.8" fill="#d6dada" text-anchor="middle">203</text>
<rect x="1689.4" y="87.8" width="43" height="17.2" rx="4.5" fill="#a50000" stroke="#c2caca" stroke-width="1.3"/>
<text x="1710.9" y="101" font-family="Liberation Sans" font-size="14.5" font-weight="bold" letter-spacing="0.8" fill="#d6dada" text-anchor="middle">204</text>
<rect x="1701.1" y="87.8" width="43" height="17.2" rx="4.5" fill="#a50000" stroke="#c2caca" stroke-width="1.3"/>
<text x="1722.6" y="101" font-family="Liberation Sans" font-size="14.5" font-weight="bold" letter-spacing="0.8" fill="#d6dada" text-anchor="middle">205</text>
<rect x="1705.0" y="87.8" width="43" height="17.2" rx="4.5" fill="#a50000" stroke="#c2caca" stroke-width="1.3"/>
<text x="1726.5" y="101" font-family="Liberation Sans" font-size="14.5" font-weight="bold" letter-spacing="0.8" fill="#d6dada" text-anchor="middle">206</text>
<rect x="1717.5" y="87.8" width="43" height="17.2" rx="4.5" fill="#a50000" stroke="#c2caca" stroke-width="1.3"/>
<text x="1739.0" y="101" font-family="Liberation Sans" font-size="14.5" font-weight="bold" letter-spacing="0.8" fill="#d6dada" text-anchor="middle">207</text>
<rect x="1725.3" y="87.8" width="43" height="17.2" rx="4.5" fill="#a50000" stroke="#c2caca" stroke-width="1.3"/>
<text x="1746.8" y="101" font-family="Liberation Sans" font-size="14.5" font-weight="bold" letter-spacing="0.8" fill="#d6dada" text-anchor="middle">208</text>
<rect x="1730.8" y="87.8" width="43" height="17.2" rx="4.5" fill="#a50000" stroke="#c2caca" stroke-width="1.3"/>
<text x="1752.3" y="101" font-family="Liberation Sans" font-size="14.5" font-weight="bold" letter-spacing="0.8" fill="#d6dada" text-anchor="middle">209</text>
<rect x="1734.7" y="87.8" width="43" height="17.2" rx="4.5" fill="#a50000" stroke="#c2caca" stroke-width="1.3"/>
<text x="1756.2" y="101" font-family="Liberation Sans" font-size="14.5" font-weight="bold" letter-spacing="0.8" fill="#d6dada" text-anchor="middle">210</text>
<rect x="1737.1" y="87.8" width="43" height="17.2" rx="4.5" fill="#a50000" stroke="#c2caca" stroke-width="1.3"/>
<text x="1758.6" y="101" font-family="Liberation Sans" font-size="14.5" font-weight="bold" letter-spacing="0.8" fill="#d6dada" text-anchor="middle">211</text>
<rect x="1739.4" y="87.8" width="43" height="17.2" rx="4.5" fill="#a50000" stroke="#c2caca" stroke-width="1.3"/>
<text x="1760.9" y="101" font-family="Liberation Sans" font-size="14.5" font-weight="bold" letter-spacing="0.8" fill="#d6dada" text-anchor="middle">212</text>
<rect x="1744.1" y="87.8" width="43" height="17.2" rx="4.5" fill="#a50000" stroke="#c2caca" stroke-width="1.3"/>
<text x="1765.6" y="101" font-family="Liberation Sans" font-size="14.5" font-weight="bold" letter-spacing="0.8" fill="#d6dada" text-anchor="middle">213</text>
<rect x="1751.1" y="87.8" width="43" height="17.2" rx="4.5" fill="#a50000" stroke="#c2caca" stroke-width="1.3"/>
<text x="1772.6" y="101" font-family="Liberation Sans" font-size="14.5" font-weight="bold" letter-spacing="0.8" fill="#d6dada" text-anchor="middle">214</text>
<rect x="1753.5" y="87.8" width="43" height="17.2" rx="4.5" fill="#a50000" stroke="#c2caca" stroke-width="1.3"/>
<text x="1775.0" y="101" font-family="Liberation Sans" font-size="14.5" font-weight="bold" letter-spacing="0.8" fill="#d6dada" text-anchor="middle">215</text>
<rect x="1766.7" y="87.8" width="43" height="17.2" rx="4.5" fill="#a50000" stroke="#c2caca" stroke-width="1.3"/>
<text x="1788.2" y="101" font-family="Liberation Sans" font-size="14.5" font-weight="bold" letter-spacing="0.8" fill="#d6dada" text-anchor="middle">216</text>
<rect x="1771.4" y="87.8" width="43" height="17.2" rx="4.5" fill="#a50000" stroke="#c2caca" stroke-width="1.3"/>
<text x="1792.9" y="101" font-family="Liberation Sans" font-size="14.5" font-weight="bold" letter-spacing="0.8" fill="#d6dada" text-anchor="middle">217</text>
<rect x="1774.6" y="87.8" width="43" height="17.2" rx="4.5" fill="#a50000" stroke="#c2caca" stroke-width="1.3"/>
<text x="1796.1" y="101" font-family="Liberation Sans" font-size="14.5" font-weight="bold" letter-spacing="0.8" fill="#d6dada" text-anchor="middle">218</text>
<rect x="1778.5" y="87.8" width="43" height="17.2" rx="4.5" fill="#a50000" stroke="#c2caca" stroke-width="1.3"/>
<text x="1800.0" y="101" font-family="Liberation Sans" font-size="14.5" font-weight="bold" letter-spacing="0.8" fill="#d6dada" text-anchor="middle">219</text>
<rect x="1785.5" y="87.8" width="43" height="17.2" rx="4.5" fill="#a50000" stroke="#c2caca" stroke-width="1.3"/>
<text x="1807.0" y="101" font-family="Liberation Sans" font-size="14.5" font-weight="bold" letter-spacing="0.8" fill="#d6dada" text-anchor="middle">220</text>
<rect x="1789.4" y="87.8" width="43" height="17.2" rx="4.5" fill="#a50000" stroke="#c2caca" stroke-width="1.3"/>
<text x="1810.9" y="101" font-family="Liberation Sans" font-size="14.5" font-weight="bold" letter-spacing="0.8" fill="#d6dada" text-anchor="middle">221</text>
<rect x="1793.3" y="87.8" width="43" height="17.2" rx="4.5" fill="#a50000" stroke="#c2caca" stroke-width="1.3"/>
<text x="1814.8" y="101" font-family="Liberation Sans" font-size="14.5" font-weight="bold" letter-spacing="0.8" fill="#d6dada" text-anchor="middle">222</text>
<rect x="1796.4" y="87.8" width="43" height="17.2" rx="4.5" fill="#a50000" stroke="#c2caca" stroke-width="1.3"/>
<text x="1817.9" y="101" font-family="Liberation Sans" font-size="14.5" font-weight="bold" letter-spacing="0.8" fill="#d6dada" text-anchor="middle">223</text>
<rect x="1805.8" y="87.8" width="43" height="17.2" rx="4.5" fill="#a50000" stroke="#c2caca" stroke-width="1.3"/>
<text x="1827.3" y="101" font-family="Liberation Sans" font-size="14.5" font-weight="bold" letter-spacing="0.8" fill="#d6dada" text-anchor="middle">224</text>
<rect x="1812.1" y="87.8" width="43" height="17.2" rx="4.5" fill="#a50000" stroke="#c2caca" stroke-width="1.3"/>
<text x="1833.6" y="101" font-family="Liberation Sans" font-size="14.5" font-weight="bold" letter-spacing="0.8" fill="#d6dada" text-anchor="middle">225</text>
<rect x="1816.75" y="87.8" width="43" height="17.2" rx="4.5" fill="#a50000" stroke="#c2caca" stroke-width="1.3"/>
<text x="1838.25" y="101" font-family="Liberation Sans" font-size="14.5" font-weight="bold" letter-spacing="0.8" fill="#d6dada" text-anchor="middle">226</text>
<rect x="1823.0" y="87.8" width="43" height="17.2" rx="4.5" fill="#a50000" stroke="#c2caca" stroke-width="1.3"/>
<text x="1844.5" y="101" font-family="Liberation Sans" font-size="14.5" font-weight="bold" letter-spacing="0.8" fill="#d6dada" text-anchor="middle">227</text>
<rect x="1827.7" y="87.8" width="43" height="17.2" rx="4.5" fill="#a50000" stroke="#c2caca" stroke-width="1.3"/>
<text x="1849.2" y="101" font-family="Liberation Sans" font-size="14.5" font-weight="bold" letter-spacing="0.8" fill="#d6dada" text-anchor="middle">228</text>
<rect x="1830.8" y="87.8" width="43" height="17.2" rx="4.5" fill="#a50000" stroke="#c2caca" stroke-width="1.3"/>
<text x="1852.3" y="101" font-family="Liberation Sans" font-size="14.5" font-weight="bold" letter-spacing="0.8" fill="#d6dada" text-anchor="middle">229</text>
<rect x="1840.2" y="87.8" width="43" height="17.2" rx="4.5" fill="#a50000" stroke="#c2caca" stroke-width="1.3"/>
<text x="1861.7" y="101" font-family="Liberation Sans" font-size="14.5" font-weight="bold" letter-spacing="0.8" fill="#d6dada" text-anchor="middle">230</text>
</svg>
<svg class="a" style="left:1285px;top:126px" width="32" height="54"><path d="M2 2 H30 L16 16Z" fill="none" stroke="#f0f0f0" stroke-width="1.8"/><path d="M6 36 H26 L16 50Z" fill="#d8d8d8" opacity="0.7"/><rect x="14.5" y="2" width="2.2" height="52" fill="#a30000"/></svg>
<div class="a" style="left:580px;top:739px;width:1441px;height:29px;background:#333"></div>
<svg class="a" style="left:580px;top:739px" width="1468" height="29"><circle cx="12.5" cy="13" r="8" fill="#1c1c1c"/><path d="M9 13 L15 9 V17Z" fill="#555"/><rect x="293" y="5" width="762" height="17" rx="8.5" fill="#4a4a4a"/><circle cx="302" cy="13" r="4" fill="#1a1a1a"/><rect x="672" y="7" width="2.5" height="10" fill="#1a1a1a"/><circle cx="1046" cy="13" r="4" fill="#1a1a1a"/><circle cx="1370" cy="13" r="8" fill="#1c1c1c"/><path d="M1367 9 L1373 13 L1367 17Z" fill="#555"/><path d="M1389 13 H1401 M1395 7 V19" stroke="#666" stroke-width="3.5"/><rect x="1410" y="7" width="1.5" height="12" fill="#1e1e1e"/><path d="M1422 13 H1436" stroke="#666" stroke-width="3.5"/></svg>
<div class="a" style="left:2021px;top:178px;width:27px;height:590px;background:#2e2e2e"></div>
<svg class="a" style="left:2021px;top:178px" width="27" height="562"><circle cx="12.5" cy="12.5" r="8" fill="#1a1a1a"/><path d="M9 15 L12.5 10 L16 15Z" fill="#444"/><rect x="5" y="31" width="16" height="349" rx="8" fill="#4a4a4a"/><rect x="7" y="201" width="10" height="3" fill="#1a1a1a"/><circle cx="12.5" cy="490.5" r="8" fill="#1a1a1a"/><path d="M9 488 L12.5 493 L16 488Z" fill="#444"/><path d="M6 516 H19 M12.5 509.5 V522.5" stroke="#5a5a5a" stroke-width="3.5"/><rect x="6" y="530.5" width="13" height="2.5" fill="#1e1e1e"/><path d="M6 548 H19" stroke="#5a5a5a" stroke-width="3.5"/></svg>
<div class="a" style="left:0px;top:768px;width:2048px;height:58px;background:#333"></div>
<div class="a" style="left:0px;top:768px;width:2048px;height:1px;background:#3c3c3c"></div>
<svg class="a" style="left:-10px;top:774px" width="110" height="48"><rect x="4" y="6" width="94" height="38" rx="19" fill="#1e1e1e" opacity="0.6"/><rect x="2" y="3.6" width="95.9" height="38" rx="19" fill="url(#tpd)" stroke="#1c1c1c" stroke-width="1.2"/><line x1="52.7" y1="4" x2="52.7" y2="42" stroke="#1a1a1a" stroke-width="1.2"/><rect x="24" y="16" width="3" height="15" fill="#777"/><path d="M40 16 V31 L28 23.5Z" fill="#777"/><path d="M64 16 V31 L76 23.5Z" fill="#777"/><rect x="77" y="16" width="3" height="15" fill="#777"/></svg>
<svg width="0" height="0" style="position:absolute"><defs><linearGradient id="tpd" x1="0" y1="0" x2="0" y2="1"><stop offset="0" stop-color="#404040"/><stop offset="0.5" stop-color="#393939"/><stop offset="0.5" stop-color="#2e2e2e"/><stop offset="1" stop-color="#2a2a2a"/></linearGradient><linearGradient id="tpl" x1="0" y1="0" x2="0" y2="1"><stop offset="0" stop-color="#b9c2c2"/><stop offset="0.5" stop-color="#aeb8b8"/><stop offset="0.5" stop-color="#a2acac"/><stop offset="1" stop-color="#98a2a2"/></linearGradient><linearGradient id="tpl2" x1="0" y1="0" x2="0" y2="1"><stop offset="0" stop-color="#cfd6d6"/><stop offset="0.5" stop-color="#c6cdcd"/><stop offset="0.5" stop-color="#bbc3c3"/><stop offset="1" stop-color="#b3bbbb"/></linearGradient></defs></svg>
<svg class="a" style="left:92px;top:768px" width="170" height="58"><rect x="6" y="8" width="156" height="48" rx="24" fill="#1a1a1a" opacity="0.5"/><clipPath id="pc"><rect x="4.4" y="4.7" width="156.3" height="47" rx="23.5"/></clipPath><g clip-path="url(#pc)"><rect x="0" y="0" width="54" height="58" fill="url(#tpd)"/><rect x="54" y="0" width="58" height="58" fill="url(#tpl)"/><rect x="112" y="0" width="60" height="58" fill="url(#tpl2)"/></g><rect x="4.4" y="4.7" width="156.3" height="47" rx="23.5" fill="none" stroke="#1a1a1a" stroke-width="1.2"/><line x1="111.8" y1="5" x2="111.8" y2="52" stroke="#2a2a2a" stroke-width="1.2"/><rect x="23" y="21" width="15" height="15" fill="#7a7a7a"/><path d="M77 19 V38 L93 28.5Z" fill="#111"/><rect x="129" y="20" width="4" height="17" fill="#111"/><rect x="137" y="20" width="4" height="17" fill="#111"/></svg>
<svg class="a" style="left:260.7px;top:772.1px;overflow:visible" width="49.0" height="51.0"><circle cx="24.5" cy="26.5" r="23.5" fill="rgba(0,0,0,0.25)"/><circle cx="24.5" cy="24.5" r="23.7" fill="#1e1e1e"/><circle cx="24.5" cy="24.5" r="21.5" fill="url(#rg)"/><circle cx="24.5" cy="24.5" r="9.45" fill="none" stroke="#e8c9c0" stroke-width="3.6"/></svg>
<svg class="a" style="left:314px;top:774px" width="46" height="48"><circle cx="22.5" cy="24.5" r="19" fill="#1c1c1c" opacity="0.6"/><circle cx="22.5" cy="22.5" r="19" fill="url(#tpd)" stroke="#1a1a1a" stroke-width="1.2"/><path d="M14 21 A9 9 0 0 1 30 17 M31 24 A9 9 0 0 1 15 28" fill="none" stroke="#8a8a8a" stroke-width="2.2"/><path d="M27 14 L32 18 L26 20Z M18 31 L13 27 L19 25Z" fill="#8a8a8a"/></svg>
<div class="a" style="left:370px;top:773.4px;width:81px;height:49px;background:#2c2c2c"></div>
<div class="a" style="left:372px;top:796px;width:77px;height:25px;background:#303030"></div>
<svg class="a" style="left:374px;top:776px" width="24" height="16"><path d="M2 13 L9 4 L17 10" fill="none" stroke="#aaa" stroke-width="1.5"/><rect x="0" y="11" width="4" height="4" fill="#aaa"/><rect x="7" y="2" width="4" height="4" fill="#aaa"/><rect x="15" y="8" width="4" height="4" fill="#aaa"/></svg>
<div class="t" style="left:398px;top:777.5px;font-size:12px;color:#a8a8a8;font-weight:bold">GLOBAL</div>
<div class="t" style="left:377px;top:799px;font-size:15px;color:#a8a8a8;">none</div>
<svg class="a" style="left:426px;top:797px" width="20" height="20"><circle cx="10" cy="10" r="8" fill="none" stroke="#8a8a8a" stroke-width="1.2"/><path d="M6 8 H14 L10 14Z" fill="#8a8a8a"/></svg>
<div class="a" style="left:485px;top:769.8px;width:579px;height:54.7px;background:#2c2c2c"></div>
<div class="t" style="left:499px;top:775px;font-size:45.5px;color:#8c8c8c;font-weight:bold;letter-spacing:0.25px">4702.1.00 / 2:36:42.000</div>
<div class="t" style="left:995px;top:777px;font-size:36px;color:#8c8c8c;">[Sto</div>
<div class="a" style="left:1064px;top:769.8px;width:82px;height:54.7px;background:#303030;border-left:1px solid #262626"></div>
<div class="t" style="left:1088px;top:773px;font-size:13px;color:#a0a0a0;">BPM</div>
<div class="t" style="left:1093px;top:802px;font-size:13px;color:#a0a0a0;">120</div>
<div class="a" style="left:1146px;top:769.8px;width:63px;height:54.7px;background:#2c2c2c;border-left:1px solid #262626"></div>
<div class="t" style="left:1164px;top:786px;font-size:16px;color:#a0a0a0;">4/4</div>
<div class="a" style="left:1209px;top:769.8px;width:226px;height:54.7px;background:#333"></div>
<div class="t" style="left:1217px;top:774px;font-size:15px;color:#8e8e8e;">Rate:</div>
<div class="t" style="left:1335px;top:774px;font-size:15px;color:#8e8e8e;">1.0</div>
<div class="a" style="left:1210px;top:797px;width:225px;height:27px;background:#2b2b2b"></div>
<div class="a" style="left:1311px;top:799px;width:25px;height:24px;background:linear-gradient(90deg,#777 0%,#eee 20%,#aaa 45%,#333 50%,#aaa 55%,#eee 80%,#777 100%);border-radius:3px"></div>
<div class="t" style="left:1468px;top:786px;font-size:20px;color:#b4b4b4;letter-spacing:0.5px">Selection:</div>
<div class="t" style="left:1597px;top:786px;font-size:20px;color:#b4b4b4;letter-spacing:0.3px">4702.1.00</div>
<div class="t" style="left:1755px;top:786px;font-size:20px;color:#b4b4b4;letter-spacing:0.3px">4719.1.00</div>
<div class="t" style="left:1925px;top:786px;font-size:20px;color:#b4b4b4;letter-spacing:0.3px">17.0.00</div>
<div class="a" style="left:0px;top:826px;width:2048px;height:1px;background:#2a2a2a"></div>
<div class="a" style="left:0px;top:827px;width:2048px;height:425px;background:#333"></div>
<div class="a" style="left:27px;top:834px;width:125px;height:1.5px;background:#4a4a4a"></div>
<div class="a" style="left:228px;top:834px;width:57px;height:1.5px;background:#4a4a4a"></div>
<div class="a" style="left:361px;top:834px;width:59px;height:1.5px;background:#4a4a4a"></div>
<div class="a" style="left:494px;top:834px;width:58px;height:1.5px;background:#4a4a4a"></div>
<div class="a" style="left:190.1px;top:845px;width:1px;height:85px;background:#2a2a2a"></div>
<div class="a" style="left:191.1px;top:845px;width:1px;height:85px;background:#3d3d3d"></div>
<div class="a" style="left:323.0px;top:845px;width:1px;height:85px;background:#2a2a2a"></div>
<div class="a" style="left:324.0px;top:845px;width:1px;height:85px;background:#3d3d3d"></div>
<div class="a" style="left:456.5px;top:845px;width:1px;height:85px;background:#2a2a2a"></div>
<div class="a" style="left:457.5px;top:845px;width:1px;height:85px;background:#3d3d3d"></div>
<div class="a" style="left:589.5px;top:845px;width:1px;height:85px;background:#2a2a2a"></div>
<div class="a" style="left:590.5px;top:845px;width:1px;height:85px;background:#3d3d3d"></div>
<div class="a" style="left:0px;top:847px;width:35.5px;height:46.6px;background:#1f1f1f"></div>
<div class="a" style="left:0px;top:847px;width:35px;height:19px;background:#b8c4c4"></div>
<div class="a" style="left:0px;top:866px;width:35px;height:27px;background:#22c060"></div>
<svg class="a" style="left:17px;top:850px" width="16" height="16"><path d="M4.5 4 A5.5 5.5 0 1 0 11.5 4" fill="none" stroke="#1a9a50" stroke-width="1.6"/><line x1="8" y1="1.5" x2="8" y2="8" stroke="#1a9a50" stroke-width="1.6"/></svg>
<div class="t" style="left:4px;top:876px;font-size:13px;color:#f0fff4;font-weight:bold">FX</div>
<div class="a" style="left:47.5px;top:846px;width:64.5px;height:48px;background:#1c1c1c;border:1px solid #111;box-shadow:0 2px 2px rgba(0,0,0,0.3)"></div>
<div class="a" style="left:48.5px;top:847px;width:62.5px;height:19px;background:#2a2a2a"></div>
<div class="t" style="left:55.5px;top:850px;font-size:13px;color:#14b050;font-weight:bold">M</div>
<div class="t" style="left:76.5px;top:850px;font-size:13px;color:#444;font-weight:bold">R</div>
<div class="t" style="left:61.5px;top:850px;font-size:13px;color:#000;"></div>
<div class="t" style="left:94.5px;top:850px;font-size:13px;color:#1a8fb0;font-weight:bold">S</div>
<div class="t" style="left:55.0px;top:875.5px;font-size:12.5px;color:#bcbcbc;letter-spacing:0px">ROUTING</div>
<div class="a" style="left:122.5px;top:846px;width:58.5px;height:49px;background:#2c2c2c"></div>
<div class="a" style="left:127px;top:850px;width:50px;height:21px;background:linear-gradient(#b8c4c4,#9eabab);border:1px solid #1a1a1a"></div>
<svg class="a" style="left:139px;top:853px" width="26" height="16"><path d="M1 2 L11 6 V10 L1 14Z M25 2 L15 6 V10 L25 14Z" fill="#5e6a6a"/></svg>
<div class="t" style="left:135px;top:876.5px;font-size:12.5px;color:#b4b4b4;letter-spacing:0px">MONO</div>
<div class="t" style="left:55.6px;top:902px;font-size:17px;color:#d4d4d4;font-weight:bold;letter-spacing:-0.5px">MASTER</div>
<div class="a" style="left:200.6px;top:847px;width:36.3px;height:46.6px;background:#8f9c9c;border:1px solid #1a1a1a;box-shadow:0 2px 2px rgba(0,0,0,0.3)"></div>
<div class="a" style="left:201.6px;top:848px;width:34.3px;height:18px;background:#b3bfbf"></div>
<svg class="a" style="left:217.6px;top:850px" width="16" height="16"><path d="M4.5 4 A5.5 5.5 0 1 0 11.5 4" fill="none" stroke="#2a2a2a" stroke-width="1.6"/><line x1="8" y1="1.5" x2="8" y2="8" stroke="#2a2a2a" stroke-width="1.6"/></svg>
<div class="t" style="left:205.6px;top:876px;font-size:13px;color:#2a2a2a;font-weight:bold">FX</div>
<div class="a" style="left:248px;top:846px;width:64.5px;height:48px;background:#1c1c1c;border:1px solid #111;box-shadow:0 2px 2px rgba(0,0,0,0.3)"></div>
<div class="a" style="left:249px;top:847px;width:62.5px;height:19px;background:#2a2a2a"></div>
<div class="t" style="left:256px;top:850px;font-size:13px;color:#14b050;font-weight:bold">M</div>
<div class="t" style="left:277px;top:850px;font-size:13px;color:#444;font-weight:bold">R</div>
<div class="t" style="left:295px;top:850px;font-size:13px;color:#444;font-weight:bold">S</div>
<div class="t" style="left:255.5px;top:875.5px;font-size:12.5px;color:#bcbcbc;letter-spacing:0px">ROUTING</div>
<div class="a" style="left:333.4px;top:847px;width:36.3px;height:46.6px;background:#8f9c9c;border:1px solid #1a1a1a;box-shadow:0 2px 2px rgba(0,0,0,0.3)"></div>
<div class="a" style="left:334.4px;top:848px;width:34.3px;height:18px;background:#b3bfbf"></div>
<svg class="a" style="left:350.4px;top:850px" width="16" height="16"><path d="M4.5 4 A5.5 5.5 0 1 0 11.5 4" fill="none" stroke="#2a2a2a" stroke-width="1.6"/><line x1="8" y1="1.5" x2="8" y2="8" stroke="#2a2a2a" stroke-width="1.6"/></svg>
<div class="t" style="left:338.4px;top:876px;font-size:13px;color:#2a2a2a;font-weight:bold">FX</div>
<div class="a" style="left:381px;top:846px;width:64.5px;height:48px;background:#1c1c1c;border:1px solid #111;box-shadow:0 2px 2px rgba(0,0,0,0.3)"></div>
<div class="a" style="left:382px;top:847px;width:62.5px;height:19px;background:#2a2a2a"></div>
<div class="t" style="left:389px;top:850px;font-size:13px;color:#14b050;font-weight:bold">M</div>
<div class="t" style="left:410px;top:850px;font-size:13px;color:#444;font-weight:bold">R</div>
<div class="t" style="left:428px;top:850px;font-size:13px;color:#444;font-weight:bold">S</div>
<div class="t" style="left:388.5px;top:875.5px;font-size:12.5px;color:#bcbcbc;letter-spacing:0px">ROUTING</div>
<div class="a" style="left:466.4px;top:847px;width:36.3px;height:46.6px;background:#8f9c9c;border:1px solid #1a1a1a;box-shadow:0 2px 2px rgba(0,0,0,0.3)"></div>
<div class="a" style="left:467.4px;top:848px;width:34.3px;height:18px;background:#b3bfbf"></div>
<svg class="a" style="left:483.4px;top:850px" width="16" height="16"><path d="M4.5 4 A5.5 5.5 0 1 0 11.5 4" fill="none" stroke="#2a2a2a" stroke-width="1.6"/><line x1="8" y1="1.5" x2="8" y2="8" stroke="#2a2a2a" stroke-width="1.6"/></svg>
<div class="t" style="left:471.4px;top:876px;font-size:13px;color:#2a2a2a;font-weight:bold">FX</div>
<div class="a" style="left:514.4px;top:846px;width:64.5px;height:48px;background:#1c1c1c;border:1px solid #111;box-shadow:0 2px 2px rgba(0,0,0,0.3)"></div>
<div class="a" style="left:515.4px;top:847px;width:62.5px;height:19px;background:#2a2a2a"></div>
<div class="t" style="left:522.4px;top:850px;font-size:13px;color:#14b050;font-weight:bold">M</div>
<div class="t" style="left:543.4px;top:850px;font-size:13px;color:#444;font-weight:bold">R</div>
<div class="t" style="left:561.4px;top:850px;font-size:13px;color:#444;font-weight:bold">S</div>
<div class="t" style="left:521.9px;top:875.5px;font-size:12.5px;color:#bcbcbc;letter-spacing:0px">ROUTING</div>
<div class="a" style="left:0px;top:930.7px;width:190.6px;height:291.5px;background:#a3acac"></div>
<div class="a" style="left:191.4px;top:930.7px;width:131.6px;height:291.5px;background:#d0d5d5"></div>
<div class="a" style="left:324.4px;top:930.7px;width:132.60000000000002px;height:291.5px;background:#a3acac"></div>
<div class="a" style="left:457.8px;top:930.7px;width:131.90000000000003px;height:291.5px;background:#a3acac"></div>
<div class="a" style="left:190.0px;top:930.7px;width:1.3px;height:321px;background:#2f3434"></div>
<div class="a" style="left:323.2px;top:930.7px;width:1.3px;height:321px;background:#2f3434"></div>
<div class="a" style="left:456.79999999999995px;top:930.7px;width:1.3px;height:321px;background:#2f3434"></div>
<div class="a" style="left:589.4px;top:930.7px;width:1.3px;height:321px;background:#2f3434"></div>
<div class="a" style="left:0px;top:1221.5px;width:590px;height:1.5px;background:#333"></div>
<div class="a" style="left:0px;top:1223px;width:190.6px;height:29px;background:#868f8f"></div>
<div class="a" style="left:191.4px;top:1223px;width:131.6px;height:29px;background:#868f8f"></div>
<div class="a" style="left:324.4px;top:1223px;width:132.60000000000002px;height:29px;background:#868f8f"></div>
<div class="a" style="left:457.8px;top:1223px;width:131.90000000000003px;height:29px;background:#868f8f"></div>
<div class="a" style="left:190.0px;top:1221px;width:1.3px;height:31px;background:#2a2f2f"></div>
<div class="a" style="left:323.2px;top:1221px;width:1.3px;height:31px;background:#2a2f2f"></div>
<div class="a" style="left:456.79999999999995px;top:1221px;width:1.3px;height:31px;background:#2a2f2f"></div>
<div class="a" style="left:589.4px;top:1221px;width:1.3px;height:31px;background:#2a2f2f"></div>
<div class="t" style="left:251.5px;top:1227px;font-size:17px;color:#f4f4f4;font-weight:bold">1</div>
<div class="t" style="left:385px;top:1227px;font-size:17px;color:#f4f4f4;font-weight:bold">2</div>
<div class="t" style="left:518.5px;top:1227px;font-size:17px;color:#f4f4f4;font-weight:bold">3</div>
<svg class="a" style="left:251px;top:1216px" width="13" height="13"><circle cx="6.5" cy="6.5" r="4.5" fill="#eee" stroke="#333" stroke-width="1.6"/></svg>
<svg class="a" style="left:70.7px;top:939.4000000000001px;overflow:visible" width="40.6" height="40.6"><circle cx="20.3" cy="22.8" r="14.3" fill="rgba(0,0,0,0.16)"/><circle cx="20.3" cy="20.3" r="14.3" fill="url(#kg)" stroke="#5a5a5a" stroke-width="1"/><line x1="20.3" y1="16.0" x2="20.3" y2="11.4" stroke="#2a2a2a" stroke-width="1.8"/></svg>
<svg class="a" style="left:235.89999999999998px;top:939.4000000000001px;overflow:visible" width="40.6" height="40.6"><circle cx="20.3" cy="22.8" r="14.3" fill="rgba(0,0,0,0.16)"/><circle cx="20.3" cy="20.3" r="14.3" fill="url(#kg)" stroke="#5a5a5a" stroke-width="1"/><line x1="20.3" y1="16.0" x2="20.3" y2="11.4" stroke="#2a2a2a" stroke-width="1.8"/></svg>
<svg class="a" style="left:369.5px;top:939.4000000000001px;overflow:visible" width="40.6" height="40.6"><circle cx="20.3" cy="22.8" r="14.3" fill="rgba(0,0,0,0.16)"/><circle cx="20.3" cy="20.3" r="14.3" fill="url(#kg)" stroke="#5a5a5a" stroke-width="1"/><line x1="18.5" y1="24.2" x2="16.6" y2="28.3" stroke="#2a2a2a" stroke-width="1.8"/></svg>
<svg class="a" style="left:502.90000000000003px;top:939.4000000000001px;overflow:visible" width="40.6" height="40.6"><circle cx="20.3" cy="22.8" r="14.3" fill="rgba(0,0,0,0.16)"/><circle cx="20.3" cy="20.3" r="14.3" fill="url(#kg)" stroke="#5a5a5a" stroke-width="1"/><line x1="22.1" y1="24.2" x2="24.0" y2="28.3" stroke="#2a2a2a" stroke-width="1.8"/></svg>
<svg class="a" style="left:0px;top:990px;overflow:visible" width="183.8" height="235"><path d="M0,0.4 H139.8 Q143.8,0.4 143.8,5 V175 Q143.8,188 155.8,188 L156.5,190 V221.3 H0 Z" fill="#262626"/></svg>
<svg class="a" style="left:191px;top:990px;overflow:visible" width="126.30000000000001" height="235"><path d="M0,0.4 H82.30000000000001 Q86.30000000000001,0.4 86.30000000000001,5 V175 Q86.30000000000001,188 98.30000000000001,188 L98.5,190 V221.3 H0 Z" fill="#262626"/></svg>
<svg class="a" style="left:324.6px;top:990px;overflow:visible" width="126.39999999999998" height="235"><path d="M0,0.4 H82.39999999999998 Q86.39999999999998,0.4 86.39999999999998,5 V175 Q86.39999999999998,188 98.39999999999998,188 L98.29999999999995,190 V221.3 H0 Z" fill="#262626"/></svg>
<svg class="a" style="left:458px;top:990px;overflow:visible" width="126.39999999999998" height="235"><path d="M0,0.4 H82.39999999999998 Q86.39999999999998,0.4 86.39999999999998,5 V175 Q86.39999999999998,188 98.39999999999998,188 L98,190 V221.3 H0 Z" fill="#262626"/></svg>
<div class="t" style="left:174px;width:80px;text-align:center;top:996.9px;font-size:14px;color:#6b6b6b;font-weight:bold;letter-spacing:0px">-inf</div>
<div class="t" style="left:174px;width:80px;text-align:center;top:1027.3px;font-size:14px;color:#6b6b6b;font-weight:bold;letter-spacing:0px">-6-</div>
<div class="t" style="left:174px;width:80px;text-align:center;top:1064.3px;font-size:14px;color:#6b6b6b;font-weight:bold;letter-spacing:0px">-18-</div>
<div class="t" style="left:174px;width:80px;text-align:center;top:1100.3px;font-size:14px;color:#6b6b6b;font-weight:bold;letter-spacing:0px">-30-</div>
<div class="t" style="left:174px;width:80px;text-align:center;top:1138.3px;font-size:14px;color:#6b6b6b;font-weight:bold;letter-spacing:0px">-42-</div>
<div class="t" style="left:174px;width:80px;text-align:center;top:1175.8px;font-size:14px;color:#6b6b6b;font-weight:bold;letter-spacing:0px">-54-</div>
<div class="t" style="left:307.5px;width:80px;text-align:center;top:996.9px;font-size:14px;color:#6b6b6b;font-weight:bold;letter-spacing:0px">-inf</div>
<div class="t" style="left:307.5px;width:80px;text-align:center;top:1027.3px;font-size:14px;color:#6b6b6b;font-weight:bold;letter-spacing:0px">-6-</div>
<div class="t" style="left:307.5px;width:80px;text-align:center;top:1064.3px;font-size:14px;color:#6b6b6b;font-weight:bold;letter-spacing:0px">-18-</div>
<div class="t" style="left:307.5px;width:80px;text-align:center;top:1100.3px;font-size:14px;color:#6b6b6b;font-weight:bold;letter-spacing:0px">-30-</div>
<div class="t" style="left:307.5px;width:80px;text-align:center;top:1138.3px;font-size:14px;color:#6b6b6b;font-weight:bold;letter-spacing:0px">-42-</div>
<div class="t" style="left:307.5px;width:80px;text-align:center;top:1175.8px;font-size:14px;color:#6b6b6b;font-weight:bold;letter-spacing:0px">-54-</div>
<div class="t" style="left:441px;width:80px;text-align:center;top:996.9px;font-size:14px;color:#6b6b6b;font-weight:bold;letter-spacing:0px">-inf</div>
<div class="t" style="left:441px;width:80px;text-align:center;top:1027.3px;font-size:14px;color:#6b6b6b;font-weight:bold;letter-spacing:0px">-6-</div>
<div class="t" style="left:441px;width:80px;text-align:center;top:1064.3px;font-size:14px;color:#6b6b6b;font-weight:bold;letter-spacing:0px">-18-</div>
<div class="t" style="left:441px;width:80px;text-align:center;top:1100.3px;font-size:14px;color:#6b6b6b;font-weight:bold;letter-spacing:0px">-30-</div>
<div class="t" style="left:441px;width:80px;text-align:center;top:1138.3px;font-size:14px;color:#6b6b6b;font-weight:bold;letter-spacing:0px">-42-</div>
<div class="t" style="left:441px;width:80px;text-align:center;top:1175.8px;font-size:14px;color:#6b6b6b;font-weight:bold;letter-spacing:0px">-54-</div>
<div class="a" style="left:6px;top:1045px;width:13px;height:13px;background:#12904a;opacity:0.9"></div>
<div class="a" style="left:88px;top:1045px;width:13px;height:13px;background:#12904a;opacity:0.9"></div>
<div class="t" style="left:6.9px;top:1015.0999999999999px;font-size:14px;color:#6b6b6b;font-weight:bold;letter-spacing:0px">12</div>
<div class="t" style="left:20.5px;width:80px;text-align:right;top:1015.0999999999999px;font-size:14px;color:#6b6b6b;font-weight:bold;letter-spacing:0px">12</div>
<div class="t" style="left:6.9px;top:1032.8999999999999px;font-size:14px;color:#6b6b6b;font-weight:bold;letter-spacing:0px">6</div>
<div class="t" style="left:20.5px;width:80px;text-align:right;top:1032.8999999999999px;font-size:14px;color:#6b6b6b;font-weight:bold;letter-spacing:0px">6</div>
<div class="t" style="left:6.9px;top:1051.3px;font-size:14px;color:#6b6b6b;font-weight:bold;letter-spacing:0px">0-</div>
<div class="t" style="left:20.5px;width:80px;text-align:right;top:1051.3px;font-size:14px;color:#6b6b6b;font-weight:bold;letter-spacing:0px">-0</div>
<div class="t" style="left:6.9px;top:1069.3px;font-size:14px;color:#6b6b6b;font-weight:bold;letter-spacing:0px">6-</div>
<div class="t" style="left:20.5px;width:80px;text-align:right;top:1069.3px;font-size:14px;color:#6b6b6b;font-weight:bold;letter-spacing:0px">-6</div>
<div class="t" style="left:6.9px;top:1087.7px;font-size:14px;color:#6b6b6b;font-weight:bold;letter-spacing:0px">12-</div>
<div class="t" style="left:20.5px;width:80px;text-align:right;top:1087.7px;font-size:14px;color:#6b6b6b;font-weight:bold;letter-spacing:0px">-12</div>
<div class="t" style="left:6.9px;top:1106.3px;font-size:14px;color:#6b6b6b;font-weight:bold;letter-spacing:0px">18-</div>
<div class="t" style="left:20.5px;width:80px;text-align:right;top:1106.3px;font-size:14px;color:#6b6b6b;font-weight:bold;letter-spacing:0px">-18</div>
<div class="t" style="left:6.9px;top:1125.3px;font-size:14px;color:#6b6b6b;font-weight:bold;letter-spacing:0px">24-</div>
<div class="t" style="left:20.5px;width:80px;text-align:right;top:1125.3px;font-size:14px;color:#6b6b6b;font-weight:bold;letter-spacing:0px">-24</div>
<div class="t" style="left:6.9px;top:1143.8px;font-size:14px;color:#6b6b6b;font-weight:bold;letter-spacing:0px">30-</div>
<div class="t" style="left:20.5px;width:80px;text-align:right;top:1143.8px;font-size:14px;color:#6b6b6b;font-weight:bold;letter-spacing:0px">-30</div>
<div class="t" style="left:6.9px;top:1162.8px;font-size:14px;color:#6b6b6b;font-weight:bold;letter-spacing:0px">36-</div>
<div class="t" style="left:20.5px;width:80px;text-align:right;top:1162.8px;font-size:14px;color:#6b6b6b;font-weight:bold;letter-spacing:0px">-36</div>
<div class="t" style="left:6.9px;top:1181.0px;font-size:14px;color:#6b6b6b;font-weight:bold;letter-spacing:0px">42-</div>
<div class="t" style="left:20.5px;width:80px;text-align:right;top:1181.0px;font-size:14px;color:#6b6b6b;font-weight:bold;letter-spacing:0px">-42</div>
<div class="t" style="left:-11px;width:80px;text-align:center;top:996.9px;font-size:14px;color:#6b6b6b;font-weight:bold;letter-spacing:0px">-inf</div>
<div class="t" style="left:37px;width:80px;text-align:center;top:996.9px;font-size:14px;color:#6b6b6b;font-weight:bold;letter-spacing:0px">-inf</div>
<div class="t" style="left:-11px;width:80px;text-align:center;top:1187.0px;font-size:14px;color:#6b6b6b;font-weight:bold;letter-spacing:0px">-inf</div>
<div class="t" style="left:37px;width:80px;text-align:center;top:1187.0px;font-size:14px;color:#6b6b6b;font-weight:bold;letter-spacing:0px">-inf</div>
<div class="t" style="left:13.5px;width:80px;text-align:center;top:1027.3px;font-size:14px;color:#6b6b6b;font-weight:bold;letter-spacing:0px">-6-</div>
<div class="t" style="left:13.5px;width:80px;text-align:center;top:1064.3px;font-size:14px;color:#6b6b6b;font-weight:bold;letter-spacing:0px">-18-</div>
<div class="t" style="left:13.5px;width:80px;text-align:center;top:1100.3px;font-size:14px;color:#6b6b6b;font-weight:bold;letter-spacing:0px">-30-</div>
<div class="t" style="left:13.5px;width:80px;text-align:center;top:1138.3px;font-size:14px;color:#6b6b6b;font-weight:bold;letter-spacing:0px">-42-</div>
<div class="t" style="left:13.5px;width:80px;text-align:center;top:1175.8px;font-size:14px;color:#6b6b6b;font-weight:bold;letter-spacing:0px">-54-</div>
<div class="a" style="left:120.3px;top:1006.5px;width:2px;height:190px;background:#0a0a0a"></div>
<svg class="a" style="left:106.3px;top:1021.6px" width="32" height="74.39999999999998"><rect x="1" y="62.39999999999998" width="30" height="10" fill="#1c1c1c" opacity="0.8"/><rect x="0.5" y="0.5" width="29" height="65.39999999999998" rx="2" fill="#0e0e0e"/><rect x="2" y="2" width="26" height="30.19999999999999" rx="3" fill="url(#fad)"/><rect x="2" y="34.19999999999999" width="26" height="30.19999999999999" rx="3" fill="url(#fad2)"/><line x1="15" y1="2" x2="15" y2="64.39999999999998" stroke="#555" stroke-width="0.8"/></svg>
<div class="a" style="left:253.8px;top:1006.5px;width:2px;height:190px;background:#0a0a0a"></div>
<svg class="a" style="left:239.8px;top:1013.5px" width="32" height="74.5"><rect x="1" y="62.5" width="30" height="10" fill="#1c1c1c" opacity="0.8"/><rect x="0.5" y="0.5" width="29" height="65.5" rx="2" fill="#0e0e0e"/><rect x="2" y="2" width="26" height="30.25" rx="3" fill="url(#fad)"/><rect x="2" y="34.25" width="26" height="30.25" rx="3" fill="url(#fad2)"/><line x1="15" y1="2" x2="15" y2="64.5" stroke="#555" stroke-width="0.8"/></svg>
<div class="a" style="left:387.4px;top:1006.5px;width:2px;height:190px;background:#0a0a0a"></div>
<svg class="a" style="left:373.4px;top:1049px" width="32" height="74.59999999999991"><rect x="1" y="62.59999999999991" width="30" height="10" fill="#1c1c1c" opacity="0.8"/><rect x="0.5" y="0.5" width="29" height="65.59999999999991" rx="2" fill="#0e0e0e"/><rect x="2" y="2" width="26" height="30.299999999999955" rx="3" fill="url(#fad)"/><rect x="2" y="34.299999999999955" width="26" height="30.299999999999955" rx="3" fill="url(#fad2)"/><line x1="15" y1="2" x2="15" y2="64.59999999999991" stroke="#555" stroke-width="0.8"/></svg>
<div class="a" style="left:520.8px;top:1006.5px;width:2px;height:190px;background:#0a0a0a"></div>
<svg class="a" style="left:506.79999999999995px;top:1049px" width="32" height="74.59999999999991"><rect x="1" y="62.59999999999991" width="30" height="10" fill="#1c1c1c" opacity="0.8"/><rect x="0.5" y="0.5" width="29" height="65.59999999999991" rx="2" fill="#0e0e0e"/><rect x="2" y="2" width="26" height="30.299999999999955" rx="3" fill="url(#fad)"/><rect x="2" y="34.299999999999955" width="26" height="30.299999999999955" rx="3" fill="url(#fad2)"/><line x1="15" y1="2" x2="15" y2="64.59999999999991" stroke="#555" stroke-width="0.8"/></svg>
<svg width="0" height="0" style="position:absolute"><defs><linearGradient id="fad" x1="0" y1="0" x2="0" y2="1"><stop offset="0" stop-color="#888"/><stop offset="0.15" stop-color="#fff"/><stop offset="0.3" stop-color="#777"/><stop offset="0.7" stop-color="#444"/><stop offset="1" stop-color="#888"/></linearGradient><linearGradient id="fad2" x1="0" y1="0" x2="0" y2="1"><stop offset="0" stop-color="#666"/><stop offset="0.45" stop-color="#fff"/><stop offset="0.75" stop-color="#555"/><stop offset="1" stop-color="#222"/></linearGradient></defs></svg>
<div class="a" style="left:151.9px;top:990.4px;width:30.6px;height:31px;background:linear-gradient(#fbfbfb,#dddddd);border:1px solid #888;box-shadow:0 2px 1px rgba(0,0,0,0.25)"></div>
<div class="t" style="left:158.4px;top:997.9px;font-size:18px;color:#6b2c22;font-weight:bold">M</div>
<div class="a" style="left:151.9px;top:1032.5px;width:30.6px;height:31px;background:linear-gradient(#fbfbfb,#dddddd);border:1px solid #888;box-shadow:0 2px 1px rgba(0,0,0,0.25)"></div>
<div class="t" style="left:160.4px;top:1040.0px;font-size:18px;color:#5b6232;font-weight:bold">S</div>
<div class="a" style="left:285px;top:990.4px;width:30.6px;height:31px;background:linear-gradient(#fbfbfb,#dddddd);border:1px solid #888;box-shadow:0 2px 1px rgba(0,0,0,0.25)"></div>
<div class="t" style="left:291.5px;top:997.9px;font-size:18px;color:#6b2c22;font-weight:bold">M</div>
<div class="a" style="left:285px;top:1032.5px;width:30.6px;height:31px;background:linear-gradient(#fbfbfb,#dddddd);border:1px solid #888;box-shadow:0 2px 1px rgba(0,0,0,0.25)"></div>
<div class="t" style="left:293.5px;top:1040.0px;font-size:18px;color:#5b6232;font-weight:bold">S</div>
<div class="a" style="left:418.5px;top:990.4px;width:30.6px;height:31px;background:linear-gradient(#fbfbfb,#dddddd);border:1px solid #888;box-shadow:0 2px 1px rgba(0,0,0,0.25)"></div>
<svg class="a" style="left:419.5px;top:991.4px" width="29" height="29"><path d="M0 0 H8 L0 8Z M28.6 20 V29 H20Z" fill="#e04444"/></svg>
<div class="t" style="left:425.0px;top:997.9px;font-size:18px;color:#6b2c22;font-weight:bold">M</div>
<div class="a" style="left:418.5px;top:1032.5px;width:30.6px;height:31px;background:linear-gradient(#fbfbfb,#dddddd);border:1px solid #888;box-shadow:0 2px 1px rgba(0,0,0,0.25)"></div>
<svg class="a" style="left:419.5px;top:1033.5px" width="29" height="29"><path d="M0 0 H8 L0 8Z M28.6 20 V29 H20Z" fill="#e04444"/></svg>
<div class="t" style="left:427.0px;top:1040.0px;font-size:18px;color:#5b6232;font-weight:bold">S</div>
<div class="a" style="left:552px;top:990.4px;width:30.6px;height:31px;background:linear-gradient(#fbfbfb,#dddddd);border:1px solid #888;box-shadow:0 2px 1px rgba(0,0,0,0.25)"></div>
<svg class="a" style="left:553px;top:991.4px" width="29" height="29"><path d="M0 0 H8 L0 8Z M28.6 20 V29 H20Z" fill="#e04444"/></svg>
<div class="t" style="left:558.5px;top:997.9px;font-size:18px;color:#6b2c22;font-weight:bold">M</div>
<div class="a" style="left:552px;top:1032.5px;width:30.6px;height:31px;background:linear-gradient(#fbfbfb,#dddddd);border:1px solid #888;box-shadow:0 2px 1px rgba(0,0,0,0.25)"></div>
<svg class="a" style="left:553px;top:1033.5px" width="29" height="29"><path d="M0 0 H8 L0 8Z M28.6 20 V29 H20Z" fill="#e04444"/></svg>
<div class="t" style="left:560.5px;top:1040.0px;font-size:18px;color:#5b6232;font-weight:bold">S</div>
<svg class="a" style="left:287.7px;top:1111px" width="28" height="60"><path d="M0 0 H27 V30 A13.5 13.5 0 0 1 0 30Z" fill="#8f9a9a" opacity="0.75"/><text x="13.5" y="16" font-family="Liberation Sans" font-size="13" font-weight="bold" fill="#d8e0e0" text-anchor="middle">IN</text><circle cx="13.5" cy="30" r="9" fill="none" stroke="#d0d8d8" stroke-width="1.3"/><path d="M8 27 H19 L13.5 35Z" fill="#d0d8d8"/><path d="M15 44 L13 52 M8 49 L12 56 L18 49" stroke="#8f9a9a" stroke-width="3" fill="none"/></svg>
<svg class="a" style="left:421.3px;top:1111px" width="28" height="60"><path d="M0 0 H27 V30 A13.5 13.5 0 0 1 0 30Z" fill="#8f9a9a" opacity="0.75"/><text x="13.5" y="16" font-family="Liberation Sans" font-size="13" font-weight="bold" fill="#d8e0e0" text-anchor="middle">IN</text><circle cx="13.5" cy="30" r="9" fill="none" stroke="#d0d8d8" stroke-width="1.3"/><path d="M8 27 H19 L13.5 35Z" fill="#d0d8d8"/><path d="M15 44 L13 52 M8 49 L12 56 L18 49" stroke="#8f9a9a" stroke-width="3" fill="none"/></svg>
<svg class="a" style="left:554.6px;top:1111px" width="28" height="60"><path d="M0 0 H27 V30 A13.5 13.5 0 0 1 0 30Z" fill="#8f9a9a" opacity="0.75"/><text x="13.5" y="16" font-family="Liberation Sans" font-size="13" font-weight="bold" fill="#d8e0e0" text-anchor="middle">IN</text><circle cx="13.5" cy="30" r="9" fill="none" stroke="#d0d8d8" stroke-width="1.3"/><path d="M8 27 H19 L13.5 35Z" fill="#d0d8d8"/><path d="M15 44 L13 52 M8 49 L12 56 L18 49" stroke="#8f9a9a" stroke-width="3" fill="none"/></svg>
<svg class="a" style="left:374.6px;top:993px" width="20" height="15"><path d="M0 13 L10 2 H16 L6 13Z" fill="#c01818"/></svg>
<svg class="a" style="left:394.6px;top:1195px" width="20" height="15"><path d="M0 13 L10 2 H16 L6 13Z" fill="#c01818"/></svg>
<svg class="a" style="left:508px;top:993px" width="20" height="15"><path d="M0 13 L10 2 H16 L6 13Z" fill="#c01818"/></svg>
<svg class="a" style="left:528px;top:1195px" width="20" height="15"><path d="M0 13 L10 2 H16 L6 13Z" fill="#c01818"/></svg>
<svg class="a" style="left:137px;top:1172px;overflow:visible" width="40" height="42"><circle cx="19.5" cy="22" r="18" fill="rgba(0,0,0,0.25)"/><circle cx="19.5" cy="19.7" r="18" fill="#1c1c1c"/><circle cx="19.5" cy="19.7" r="16" fill="#5a5a5a"/><g transform="translate(19.5,19.7)" fill="#b0b0b0"><circle r="7"/><rect x="-2" y="-11" width="4" height="6" transform="rotate(0)"/><rect x="-2" y="-11" width="4" height="6" transform="rotate(45)"/><rect x="-2" y="-11" width="4" height="6" transform="rotate(90)"/><rect x="-2" y="-11" width="4" height="6" transform="rotate(135)"/><rect x="-2" y="-11" width="4" height="6" transform="rotate(180)"/><rect x="-2" y="-11" width="4" height="6" transform="rotate(225)"/><rect x="-2" y="-11" width="4" height="6" transform="rotate(270)"/><rect x="-2" y="-11" width="4" height="6" transform="rotate(315)"/><circle r="3" fill="#5a5a5a"/></g></svg>
<svg class="a" style="left:270.5px;top:1172.7px;overflow:visible" width="38" height="40"><circle cx="19" cy="21" r="18" fill="rgba(0,0,0,0.25)"/><circle cx="19" cy="19" r="18.2" fill="#1e1e1e"/><circle cx="19" cy="19" r="16" fill="url(#rg)"/><circle cx="19" cy="19" r="7.14" fill="none" stroke="#e8c9c0" stroke-width="2.7"/></svg>
<svg class="a" style="left:403.9px;top:1172.7px;overflow:visible" width="38" height="40"><circle cx="19" cy="21" r="18" fill="rgba(0,0,0,0.25)"/><circle cx="19" cy="19" r="18.2" fill="#1e1e1e"/><circle cx="19" cy="19" r="16" fill="url(#rg)"/><circle cx="19" cy="19" r="7.14" fill="none" stroke="#e8c9c0" stroke-width="2.7"/></svg>
<svg class="a" style="left:537px;top:1172.7px;overflow:visible" width="38" height="40"><circle cx="19" cy="21" r="18" fill="rgba(0,0,0,0.25)"/><circle cx="19" cy="19" r="18.2" fill="#1e1e1e"/><circle cx="19" cy="19" r="16" fill="url(#rg)"/><circle cx="19" cy="19" r="7.14" fill="none" stroke="#e8c9c0" stroke-width="2.7"/></svg>
<div class="a" style="left:0px;top:1252px;width:2048px;height:21px;background:#484848"></div>
<div class="a" style="left:0px;top:1252px;width:5px;height:21px;background:#5a5a5a"></div>
<div class="a" style="left:5px;top:1252px;width:93px;height:21px;background:#dfe8e8"></div>
<div class="a" style="left:101px;top:1252px;width:139.5px;height:21px;background:#a6b2b2"></div>
<div class="a" style="left:243px;top:1252px;width:172px;height:21px;background:#a6b2b2"></div>
<svg class="a" style="left:14px;top:1256px" width="15" height="15"><rect x="1" y="1" width="13" height="13" fill="none" stroke="#333" stroke-width="1.3"/><path d="M4 4 L11 11 M11 4 L4 11" stroke="#333" stroke-width="1.2"/></svg>
<div class="t" style="left:36px;top:1254px;font-size:18px;color:#2a2a2a;font-weight:bold">Mixer</div>
<svg class="a" style="left:110px;top:1256px" width="15" height="15"><rect x="1" y="1" width="13" height="13" fill="none" stroke="#333" stroke-width="1.3"/><path d="M4 4 L11 11 M11 4 L4 11" stroke="#333" stroke-width="1.2"/></svg>
<div class="t" style="left:132px;top:1254px;font-size:18px;color:#2a2a2a;">FX Browser</div>
<svg class="a" style="left:252px;top:1256px" width="15" height="15"><rect x="1" y="1" width="13" height="13" fill="none" stroke="#333" stroke-width="1.3"/><path d="M4 4 L11 11 M11 4 L4 11" stroke="#333" stroke-width="1.2"/></svg>
<div class="t" style="left:274px;top:1254px;font-size:18px;color:#2a2a2a;">Grouping Matrix</div></body></html>
